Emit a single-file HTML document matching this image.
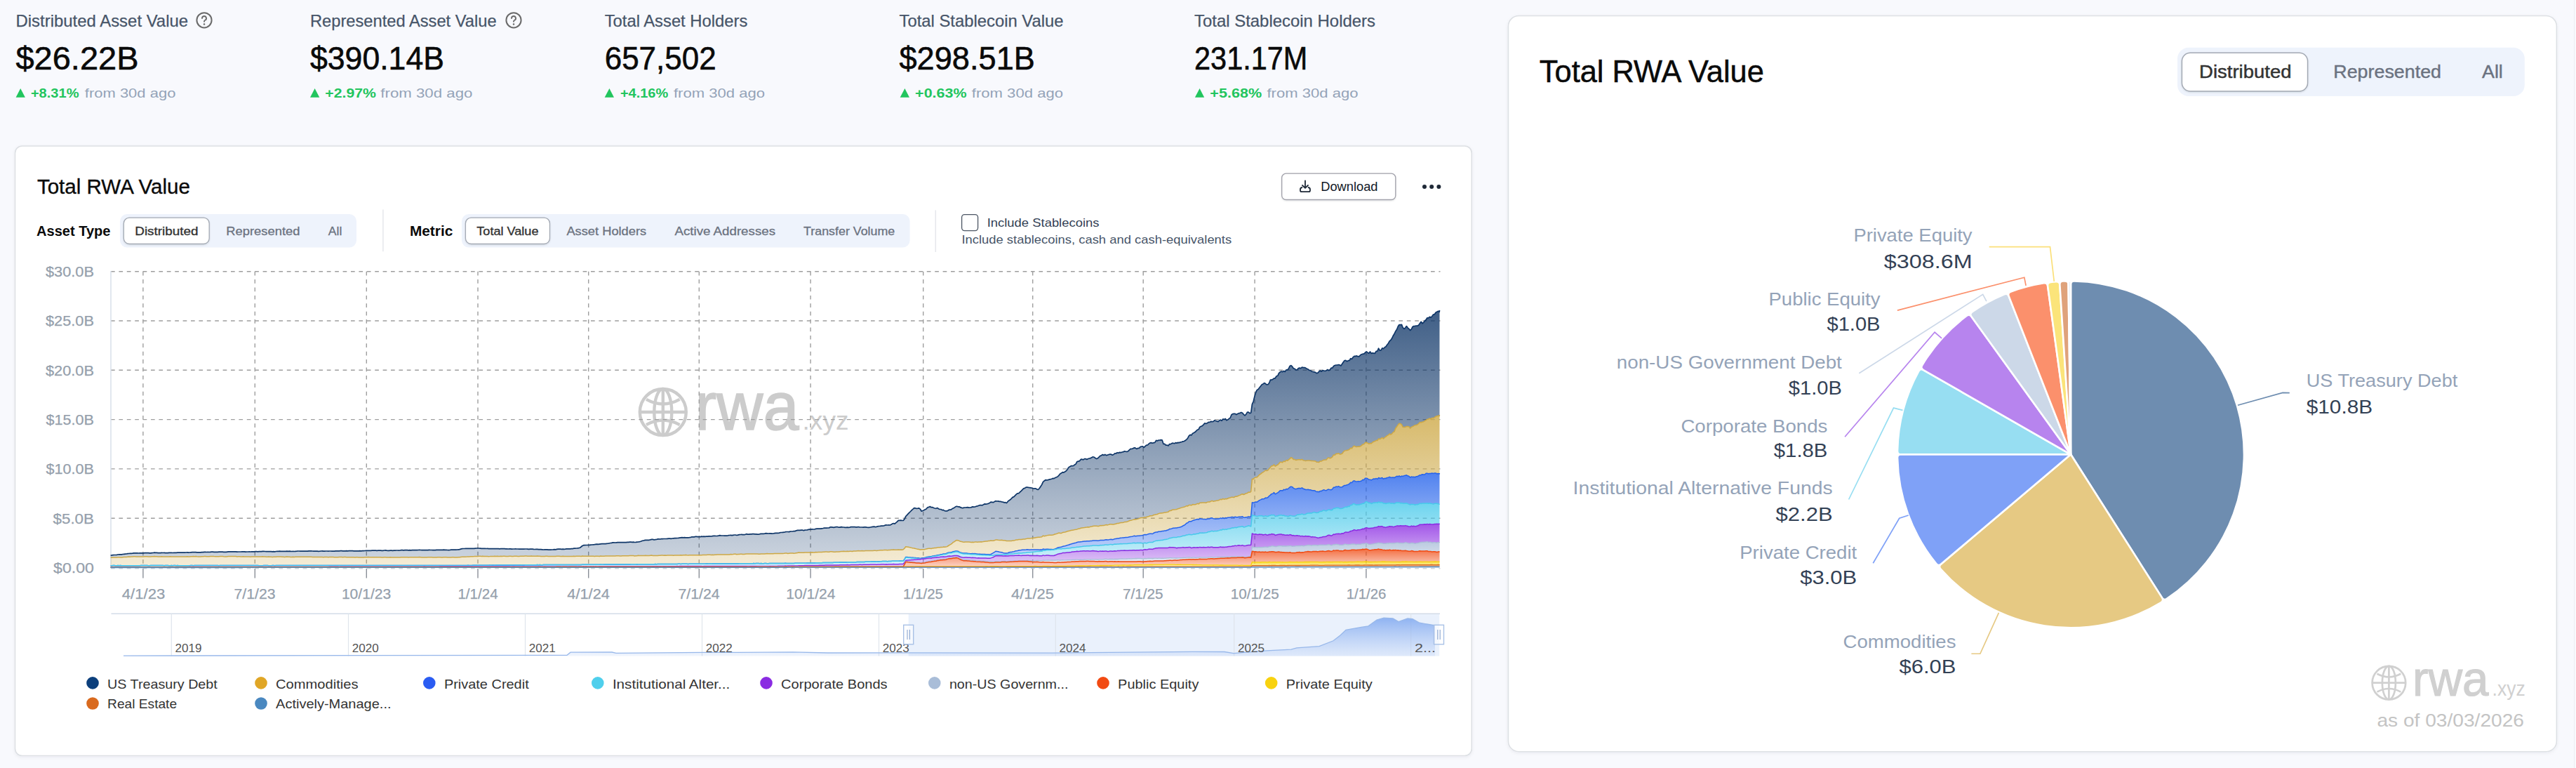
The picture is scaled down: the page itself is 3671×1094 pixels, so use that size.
<!DOCTYPE html>
<html><head><meta charset="utf-8"><title>RWA</title>
<style>html,body{margin:0;padding:0;background:#f8f9fd;overflow:hidden;}
svg{display:block;font-family:"Liberation Sans", sans-serif;}</style></head>
<body><svg width="3671" height="1094" viewBox="0 0 3671 1094">
<rect x="0" y="0" width="3671" height="1094" fill="#f8f9fd"/>
<text x="22.5" y="37.7" font-size="24" fill="#475569" text-anchor="start" font-weight="normal" textLength="245.6" lengthAdjust="spacingAndGlyphs" stroke="#475569" stroke-width="0.25">Distributed Asset Value</text>
<text x="22.5" y="98.6" font-size="46" fill="#0a0a0a" text-anchor="start" font-weight="normal" textLength="175.0" lengthAdjust="spacingAndGlyphs" stroke="#0a0a0a" stroke-width="0.6">$26.22B</text>
<path d="M22.6,138.8 L35.9,138.8 L29.2,125.9 Z" fill="#22c55e"/>
<text x="43.9" y="138.8" font-size="18.5" fill="#22c55e" text-anchor="start" font-weight="bold" textLength="68.6" lengthAdjust="spacingAndGlyphs" >+8.31%</text>
<text x="120.8" y="138.8" font-size="18.5" fill="#94a3b8" text-anchor="start" font-weight="normal" textLength="129.6" lengthAdjust="spacingAndGlyphs" >from 30d ago</text>
<circle cx="291.0" cy="28.8" r="10.6" fill="none" stroke="#6b6b6b" stroke-width="2"/>
<path d="M288.0,26.0 a3.0,3.0 0 1 1 4.2,2.75 c-0.9,0.5 -1.2,1.1 -1.2,2.0" fill="none" stroke="#6b6b6b" stroke-width="1.9" stroke-linecap="round"/>
<circle cx="291.0" cy="34.4" r="1.25" fill="#6b6b6b"/>
<text x="442.0" y="37.7" font-size="24" fill="#475569" text-anchor="start" font-weight="normal" textLength="265.6" lengthAdjust="spacingAndGlyphs" stroke="#475569" stroke-width="0.25">Represented Asset Value</text>
<text x="442.0" y="98.6" font-size="46" fill="#0a0a0a" text-anchor="start" font-weight="normal" textLength="191.0" lengthAdjust="spacingAndGlyphs" stroke="#0a0a0a" stroke-width="0.6">$390.14B</text>
<path d="M442.0,138.8 L455.3,138.8 L448.6,125.9 Z" fill="#22c55e"/>
<text x="463.3" y="138.8" font-size="18.5" fill="#22c55e" text-anchor="start" font-weight="bold" textLength="72.6" lengthAdjust="spacingAndGlyphs" >+2.97%</text>
<text x="542.3" y="138.8" font-size="18.5" fill="#94a3b8" text-anchor="start" font-weight="normal" textLength="131.1" lengthAdjust="spacingAndGlyphs" >from 30d ago</text>
<circle cx="732" cy="28.8" r="10.6" fill="none" stroke="#6b6b6b" stroke-width="2"/>
<path d="M729.0,26.0 a3.0,3.0 0 1 1 4.2,2.75 c-0.9,0.5 -1.2,1.1 -1.2,2.0" fill="none" stroke="#6b6b6b" stroke-width="1.9" stroke-linecap="round"/>
<circle cx="732" cy="34.4" r="1.25" fill="#6b6b6b"/>
<text x="861.7" y="37.7" font-size="24" fill="#475569" text-anchor="start" font-weight="normal" textLength="203.6" lengthAdjust="spacingAndGlyphs" stroke="#475569" stroke-width="0.25">Total Asset Holders</text>
<text x="861.7" y="98.6" font-size="46" fill="#0a0a0a" text-anchor="start" font-weight="normal" textLength="159.0" lengthAdjust="spacingAndGlyphs" stroke="#0a0a0a" stroke-width="0.6">657,502</text>
<path d="M861.7,138.8 L875.0,138.8 L868.4,125.9 Z" fill="#22c55e"/>
<text x="883.9" y="138.8" font-size="18.5" fill="#22c55e" text-anchor="start" font-weight="bold" textLength="68.3" lengthAdjust="spacingAndGlyphs" >+4.16%</text>
<text x="959.9" y="138.8" font-size="18.5" fill="#94a3b8" text-anchor="start" font-weight="normal" textLength="130.2" lengthAdjust="spacingAndGlyphs" >from 30d ago</text>
<text x="1281.5" y="37.7" font-size="24" fill="#475569" text-anchor="start" font-weight="normal" textLength="234.0" lengthAdjust="spacingAndGlyphs" stroke="#475569" stroke-width="0.25">Total Stablecoin Value</text>
<text x="1281.5" y="98.6" font-size="46" fill="#0a0a0a" text-anchor="start" font-weight="normal" textLength="193.4" lengthAdjust="spacingAndGlyphs" stroke="#0a0a0a" stroke-width="0.6">$298.51B</text>
<path d="M1282.7,138.8 L1296.0,138.8 L1289.4,125.9 Z" fill="#22c55e"/>
<text x="1304.1" y="138.8" font-size="18.5" fill="#22c55e" text-anchor="start" font-weight="bold" textLength="73.4" lengthAdjust="spacingAndGlyphs" >+0.63%</text>
<text x="1384.8" y="138.8" font-size="18.5" fill="#94a3b8" text-anchor="start" font-weight="normal" textLength="130.2" lengthAdjust="spacingAndGlyphs" >from 30d ago</text>
<text x="1702.0" y="37.7" font-size="24" fill="#475569" text-anchor="start" font-weight="normal" textLength="258.0" lengthAdjust="spacingAndGlyphs" stroke="#475569" stroke-width="0.25">Total Stablecoin Holders</text>
<text x="1702.0" y="98.6" font-size="46" fill="#0a0a0a" text-anchor="start" font-weight="normal" textLength="161.4" lengthAdjust="spacingAndGlyphs" stroke="#0a0a0a" stroke-width="0.6">231.17M</text>
<path d="M1702.9,138.8 L1716.2,138.8 L1709.6,125.9 Z" fill="#22c55e"/>
<text x="1724.3" y="138.8" font-size="18.5" fill="#22c55e" text-anchor="start" font-weight="bold" textLength="73.8" lengthAdjust="spacingAndGlyphs" >+5.68%</text>
<text x="1805.4" y="138.8" font-size="18.5" fill="#94a3b8" text-anchor="start" font-weight="normal" textLength="130.2" lengthAdjust="spacingAndGlyphs" >from 30d ago</text>
<defs><filter id="csh" x="-5%" y="-5%" width="110%" height="110%"><feDropShadow dx="0" dy="1.5" stdDeviation="2" flood-color="#1e293b" flood-opacity="0.06"/></filter><filter id="bsh" x="-10%" y="-20%" width="120%" height="150%"><feDropShadow dx="0" dy="1" stdDeviation="1.2" flood-color="#1e293b" flood-opacity="0.12"/></filter></defs>
<rect x="21.5" y="208" width="2075.8" height="868.5" rx="10" fill="#ffffff" stroke="#dde0e4" stroke-width="1.6" filter="url(#csh)"/>
<rect x="2149.4" y="22.5" width="1494" height="1048.2" rx="15" fill="#ffffff" stroke="#dde0e4" stroke-width="1.6" filter="url(#csh)"/>
<line x1="3668.5" y1="0" x2="3668.5" y2="1094" stroke="#eceef2" stroke-width="1"/>
<text x="52.9" y="275.8" font-size="29.5" fill="#0a0a0a" text-anchor="start" font-weight="normal" textLength="218.0" lengthAdjust="spacingAndGlyphs" stroke="#0a0a0a" stroke-width="0.35">Total RWA Value</text>
<rect x="1826.7" y="247.2" width="162.1" height="37.3" rx="6" fill="#ffffff" stroke="#a1a1aa" stroke-width="1.3" filter="url(#bsh)"/>
<path d="M1860,257.4 L1860,267.6 M1856,264.0 L1860,267.9 L1864,264.0" fill="none" stroke="#1f2937" stroke-width="1.8" stroke-linecap="round" stroke-linejoin="round"/>
<path d="M1855.4,267.0 Q1853.0,267.5 1853.0,269.9 L1853.0,271.2 Q1853.0,273.2 1855.0,273.2 L1865.0,273.2 Q1867.0,273.2 1867.0,271.2 L1867.0,269.9 Q1867.0,267.5 1864.6,267.0" fill="none" stroke="#1f2937" stroke-width="1.8" stroke-linecap="round" stroke-linejoin="round"/>
<text x="1882.2" y="271.9" font-size="18" fill="#111827" text-anchor="start" font-weight="normal" textLength="81.3" lengthAdjust="spacingAndGlyphs" >Download</text>
<circle cx="2030.0" cy="266.1" r="3" fill="#1f2937"/>
<circle cx="2040.2" cy="266.1" r="3" fill="#1f2937"/>
<circle cx="2050.4" cy="266.1" r="3" fill="#1f2937"/>
<text x="52.0" y="335.7" font-size="20" fill="#0a0a0a" text-anchor="start" font-weight="bold" textLength="105.5" lengthAdjust="spacingAndGlyphs" >Asset Type</text>
<rect x="171" y="305" width="337" height="47.5" rx="10" fill="#eef3fc"/>
<rect x="176.3" y="310.2" width="121.9" height="37.3" rx="8" fill="#ffffff" stroke="#a3a9b3" stroke-width="1.3" filter="url(#bsh)"/>
<text x="192.3" y="334.6" font-size="17.2" fill="#333333" text-anchor="start" font-weight="normal" textLength="90.1" lengthAdjust="spacingAndGlyphs" stroke="#333333" stroke-width="0.35">Distributed</text>
<text x="322.3" y="334.6" font-size="17.2" fill="#6b7280" text-anchor="start" font-weight="normal" textLength="105.1" lengthAdjust="spacingAndGlyphs" stroke="#6b7280" stroke-width="0.3">Represented</text>
<text x="467.8" y="334.6" font-size="17.2" fill="#6b7280" text-anchor="start" font-weight="normal" textLength="19.5" lengthAdjust="spacingAndGlyphs" stroke="#6b7280" stroke-width="0.3">All</text>
<line x1="545.9" y1="298.5" x2="545.9" y2="358.3" stroke="#e5e7eb" stroke-width="1.5"/>
<text x="583.9" y="335.7" font-size="20" fill="#0a0a0a" text-anchor="start" font-weight="bold" textLength="61.4" lengthAdjust="spacingAndGlyphs" >Metric</text>
<rect x="658" y="305" width="638.6" height="47.5" rx="10" fill="#eef3fc"/>
<rect x="663.4" y="310.2" width="120.1" height="37.3" rx="8" fill="#ffffff" stroke="#a3a9b3" stroke-width="1.3" filter="url(#bsh)"/>
<text x="679.3" y="334.6" font-size="17.2" fill="#333333" text-anchor="start" font-weight="normal" textLength="88.2" lengthAdjust="spacingAndGlyphs" stroke="#333333" stroke-width="0.35">Total Value</text>
<text x="807.4" y="334.6" font-size="17.2" fill="#6b7280" text-anchor="start" font-weight="normal" textLength="113.8" lengthAdjust="spacingAndGlyphs" stroke="#6b7280" stroke-width="0.3">Asset Holders</text>
<text x="961.5" y="334.6" font-size="17.2" fill="#6b7280" text-anchor="start" font-weight="normal" textLength="143.5" lengthAdjust="spacingAndGlyphs" stroke="#6b7280" stroke-width="0.3">Active Addresses</text>
<text x="1145.1" y="334.6" font-size="17.2" fill="#6b7280" text-anchor="start" font-weight="normal" textLength="130.2" lengthAdjust="spacingAndGlyphs" stroke="#6b7280" stroke-width="0.3">Transfer Volume</text>
<line x1="1333.3" y1="299.4" x2="1333.3" y2="359" stroke="#e5e7eb" stroke-width="1.5"/>
<rect x="1370.6" y="305.6" width="23" height="23" rx="4" fill="#ffffff" stroke="#4b5563" stroke-width="1.3"/>
<text x="1406.7" y="322.6" font-size="17" fill="#334155" text-anchor="start" font-weight="normal" textLength="159.8" lengthAdjust="spacingAndGlyphs" >Include Stablecoins</text>
<text x="1370.4" y="346.7" font-size="17" fill="#475569" text-anchor="start" font-weight="normal" textLength="384.8" lengthAdjust="spacingAndGlyphs" >Include stablecoins, cash and cash-equivalents</text>
<defs><linearGradient id="g0" x1="0" y1="0" x2="0" y2="1"><stop offset="0" stop-color="#0f3668" stop-opacity="0.8"/><stop offset="1" stop-color="#0f3668" stop-opacity="0.22"/></linearGradient><linearGradient id="g1" x1="0" y1="0" x2="0" y2="1"><stop offset="0" stop-color="#cda845" stop-opacity="0.8"/><stop offset="1" stop-color="#cda845" stop-opacity="0.22"/></linearGradient><linearGradient id="g2" x1="0" y1="0" x2="0" y2="1"><stop offset="0" stop-color="#2563eb" stop-opacity="0.8"/><stop offset="1" stop-color="#2563eb" stop-opacity="0.22"/></linearGradient><linearGradient id="g3" x1="0" y1="0" x2="0" y2="1"><stop offset="0" stop-color="#47c9ea" stop-opacity="0.8"/><stop offset="1" stop-color="#47c9ea" stop-opacity="0.22"/></linearGradient><linearGradient id="g4" x1="0" y1="0" x2="0" y2="1"><stop offset="0" stop-color="#8a2be2" stop-opacity="0.8"/><stop offset="1" stop-color="#8a2be2" stop-opacity="0.22"/></linearGradient><linearGradient id="g5" x1="0" y1="0" x2="0" y2="1"><stop offset="0" stop-color="#a9bdd8" stop-opacity="0.8"/><stop offset="1" stop-color="#a9bdd8" stop-opacity="0.22"/></linearGradient><linearGradient id="g6" x1="0" y1="0" x2="0" y2="1"><stop offset="0" stop-color="#f04a12" stop-opacity="0.8"/><stop offset="1" stop-color="#f04a12" stop-opacity="0.22"/></linearGradient><linearGradient id="g7" x1="0" y1="0" x2="0" y2="1"><stop offset="0" stop-color="#f6d20f" stop-opacity="0.8"/><stop offset="1" stop-color="#f6d20f" stop-opacity="0.22"/></linearGradient><linearGradient id="g8" x1="0" y1="0" x2="0" y2="1"><stop offset="0" stop-color="#d96a1e" stop-opacity="0.8"/><stop offset="1" stop-color="#d96a1e" stop-opacity="0.22"/></linearGradient><linearGradient id="g9" x1="0" y1="0" x2="0" y2="1"><stop offset="0" stop-color="#4a88c0" stop-opacity="0.8"/><stop offset="1" stop-color="#4a88c0" stop-opacity="0.22"/></linearGradient><linearGradient id="navg" x1="0" y1="0" x2="0" y2="1"><stop offset="0" stop-color="#7fa8f0" stop-opacity="0.85"/><stop offset="1" stop-color="#9dbcf2" stop-opacity="0.15"/></linearGradient></defs>
<g fill="none" stroke="#cccccc" stroke-width="4.40"><circle cx="944.8" cy="587.0" r="33.0"/><ellipse cx="944.8" cy="587.0" rx="12.5" ry="33.0"/><line x1="944.8" y1="554.0" x2="944.8" y2="620.0"/><line x1="911.8" y1="587.0" x2="977.8" y2="587.0"/><path d="M921.0,568.9 Q944.8,582.0 968.6,568.9"/><path d="M921.0,605.1 Q944.8,592.0 968.6,605.1"/></g>
<text x="990.5" y="611.7" font-size="96" fill="#cccccc" text-anchor="start" font-weight="normal" textLength="148.0" lengthAdjust="spacingAndGlyphs" stroke="#cccccc" stroke-width="1.6">rwa</text>
<text x="1143.5" y="611.7" font-size="37" fill="#cccccc" text-anchor="start" font-weight="normal" textLength="66.0" lengthAdjust="spacingAndGlyphs" >.xyz</text>
<line x1="158" y1="809.7" x2="2052.5" y2="809.7" stroke="#cfd3d8" stroke-width="1.4" stroke-dasharray="5.7,5.7"/>
<line x1="158" y1="738.2" x2="2052.5" y2="738.2" stroke="#9e9e9e" stroke-width="1.4" stroke-dasharray="5.7,5.7"/>
<line x1="158" y1="667.9" x2="2052.5" y2="667.9" stroke="#9e9e9e" stroke-width="1.4" stroke-dasharray="5.7,5.7"/>
<line x1="158" y1="597.6" x2="2052.5" y2="597.6" stroke="#9e9e9e" stroke-width="1.4" stroke-dasharray="5.7,5.7"/>
<line x1="158" y1="527.3" x2="2052.5" y2="527.3" stroke="#9e9e9e" stroke-width="1.4" stroke-dasharray="5.7,5.7"/>
<line x1="158" y1="457.0" x2="2052.5" y2="457.0" stroke="#9e9e9e" stroke-width="1.4" stroke-dasharray="5.7,5.7"/>
<line x1="158" y1="386.7" x2="2052.5" y2="386.7" stroke="#9e9e9e" stroke-width="1.4" stroke-dasharray="5.7,5.7"/>
<line x1="203.9" y1="386.7" x2="203.9" y2="809" stroke="#9e9e9e" stroke-width="1.4" stroke-dasharray="5.7,5.7"/>
<line x1="203.9" y1="810" x2="203.9" y2="823.5" stroke="#8a8f98" stroke-width="1.4"/>
<line x1="363.3" y1="386.7" x2="363.3" y2="809" stroke="#9e9e9e" stroke-width="1.4" stroke-dasharray="5.7,5.7"/>
<line x1="363.3" y1="810" x2="363.3" y2="823.5" stroke="#8a8f98" stroke-width="1.4"/>
<line x1="522.3" y1="386.7" x2="522.3" y2="809" stroke="#9e9e9e" stroke-width="1.4" stroke-dasharray="5.7,5.7"/>
<line x1="522.3" y1="810" x2="522.3" y2="823.5" stroke="#8a8f98" stroke-width="1.4"/>
<line x1="681.0" y1="386.7" x2="681.0" y2="809" stroke="#9e9e9e" stroke-width="1.4" stroke-dasharray="5.7,5.7"/>
<line x1="681.0" y1="810" x2="681.0" y2="823.5" stroke="#8a8f98" stroke-width="1.4"/>
<line x1="838.7" y1="386.7" x2="838.7" y2="809" stroke="#9e9e9e" stroke-width="1.4" stroke-dasharray="5.7,5.7"/>
<line x1="838.7" y1="810" x2="838.7" y2="823.5" stroke="#8a8f98" stroke-width="1.4"/>
<line x1="996.3" y1="386.7" x2="996.3" y2="809" stroke="#9e9e9e" stroke-width="1.4" stroke-dasharray="5.7,5.7"/>
<line x1="996.3" y1="810" x2="996.3" y2="823.5" stroke="#8a8f98" stroke-width="1.4"/>
<line x1="1155.1" y1="386.7" x2="1155.1" y2="809" stroke="#9e9e9e" stroke-width="1.4" stroke-dasharray="5.7,5.7"/>
<line x1="1155.1" y1="810" x2="1155.1" y2="823.5" stroke="#8a8f98" stroke-width="1.4"/>
<line x1="1315.7" y1="386.7" x2="1315.7" y2="809" stroke="#9e9e9e" stroke-width="1.4" stroke-dasharray="5.7,5.7"/>
<line x1="1315.7" y1="810" x2="1315.7" y2="823.5" stroke="#8a8f98" stroke-width="1.4"/>
<line x1="1471.7" y1="386.7" x2="1471.7" y2="809" stroke="#9e9e9e" stroke-width="1.4" stroke-dasharray="5.7,5.7"/>
<line x1="1471.7" y1="810" x2="1471.7" y2="823.5" stroke="#8a8f98" stroke-width="1.4"/>
<line x1="1629.2" y1="386.7" x2="1629.2" y2="809" stroke="#9e9e9e" stroke-width="1.4" stroke-dasharray="5.7,5.7"/>
<line x1="1629.2" y1="810" x2="1629.2" y2="823.5" stroke="#8a8f98" stroke-width="1.4"/>
<line x1="1788.1" y1="386.7" x2="1788.1" y2="809" stroke="#9e9e9e" stroke-width="1.4" stroke-dasharray="5.7,5.7"/>
<line x1="1788.1" y1="810" x2="1788.1" y2="823.5" stroke="#8a8f98" stroke-width="1.4"/>
<line x1="1946.9" y1="386.7" x2="1946.9" y2="809" stroke="#9e9e9e" stroke-width="1.4" stroke-dasharray="5.7,5.7"/>
<line x1="1946.9" y1="810" x2="1946.9" y2="823.5" stroke="#8a8f98" stroke-width="1.4"/>
<line x1="158" y1="386" x2="158" y2="809" stroke="#d5dde8" stroke-width="1.4"/>
<path d="M157.7,791.1l1.7-.2 1.8-.3 1.7-.1 1.7,0 1.8-.2 1.7-.3 1.7-.1 1.8,0 1.7,0 1.7-.4 1.8-.2 1.7-.2 1.7-.1 1.8-.3 1.7-.2 1.7-.1 1.8-.1 1.7-.2 1.7-.3 1.7,0 1.8,.1 1.7,0 1.7,.1 1.8-.1 1.7,0 1.7,0 1.8-.1 1.7-.1 1.7-.1 1.8,.1 1.7,0 1.7,.1 1.8,0 1.7-.2 1.7-.1 1.8-.3 1.7,.1 1.7,.1 1.8,.2 1.7-.1 1.7,.2 1.8-.3 1.7,.1 1.7-.1 1.8,.2 1.7-.1 1.7,.1 1.8-.3 1.7,0 1.7,0 1.8,.2 1.7-.2 1.7,0 1.7,0 1.8-.1 1.7,0 1.7,0 1.8,0 1.7,0 1.7,0 1.8,0 1.7-.2 1.7-.1 1.8,.2 1.7-.1 1.7-.2 1.8-.1 1.7,0 1.7,0 1.8,0 1.7,.2 1.7,0 1.8,0 1.7,0 1.7-.2 1.8-.1 1.7-.2 1.7,0 1.8,.1 1.7-.1 1.7,.1 1.8-.2 1.7-.2 1.7,0 1.8,.2 1.7,0 1.7,.1 1.8-.1 1.7-.1 1.7-.1 1.7,0 1.8,0 1.7,.2 1.7,.1 1.8-.1 1.7-.2 1.7-.2 1.8,0 1.7,0 1.7,0 1.8,0 1.7-.1 1.7,0 1.8,.3 1.7-.1 1.7,0 1.8,0 1.7-.1 1.7,0 1.8,0 1.7,.2 1.7-.1 1.8,0 1.7-.1 1.7,.1 1.8-.2 1.7,0 1.7,0 1.8-.1 1.7,0 1.7,.1 1.8-.1 1.7,0 1.7,0 1.7-.4 1.8,.1 1.7,.1 1.7,.2 1.8-.1 1.7-.1 1.7,.1 1.8,.1 1.7,.2 1.7-.2 1.8,.1 1.7-.3 1.7-.1 1.8-.1 1.7-.1 1.7,.1 1.8,.1 1.7,0 1.7,0 1.8-.1 1.7-.1 1.7,.2 1.8-.2 1.7,.1 1.7,.2 1.8-.2 1.7,.2 1.7-.2 1.8-.1 1.7-.2 1.7,0 1.8,.1 1.7,.1 1.7-.1 1.8,0 1.7,0 1.7,0 1.7,.1 1.8-.4 1.7,.1 1.7,0 1.8,.1 1.7,.2 1.7-.1 1.8,.1 1.7,0 1.7,.1 1.8-.1 1.7-.2 1.7-.1 1.8,.3 1.7-.1 1.7-.1 1.8,0 1.7,.1 1.7-.1 1.8,0 1.7,.1 1.7-.1 1.8,.1 1.7-.2 1.7-.1 1.8,.1 1.7-.1 1.7-.1 1.8,0 1.7,.2 1.7-.1 1.8,0 1.7-.1 1.7,.1 1.8-.1 1.7-.1 1.7,.1 1.7,0 1.8,.1 1.7,0 1.7,0 1.8,.1 1.7-.1 1.7-.1 1.8,.1 1.7-.2 1.7,.1 1.8-.2 1.7-.2 1.7,.1 1.8,0 1.7-.1 1.7,0 1.8-.1 1.7,0 1.7,0 1.8-.1 1.7,.2 1.7-.1 1.8-.1 1.7,.1 1.7,.1 1.8,0 1.7-.3 1.7-.1 1.8,.3 1.7,.2 1.7-.1 1.8-.2 1.7,0 1.7,.2 1.7-.2 1.8,0 1.7-.1 1.7,0 1.8,.1 1.7-.1 1.7-.3 1.8,0 1.7,.1 1.7-.2 1.8,.1 1.7,0 1.7,.1 1.8-.1 1.7,.1 1.7-.1 1.8-.1 1.7-.1 1.7,.1 1.8,0 1.7-.1 1.7-.1 1.8,.1 1.7,.1 1.7,0 1.8,.1 1.7,0 1.7,0 1.8-.1 1.7-.2 1.7,.1 1.8,0 1.7,.2 1.7,0 1.8-.1 1.7-.2 1.7-.1 1.7,.1 1.8-.1 1.7,.1 1.7-.1 1.8-.1 1.7,.1 1.7,0 1.8,.2 1.7,.2 1.7-.2 1.8-.3 1.7-.1 1.7,0 1.8,.1 1.7,0 1.7-.2 1.8-.2 1.7-.2 1.7-.5 1.8-.4 1.7-.2 1.7,0 1.8-.1 1.7,0 1.7-.1 1.8,.1 1.7-.1 1.7,.1 1.8,0 1.7,0 1.7-.2 1.8-.2 1.7-.1 1.7,.1 1.7,.2 1.8,.2 1.7-.1 1.7,0 1.8,0 1.7,.2 1.7-.1 1.8,.2 1.7,.1 1.7-.1 1.8,0 1.7,.1 1.7-.2 1.8,.1 1.7-.1 1.7,.2 1.8,.2 1.7-.4 1.7,.2 1.8-.1 1.7,.1 1.7,.2 1.8,0 1.7,.1 1.7-.2 1.8,.1 1.7,.2 1.7-.1 1.8,0 1.7-.1 1.7,.1 1.8,0 1.7,.2 1.7,0 1.8-.1 1.7,0 1.7,0 1.7-.1 1.8,0 1.7,.2 1.7,.2 1.8-.2 1.7-.2 1.7,.2 1.8,.2 1.7,.1 1.7-.1 1.8,0 1.7,.2 1.7,0 1.8,.1 1.7,.1 1.7,.2 1.8-.1 1.7,0 1.7,0 1.8,.3 1.7,0 1.7,0 1.8-.2 1.7-.1 1.7-.2 1.8,.1 1.7-.4 1.7-.2 1.8,0 1.7,0 1.7,.1 1.8-.1 1.7,.1 1.7-.1 1.7-.3 1.8-.1 1.7,0 1.7,0 1.8-.1 1.7,0 1.7-.6 1.8,.1 1.7-.2 1.7-.1 1.8-.2 1.7-.5 1.7-1.2 1.8-1.5 1.7-.8 1.7-.1 1.8-.1 1.7,0 1.7-.1 1.8,0 1.7-.3 1.7-.1 1.8-.2 1.7-.1 1.7-.3 1.8-.2 1.7,.2 1.7-.3 1.8-.2 1.7-.2 1.7,0 1.8-.1 1.7,0 1.7-.3 1.8-.1 1.7-.2 1.7-.5 1.7-.1 1.8-.5 1.7,0 1.7,.1 1.8-.2 1.7-.2 1.7,0 1.8,0 1.7,0 1.7,.1 1.8-.2 1.7,.1 1.7,.1 1.8-.3 1.7-.1 1.7-.2 1.8,.1 1.7,.1 1.7-.1 1.8,.3 1.7-.1 1.7-.2 1.8-.2 1.7-.3 1.7-.5 1.8-.7 1.7-.3 1.7-.5 1.8-.3 1.7,0 1.7,0 1.8-.1 1.7-.5 1.7-.4 1.8,0 1.7,.6 1.7-.4 1.7-.1 1.8-.6 1.7-.1 1.7,.2 1.8-.3 1.7,0 1.7-.2 1.8,0 1.7,0 1.7-.2 1.8-.2 1.7,.1 1.7,.1 1.8-.3 1.7-.2 1.7-.1 1.8,0 1.7-.2 1.7-.1 1.8-.3 1.7-.2 1.7-.2 1.8,.1 1.7-.1 1.7,.1 1.8,0 1.7,0 1.7-.1 1.8-.2 1.7-.7 1.7,.1 1.8-.1 1.7-.4 1.7-.1 1.7,.4 1.8-.2 1.7,.2 1.7-.6 1.8,.2 1.7-.1 1.7,.1 1.8-.2 1.7,0 1.7-.2 1.8-.1 1.7,.2 1.7-.4 1.8-.2 1.7,0 1.7,.1 1.8-.1 1.7-.3 1.7-.4 1.8,.2 1.7,.1 1.7,0 1.8,.1 1.7,0 1.7,.1 1.8-.5 1.7-.2 1.7-.2 1.8,.4 1.7-.4 1.7-.3 1.8,0 1.7,.5 1.7-.4 1.8-.4 1.7-.2 1.7-.1 1.7,.3 1.8-.1 1.7-.3 1.7-.6 1.8,.4 1.7,0 1.7-.3 1.8,.1 1.7-.3 1.7,.1 1.8,.1 1.7,0 1.7,.3 1.8,.1 1.7-.5 1.7-.4 1.8,0 1.7,0 1.7-.2 1.8-.4 1.7,.1 1.7,.2 1.8-.2 1.7,.1 1.7,.3 1.8-.2 1.7-.3 1.7-.3 1.8,0 1.7-.1 1.7-.2 1.8-.6 1.7,0 1.7-.2 1.7-.1 1.8-.5 1.7-.2 1.7,0 1.8,.1 1.7-.5 1.7-.1 1.8,0 1.7-.5 1.7,.1 1.8-.8 1.7-.4 1.7,0 1.8,0 1.7-.2 1.7-.2 1.8,.7 1.7-.6 1.7-.1 1.8-.1 1.7-.6 1.7-.2 1.8,0 1.7-.3 1.7,.2 1.8,0 1.7-.7 1.7-.1 1.8,0 1.7-.2 1.7,.1 1.8-.3 1.7-.3 1.7-.4 1.8-.1 1.7,.1 1.7-.1 1.7,0 1.8-1.2 1.7,0 1.7,.3 1.8,.3 1.7-.6 1.7-.3 1.8,.2 1.7,.5 1.7-.1 1.8-.4 1.7,.2 1.7,.1 1.8,.4 1.7,0 1.7-.3 1.8,.2 1.7-.2 1.7-.6 1.8,.1 1.7,.1 1.7,0 1.8,.1 1.7,0 1.7-.3 1.8,.3 1.7,.2 1.7,0 1.8,.2 1.7-.3 1.7-.1 1.8,.4 1.7,.1 1.7,0 1.8-.3 1.7-.3 1.7-.4 1.7-.1 1.8,.4 1.7-.2 1.7-.6 1.8-.3 1.7-.1 1.7-.3 1.8,0 1.7-.1 1.7-.8 1.8-.3 1.7,.1 1.7-.1 1.8,.1 1.7-.8 1.7-1.1 1.8-.6 1.7,.6 1.7-1.4 1.8-1.5 1.7-1.8 1.7-.1 1.8-.1 1.7,.3 1.7,0 1.8-2.1 1.7-3.7 1.7-1.8 1.8-2 1.7-1.8 1.7-1.6 1.8-1.9 1.7-1.4 1.7-1.5 1.7,.1 1.8,.7 1.7-.3 1.7-.4 1.8,1.5 1.7,2.9 1.7-.7 1.8-.8 1.7-1 1.7-.8 1.8-2.1 1.7-.4 1.7-.9 1.8,1.2 1.7-.1 1.7,.9 1.8,.5 1.7,.3 1.7-.8 1.8,1.2 1.7,.8 1.7,0 1.8,1.1 1.7-.2 1.7,1.2 1.8,.2 1.7,.1 1.7-1 1.8-.8 1.7,.1 1.7-1.1 1.8-1 1.7-.9 1.7-1.4 1.8-.6 1.7,.6 1.7,.1 1.7,.7 1.8,.8 1.7,.2 1.7-.4 1.8-.2 1.7-.2 1.7-.1 1.8,.4 1.7-.1 1.7-.4 1.8-.7 1.7,.3 1.7-.2 1.8-.8 1.7-.3 1.7-.7 1.8-.6 1.7-.1 1.7,.3 1.8-1 1.7-1 1.7,.4 1.8-.5 1.7-.4 1.7-.9 1.8-1.2 1.7,.2 1.7,.3 1.8-1.1 1.7-.9 1.7,.3 1.8-.1 1.7,.5 1.7-.1 1.7,.6 1.8,.2 1.7,.8 1.7-.2 1.8,.9 1.7-2.2 1.7-1.5 1.8-1.1 1.7-1.6 1.7-1.8 1.8-.8 1.7-1.7 1.7-1.8 1.8-1.3 1.7-.1 1.7-1.7 1.8-1.6 1.7-1.8 1.7-1.8 1.8-.4 1.7-1.3 1.7-.1 1.8,.4 1.7,.2 1.7,.2 1.8,.5 1.7,.7 1.7-.1 1.8,0 1.7,1.2 1.7,.4 1.8-2 1.7-2.5 1.7-2.6 1.8-4.1 1.7-1.3 1.7-1.3 1.7,.1 1.8-.2 1.7-.5 1.7-.4 1.8-.5 1.7-.8 1.7,.2 1.8-1.1 1.7-.7 1.7-.8 1.8-1.8 1.7-2.2 1.7-.9 1.8-1.4 1.7,.4 1.7-1.2 1.8-1.1 1.7-2.1 1.7-2.8 1.8-1.2 1.7-1 1.7,0 1.8-.2 1.7-1.6 1.7-1 1.8-3.4 1.7-.4 1.7-.4 1.8-2.3 1.7-.2 1.7,.7 1.8-1.3 1.7,0 1.7,.8 1.7-.9 1.8-.5 1.7-.3 1.7-1 1.8-.9 1.7,.5 1.7,1.2 1.8,1.1 1.7-.8 1.7-1.7 1.8-1.7 1.7-.7 1.7-1.2 1.8,.9 1.7-1 1.7,1.2 1.8-.4 1.7-.7 1.7-.4 1.8,.1 1.7,1 1.7-.7 1.8-1.7 1.7,.2 1.7-1.3 1.8,.6 1.7-1 1.7,.4 1.8-.7 1.7-.3 1.7-1 1.8,.5 1.7,.3 1.7-.8 1.8-1.9 1.7-1.5 1.7,.2 1.7-.8 1.8-.8 1.7,.3 1.7,1.2 1.8-1 1.7,.1 1.7-1.9 1.8-.6 1.7-.2 1.7,1.6 1.8-1.7 1.7-1.5 1.7-.2 1.8-1.9 1.7-1.2 1.7-.3 1.8,.6 1.7-.6 1.7-.2 1.8-3 1.7,.5 1.7-.9 1.8-.1 1.7-.2 1.7,.2 1.8,5.6 1.7-.1 1.7,1.7 1.8-.1 1.7,.9 1.7-2.3 1.8,0 1.7-1.3 1.7-.1 1.8,.5 1.7-1 1.7,.4 1.7-.7 1.8,.2 1.7-.8 1.7-.3 1.8-.6 1.7-.4 1.7-1 1.8-1.4 1.7-1.9 1.7-3.4 1.8-1.5 1.7,.7 1.7-2.6 1.8-.9 1.7-.9 1.7-1.8 1.8-1.6 1.7-.7 1.7-3.3 1.8-.9 1.7-.7 1.7-1.7 1.8-2 1.7,.6 1.7-.7 1.8-1.5 1.7,.2 1.7-1.1 1.8,.3 1.7-.2 1.7-1.7 1.8,.7 1.7,.3 1.7,.9 1.7-1.7 1.8-.9 1.7,1.2 1.7-2.4 1.8,.6 1.7-1 1.7,2.3 1.8-1 1.7-1.4 1.7-1.2 1.8-4.4 1.7-1.2 1.7-.2 1.8-.1 1.7,1.3 1.7-1 1.8-.9 1.7-.4 1.7-.9 1.8,.9 1.7,2.1 1.7,1.4 1.8-1.7 1.7-3 1.7,0 1.8,1.6 1.7-.7 1.7-12.1 1.8-4.1 1.7-7.1 1.7-5.7 1.8-3.6 1.7-.8 1.7-2.4 1.8-2.3 1.7-2.1 1.7-.9 1.7-1.3 1.8,1 1.7,1.3 1.7-.2 1.8-2.2 1.7-4.3 1.7,0 1.8-.9 1.7-1.4 1.7-.1 1.8-3 1.7-.5 1.7-3.6 1.8-1.8 1.7-.9 1.7,.7 1.8-1.3 1.7,1.1 1.7-2.6 1.8,0 1.7-1.8 1.7-3.7 1.8-.9 1.7,1.7 1.7,2.5 1.8,.7 1.7,1.5 1.7-.2 1.8-2.1 1.7-.4 1.7,.4 1.8-1.4 1.7,.4 1.7-.1 1.7,.6 1.8,1.1 1.7,.8 1.7,1.3 1.8,.4 1.7,1.4 1.7,.4 1.8,.4 1.7,.4 1.7,1.3 1.8-.5 1.7-1.9 1.7-1.2 1.8,1.2 1.7-1.6 1.7,.4 1.8,.5 1.7-.7 1.7-1.3 1.8,1.2 1.7-1 1.7-2.5 1.8,0 1.7-2.8 1.7-.9 1.8-.5 1.7,0 1.7-.5 1.8,.4 1.7,1.1 1.7-2.5 1.8-2.8 1.7-2.2 1.7-.1 1.8,1.3 1.7-1 1.7-.2 1.7-2.8 1.8,.7 1.7-2.6 1.7-1.4 1.8-.1 1.7-.4 1.7,.8 1.8,.1 1.7-1.9 1.7-1.1 1.8-.6 1.7-.1 1.7-1.9 1.8-1.4 1.7,1.4 1.7,1 1.8-2.3 1.7,2.5 1.7-.6 1.8,.3 1.7,.3 1.7-3 1.8-.3 1.7-3.9 1.7,2.9 1.8-.3 1.7-3 1.7,1 1.8-2 1.7-1.1 1.7-2.5 1.8-2.2 1.7-3.2 1.7-1.3 1.7-2.4 1.8-3.9 1.7-2.7 1.7-3.6 1.8-2.7 1.7-4.2 1.7-2.5 1.8,.1 1.7-.2 1.7,4.3 1.8,1.6 1.7-1.2 1.7-2.5 1.8,2.5 1.7,1.4 1.7,2 1.8-1.6 1.7-3.4 1.7-1 1.8-.1 1.7-.4 1.7,.2 1.8-1.2 1.7-2.4 1.7-2.3 1.8,2.4 1.7-1.3 1.7-2.4 1.8-1.5 1.7-2.7 1.7,0 1.8-1.5 1.7,.9 1.7-1.7 1.8-2.4 1.7-.4 1.7-2.4 1.7-1.1 1.8-.9 1.7,1 .3-2.5 0,149.2 -.3,1.5 -1.7-.2 -1.8,.4 -1.7,.6 -1.7,1.3 -1.7,1.1 -1.8-.4 -1.7,1.8 -1.7-1.2 -1.8,1.1 -1.7,.3 -1.7,1.2 -1.8,1.2 -1.7,1 -1.7,.3 -1.8,.7 -1.7-.3 -1.7,1.8 -1.8,1.6 -1.7,.8 -1.7,.1 -1.8,.9 -1.7,1 -1.7,.7 -1.8,1.9 -1.7-2.5 -1.7-.2 -1.8,0 -1.7,.7 -1.7,.4 -1.8-.3 -1.7-3.4 -1.7-1.3 -1.8-.3 -1.7,1.9 -1.7,2.6 -1.8,2.5 -1.7,4.5 -1.7,.8 -1.8,2.2 -1.7,1.2 -1.7-1 -1.7,1.7 -1.8,.9 -1.7,1.5 -1.7,1.1 -1.8,1.8 -1.7-1.7 -1.7,1.3 -1.8,.9 -1.7-.5 -1.7,2.5 -1.8-.2 -1.7,1.3 -1.7,.4 -1.8,1.1 -1.7,1.7 -1.7-.2 -1.8,.6 -1.7-1.1 -1.7-1 -1.8,.4 -1.7,2.2 -1.7,.2 -1.8,1.7 -1.7,1.2 -1.7,.5 -1.8-.3 -1.7,.4 -1.7-.2 -1.8-1 -1.7,1.2 -1.7,2.3 -1.8-.5 -1.7,2 -1.7,.9 -1.7,.3 -1.8,.4 -1.7,.3 -1.7,1.6 -1.8,2.6 -1.7,.6 -1.7,0 -1.8-1.2 -1.7,.7 -1.7-.1 -1.8,2.1 -1.7-.5 -1.7,3 -1.8,1.3 -1.7,.6 -1.7-1 -1.8,.9 -1.7,2.4 -1.7,0 -1.8,.1 -1.7,.6 -1.7,1.2 -1.8-.2 -1.7,1.8 -1.7-.3 -1.8,0 -1.7-1.6 -1.7,0 -1.8-.2 -1.7,0 -1.7-.3 -1.8-.2 -1.7-.1 -1.7,.2 -1.8,.4 -1.7-.6 -1.7-.2 -1.7-1.4 -1.8,.8 -1.7-.4 -1.7,0 -1.8,.4 -1.7,.3 -1.7-.8 -1.8-.2 -1.7-1.9 -1.7-.9 -1.8,1.8 -1.7,1.4 -1.7,1.4 -1.8-.8 -1.7,2.3 -1.7-.9 -1.8,2 -1.7-.5 -1.7,0 -1.8,2.2 -1.7,1.6 -1.7,.9 -1.8,1.2 -1.7-2.3 -1.7,1.6 -1.8,.3 -1.7,2 -1.7,1.8 -1.8,2.1 -1.7,.8 -1.7-.5 -1.8,1.5 -1.7,1.2 -1.7,1 -1.7,1.4 -1.8,1.1 -1.7,1.8 -1.7,1.8 -1.8,.2 -1.7,.6 -1.7,1.8 -1.8-.1 -1.7,18 -1.7,1 -1.8-.2 -1.7,1.3 -1.7,.3 -1.8,1.1 -1.7,.7 -1.7-.8 -1.8,.6 -1.7,1.1 -1.7,.5 -1.8,.9 -1.7,.5 -1.7,0 -1.8,1.3 -1.7-.3 -1.7,0 -1.8,.6 -1.7,.4 -1.7,.7 -1.8,.8 -1.7-.4 -1.7,.9 -1.8-.9 -1.7,1.3 -1.7-.5 -1.8,1 -1.7,.7 -1.7,0 -1.7,.7 -1.8,.2 -1.7,.4 -1.7-.9 -1.8,.8 -1.7,.9 -1.7-.1 -1.8,.5 -1.7,.8 -1.7-.2 -1.8,0 -1.7-.1 -1.7,.3 -1.8,.1 -1.7,1.6 -1.7-.6 -1.8,.9 -1.7,.6 -1.7,0 -1.8-.2 -1.7,1.2 -1.7-.4 -1.8,.1 -1.7,1.4 -1.7-.3 -1.8,1 -1.7,.7 -1.7,.3 -1.8,.5 -1.7,.5 -1.7,.7 -1.8,.4 -1.7,.9 -1.7,.2 -1.7,.1 -1.8,.2 -1.7,.4 -1.7,1 -1.8,.1 -1.7,1.6 -1.7,.2 -1.8,.7 -1.7-.2 -1.7,.6 -1.8,.2 -1.7,.3 -1.7,.1 -1.8,.5 -1.7,.9 -1.7,.2 -1.8,.5 -1.7,.2 -1.7,1.2 -1.8,.1 -1.7,.1 -1.7,.7 -1.8,.4 -1.7,.7 -1.7,.3 -1.8,.1 -1.7,.5 -1.7,.1 -1.8,.2 -1.7,.8 -1.7,.5 -1.8,.5 -1.7,.3 -1.7-.1 -1.8,.6 -1.7,.5 -1.7,.4 -1.7,.5 -1.8,.8 -1.7,.7 -1.7,.3 -1.8,0 -1.7,.6 -1.7,.4 -1.8,0 -1.7,.3 -1.7,.6 -1.8-.1 -1.7,.9 -1.7,.2 -1.8,.4 -1.7,.2 -1.7-.4 -1.8,.1 -1.7,.6 -1.7,.5 -1.8-.3 -1.7,.3 -1.7,.7 -1.8-.2 -1.7,.4 -1.7-.2 -1.8,.8 -1.7,.2 -1.7-.3 -1.8-.1 -1.7,0 -1.7,.3 -1.8,.5 -1.7,.3 -1.7,.6 -1.8-.1 -1.7,.3 -1.7,.1 -1.7,.3 -1.8,.2 -1.7,.2 -1.7,.4 -1.8,.8 -1.7,.2 -1.7,.6 -1.8,.3 -1.7,.2 -1.7,.7 -1.8,.2 -1.7,.2 -1.7,.5 -1.8,.4 -1.7,.4 -1.7,.8 -1.8,.4 -1.7,.3 -1.7,.3 -1.8,1 -1.7-.2 -1.7-.3 -1.8,.7 -1.7,.6 -1.7,.4 -1.8,.7 -1.7,.5 -1.7,.2 -1.8,.1 -1.7,0 -1.7,.1 -1.8,.5 -1.7,.4 -1.7,.4 -1.7-.6 -1.8,1.6 -1.7,.3 -1.7,.2 -1.8,0 -1.7,.3 -1.7,.3 -1.8,.4 -1.7,0 -1.7,.3 -1.8,.3 -1.7,.1 -1.7,0 -1.8,.2 -1.7,.5 -1.7,.3 -1.8,.2 -1.7,.2 -1.7,.3 -1.8-.1 -1.7,.1 -1.7,.3 -1.8,.2 -1.7,.3 -1.7,.7 -1.8,0 -1.7,.3 -1.7,.1 -1.8,.1 -1.7,0 -1.7-.2 -1.8-.4 -1.7-.2 -1.7,0 -1.8-.5 -1.7,.2 -1.7-.1 -1.7-.1 -1.8-.3 -1.7,.1 -1.7,.6 -1.8,.6 -1.7,0 -1.7-.2 -1.8,.3 -1.7,.2 -1.7,.3 -1.8,.1 -1.7,.2 -1.7,.2 -1.8,.5 -1.7-.2 -1.7,.3 -1.8,.1 -1.7,.2 -1.7-.2 -1.8-.2 -1.7,.7 -1.7-.4 -1.8,.2 -1.7-.2 -1.7-.1 -1.8-.1 -1.7,0 -1.7,0 -1.8,.2 -1.7-.3 -1.7-.4 -1.8-.3 -1.7-.8 -1.7-.6 -1.7-.3 -1.8,.8 -1.7,1.3 -1.7,.9 -1.8,1.8 -1.7,1.1 -1.7,.9 -1.8,1.2 -1.7,1.1 -1.7,.5 -1.8,.1 -1.7-.1 -1.7,.5 -1.8-.1 -1.7,.3 -1.7,0 -1.8,.1 -1.7,.7 -1.7-.1 -1.8,.2 -1.7,.2 -1.7,.6 -1.8-.2 -1.7,0 -1.7,.2 -1.8,.4 -1.7,.5 -1.7,.3 -1.8,0 -1.7,.1 -1.7,.2 -1.8-.4 -1.7-.4 -1.7-.3 -1.8-.5 -1.7-.4 -1.7-.2 -1.7-.4 -1.8-.5 -1.7-.3 -1.7-.4 -1.8-.3 -1.7-.2 -1.7,2.4 -1.8,1.7 -1.7,.5 -1.7-.2 -1.8,.2 -1.7-.2 -1.7,.2 -1.8-.1 -1.7,.1 -1.7-.4 -1.8,.3 -1.7,.1 -1.7,.3 -1.8,0 -1.7,.1 -1.7-.2 -1.8-.1 -1.7,.2 -1.7,.1 -1.8,0 -1.7,.1 -1.7,.3 -1.8,.1 -1.7,.3 -1.7-.2 -1.8,0 -1.7,.1 -1.7,.1 -1.7,.1 -1.8-.1 -1.7,0 -1.7,0 -1.8,.1 -1.7,.1 -1.7,0 -1.8-.1 -1.7,.1 -1.7,0 -1.8-.1 -1.7,.1 -1.7,.2 -1.8,0 -1.7,.1 -1.7,.5 -1.8-.2 -1.7-.1 -1.7,.2 -1.8-.2 -1.7,.2 -1.7,.1 -1.8-.2 -1.7,.1 -1.7,.1 -1.8,.2 -1.7,.2 -1.7,.1 -1.8,0 -1.7,.2 -1.7,0 -1.8-.2 -1.7-.2 -1.7,0 -1.8,.4 -1.7,.1 -1.7-.2 -1.7-.1 -1.8,.2 -1.7,.1 -1.7,.2 -1.8,0 -1.7,.1 -1.7,0 -1.8,.1 -1.7-.2 -1.7,.4 -1.8,0 -1.7-.2 -1.7,.3 -1.8,0 -1.7,.1 -1.7-.1 -1.8,.1 -1.7-.1 -1.7,.3 -1.8-.1 -1.7,.1 -1.7,0 -1.8-.2 -1.7,.3 -1.7,.3 -1.8,.4 -1.7,.1 -1.7-.2 -1.8,0 -1.7,0 -1.7,.2 -1.8,.2 -1.7-.3 -1.7,0 -1.8,.2 -1.7,.1 -1.7,0 -1.7,0 -1.8,0 -1.7,0 -1.7,.2 -1.8,0 -1.7-.1 -1.7,.2 -1.8,.1 -1.7,0 -1.7,0 -1.8-.1 -1.7-.1 -1.7,.1 -1.8,.3 -1.7,.1 -1.7,0 -1.8-.1 -1.7,.3 -1.7-.1 -1.8-.1 -1.7,0 -1.7,0 -1.8,0 -1.7-.1 -1.7,0 -1.8,.1 -1.7,0 -1.7,0 -1.8,0 -1.7,.1 -1.7,.2 -1.8,.1 -1.7-.2 -1.7,0 -1.7,.1 -1.8,.1 -1.7,.2 -1.7-.5 -1.8,.1 -1.7,.3 -1.7,.1 -1.8-.1 -1.7,.3 -1.7,.2 -1.8,0 -1.7-.2 -1.7,.1 -1.8-.1 -1.7,.1 -1.7,0 -1.8,.1 -1.7-.1 -1.7,0 -1.8,.2 -1.7,.1 -1.7,.1 -1.8-.1 -1.7,.1 -1.7-.1 -1.8,0 -1.7,0 -1.7,.1 -1.8,0 -1.7,.1 -1.7,.1 -1.8,.1 -1.7,.1 -1.7,0 -1.8-.1 -1.7,0 -1.7,.1 -1.7,0 -1.8-.1 -1.7,0 -1.7,0 -1.8,.1 -1.7,.1 -1.7-.1 -1.8-.2 -1.7,.2 -1.7,0 -1.8,.2 -1.7-.2 -1.7,.1 -1.8,.2 -1.7,0 -1.7-.1 -1.8,.1 -1.7,.1 -1.7-.1 -1.8,0 -1.7,0 -1.7-.1 -1.8,.1 -1.7,.1 -1.7-.1 -1.8,.1 -1.7-.1 -1.7,0 -1.8,.1 -1.7,.1 -1.7,.1 -1.8,0 -1.7,0 -1.7,.1 -1.7-.1 -1.8-.3 -1.7,.1 -1.7,.4 -1.8-.1 -1.7,0 -1.7-.2 -1.8,.1 -1.7,.1 -1.7-.1 -1.8,.1 -1.7,0 -1.7-.2 -1.8,.4 -1.7,0 -1.7,.2 -1.8-.4 -1.7,0 -1.7,.1 -1.8,0 -1.7,.1 -1.7,0 -1.8,.1 -1.7,0 -1.7-.1 -1.8,.1 -1.7,.1 -1.7,0 -1.8-.1 -1.7,0 -1.7,0 -1.8,.1 -1.7,0 -1.7,.1 -1.8-.1 -1.7,.1 -1.7,0 -1.7,.1 -1.8,0 -1.7,0 -1.7,.1 -1.8,0 -1.7,0 -1.7-.1 -1.8,.3 -1.7-.1 -1.7-.1 -1.8,.1 -1.7,.1 -1.7-.2 -1.8,.1 -1.7,0 -1.7,0 -1.8,0 -1.7,0 -1.7-.1 -1.8,0 -1.7,0 -1.7-.1 -1.8,.3 -1.7-.1 -1.7,0 -1.8,0 -1.7,0 -1.7,.1 -1.8-.2 -1.7,.4 -1.7-.1 -1.8,0 -1.7,0 -1.7,0 -1.8,0 -1.7,.1 -1.7-.1 -1.7-.2 -1.8,.1 -1.7,0 -1.7-.1 -1.8-.1 -1.7,.1 -1.7,.2 -1.8-.1 -1.7,.2 -1.7-.1 -1.8,0 -1.7,0 -1.7-.1 -1.8-.2 -1.7,0 -1.7,.2 -1.8,0 -1.7,0 -1.7,0 -1.8-.1 -1.7,0 -1.7-.2 -1.8,.1 -1.7,.1 -1.7-.1 -1.8,0 -1.7-.1 -1.7,.2 -1.8,0 -1.7-.1 -1.7-.1 -1.8,0 -1.7,.1 -1.7,0 -1.7,.1 -1.8,0 -1.7,.1 -1.7,0 -1.8-.1 -1.7,0 -1.7,0 -1.8,.1 -1.7,.1 -1.7-.2 -1.8,0 -1.7,.2 -1.7-.1 -1.8,0 -1.7-.2 -1.7,.1 -1.8,.1 -1.7-.1 -1.7,.2 -1.8-.1 -1.7-.2 -1.7,.2 -1.8-.1 -1.7,.2 -1.7-.1 -1.8,0 -1.7,.2 -1.7,.1 -1.8-.2 -1.7,0 -1.7-.1 -1.8,.1 -1.7-.2 -1.7,.2 -1.8-.2 -1.7,0 -1.7,.1 -1.7,0 -1.8,0 -1.7,.2 -1.7,.1 -1.8,0 -1.7,.1 -1.7,.1 -1.8,0 -1.7,.2 -1.7,.1 -1.8,0 -1.7,.1 -1.7,0 -1.8,.1 -1.7,.3 -1.7,0 -1.8,.2 -1.7,.1 -1.7-.1 -1.8-.1 -1.7-.1 -1.7,.2 -1.8,.1 -1.7,0 -1.7-.1 -1.8-.2 -1.7,0 -1.7,0 -1.8,.2 -1.7,0 -1.7-.2 -1.8,.1 -1.7,0 -1.7,.1 -1.7,.1 -1.8,0 -1.7-.1 -1.7-.2 -1.8,0 -1.7,0 -1.7,.1 -1.8,.1 -1.7,0 -1.7,0 -1.8,0 -1.7,0 -1.7-.2 -1.8-.1 -1.7,.1 -1.7,0 -1.8,.1 -1.7-.1 -1.7,0 -1.8,0 -1.7,0 -1.7,.1 -1.8,.1 -1.7-.1 -1.7,0 -1.8-.1 -1.7,.1 -1.7,0 -1.8-.1 -1.7,.2 -1.7,0 -1.8,0 -1.7,0 -1.7,.1 -1.8-.1 -1.7,.2 -1.7-.2 -1.7-.2 -1.8,.2 -1.7,.2 -1.7-.2 -1.8-.1 -1.7,0 -1.7,.2 -1.8-.1 -1.7-.2 -1.7,0 -1.8,.1 -1.7,0 -1.7-.1 -1.8,.1 -1.7,0 -1.7-.1 -1.8,0 -1.7,0 -1.7-.1 -1.8,.2 -1.7-.1 -1.7,.1 -1.8,.2 -1.7-.1 -1.7,0 -1.8,0 -1.7,0 -1.7-.1 -1.8,0 -1.7,.1 -1.7-.1 -1.8,0 -1.7-.1 -1.7,0 -1.7,.1 -1.8,0 -1.7-.1 -1.7-.1 -1.8,0 -1.7,.1 -1.7-.2 -1.8,0 -1.7,.1 -1.7,.2 -1.8-.1 -1.7,0 -1.7,.1 -1.8-.2 -1.7,0 -1.7-.1 -1.8,.1 -1.7,.1 -1.7-.1 -1.8,0 -1.7-.1 -1.7,.2 -1.8-.2 -1.7,0 -1.7,.1 -1.8,0 -1.7,0 -1.7-.1 -1.8-.1 -1.7,.1 -1.7-.1 -1.8-.1 -1.7,0 -1.7-.1 -1.8,.1 -1.7,0 -1.7-.1 -1.7,.1 -1.8,0 -1.7-.1 -1.7,0 -1.8,0 -1.7,.1 -1.7,0 -1.8,0 -1.7,.1 -1.7-.1 -1.8,.2 -1.7-.1 -1.7-.2 -1.8,.1 -1.7-.2 -1.7,.1 -1.8,.2 -1.7-.2 -1.7,0 -1.8-.1 -1.7-.1 -1.7,.1 -1.8,0 -1.7,.1 -1.7,.1 -1.8,0 -1.7,.1 -1.7-.1 -1.8-.1 -1.7-.1 -1.7,.1 -1.8,0 -1.7-.2 -1.7-.1 -1.8-.1 -1.7,.3 -1.7,0 -1.7,0 -1.8,0 -1.7-.1 -1.7-.1 -1.8,.1 -1.7,0 -1.7,.1 -1.8,.1 -1.7-.2 -1.7,0 -1.8,.1 -1.7,0 -1.7-.2 -1.8-.1 -1.7,.1 -1.7,0 -1.8-.1 -1.7,0 -1.7,.1 -1.8-.3 -1.7,0 -1.7,0 -1.8,0 -1.7,0 -1.7,0 -1.8,0 -1.7,.1 -1.7,.2 -1.8,0 -1.7-.1 -1.7-.2 -1.8,0 -1.7,0 -1.7,.1 -1.7,.1 -1.8-.1 -1.7,0 -1.7-.1 -1.8-.2 -1.7,0 -1.7,0 -1.8,.3 -1.7,0 -1.7,0 -1.8-.1 -1.7,0 -1.7,.1 -1.8,.1 -1.7,.2 -1.7,0 -1.8-.1 -1.7-.1 -1.7-.2 -1.8,.1 -1.7-.1 -1.7,.1 -1.8,0 -1.7,.2 -1.7,.1 -1.8-.2 -1.7,.1 -1.7,.1 -1.8-.1 -1.7,0 -1.7,.1 -1.8-.1 -1.7,0 -1.7,0 -1.8,.1 -1.7-.1 -1.7,.1 -1.7,.1 -1.8-.2 -1.7-.1 -1.7,.1 -1.8,.1 -1.7,0 -1.7,0 -1.8-.1 -1.7,0 -1.7-.1 -1.8,.3 -1.7-.2 -1.7,0 -1.8-.1 -1.7-.1 -1.7-.1 -1.8,.1 -1.7,.1 -1.7,.1 -1.8,.1 -1.7-.1 -1.7-.1 -1.8,0 -1.7,0 -1.7,.1 -1.8,.1 -1.7,0 -1.7,0 -1.8,0 -1.7-.1 -1.7,0 -1.8-.2 -1.7,0 -1.7,.3 -1.7,.1 -1.8,.1 -1.7-.1 -1.7,.1 -1.8,.2 -1.7,.1 -1.7,0 -1.8,.2 -1.7,.2 -1.7,0 -1.8-.1 -1.7,0 -1.7,.1 -1.8,.1 -1.7,0 -1.7,0 -1.8,.2 -1.7,.1z" fill="url(#g0)"/>
<path d="M157.7,794.3l1.7-.1 1.8-.2 1.7,0 1.7,0 1.8-.1 1.7-.1 1.7,0 1.8,.1 1.7,0 1.7-.2 1.8-.2 1.7,0 1.7-.1 1.8-.2 1.7-.1 1.7,.1 1.8-.1 1.7-.1 1.7-.3 1.7,0 1.8,.2 1.7,0 1.7,.1 1.8,0 1.7,0 1.7,0 1.8-.1 1.7-.1 1.7,0 1.8,0 1.7,.1 1.7,.1 1.8-.1 1.7-.1 1.7-.1 1.8-.1 1.7,.1 1.7,.1 1.8,.1 1.7,0 1.7,.2 1.8-.3 1.7,.1 1.7,0 1.8,.1 1.7,0 1.7,0 1.8-.1 1.7-.1 1.7,.1 1.8,.2 1.7-.1 1.7-.1 1.7,.1 1.8-.1 1.7,0 1.7,0 1.8,.1 1.7-.1 1.7,0 1.8,.1 1.7-.1 1.7-.1 1.8,.2 1.7-.1 1.7-.2 1.8,0 1.7-.1 1.7,.1 1.8-.1 1.7,.2 1.7,.1 1.8,.1 1.7,0 1.7-.2 1.8-.1 1.7-.1 1.7,0 1.8,.1 1.7,0 1.7,0 1.8-.3 1.7,0 1.7,0 1.8,.2 1.7,.1 1.7,0 1.8,.1 1.7-.1 1.7-.1 1.7,0 1.8,0 1.7,.2 1.7,.1 1.8,0 1.7-.2 1.7-.1 1.8,0 1.7,0 1.7,0 1.8,0 1.7,0 1.7,0 1.8,.3 1.7-.1 1.7,0 1.8,.1 1.7,0 1.7-.1 1.8,.1 1.7,.2 1.7,0 1.8-.1 1.7,0 1.7,.2 1.8-.1 1.7-.1 1.7,0 1.8-.1 1.7,.1 1.7,.1 1.8,0 1.7,0 1.7,0 1.7-.3 1.8,.1 1.7,.1 1.7,.2 1.8,0 1.7-.1 1.7,.1 1.8,.1 1.7,.1 1.7-.1 1.8,0 1.7-.1 1.7-.1 1.8,0 1.7-.1 1.7,.1 1.8,.1 1.7,0 1.7,.2 1.8-.2 1.7-.1 1.7,.2 1.8-.1 1.7,.2 1.7,.1 1.8-.2 1.7,.1 1.7-.1 1.8,0 1.7,0 1.7-.1 1.8,0 1.7,0 1.7,.1 1.8,0 1.7-.1 1.7,.1 1.7,0 1.8-.1 1.7,.1 1.7,0 1.8,.1 1.7,.1 1.7-.1 1.8,.1 1.7,.1 1.7,0 1.8,0 1.7-.1 1.7,0 1.8,.2 1.7-.2 1.7,.1 1.8,0 1.7,.1 1.7-.1 1.8-.1 1.7,.1 1.7,0 1.8,.2 1.7-.1 1.7,0 1.8,.1 1.7-.2 1.7-.1 1.8,0 1.7,.2 1.7-.1 1.8,0 1.7,.1 1.7,.1 1.8,0 1.7-.1 1.7,0 1.7,.1 1.8,0 1.7,.1 1.7-.1 1.8,0 1.7,.1 1.7,0 1.8,0 1.7,0 1.7,.1 1.8-.2 1.7-.1 1.7,.1 1.8-.2 1.7,.1 1.7,0 1.8,0 1.7,.1 1.7,0 1.8-.1 1.7,.1 1.7,0 1.8-.1 1.7,0 1.7,.2 1.8,.1 1.7-.2 1.7,0 1.8,.1 1.7,.2 1.7-.2 1.8-.2 1.7,.2 1.7,.2 1.7-.2 1.8,.1 1.7-.1 1.7,0 1.8,0 1.7,0 1.7-.2 1.8,.1 1.7,0 1.7-.1 1.8,.1 1.7,0 1.7,.1 1.8-.1 1.7-.1 1.7,0 1.8,0 1.7,0 1.7,.1 1.8-.1 1.7,0 1.7-.1 1.8,.1 1.7,.2 1.7,0 1.8,0 1.7,0 1.7,0 1.8-.1 1.7-.1 1.7,0 1.8,0 1.7,.2 1.7,.1 1.8,0 1.7-.1 1.7-.1 1.7,0 1.8-.1 1.7,.2 1.7,0 1.8-.2 1.7,0 1.7,0 1.8,.2 1.7,.1 1.7,0 1.8-.1 1.7-.2 1.7,.1 1.8,.1 1.7,.1 1.7-.1 1.8-.2 1.7,0 1.7-.3 1.8-.1 1.7,0 1.7-.1 1.8,0 1.7-.1 1.7-.2 1.8,0 1.7-.1 1.7-.1 1.8,0 1.7-.1 1.7-.2 1.8,0 1.7,0 1.7-.1 1.7,0 1.8,.2 1.7-.2 1.7,.2 1.8-.1 1.7,.1 1.7,0 1.8,.2 1.7-.1 1.7-.2 1.8,0 1.7,.1 1.7-.2 1.8,.1 1.7-.2 1.7,.2 1.8,.1 1.7-.2 1.7,.1 1.8-.1 1.7-.1 1.7,.2 1.8,0 1.7,.1 1.7-.2 1.8,0 1.7,.2 1.7-.1 1.8-.1 1.7,0 1.7,0 1.8,.1 1.7,0 1.7-.1 1.8,0 1.7-.1 1.7,0 1.7-.1 1.8,0 1.7,.1 1.7,.1 1.8,0 1.7-.2 1.7,.1 1.8,0 1.7,.1 1.7-.1 1.8-.1 1.7,.2 1.7,0 1.8,.1 1.7,0 1.7,0 1.8,0 1.7-.2 1.7,0 1.8,.2 1.7,.1 1.7,0 1.8,0 1.7,.1 1.7-.2 1.8,.1 1.7-.2 1.7-.1 1.8,.1 1.7,.1 1.7,0 1.8-.1 1.7,.2 1.7,.1 1.7-.1 1.8,0 1.7,0 1.7,0 1.8,0 1.7,.1 1.7-.4 1.8,.2 1.7-.1 1.7,0 1.8,0 1.7,0 1.7,.1 1.8-.3 1.7,.1 1.7,0 1.8,0 1.7,.1 1.7,0 1.8,0 1.7,0 1.7,0 1.8-.1 1.7,.2 1.7-.1 1.8-.1 1.7,.1 1.7,.1 1.8-.3 1.7,.1 1.7,0 1.8,0 1.7-.1 1.7,0 1.8,0 1.7-.1 1.7,0 1.7-.1 1.8,.1 1.7-.1 1.7,0 1.8-.1 1.7,0 1.7,0 1.8,.1 1.7,0 1.7-.1 1.8-.1 1.7,.1 1.7,0 1.8-.1 1.7,0 1.7-.1 1.8,0 1.7-.1 1.7,0 1.8,.4 1.7-.2 1.7,0 1.8-.4 1.7,.2 1.7,0 1.8-.1 1.7,.1 1.7-.1 1.8-.1 1.7,.2 1.7,0 1.8,.1 1.7-.4 1.7-.1 1.8,.3 1.7,.1 1.7-.1 1.7,0 1.8,0 1.7-.1 1.7-.1 1.8-.1 1.7,0 1.7,.1 1.8-.1 1.7,.1 1.7-.1 1.8-.1 1.7,.1 1.7,0 1.8,0 1.7,.1 1.7-.1 1.8-.1 1.7,.1 1.7,0 1.8-.2 1.7-.1 1.7,.2 1.8-.2 1.7,0 1.7-.2 1.8,.2 1.7,.1 1.7-.1 1.8-.1 1.7,0 1.7,0 1.8,.1 1.7,0 1.7-.1 1.7,0 1.8,.1 1.7,0 1.7-.1 1.8-.1 1.7-.1 1.7-.1 1.8,0 1.7-.1 1.7,0 1.8,0 1.7,.1 1.7-.1 1.8,.1 1.7-.1 1.7-.1 1.8-.2 1.7,0 1.7,.1 1.8-.1 1.7,0 1.7-.1 1.8,.1 1.7-.1 1.7,.2 1.8,0 1.7-.2 1.7-.3 1.8,.1 1.7-.1 1.7-.3 1.8-.1 1.7,.5 1.7-.2 1.8-.1 1.7-.1 1.7,0 1.7,.2 1.8-.1 1.7-.2 1.7-.1 1.8,0 1.7,0 1.7,0 1.8-.1 1.7,0 1.7,.1 1.8,0 1.7,0 1.7,0 1.8,.1 1.7,.1 1.7-.3 1.8,.1 1.7,0 1.7-.1 1.8-.3 1.7-.1 1.7,.1 1.8,.1 1.7,0 1.7,0 1.8-.1 1.7-.2 1.7,.1 1.8,0 1.7-.2 1.7,0 1.8,0 1.7,0 1.7,0 1.7-.1 1.8-.2 1.7,0 1.7,.3 1.8-.2 1.7-.2 1.7,0 1.8,0 1.7,.2 1.7-.1 1.8-.4 1.7-.3 1.7-.3 1.8,.2 1.7,0 1.7-.1 1.8,.1 1.7-.3 1.7,.1 1.8-.1 1.7,.1 1.7-.1 1.8,0 1.7-.3 1.7,.2 1.8,0 1.7-.4 1.7,.2 1.8-.1 1.7,0 1.7-.1 1.8,0 1.7-.2 1.7-.1 1.8-.2 1.7,.1 1.7,.2 1.7-.1 1.8-.4 1.7,0 1.7,.2 1.8,.2 1.7,0 1.7-.2 1.8,0 1.7-.1 1.7-.2 1.8-.2 1.7-.1 1.7-.1 1.8,.2 1.7-.1 1.7-.2 1.8,.2 1.7-.2 1.7,.1 1.8,.2 1.7-.5 1.7-.1 1.8,0 1.7-.2 1.7-.1 1.8,.1 1.7,0 1.7-.1 1.8,.1 1.7,0 1.7-.1 1.8-.1 1.7,0 1.7,0 1.8,.1 1.7-.1 1.7-.1 1.7-.1 1.8,0 1.7,.2 1.7-.3 1.8-.1 1.7-.3 1.7-.1 1.8,0 1.7-.1 1.7-.2 1.8,.1 1.7,.2 1.7-.1 1.8,0 1.7-.3 1.7-.1 1.8-.3 1.7,.4 1.7-.1 1.8,.1 1.7-.2 1.7,.2 1.8-.2 1.7,.2 1.7-.5 1.8-1.7 1.7-2.4 1.7,.2 1.8,.3 1.7,.4 1.7,.3 1.8,.5 1.7,.4 1.7,.2 1.7,.4 1.8,.5 1.7,.3 1.7,.4 1.8,.4 1.7-.2 1.7-.1 1.8,0 1.7-.3 1.7-.5 1.8-.4 1.7-.2 1.7,0 1.8,.2 1.7-.6 1.7-.2 1.8-.2 1.7,.1 1.7-.7 1.8-.1 1.7,0 1.7-.3 1.8,.1 1.7-.5 1.7,.1 1.8-.1 1.7-.5 1.7-1.1 1.8-1.2 1.7-.9 1.7-1.1 1.8-1.8 1.7-.9 1.7-1.3 1.8-.8 1.7,.3 1.7,.6 1.7,.8 1.8,.3 1.7,.4 1.7,.3 1.8-.2 1.7,0 1.7,0 1.8,.1 1.7,.1 1.7,.2 1.8-.2 1.7,.4 1.7-.7 1.8,.2 1.7,.2 1.7-.2 1.8-.1 1.7-.3 1.7,.2 1.8-.5 1.7-.2 1.7-.2 1.8-.1 1.7-.3 1.7-.2 1.8-.3 1.7,.2 1.7,0 1.8-.6 1.7-.6 1.7-.1 1.8,.3 1.7,.1 1.7,.1 1.7-.2 1.8,.5 1.7,0 1.7,.2 1.8,.4 1.7,.2 1.7,0 1.8-.1 1.7-.1 1.7-.3 1.8,0 1.7-.7 1.7-.3 1.8-.2 1.7-.3 1.7-.1 1.8,.1 1.7-.3 1.7-.2 1.8-.2 1.7-.3 1.7-.5 1.8-.2 1.7,0 1.7-.1 1.8-.3 1.7-.3 1.7,0 1.8-.4 1.7-.3 1.7-.3 1.8,0 1.7-.2 1.7-.3 1.8-1.6 1.7,.6 1.7-.4 1.7-.4 1.8-.5 1.7-.1 1.7,0 1.8-.1 1.7-.2 1.7-.5 1.8-.7 1.7-.4 1.7-.6 1.8-.7 1.7,.3 1.7,.2 1.8-1 1.7-.3 1.7-.3 1.8-.4 1.7-.8 1.7-.4 1.8-.4 1.7-.5 1.7-.2 1.8-.2 1.7-.7 1.7-.2 1.8-.3 1.7-.6 1.7-.2 1.8-.8 1.7-.4 1.7-.2 1.8-.2 1.7-.3 1.7-.1 1.7-.3 1.8,.1 1.7-.6 1.7-.3 1.8-.5 1.7-.3 1.7,0 1.8,.1 1.7,.3 1.7-.2 1.8-.8 1.7,.2 1.7-.4 1.8,.2 1.7-.7 1.7-.3 1.8,.3 1.7-.5 1.7-.6 1.8-.1 1.7,.4 1.7-.2 1.8-.4 1.7-.2 1.7-.9 1.8,.1 1.7-.6 1.7-.3 1.8,0 1.7-.4 1.7-.6 1.8,0 1.7-.3 1.7-.7 1.8-.8 1.7-.5 1.7-.4 1.7-.5 1.8-.6 1.7,.1 1.7-.3 1.8-.5 1.7-.5 1.7-.8 1.8-.2 1.7-.1 1.7-.5 1.8-.1 1.7-.3 1.7-.7 1.8-.4 1.7-.7 1.7-.1 1.8-.1 1.7-1.2 1.7-.2 1.8-.5 1.7-.2 1.7-.9 1.8-.5 1.7-.1 1.7-.3 1.8-.2 1.7-.6 1.7,.2 1.8-.7 1.7-.2 1.7-1.6 1.8-.1 1.7-1 1.7-.4 1.8-.2 1.7-.1 1.7-.2 1.7-.9 1.8-.4 1.7-.7 1.7-.5 1.8-.5 1.7-.3 1.7-.7 1.8-1 1.7,.3 1.7-1.4 1.8-.1 1.7,.4 1.7-1.2 1.8,.2 1.7,0 1.7-.6 1.8-.9 1.7,.6 1.7-1.6 1.8-.1 1.7-.3 1.7,.1 1.8,0 1.7,.2 1.7-.8 1.8-.5 1.7,.1 1.7-.9 1.8-.8 1.7,.9 1.7-.4 1.8-.2 1.7-.7 1.7,0 1.7-.7 1.8-1 1.7,.5 1.7-1.3 1.8,.9 1.7-.9 1.7,.4 1.8-.8 1.7-.7 1.7-.4 1.8-.6 1.7,0 1.7,.3 1.8-1.3 1.7,0 1.7-.5 1.8-.9 1.7-.5 1.7-1.1 1.8-.6 1.7,.8 1.7-.7 1.8-1.1 1.7-.3 1.7-1.3 1.8,.2 1.7-1 1.7-18 1.8,.1 1.7-1.8 1.7-.6 1.8-.2 1.7-1.8 1.7-1.8 1.8-1.1 1.7-1.4 1.7-1 1.7-1.2 1.8-1.5 1.7,.5 1.7-.8 1.8-2.1 1.7-1.8 1.7-2 1.8-.3 1.7-1.6 1.7,2.3 1.8-1.2 1.7-.9 1.7-1.6 1.8-2.2 1.7,0 1.7,.5 1.8-2 1.7,.9 1.7-2.3 1.8,.8 1.7-1.4 1.7-1.4 1.8-1.8 1.7,.9 1.7,1.9 1.8,.2 1.7,.8 1.7-.3 1.8-.4 1.7,0 1.7,.4 1.8-.8 1.7,1.4 1.7,.2 1.7,.6 1.8-.4 1.7-.2 1.7,.1 1.8,.2 1.7,.3 1.7,0 1.8,.2 1.7,0 1.7,1.6 1.8,0 1.7,.3 1.7-1.8 1.8,.2 1.7-1.2 1.7-.6 1.8-.1 1.7,0 1.7-2.4 1.8-.9 1.7,1 1.7-.6 1.8-1.3 1.7-3 1.7,.5 1.8-2.1 1.7,.1 1.7-.7 1.8,1.2 1.7,0 1.7-.6 1.8-2.6 1.7-1.6 1.7-.3 1.8-.4 1.7-.3 1.7-.9 1.7-2 1.8,.5 1.7-2.3 1.7-1.2 1.8,1 1.7,.2 1.7-.4 1.8,.3 1.7-.5 1.7-1.2 1.8-1.7 1.7-.2 1.7-2.2 1.8-.4 1.7,1 1.7,1.1 1.8-.6 1.7,.2 1.7-1.7 1.8-1.1 1.7-.4 1.7-1.3 1.8,.2 1.7-2.5 1.7,.5 1.8-.9 1.7-1.3 1.7,1.7 1.8-1.8 1.7-1.1 1.7-1.5 1.8-.9 1.7-1.7 1.7,1 1.7-1.2 1.8-2.2 1.7-.8 1.7-4.5 1.8-2.5 1.7-2.6 1.7-1.9 1.8,.3 1.7,1.3 1.7,3.4 1.8,.3 1.7-.4 1.7-.7 1.8,0 1.7,.2 1.7,2.5 1.8-1.9 1.7-.7 1.7-1 1.8-.9 1.7-.1 1.7-.8 1.8-1.6 1.7-1.8 1.7,.3 1.8-.7 1.7-.3 1.7-1 1.8-1.2 1.7-1.2 1.7-.3 1.8-1.1 1.7,1.2 1.7-1.8 1.8,.4 1.7-1.1 1.7-1.3 1.7-.6 1.8-.4 1.7,.2 .3-1.5 0,83.1 -.3,.8 -1.7-.3 -1.8,.3 -1.7-1 -1.7,0 -1.7,.6 -1.8-.5 -1.7,.5 -1.7,.1 -1.8,.1 -1.7-.5 -1.7,.1 -1.8,1.7 -1.7,.1 -1.7-.4 -1.8,.8 -1.7,.2 -1.7,.9 -1.8,1.1 -1.7,0 -1.7,1.1 -1.8-.6 -1.7,.3 -1.7-.4 -1.8,.9 -1.7-1.6 -1.7-.6 -1.8-1 -1.7,.5 -1.7,.3 -1.8,.8 -1.7-.3 -1.7,1 -1.8-1.3 -1.7,1 -1.7-.5 -1.8,1.1 -1.7,1.1 -1.7-.5 -1.8,.3 -1.7,0 -1.7-1 -1.7,.9 -1.8,.2 -1.7,1.1 -1.7-.2 -1.8,.9 -1.7-1.8 -1.7,.6 -1.8,.2 -1.7-.8 -1.7,2 -1.8-1 -1.7,.9 -1.7-.3 -1.8,.9 -1.7,1 -1.7-.6 -1.8,0 -1.7-1.5 -1.7-.6 -1.8,0 -1.7,2.5 -1.7-.4 -1.8,1.7 -1.7,.4 -1.7,.5 -1.8-.3 -1.7,.5 -1.7-.4 -1.8-.9 -1.7,.6 -1.7,2.2 -1.8-.4 -1.7,2.1 -1.7,.8 -1.7,.6 -1.8,.7 -1.7,0 -1.7,1 -1.8,1.4 -1.7,.1 -1.7-.2 -1.8-1 -1.7,.9 -1.7-.6 -1.8,1.3 -1.7-.1 -1.7,2.4 -1.8,1.2 -1.7-.2 -1.7-.5 -1.8,.4 -1.7,1.2 -1.7-.3 -1.8-.7 -1.7,.7 -1.7,1.1 -1.8-.1 -1.7,1.4 -1.7-.5 -1.8,.2 -1.7-1.2 -1.7-.5 -1.8-.1 -1.7-.1 -1.7-.8 -1.8-.1 -1.7-.4 -1.7,.1 -1.8,.1 -1.7-.8 -1.7-.5 -1.7-1.4 -1.8,.9 -1.7-.1 -1.7,0 -1.8,.4 -1.7,.6 -1.7-.4 -1.8-.9 -1.7-1.7 -1.7-.5 -1.8,.9 -1.7,1.5 -1.7,1.3 -1.8-.3 -1.7,1.4 -1.7-.6 -1.8,1.8 -1.7-.4 -1.7,.1 -1.8,1.8 -1.7,1.2 -1.7,1.1 -1.8,.9 -1.7-2.2 -1.7,1.5 -1.8,.5 -1.7,1.5 -1.7,1.4 -1.8,2 -1.7,.9 -1.7-.3 -1.8,1.3 -1.7,.4 -1.7,0 -1.7,1.1 -1.8,.7 -1.7,1.3 -1.7,1.3 -1.8-.1 -1.7,.3 -1.7,.9 -1.8-.5 -1.7,20.2 -1.7,.3 -1.8-.2 -1.7,.4 -1.7,.3 -1.8,.5 -1.7-.2 -1.7-1.3 -1.8,.4 -1.7,.1 -1.7-.1 -1.8,.5 -1.7,.1 -1.7-.5 -1.8,.7 -1.7-.5 -1.7,0 -1.8,.6 -1.7,.1 -1.7,.1 -1.8,.7 -1.7-.4 -1.7,1.1 -1.8-1.2 -1.7,1.1 -1.7-.7 -1.8,.8 -1.7,.4 -1.7-.2 -1.7,.4 -1.8-.4 -1.7-.2 -1.7-.9 -1.8,.2 -1.7,.9 -1.7,0 -1.8,.4 -1.7,.4 -1.7-.2 -1.8-.1 -1.7-.1 -1.7-.2 -1.8-.4 -1.7,1.3 -1.7-.5 -1.8,.5 -1.7,.6 -1.7,.4 -1.8,.6 -1.7,1.1 -1.7,0 -1.8,.2 -1.7,1.8 -1.7,.6 -1.8,1.9 -1.7,1.1 -1.7,.7 -1.8,1.2 -1.7,.6 -1.7,.5 -1.8,.1 -1.7,.6 -1.7,.1 -1.7,.2 -1.8,0 -1.7,.6 -1.7,.7 -1.8,0 -1.7,1.2 -1.7,.4 -1.8,.8 -1.7-.1 -1.7,.6 -1.8,.1 -1.7,.3 -1.7,.3 -1.8,0 -1.7,.8 -1.7,0 -1.8,.5 -1.7,.8 -1.7,1.2 -1.8-.2 -1.7,0 -1.7,.2 -1.8,.6 -1.7,.6 -1.7-.1 -1.8,.2 -1.7,.8 -1.7,.2 -1.8,.1 -1.7,.3 -1.7,0 -1.8,.3 -1.7,.3 -1.7-.5 -1.8,.6 -1.7,.4 -1.7,.1 -1.7,.3 -1.8,.5 -1.7,.4 -1.7,0 -1.8,.1 -1.7,.2 -1.7,.2 -1.8,.1 -1.7,.4 -1.7,.4 -1.8,0 -1.7,.5 -1.7,.1 -1.8,.6 -1.7,.5 -1.7-.4 -1.8,.1 -1.7,.5 -1.7,.1 -1.8-.2 -1.7,.2 -1.7,.6 -1.8-.2 -1.7,.2 -1.7-.1 -1.8,.6 -1.7,.1 -1.7-.3 -1.8,0 -1.7,0 -1.7,.2 -1.8,.4 -1.7-.1 -1.7,.3 -1.8,0 -1.7,.1 -1.7,.2 -1.7,.1 -1.8,.1 -1.7,.3 -1.7,.2 -1.8,.4 -1.7,0 -1.7,.3 -1.8,.8 -1.7,.3 -1.7,.5 -1.8,.4 -1.7,.6 -1.7,.5 -1.8,.7 -1.7,.4 -1.7,.6 -1.8,.5 -1.7,.3 -1.7,.4 -1.8,.9 -1.7,.1 -1.7,.3 -1.8,.5 -1.7,1 -1.7,.6 -1.8,.8 -1.7,.1 -1.7-.2 -1.8,.1 -1.7-.1 -1.7-.3 -1.8,0 -1.7,.2 -1.7,.1 -1.7-.4 -1.8,1.1 -1.7-.1 -1.7,.2 -1.8-.2 -1.7-.2 -1.7,.2 -1.8,0 -1.7-.1 -1.7,0 -1.8,.1 -1.7,.1 -1.7-.3 -1.8-.1 -1.7,.3 -1.7,.1 -1.8,.1 -1.7-.1 -1.7,.4 -1.8,.2 -1.7,.2 -1.7,.5 -1.8,.3 -1.7,.3 -1.7,.7 -1.8,.3 -1.7,.3 -1.7,.1 -1.8,.5 -1.7,.7 -1.7,.4 -1.8-.2 -1.7-.1 -1.7-.4 -1.8-.6 -1.7-.2 -1.7-.4 -1.7-.5 -1.8-.2 -1.7-.2 -1.7,1.2 -1.8,1.2 -1.7,1 -1.7,.8 -1.8,.5 -1.7-.3 -1.7,.1 -1.8-.1 -1.7-.2 -1.7-.1 -1.8,.1 -1.7-.1 -1.7-.1 -1.8-.1 -1.7-.1 -1.7-.2 -1.8-.4 -1.7,.2 -1.7-.2 -1.8,.2 -1.7,0 -1.7-.3 -1.8-.1 -1.7-.3 -1.7,.1 -1.8,0 -1.7-.2 -1.7-.5 -1.8-.5 -1.7-.8 -1.7-.9 -1.7-.3 -1.8,.2 -1.7,.3 -1.7,.3 -1.8,.8 -1.7,.3 -1.7,.1 -1.8,.4 -1.7,.6 -1.7,.8 -1.8,.3 -1.7,0 -1.7,.5 -1.8,.2 -1.7,.5 -1.7,.3 -1.8,.2 -1.7,.7 -1.7,.1 -1.8,.4 -1.7,.2 -1.7,.6 -1.8,0 -1.7,.2 -1.7,.4 -1.8,.3 -1.7,.7 -1.7,.3 -1.8,.2 -1.7,.2 -1.7,.4 -1.8-.3 -1.7-.3 -1.7,.1 -1.8-.3 -1.7-.2 -1.7-.1 -1.7-.1 -1.8-.1 -1.7-.2 -1.7-.1 -1.8-.4 -1.7,.1 -1.7,3.1 -1.8,2.4 -1.7,.2 -1.7-.2 -1.8,.1 -1.7,.1 -1.7,.1 -1.8,0 -1.7,0 -1.7-.1 -1.8,.1 -1.7,.1 -1.7,0 -1.8,.1 -1.7,.2 -1.7-.1 -1.8-.1 -1.7,.1 -1.7,0 -1.8,.1 -1.7,.1 -1.7,.1 -1.8,0 -1.7,.3 -1.7-.1 -1.8,0 -1.7-.1 -1.7,0 -1.7,.2 -1.8,0 -1.7,0 -1.7,.1 -1.8,0 -1.7,.2 -1.7-.1 -1.8,0 -1.7,0 -1.7,0 -1.8,.2 -1.7,0 -1.7,.1 -1.8,.1 -1.7,0 -1.7,0 -1.8-.1 -1.7,.1 -1.7-.1 -1.8,.1 -1.7,.1 -1.7,0 -1.8,0 -1.7,.1 -1.7,0 -1.8,.1 -1.7,.1 -1.7,0 -1.8,0 -1.7,.1 -1.7,0 -1.8,.1 -1.7,0 -1.7,0 -1.8,.1 -1.7,.1 -1.7-.1 -1.7-.1 -1.8,.2 -1.7,0 -1.7,.1 -1.8,0 -1.7,.1 -1.7,0 -1.8,0 -1.7,0 -1.7,.2 -1.8-.1 -1.7,0 -1.7,.1 -1.8,0 -1.7,.1 -1.7,0 -1.8,.1 -1.7,0 -1.7,0 -1.8,0 -1.7,.1 -1.7,0 -1.8,0 -1.7,0 -1.7,0 -1.8,0 -1.7,.1 -1.7,0 -1.8,0 -1.7,0 -1.7,.1 -1.8,0 -1.7,0 -1.7-.2 -1.8,.1 -1.7,.1 -1.7,0 -1.7,0 -1.8,0 -1.7-.1 -1.7,.1 -1.8,0 -1.7,0 -1.7,.1 -1.8,0 -1.7,0 -1.7,0 -1.8,.1 -1.7,0 -1.7-.1 -1.8,0 -1.7,.1 -1.7,0 -1.8-.1 -1.7,.1 -1.7-.1 -1.8,0 -1.7,0 -1.7,.1 -1.8-.1 -1.7,.1 -1.7,0 -1.8,0 -1.7,0 -1.7,0 -1.8,0 -1.7,.1 -1.7,0 -1.8,0 -1.7-.1 -1.7,.1 -1.7,0 -1.8,.1 -1.7,.1 -1.7-.1 -1.8,0 -1.7,0 -1.7,0 -1.8,0 -1.7,.1 -1.7,0 -1.8,0 -1.7,0 -1.7,0 -1.8,0 -1.7,.1 -1.7,0 -1.8-.1 -1.7-.1 -1.7,0 -1.8,.1 -1.7,.1 -1.7,0 -1.8,0 -1.7,.1 -1.7-.1 -1.8,.1 -1.7-.1 -1.7,0 -1.8,.1 -1.7,0 -1.7,0 -1.8,.1 -1.7-.1 -1.7,0 -1.8,0 -1.7,0 -1.7,0 -1.7,0 -1.8,0 -1.7,0 -1.7,0 -1.8,.1 -1.7,.1 -1.7-.1 -1.8-.1 -1.7,0 -1.7,.1 -1.8,0 -1.7,.1 -1.7-.1 -1.8,0 -1.7,.1 -1.7,.1 -1.8-.1 -1.7,.1 -1.7,.1 -1.8,0 -1.7,0 -1.7,0 -1.8,0 -1.7,0 -1.7-.1 -1.8,0 -1.7,0 -1.7,0 -1.8,0 -1.7,.1 -1.7,0 -1.8,.1 -1.7-.1 -1.7,.1 -1.7,0 -1.8,0 -1.7,0 -1.7,0 -1.8,0 -1.7,0 -1.7,0 -1.8,0 -1.7,0 -1.7,0 -1.8,.1 -1.7,0 -1.7,0 -1.8,.1 -1.7-.1 -1.7,0 -1.8,0 -1.7-.1 -1.7,.1 -1.8,.1 -1.7,.1 -1.7,0 -1.8,0 -1.7-.1 -1.7,.1 -1.8-.1 -1.7,.1 -1.7-.1 -1.8,0 -1.7,0 -1.7,.1 -1.8,0 -1.7,0 -1.7,.1 -1.8-.1 -1.7,.1 -1.7,0 -1.7,0 -1.8,0 -1.7,0 -1.7,0 -1.8,.1 -1.7,0 -1.7-.1 -1.8,.1 -1.7,.1 -1.7-.1 -1.8,0 -1.7,.1 -1.7,0 -1.8,0 -1.7-.1 -1.7,0 -1.8,0 -1.7,.1 -1.7,0 -1.8,0 -1.7,0 -1.7,0 -1.8,.1 -1.7,0 -1.7,0 -1.8,.1 -1.7,0 -1.7-.1 -1.8,.1 -1.7,0 -1.7,0 -1.8,0 -1.7,0 -1.7,0 -1.8,.1 -1.7-.1 -1.7,0 -1.7,0 -1.8,0 -1.7,0 -1.7,0 -1.8,0 -1.7,0 -1.7,.1 -1.8,0 -1.7,0 -1.7,0 -1.8,0 -1.7,0 -1.7,0 -1.8,0 -1.7,0 -1.7,0 -1.8,0 -1.7,.1 -1.7,0 -1.8-.1 -1.7,.1 -1.7-.1 -1.8,.1 -1.7,.1 -1.7-.1 -1.8,.1 -1.7,0 -1.7,0 -1.8,0 -1.7,0 -1.7,0 -1.8,0 -1.7,.1 -1.7,0 -1.7-.1 -1.8,.1 -1.7,0 -1.7,0 -1.8,0 -1.7,0 -1.7,.1 -1.8,0 -1.7,0 -1.7,0 -1.8,0 -1.7,0 -1.7,.1 -1.8-.1 -1.7,.1 -1.7,0 -1.8,0 -1.7,0 -1.7,0 -1.8,0 -1.7,0 -1.7,0 -1.8,.1 -1.7-.1 -1.7,0 -1.8,.1 -1.7-.1 -1.7,.1 -1.8,0 -1.7,0 -1.7,0 -1.8,0 -1.7,0 -1.7,.1 -1.8,0 -1.7,0 -1.7,0 -1.7,0 -1.8,0 -1.7,0 -1.7,0 -1.8,.1 -1.7,0 -1.7,0 -1.8-.1 -1.7,.1 -1.7,0 -1.8,0 -1.7,0 -1.7,0 -1.8,.1 -1.7,0 -1.7,0 -1.8,0 -1.7,0 -1.7,0 -1.8,0 -1.7,0 -1.7,0 -1.8,0 -1.7,0 -1.7,0 -1.8,0 -1.7,0 -1.7,0 -1.8,0 -1.7,.1 -1.7-.1 -1.8,.1 -1.7-.1 -1.7,.1 -1.7,0 -1.8,0 -1.7,0 -1.7,0 -1.8,0 -1.7-.1 -1.7,0 -1.8,.1 -1.7-.1 -1.7,0 -1.8,0 -1.7,0 -1.7,0 -1.8,0 -1.7,0 -1.7,0 -1.8,0 -1.7,0 -1.7,0 -1.8,0 -1.7,.1 -1.7-.1 -1.8,.1 -1.7,0 -1.7-.1 -1.8,0 -1.7,0 -1.7,.1 -1.8-.1 -1.7,0 -1.7,0 -1.8,.1 -1.7,0 -1.7,0 -1.8,0 -1.7,0 -1.7-.1 -1.7,0 -1.8,0 -1.7,.1 -1.7,0 -1.8-.1 -1.7,0 -1.7,.1 -1.8,0 -1.7,0 -1.7,0 -1.8,0 -1.7,0 -1.7-.1 -1.8,0 -1.7,0 -1.7,0 -1.8,0 -1.7,0 -1.7,0 -1.8,0 -1.7,0 -1.7,0 -1.8,.1 -1.7,0 -1.7,0 -1.8,0 -1.7,0 -1.7,0 -1.8,0 -1.7,0 -1.7,0 -1.8-.1 -1.7,0 -1.7,0 -1.7,.1 -1.8,0 -1.7,0 -1.7-.1 -1.8,.1 -1.7-.1 -1.7,.1 -1.8-.1 -1.7,0 -1.7,.1 -1.8-.1 -1.7,0 -1.7,.1 -1.8,0 -1.7,0 -1.7,0 -1.8,0 -1.7,0 -1.7,0 -1.8,0 -1.7,0 -1.7,0 -1.8,0 -1.7-.1 -1.7,.1 -1.8,0 -1.7,0 -1.7,0 -1.8-.1 -1.7,0 -1.7,0 -1.8,.1 -1.7,0 -1.7,0 -1.8,0 -1.7-.1 -1.7,.1 -1.7,0 -1.8,0 -1.7,0 -1.7,0 -1.8,0 -1.7,0 -1.7,0 -1.8,0 -1.7,0 -1.7,0 -1.8,0 -1.7,0 -1.7,0 -1.8,0 -1.7,0 -1.7,0 -1.8,0 -1.7,0 -1.7,0 -1.8-.1 -1.7,.1 -1.7,0 -1.8,0 -1.7,0 -1.7,.1 -1.8-.1 -1.7,0 -1.7,.1 -1.8,0 -1.7,0 -1.7-.1 -1.8,0 -1.7,0 -1.7,0 -1.8,.1 -1.7,0 -1.7,0 -1.7,0 -1.8-.1 -1.7,0 -1.7,0 -1.8,0 -1.7,0 -1.7,0 -1.8,0 -1.7,0 -1.7,0 -1.8,0 -1.7,0 -1.7,0 -1.8,0 -1.7,0 -1.7,0 -1.8,0 -1.7,0 -1.7,0 -1.8,0 -1.7,0 -1.7,0 -1.8,0 -1.7,0 -1.7,0 -1.8,0 -1.7,0 -1.7,0 -1.8,0 -1.7,0 -1.7,0 -1.8,0 -1.7,0 -1.7,.1 -1.7-.1 -1.8,0 -1.7,0 -1.7,0 -1.8,0 -1.7,0 -1.7,0 -1.8,0 -1.7,0 -1.7,0 -1.8,0 -1.7,0 -1.7,0 -1.8,0 -1.7,0 -1.7,0 -1.8,0 -1.7,0 -1.7,0 -1.8,0 -1.7,.1 -1.7-.1 -1.8,0 -1.7,.1 -1.7,0 -1.8,0 -1.7,0 -1.7,0 -1.8,0 -1.7,0 -1.7,.1 -1.8-.1 -1.7,0 -1.7-.1 -1.8,.1 -1.7-.1 -1.7,0 -1.7,.1 -1.8-.1 -1.7,.1 -1.7,0 -1.8-.1 -1.7,0 -1.7,0 -1.8,.1 -1.7-.1 -1.7,0 -1.8,0 -1.7,0 -1.7,0 -1.8,0 -1.7,0 -1.7,0 -1.8,0 -1.7,0 -1.7,0 -1.8,.1 -1.7,0 -1.7-.1 -1.8,0 -1.7,0 -1.7,0 -1.8,0 -1.7,0 -1.7,.1 -1.8,0 -1.7,0 -1.7,0 -1.8,0 -1.7,0 -1.7,0 -1.7,0 -1.8,0 -1.7,0 -1.7,0 -1.8,0 -1.7,0 -1.7,0 -1.8,0 -1.7,0 -1.7-.1 -1.8,.1 -1.7-.1 -1.7,.1 -1.8,0 -1.7-.1 -1.7,0 -1.8,.1 -1.7,0z" fill="url(#g1)"/>
<path d="M157.7,805.7l1.7,0 1.8-.1 1.7,0 1.7,.1 1.8,0 1.7-.1 1.7,.1 1.8-.1 1.7,.1 1.7,0 1.8,0 1.7,0 1.7,0 1.8,0 1.7,0 1.7,0 1.8,0 1.7,0 1.7,0 1.7,0 1.8,0 1.7,0 1.7,0 1.8,0 1.7-.1 1.7,0 1.8,0 1.7,0 1.7,0 1.8,0 1.7,.1 1.7,0 1.8-.1 1.7,0 1.7,0 1.8,0 1.7,0 1.7,0 1.8,0 1.7,0 1.7,0 1.8,0 1.7,0 1.7,.1 1.8-.1 1.7,0 1.7,0 1.8,.1 1.7,0 1.7-.1 1.8,.1 1.7-.1 1.7,0 1.7,.1 1.8-.1 1.7,.1 1.7,0 1.8,.1 1.7-.1 1.7,0 1.8,0 1.7,0 1.7,0 1.8,0 1.7,0 1.7-.1 1.8,0 1.7,.1 1.7-.1 1.8,0 1.7,0 1.7,0 1.8,0 1.7,0 1.7,0 1.8,0 1.7,0 1.7,0 1.8,0 1.7,0 1.7,0 1.8,0 1.7,0 1.7,0 1.8,0 1.7,0 1.7,0 1.8,0 1.7,.1 1.7-.1 1.7,0 1.8,0 1.7,0 1.7,0 1.8,0 1.7,0 1.7,0 1.8,0 1.7,0 1.7,0 1.8,0 1.7,0 1.7,0 1.8,0 1.7,0 1.7,0 1.8,0 1.7,0 1.7,0 1.8,0 1.7,0 1.7,0 1.8,0 1.7,0 1.7,0 1.8,0 1.7,0 1.7,0 1.8,0 1.7,0 1.7,0 1.8,.1 1.7,0 1.7,0 1.7,0 1.8-.1 1.7,0 1.7,0 1.8,0 1.7,.1 1.7,0 1.8,0 1.7-.1 1.7,0 1.8,.1 1.7-.1 1.7,0 1.8,0 1.7,0 1.7-.1 1.8,.1 1.7,0 1.7,0 1.8,0 1.7,0 1.7,0 1.8,0 1.7,0 1.7,0 1.8,0 1.7,0 1.7,0 1.8,0 1.7,0 1.7,0 1.8,0 1.7,0 1.7,0 1.8,0 1.7,0 1.7-.1 1.7,.1 1.8,0 1.7,0 1.7,0 1.8-.1 1.7,0 1.7,0 1.8,.1 1.7,0 1.7,0 1.8,0 1.7-.1 1.7,.1 1.8,0 1.7,0 1.7,0 1.8,0 1.7,0 1.7,0 1.8,0 1.7,0 1.7,0 1.8,0 1.7-.1 1.7,0 1.8,.1 1.7-.1 1.7,0 1.8,.1 1.7-.1 1.7,.1 1.8-.1 1.7,.1 1.7,0 1.8,0 1.7-.1 1.7,0 1.7,0 1.8,.1 1.7,0 1.7,0 1.8,0 1.7,0 1.7,0 1.8,0 1.7,0 1.7,0 1.8-.1 1.7,0 1.7,0 1.8,0 1.7,0 1.7,0 1.8,0 1.7,0 1.7,0 1.8,0 1.7,.1 1.7,0 1.8,0 1.7,0 1.7,0 1.8,0 1.7-.1 1.7,0 1.8,.1 1.7,0 1.7-.1 1.8,0 1.7,0 1.7,.1 1.7,0 1.8,0 1.7,0 1.7,0 1.8-.1 1.7,0 1.7,0 1.8,.1 1.7-.1 1.7,0 1.8,0 1.7,.1 1.7,0 1.8-.1 1.7,.1 1.7-.1 1.8,0 1.7,0 1.7,0 1.8,0 1.7,0 1.7,0 1.8,0 1.7,0 1.7,0 1.8,0 1.7,0 1.7,.1 1.8-.1 1.7,0 1.7,.1 1.8,0 1.7,0 1.7,0 1.8,0 1.7,0 1.7-.1 1.7,.1 1.8-.1 1.7,.1 1.7-.1 1.8,0 1.7,0 1.7,0 1.8,0 1.7,0 1.7,0 1.8,0 1.7,0 1.7,0 1.8,0 1.7,0 1.7,0 1.8,0 1.7,0 1.7,0 1.8-.1 1.7,0 1.7,0 1.8,0 1.7,0 1.7-.1 1.8,.1 1.7,0 1.7,0 1.8-.1 1.7,0 1.7,0 1.8,0 1.7,0 1.7,0 1.7,0 1.8,0 1.7-.1 1.7,0 1.8,0 1.7,0 1.7,0 1.8,0 1.7-.1 1.7,.1 1.8-.1 1.7,0 1.7,.1 1.8-.1 1.7,0 1.7,0 1.8,0 1.7,0 1.7,0 1.8,0 1.7,0 1.7-.1 1.8,.1 1.7-.1 1.7,0 1.8,0 1.7,0 1.7,0 1.8,0 1.7-.1 1.7,0 1.8,0 1.7,0 1.7,0 1.8-.1 1.7,.1 1.7,0 1.7-.1 1.8,0 1.7,0 1.7,0 1.8,0 1.7,0 1.7,0 1.8-.1 1.7,.1 1.7-.1 1.8-.1 1.7,.1 1.7-.1 1.8,.1 1.7,0 1.7-.1 1.8,0 1.7,0 1.7,0 1.8,0 1.7,0 1.7,0 1.8,0 1.7,0 1.7,0 1.8,0 1.7-.1 1.7,0 1.8,0 1.7,0 1.7,0 1.8,0 1.7,0 1.7,0 1.7,.1 1.8-.1 1.7,0 1.7,0 1.8,0 1.7,0 1.7,0 1.8-.1 1.7,.1 1.7,0 1.8-.1 1.7,0 1.7,0 1.8-.1 1.7,0 1.7,0 1.8,0 1.7,0 1.7-.1 1.8,0 1.7,0 1.7,.1 1.8,0 1.7,0 1.7-.1 1.8,0 1.7,.1 1.7-.1 1.8-.1 1.7,.1 1.7,0 1.8-.1 1.7,0 1.7,0 1.8,0 1.7,0 1.7,0 1.7-.1 1.8,.1 1.7-.1 1.7,0 1.8,0 1.7-.1 1.7,0 1.8,0 1.7,.1 1.7-.1 1.8,.1 1.7-.1 1.7,.1 1.8,0 1.7,0 1.7-.1 1.8-.1 1.7-.1 1.7,.1 1.8,0 1.7,0 1.7,.1 1.8-.1 1.7,0 1.7,0 1.8-.1 1.7,0 1.7,0 1.8,0 1.7,0 1.7,0 1.8,0 1.7,0 1.7,0 1.8,0 1.7,0 1.7-.1 1.7,.1 1.8-.1 1.7,0 1.7-.1 1.8,0 1.7,0 1.7,0 1.8,0 1.7,.1 1.7,0 1.8,0 1.7,0 1.7,0 1.8,0 1.7-.1 1.7-.1 1.8,.1 1.7-.1 1.7-.1 1.8,0 1.7,.1 1.7-.1 1.8,0 1.7-.1 1.7,0 1.8,.1 1.7,.1 1.7-.1 1.8-.1 1.7,0 1.7,0 1.8,0 1.7,0 1.7,0 1.7,0 1.8,0 1.7,0 1.7,.1 1.8-.1 1.7,0 1.7,0 1.8-.1 1.7,0 1.7,.1 1.8-.1 1.7,.1 1.7-.1 1.8,0 1.7,0 1.7-.1 1.8-.1 1.7,0 1.7,.1 1.8,.1 1.7,0 1.7-.1 1.8,0 1.7,0 1.7,0 1.8,0 1.7,0 1.7-.1 1.8,0 1.7,0 1.7,0 1.8,0 1.7,.1 1.7-.1 1.8-.1 1.7,0 1.7-.1 1.7,.1 1.8,0 1.7,0 1.7-.1 1.8,0 1.7,0 1.7,0 1.8,0 1.7,0 1.7-.1 1.8,.1 1.7-.1 1.7,0 1.8,0 1.7,.1 1.7-.1 1.8,.1 1.7,0 1.7-.1 1.8,0 1.7,.1 1.7,0 1.8-.1 1.7,0 1.7,0 1.8,0 1.7-.1 1.7,0 1.8,0 1.7-.1 1.7,.1 1.8,0 1.7,0 1.7,0 1.7-.1 1.8-.1 1.7,.2 1.7,0 1.8,0 1.7-.1 1.7,0 1.8,0 1.7,0 1.7-.1 1.8,0 1.7,0 1.7,0 1.8,0 1.7,0 1.7-.1 1.8,0 1.7,0 1.7,0 1.8-.1 1.7,0 1.7-.1 1.8,0 1.7-.1 1.7,0 1.8,.1 1.7-.2 1.7,0 1.8,0 1.7,0 1.7-.1 1.8,0 1.7-.1 1.7,0 1.8-.2 1.7,.1 1.7,.1 1.7-.1 1.8-.1 1.7,0 1.7,0 1.8-.1 1.7,0 1.7-.1 1.8,0 1.7,0 1.7-.1 1.8-.1 1.7,0 1.7-.1 1.8,0 1.7,0 1.7-.1 1.8-.1 1.7,.1 1.7-.1 1.8,.1 1.7,0 1.7,0 1.8-.1 1.7-.1 1.7,0 1.8-.2 1.7,0 1.7,0 1.8,0 1.7,.1 1.7-.2 1.8,0 1.7-.1 1.7,0 1.8,0 1.7-.2 1.7,0 1.7,.1 1.8,0 1.7,.1 1.7-.3 1.8,0 1.7-.1 1.7-.1 1.8-.1 1.7,0 1.7-.1 1.8,.1 1.7,.1 1.7-.2 1.8-.1 1.7,0 1.7-.1 1.8-.1 1.7,.1 1.7,0 1.8,0 1.7-.1 1.7-.1 1.8-.1 1.7,.2 1.7-.2 1.8-2.4 1.7-3.1 1.7-.1 1.8,.4 1.7,.1 1.7,.2 1.8,.1 1.7,.1 1.7,.1 1.7,.2 1.8,.3 1.7-.1 1.7,.3 1.8,.3 1.7-.4 1.7-.2 1.8-.2 1.7-.3 1.7-.7 1.8-.3 1.7-.4 1.7-.2 1.8,0 1.7-.6 1.7-.2 1.8-.4 1.7-.1 1.7-.7 1.8-.2 1.7-.3 1.7-.5 1.8-.2 1.7-.5 1.7,0 1.8-.3 1.7-.8 1.7-.6 1.8-.4 1.7-.1 1.7-.3 1.8-.8 1.7-.3 1.7-.3 1.8-.2 1.7,.3 1.7,.9 1.7,.8 1.8,.5 1.7,.5 1.7,.2 1.8,0 1.7-.1 1.7,.3 1.8,.1 1.7,.3 1.7,0 1.8-.2 1.7,.2 1.7-.2 1.8,.4 1.7,.2 1.7,.1 1.8,.1 1.7,.1 1.7,.1 1.8-.1 1.7,.1 1.7,.2 1.8,.1 1.7-.1 1.7,.3 1.8-.5 1.7-.8 1.7-1 1.8-1.2 1.7-1.2 1.7,.2 1.8,.2 1.7,.5 1.7,.4 1.7,.2 1.8,.6 1.7,.4 1.7,.1 1.8,.2 1.7-.4 1.7-.7 1.8-.5 1.7-.1 1.7-.3 1.8-.3 1.7-.7 1.7-.3 1.8-.3 1.7-.5 1.7-.2 1.8-.2 1.7-.4 1.7,.1 1.8-.1 1.7-.1 1.7-.3 1.8,.1 1.7,.3 1.7-.1 1.8-.1 1.7,0 1.7,.1 1.8,0 1.7-.2 1.7,.2 1.8,.2 1.7-.2 1.7,.1 1.8-1.1 1.7,.4 1.7-.1 1.7-.2 1.8,0 1.7,.3 1.7,.1 1.8-.1 1.7,.2 1.7-.1 1.8-.8 1.7-.6 1.7-1 1.8-.5 1.7-.3 1.7-.1 1.8-.9 1.7-.4 1.7-.3 1.8-.5 1.7-.6 1.7-.4 1.8-.7 1.7-.5 1.7-.6 1.8-.4 1.7-.5 1.7-.3 1.8-.8 1.7-.3 1.7,0 1.8-.4 1.7-.2 1.7-.3 1.8-.1 1.7-.1 1.7-.2 1.7-.1 1.8,0 1.7-.3 1.7,.1 1.8-.4 1.7-.2 1.7,0 1.8,0 1.7,.3 1.7-.1 1.8-.6 1.7,.1 1.7-.2 1.8,.2 1.7-.6 1.7-.2 1.8,.2 1.7-.1 1.7-.5 1.8-.1 1.7,.4 1.7-.5 1.8-.6 1.7-.1 1.7-.5 1.8,0 1.7-.4 1.7-.4 1.8-.1 1.7-.2 1.7-.2 1.8-.1 1.7,0 1.7-.4 1.8-.5 1.7-.3 1.7-.1 1.7-.4 1.8-.6 1.7,.5 1.7-.3 1.8-.3 1.7,0 1.7-.3 1.8-.1 1.7-.2 1.7-.8 1.8-.2 1.7,.1 1.7-.6 1.8-.6 1.7-.2 1.7,0 1.8,.2 1.7-1.2 1.7-.8 1.8-.5 1.7,0 1.7-.8 1.8,0 1.7-.3 1.7-.3 1.8-.1 1.7-.6 1.7,.1 1.8-.8 1.7-.4 1.7-1.2 1.8,0 1.7-.7 1.7-.6 1.8,0 1.7-.2 1.7-.1 1.7-.6 1.8-.1 1.7-.5 1.7-.6 1.8-1.2 1.7-.7 1.7-1.1 1.8-1.9 1.7-.6 1.7-1.8 1.8-.2 1.7,0 1.7-1.1 1.8-.6 1.7-.4 1.7-.6 1.8-.5 1.7,.5 1.7-1.3 1.8,.4 1.7,.2 1.7,.1 1.8,.1 1.7,.2 1.7-.4 1.8-.4 1.7,0 1.7-.9 1.8-.2 1.7,.9 1.7,.2 1.8,.4 1.7-.4 1.7,.2 1.7-.4 1.8-.8 1.7,.7 1.7-1.1 1.8,1.2 1.7-1.1 1.7,.4 1.8-.7 1.7-.1 1.7-.1 1.8-.6 1.7,0 1.7,.5 1.8-.7 1.7,.5 1.7-.1 1.8-.5 1.7,.1 1.7-.1 1.8-.4 1.7,1.3 1.7,.2 1.8-.5 1.7-.3 1.7-.4 1.8,.2 1.7-.3 1.7-20.2 1.8,.5 1.7-.9 1.7-.3 1.8,.1 1.7-1.3 1.7-1.3 1.8-.7 1.7-1.1 1.7,0 1.7-.4 1.8-1.3 1.7,.3 1.7-.9 1.8-2 1.7-1.4 1.7-1.5 1.8-.5 1.7-1.5 1.7,2.2 1.8-.9 1.7-1.1 1.7-1.2 1.8-1.8 1.7-.1 1.7,.4 1.8-1.8 1.7,.6 1.7-1.4 1.8,.3 1.7-1.3 1.7-1.5 1.8-.9 1.7,.5 1.7,1.7 1.8,.9 1.7,.4 1.7-.6 1.8-.4 1.7,0 1.7,.1 1.8-.9 1.7,1.4 1.7,.5 1.7,.8 1.8-.1 1.7-.1 1.7,.4 1.8,.1 1.7,.8 1.7,.1 1.8,.1 1.7,.5 1.7,1.2 1.8-.2 1.7,.5 1.7-1.4 1.8,.1 1.7-1.1 1.7-.7 1.8,.7 1.7,.3 1.7-1.2 1.8-.4 1.7,.5 1.7,.2 1.8-1.2 1.7-2.4 1.7,.1 1.8-1.3 1.7,.6 1.7-.9 1.8,1 1.7,.2 1.7-.1 1.8-1.4 1.7-1 1.7,0 1.8-.7 1.7-.6 1.7-.8 1.7-2.1 1.8,.4 1.7-2.2 1.7-.6 1.8,.9 1.7,.4 1.7-.5 1.8,.3 1.7-.5 1.7-.4 1.8-1.7 1.7,.4 1.7-2.5 1.8,0 1.7,.6 1.7,1.5 1.8,0 1.7,.6 1.7-1 1.8-.9 1.7,.3 1.7-.9 1.8,1 1.7-2 1.7,.8 1.8-.2 1.7-.6 1.7,1.8 1.8-.9 1.7,.2 1.7-1.1 1.8-.2 1.7-.9 1.7,1 1.7,0 1.8-.3 1.7,.5 1.7-1.1 1.8-1.1 1.7,.5 1.7-1 1.8,1.3 1.7-1 1.7,.3 1.8-.8 1.7-.3 1.7-.5 1.8,1 1.7,.6 1.7,1.6 1.8-.9 1.7,.4 1.7-.3 1.8,.6 1.7-1.1 1.7,0 1.8-1.1 1.7-.9 1.7-.2 1.8-.8 1.7,.4 1.7-.1 1.8-1.7 1.7-.1 1.7,.5 1.8-.1 1.7-.1 1.7-.5 1.8,.5 1.7-.6 1.7,0 1.7,1 1.8-.3 1.7,.3 .3-.8 0,43.6 -.3,.4 -1.7-.3 -1.8-.5 -1.7-.1 -1.7,.1 -1.7,.8 -1.8-.5 -1.7-.3 -1.7-.6 -1.8,.6 -1.7-.5 -1.7,.3 -1.8-.1 -1.7-.1 -1.7,.2 -1.8,.3 -1.7-.3 -1.7,.9 -1.8,.8 -1.7-.4 -1.7,1 -1.8-1 -1.7,.2 -1.7-.4 -1.8,.9 -1.7-.9 -1.7-.6 -1.8-.9 -1.7,.4 -1.7,0 -1.8-.2 -1.7-.3 -1.7,.1 -1.8-.8 -1.7,.2 -1.7-.4 -1.8,.8 -1.7,.9 -1.7-.3 -1.8-.3 -1.7,.4 -1.7-.9 -1.7,.5 -1.8,0 -1.7,.7 -1.7-.7 -1.8,.2 -1.7-1.3 -1.7-.2 -1.8,.3 -1.7-.9 -1.7,1.4 -1.8-.7 -1.7,.6 -1.7-.2 -1.8,.7 -1.7,.8 -1.7-1.3 -1.8,.2 -1.7-1 -1.7-.8 -1.8,.9 -1.7,1.7 -1.7-.2 -1.8,1.1 -1.7,.2 -1.7,.7 -1.8-.3 -1.7,.5 -1.7-.4 -1.8-1.2 -1.7,.2 -1.7,1.6 -1.8,.2 -1.7,1.8 -1.7-.2 -1.7,1.2 -1.8-.3 -1.7,.5 -1.7,.9 -1.8,.7 -1.7,.2 -1.7,0 -1.8-1.1 -1.7,.2 -1.7-.2 -1.8,1.1 -1.7-.3 -1.7,2.1 -1.8,.6 -1.7-.5 -1.7-.3 -1.8,.6 -1.7,1.2 -1.7-.3 -1.8-.9 -1.7,.9 -1.7,.9 -1.8-.1 -1.7,1.2 -1.7,.8 -1.8,.2 -1.7-.4 -1.7-.6 -1.8,.6 -1.7,.8 -1.7-.1 -1.8,.2 -1.7-.1 -1.7,.6 -1.8,.9 -1.7,.3 -1.7,.2 -1.7-1 -1.8,.9 -1.7,0 -1.7,.5 -1.8,0 -1.7,1.3 -1.7,.7 -1.8-.1 -1.7-.1 -1.7-.5 -1.8-.1 -1.7,1 -1.7,0 -1.8-.6 -1.7,.2 -1.7-1.1 -1.8,.4 -1.7-.8 -1.7,.3 -1.8,0 -1.7,1.1 -1.7,.1 -1.8,.5 -1.7-2.2 -1.7,.5 -1.8-.5 -1.7,.9 -1.7,.2 -1.8,1 -1.7,.1 -1.7-.9 -1.8,.7 -1.7,.1 -1.7-.9 -1.7,.2 -1.8-.1 -1.7,.4 -1.7,.5 -1.8-.5 -1.7-.3 -1.7-.2 -1.8-1.2 -1.7,16.5 -1.7-.7 -1.8-.4 -1.7,.8 -1.7,.3 -1.8,.8 -1.7,.2 -1.7-1.2 -1.8,.4 -1.7,.3 -1.7,.1 -1.8,.5 -1.7,.7 -1.7-.5 -1.8,.7 -1.7-.1 -1.7,.4 -1.8,.8 -1.7,.3 -1.7,.1 -1.8,.8 -1.7-.3 -1.7,.7 -1.8-.9 -1.7,1.4 -1.7-.4 -1.8,.9 -1.7,.5 -1.7,.4 -1.7,.1 -1.8,0 -1.7,.3 -1.7-.7 -1.8,.5 -1.7,.9 -1.7-.1 -1.8,.9 -1.7,.4 -1.7,.1 -1.8,.3 -1.7-.2 -1.7,.2 -1.8-.3 -1.7,1.1 -1.7,.2 -1.8,.3 -1.7,.5 -1.7-.2 -1.8,.6 -1.7,.4 -1.7-.4 -1.8-.1 -1.7,.6 -1.7,.1 -1.8,.8 -1.7,.5 -1.7,0 -1.8,.7 -1.7,.4 -1.7,.3 -1.8,.1 -1.7,.6 -1.7,0 -1.7,.2 -1.8-.1 -1.7,.4 -1.7,.6 -1.8,.1 -1.7,1 -1.7,.5 -1.8,.4 -1.7,.1 -1.7,.4 -1.8,.4 -1.7,.1 -1.7,.3 -1.8,0 -1.7,.4 -1.7,0 -1.8,.7 -1.7,.6 -1.7,1.1 -1.8-.2 -1.7,.2 -1.7,0 -1.8,.7 -1.7,.6 -1.7-.6 -1.8,.1 -1.7,.6 -1.7-.5 -1.8-.3 -1.7,.2 -1.7-.1 -1.8,.2 -1.7,.3 -1.7-.6 -1.8,.3 -1.7,.3 -1.7,.1 -1.7,0 -1.8,.3 -1.7,.3 -1.7,0 -1.8,0 -1.7,.1 -1.7,.1 -1.8-.1 -1.7,.2 -1.7,.3 -1.8-.2 -1.7,.4 -1.7-.2 -1.8,.4 -1.7,.4 -1.7-.4 -1.8,.1 -1.7,.5 -1.7,.1 -1.8-.3 -1.7,.1 -1.7,.4 -1.8,0 -1.7,.3 -1.7-.1 -1.8,.7 -1.7,0 -1.7-.2 -1.8,0 -1.7,0 -1.7,0 -1.8,.3 -1.7,.1 -1.7,.2 -1.8,.1 -1.7,0 -1.7,.3 -1.7,0 -1.8,.1 -1.7,.3 -1.7,.2 -1.8,.3 -1.7,.3 -1.7-.1 -1.8,.4 -1.7,.1 -1.7,.2 -1.8,.2 -1.7,.3 -1.7,.3 -1.8,.2 -1.7,.1 -1.7,.3 -1.8,.1 -1.7,0 -1.7,0 -1.8,.6 -1.7-.2 -1.7-.1 -1.8,.1 -1.7,.6 -1.7,.2 -1.8,.4 -1.7,.3 -1.7-.1 -1.8,.3 -1.7,0 -1.7-.1 -1.8,.2 -1.7,.3 -1.7,.3 -1.7-.2 -1.8,1.3 -1.7,0 -1.7,.3 -1.8,0 -1.7,0 -1.7,.2 -1.8,.3 -1.7,.1 -1.7,.2 -1.8,.1 -1.7,.3 -1.7-.1 -1.8,.2 -1.7,.4 -1.7,.1 -1.8,.2 -1.7,.2 -1.7,.2 -1.8-.1 -1.7-.1 -1.7,.4 -1.8,.1 -1.7,0 -1.7,.4 -1.8,.2 -1.7,.1 -1.7,0 -1.8,.3 -1.7,.5 -1.7,.1 -1.8-.3 -1.7,.4 -1.7,0 -1.8-.1 -1.7,.2 -1.7,.1 -1.7,0 -1.8,.1 -1.7,.2 -1.7,.3 -1.8,.5 -1.7,0 -1.7-.1 -1.8,0 -1.7-.2 -1.7,0 -1.8-.1 -1.7-.2 -1.7-.2 -1.8,.2 -1.7-.1 -1.7-.2 -1.8-.2 -1.7,0 -1.7-.2 -1.8-.5 -1.7,.2 -1.7-.2 -1.8,.2 -1.7-.1 -1.7-.3 -1.8-.1 -1.7-.3 -1.7,.1 -1.8,0 -1.7-.3 -1.7-.4 -1.8-.5 -1.7-.8 -1.7-.8 -1.7-.3 -1.8,.2 -1.7,.3 -1.7,.3 -1.8,.7 -1.7,.3 -1.7,.1 -1.8,.3 -1.7,.6 -1.7,.8 -1.8,.3 -1.7,0 -1.7,.5 -1.8,.1 -1.7,.5 -1.7,.3 -1.8,.2 -1.7,.7 -1.7,.1 -1.8,.4 -1.7,.2 -1.7,.6 -1.8,0 -1.7,.2 -1.7,.4 -1.8,.3 -1.7,.7 -1.7,.3 -1.8,.2 -1.7,.2 -1.7,.4 -1.8-.3 -1.7-.3 -1.7,.1 -1.8-.3 -1.7-.2 -1.7-.1 -1.7-.1 -1.8-.1 -1.7-.2 -1.7-.1 -1.8-.4 -1.7,.2 -1.7,2.7 -1.8,2.2 -1.7,.1 -1.7-.2 -1.8,0 -1.7,.1 -1.7,.1 -1.8,0 -1.7,0 -1.7-.1 -1.8,.1 -1.7,.1 -1.7,0 -1.8,.1 -1.7,.2 -1.7-.1 -1.8-.1 -1.7,.1 -1.7,0 -1.8,.1 -1.7,.1 -1.7,.1 -1.8,0 -1.7,.3 -1.7-.1 -1.8,0 -1.7-.1 -1.7,0 -1.7,.2 -1.8,0 -1.7,0 -1.7,.1 -1.8,0 -1.7,.2 -1.7-.1 -1.8,0 -1.7,0 -1.7,0 -1.8,.2 -1.7,0 -1.7,.1 -1.8,.1 -1.7,0 -1.7,0 -1.8-.1 -1.7,.1 -1.7-.1 -1.8,.1 -1.7,.1 -1.7,0 -1.8,0 -1.7,.1 -1.7,0 -1.8,.1 -1.7,.1 -1.7,0 -1.8,0 -1.7,.1 -1.7,0 -1.8,.1 -1.7,0 -1.7,0 -1.8,.1 -1.7,.1 -1.7-.1 -1.7-.1 -1.8,.2 -1.7,0 -1.7,.1 -1.8,0 -1.7,.1 -1.7,0 -1.8,0 -1.7,0 -1.7,.2 -1.8-.1 -1.7,0 -1.7,.1 -1.8,0 -1.7,.1 -1.7,0 -1.8,.1 -1.7,0 -1.7,0 -1.8,0 -1.7,.1 -1.7,0 -1.8,0 -1.7,0 -1.7,0 -1.8,0 -1.7,.1 -1.7,0 -1.8,0 -1.7,0 -1.7,.1 -1.8,0 -1.7,0 -1.7-.2 -1.8,.1 -1.7,.1 -1.7,0 -1.7,0 -1.8,0 -1.7-.1 -1.7,.1 -1.8,0 -1.7,0 -1.7,.1 -1.8,0 -1.7,0 -1.7,0 -1.8,.1 -1.7,0 -1.7-.1 -1.8,0 -1.7,.1 -1.7,0 -1.8-.1 -1.7,.1 -1.7-.1 -1.8,0 -1.7,0 -1.7,.1 -1.8-.1 -1.7,.1 -1.7,0 -1.8,0 -1.7,0 -1.7,0 -1.8,0 -1.7,.1 -1.7,0 -1.8,0 -1.7-.1 -1.7,.1 -1.7,0 -1.8,.1 -1.7,.1 -1.7-.1 -1.8,0 -1.7,0 -1.7,0 -1.8,0 -1.7,.1 -1.7,0 -1.8,0 -1.7,0 -1.7,0 -1.8,0 -1.7,.1 -1.7,0 -1.8-.1 -1.7-.1 -1.7,0 -1.8,.1 -1.7,.1 -1.7,0 -1.8,0 -1.7,.1 -1.7-.1 -1.8,.1 -1.7-.1 -1.7,0 -1.8,.1 -1.7,0 -1.7,0 -1.8,.1 -1.7-.1 -1.7,0 -1.8,0 -1.7,0 -1.7,0 -1.7,0 -1.8,0 -1.7,0 -1.7,0 -1.8,.1 -1.7,.1 -1.7-.1 -1.8-.1 -1.7,0 -1.7,.1 -1.8,0 -1.7,.1 -1.7-.1 -1.8,0 -1.7,.1 -1.7,.1 -1.8-.1 -1.7,.1 -1.7,.1 -1.8,0 -1.7,0 -1.7,0 -1.8,0 -1.7,0 -1.7-.1 -1.8,0 -1.7,0 -1.7,0 -1.8,0 -1.7,.1 -1.7,0 -1.8,.1 -1.7-.1 -1.7,.1 -1.7,0 -1.8,0 -1.7,0 -1.7,0 -1.8,0 -1.7,0 -1.7,0 -1.8,0 -1.7,0 -1.7,0 -1.8,.1 -1.7,0 -1.7,0 -1.8,.1 -1.7-.1 -1.7,0 -1.8,0 -1.7-.1 -1.7,.1 -1.8,.1 -1.7,.1 -1.7,0 -1.8,0 -1.7-.1 -1.7,.1 -1.8-.1 -1.7,.1 -1.7-.1 -1.8,0 -1.7,0 -1.7,.1 -1.8,0 -1.7,0 -1.7,.1 -1.8-.1 -1.7,.1 -1.7,0 -1.7,0 -1.8,0 -1.7,0 -1.7,0 -1.8,.1 -1.7,0 -1.7-.1 -1.8,.1 -1.7,.1 -1.7-.1 -1.8,0 -1.7,.1 -1.7,0 -1.8,0 -1.7-.1 -1.7,0 -1.8,0 -1.7,.1 -1.7,0 -1.8,0 -1.7,0 -1.7,0 -1.8,.1 -1.7,0 -1.7,0 -1.8,.1 -1.7,0 -1.7-.1 -1.8,.1 -1.7,0 -1.7,0 -1.8,0 -1.7,0 -1.7,0 -1.8,.1 -1.7-.1 -1.7,0 -1.7,0 -1.8,0 -1.7,0 -1.7,0 -1.8,0 -1.7,0 -1.7,.1 -1.8,0 -1.7,0 -1.7,0 -1.8,0 -1.7,0 -1.7,0 -1.8,0 -1.7,0 -1.7,0 -1.8,0 -1.7,.1 -1.7,0 -1.8-.1 -1.7,.1 -1.7-.1 -1.8,.1 -1.7,.1 -1.7-.1 -1.8,.1 -1.7,0 -1.7,0 -1.8,0 -1.7,0 -1.7,0 -1.8,0 -1.7,.1 -1.7,0 -1.7-.1 -1.8,.1 -1.7,0 -1.7,0 -1.8,0 -1.7,0 -1.7,.1 -1.8,0 -1.7,0 -1.7,0 -1.8,0 -1.7,0 -1.7,.1 -1.8-.1 -1.7,.1 -1.7,0 -1.8,0 -1.7,0 -1.7,0 -1.8,0 -1.7,0 -1.7,0 -1.8,.1 -1.7-.1 -1.7,0 -1.8,.1 -1.7-.1 -1.7,.1 -1.8,0 -1.7,0 -1.7,0 -1.8,0 -1.7,0 -1.7,.1 -1.8,0 -1.7,0 -1.7,0 -1.7,0 -1.8,0 -1.7,0 -1.7,0 -1.8,.1 -1.7,0 -1.7,0 -1.8-.1 -1.7,.1 -1.7,0 -1.8,0 -1.7,0 -1.7,0 -1.8,.1 -1.7,0 -1.7,0 -1.8,0 -1.7,0 -1.7,0 -1.8,0 -1.7,0 -1.7,0 -1.8,0 -1.7,0 -1.7,0 -1.8,0 -1.7,0 -1.7,0 -1.8,0 -1.7,.1 -1.7-.1 -1.8,.1 -1.7-.1 -1.7,.1 -1.7,0 -1.8,0 -1.7,0 -1.7,0 -1.8,0 -1.7-.1 -1.7,0 -1.8,.1 -1.7-.1 -1.7,0 -1.8,0 -1.7,0 -1.7,0 -1.8,0 -1.7,0 -1.7,0 -1.8,0 -1.7,0 -1.7,0 -1.8,0 -1.7,.1 -1.7-.1 -1.8,.1 -1.7,0 -1.7-.1 -1.8,0 -1.7,0 -1.7,.1 -1.8-.1 -1.7,0 -1.7,0 -1.8,.1 -1.7,0 -1.7,0 -1.8,0 -1.7,0 -1.7-.1 -1.7,0 -1.8,0 -1.7,.1 -1.7,0 -1.8-.1 -1.7,0 -1.7,.1 -1.8,0 -1.7,0 -1.7,0 -1.8,0 -1.7,0 -1.7-.1 -1.8,0 -1.7,0 -1.7,0 -1.8,0 -1.7,0 -1.7,0 -1.8,0 -1.7,0 -1.7,0 -1.8,.1 -1.7,0 -1.7,0 -1.8,0 -1.7,0 -1.7,0 -1.8,0 -1.7,0 -1.7,0 -1.8-.1 -1.7,0 -1.7,0 -1.7,.1 -1.8,0 -1.7,0 -1.7-.1 -1.8,.1 -1.7-.1 -1.7,.1 -1.8-.1 -1.7,0 -1.7,.1 -1.8-.1 -1.7,0 -1.7,.1 -1.8,0 -1.7,0 -1.7,0 -1.8,0 -1.7,0 -1.7,0 -1.8,0 -1.7,0 -1.7,0 -1.8,0 -1.7-.1 -1.7,.1 -1.8,0 -1.7,0 -1.7,0 -1.8-.1 -1.7,0 -1.7,0 -1.8,.1 -1.7,0 -1.7,0 -1.8,0 -1.7-.1 -1.7,.1 -1.7,0 -1.8,0 -1.7,0 -1.7,0 -1.8,0 -1.7,0 -1.7,0 -1.8,0 -1.7,0 -1.7,0 -1.8,0 -1.7,0 -1.7,0 -1.8,0 -1.7,0 -1.7,0 -1.8,0 -1.7,0 -1.7,0 -1.8-.1 -1.7,.1 -1.7,0 -1.8,0 -1.7,0 -1.7,.1 -1.8-.1 -1.7,0 -1.7,.1 -1.8,0 -1.7,0 -1.7-.1 -1.8,0 -1.7,0 -1.7,0 -1.8,.1 -1.7,0 -1.7,0 -1.7,0 -1.8-.1 -1.7,0 -1.7,0 -1.8,0 -1.7,0 -1.7,0 -1.8,0 -1.7,0 -1.7,0 -1.8,0 -1.7,0 -1.7,0 -1.8,0 -1.7,0 -1.7,0 -1.8,0 -1.7,0 -1.7,0 -1.8,0 -1.7,0 -1.7,0 -1.8,0 -1.7,0 -1.7,0 -1.8,0 -1.7,0 -1.7,0 -1.8,0 -1.7,0 -1.7,0 -1.8,0 -1.7,0 -1.7,.1 -1.7-.1 -1.8,0 -1.7,0 -1.7,0 -1.8,0 -1.7,0 -1.7,0 -1.8,0 -1.7,0 -1.7,0 -1.8,0 -1.7,0 -1.7,0 -1.8,0 -1.7,0 -1.7,0 -1.8,0 -1.7,0 -1.7,0 -1.8,0 -1.7,.1 -1.7-.1 -1.8,0 -1.7,.1 -1.7,0 -1.8,0 -1.7,0 -1.7,0 -1.8,0 -1.7,0 -1.7,.1 -1.8-.1 -1.7,0 -1.7-.1 -1.8,.1 -1.7-.1 -1.7,0 -1.7,.1 -1.8-.1 -1.7,.1 -1.7,0 -1.8-.1 -1.7,0 -1.7,0 -1.8,.1 -1.7-.1 -1.7,0 -1.8,0 -1.7,0 -1.7,0 -1.8,0 -1.7,0 -1.7,0 -1.8,0 -1.7,0 -1.7,0 -1.8,.1 -1.7,0 -1.7-.1 -1.8,0 -1.7,0 -1.7,0 -1.8,0 -1.7,0 -1.7,.1 -1.8,0 -1.7,0 -1.7,0 -1.8,0 -1.7,0 -1.7,0 -1.7,0 -1.8,0 -1.7,0 -1.7,0 -1.8,0 -1.7,0 -1.7,0 -1.8,0 -1.7,0 -1.7-.1 -1.8,.1 -1.7-.1 -1.7,.1 -1.8,0 -1.7-.1 -1.7,0 -1.8,.1 -1.7,0z" fill="url(#g2)"/>
<path d="M157.7,805.7l1.7,0 1.8-.1 1.7,0 1.7,.1 1.8,0 1.7-.1 1.7,.1 1.8-.1 1.7,.1 1.7,0 1.8,0 1.7,0 1.7,0 1.8,0 1.7,0 1.7,0 1.8,0 1.7,0 1.7,0 1.7,0 1.8,0 1.7,0 1.7,0 1.8,0 1.7-.1 1.7,0 1.8,0 1.7,0 1.7,0 1.8,0 1.7,.1 1.7,0 1.8-.1 1.7,0 1.7,0 1.8,0 1.7,0 1.7,0 1.8,0 1.7,0 1.7,0 1.8,0 1.7,0 1.7,.1 1.8-.1 1.7,0 1.7,0 1.8,.1 1.7,0 1.7-.1 1.8,.1 1.7-.1 1.7,0 1.7,.1 1.8-.1 1.7,.1 1.7,0 1.8,.1 1.7-.1 1.7,0 1.8,0 1.7,0 1.7,0 1.8,0 1.7,0 1.7-.1 1.8,0 1.7,.1 1.7-.1 1.8,0 1.7,0 1.7,0 1.8,0 1.7,0 1.7,0 1.8,0 1.7,0 1.7,0 1.8,0 1.7,0 1.7,0 1.8,0 1.7,0 1.7,0 1.8,0 1.7,0 1.7,0 1.8,0 1.7,.1 1.7-.1 1.7,0 1.8,0 1.7,0 1.7,0 1.8,0 1.7,0 1.7,0 1.8,0 1.7,0 1.7,0 1.8,0 1.7,0 1.7,0 1.8,0 1.7,0 1.7,0 1.8,0 1.7,0 1.7,0 1.8,0 1.7,0 1.7,0 1.8,0 1.7,0 1.7,0 1.8,0 1.7,0 1.7,0 1.8,0 1.7,0 1.7,0 1.8,.1 1.7,0 1.7,0 1.7,0 1.8-.1 1.7,0 1.7,0 1.8,0 1.7,.1 1.7,0 1.8,0 1.7-.1 1.7,0 1.8,.1 1.7-.1 1.7,0 1.8,0 1.7,0 1.7-.1 1.8,.1 1.7,0 1.7,0 1.8,0 1.7,0 1.7,0 1.8,0 1.7,0 1.7,0 1.8,0 1.7,0 1.7,0 1.8,0 1.7,0 1.7,0 1.8,0 1.7,0 1.7,0 1.8,0 1.7,0 1.7-.1 1.7,.1 1.8,0 1.7,0 1.7,0 1.8-.1 1.7,0 1.7,0 1.8,.1 1.7,0 1.7,0 1.8,0 1.7-.1 1.7,.1 1.8,0 1.7,0 1.7,0 1.8,0 1.7,0 1.7,0 1.8,0 1.7,0 1.7,0 1.8,0 1.7-.1 1.7,0 1.8,.1 1.7-.1 1.7,0 1.8,.1 1.7-.1 1.7,.1 1.8-.1 1.7,.1 1.7,0 1.8,0 1.7-.1 1.7,0 1.7,0 1.8,.1 1.7,0 1.7,0 1.8,0 1.7,0 1.7,0 1.8,0 1.7,0 1.7,0 1.8-.1 1.7,0 1.7,0 1.8,0 1.7,0 1.7,0 1.8,0 1.7,0 1.7,0 1.8,0 1.7,.1 1.7,0 1.8,0 1.7,0 1.7,0 1.8,0 1.7-.1 1.7,0 1.8,.1 1.7,0 1.7-.1 1.8,0 1.7,0 1.7,.1 1.7,0 1.8,0 1.7,0 1.7,0 1.8-.1 1.7,0 1.7,0 1.8,.1 1.7-.1 1.7,0 1.8,0 1.7,.1 1.7,0 1.8-.1 1.7,.1 1.7-.1 1.8,0 1.7,0 1.7,0 1.8,0 1.7,0 1.7,0 1.8,0 1.7,0 1.7,0 1.8,0 1.7,0 1.7,.1 1.8-.1 1.7,0 1.7,.1 1.8,0 1.7,0 1.7,0 1.8,0 1.7,0 1.7-.1 1.7,.1 1.8-.1 1.7,.1 1.7-.1 1.8,0 1.7,0 1.7,0 1.8,0 1.7,0 1.7,0 1.8,0 1.7,0 1.7,0 1.8,0 1.7,0 1.7,0 1.8,0 1.7,0 1.7,0 1.8-.1 1.7,0 1.7,0 1.8,0 1.7,0 1.7-.1 1.8,.1 1.7,0 1.7,0 1.8-.1 1.7,0 1.7,0 1.8,0 1.7,0 1.7,0 1.7,0 1.8,0 1.7-.1 1.7,0 1.8,0 1.7,0 1.7,0 1.8,0 1.7-.1 1.7,.1 1.8-.1 1.7,0 1.7,.1 1.8-.1 1.7,0 1.7,0 1.8,0 1.7,0 1.7,0 1.8,0 1.7,0 1.7-.1 1.8,.1 1.7-.1 1.7,0 1.8,0 1.7,0 1.7,0 1.8,0 1.7-.1 1.7,0 1.8,0 1.7,0 1.7,0 1.8-.1 1.7,.1 1.7,0 1.7-.1 1.8,0 1.7,0 1.7,0 1.8,0 1.7,0 1.7,0 1.8-.1 1.7,.1 1.7-.1 1.8-.1 1.7,.1 1.7-.1 1.8,.1 1.7,0 1.7-.1 1.8,0 1.7,0 1.7,0 1.8,0 1.7,0 1.7,0 1.8,0 1.7,0 1.7,0 1.8,0 1.7-.1 1.7,0 1.8,0 1.7,0 1.7,0 1.8,0 1.7,0 1.7,0 1.7,.1 1.8-.1 1.7,0 1.7,0 1.8,0 1.7,0 1.7,0 1.8-.1 1.7,.1 1.7,0 1.8-.1 1.7,0 1.7,0 1.8-.1 1.7,0 1.7,0 1.8,0 1.7,0 1.7-.1 1.8,0 1.7,0 1.7,.1 1.8,0 1.7,0 1.7-.1 1.8,0 1.7,.1 1.7-.1 1.8-.1 1.7,.1 1.7,0 1.8-.1 1.7,0 1.7,0 1.8,0 1.7,0 1.7,0 1.7-.1 1.8,.1 1.7-.1 1.7,0 1.8,0 1.7-.1 1.7,0 1.8,0 1.7,.1 1.7-.1 1.8,.1 1.7-.1 1.7,.1 1.8,0 1.7,0 1.7-.1 1.8-.1 1.7-.1 1.7,.1 1.8,0 1.7,0 1.7,.1 1.8-.1 1.7,0 1.7,0 1.8-.1 1.7,0 1.7,0 1.8,0 1.7,0 1.7,0 1.8,0 1.7,0 1.7,0 1.8,0 1.7,0 1.7-.1 1.7,.1 1.8-.1 1.7,0 1.7-.1 1.8,0 1.7,0 1.7,0 1.8,0 1.7,.1 1.7,0 1.8,0 1.7,0 1.7,0 1.8,0 1.7-.1 1.7-.1 1.8,.1 1.7-.1 1.7-.1 1.8,0 1.7,.1 1.7-.1 1.8,0 1.7-.1 1.7,0 1.8,.1 1.7,.1 1.7-.1 1.8-.1 1.7,0 1.7,0 1.8,0 1.7,0 1.7,0 1.7,0 1.8,0 1.7,0 1.7,.1 1.8-.1 1.7,0 1.7,0 1.8-.1 1.7,0 1.7,.1 1.8-.1 1.7,.1 1.7-.1 1.8,0 1.7,0 1.7-.1 1.8-.1 1.7,0 1.7,.1 1.8,.1 1.7,0 1.7-.1 1.8,0 1.7,0 1.7,0 1.8,0 1.7,0 1.7-.1 1.8,0 1.7,0 1.7,0 1.8,0 1.7,.1 1.7-.1 1.8-.1 1.7,0 1.7-.1 1.7,.1 1.8,0 1.7,0 1.7-.1 1.8,0 1.7,0 1.7,0 1.8,0 1.7,0 1.7-.1 1.8,.1 1.7-.1 1.7,0 1.8,0 1.7,.1 1.7-.1 1.8,.1 1.7,0 1.7-.1 1.8,0 1.7,.1 1.7,0 1.8-.1 1.7,0 1.7,0 1.8,0 1.7-.1 1.7,0 1.8,0 1.7-.1 1.7,.1 1.8,0 1.7,0 1.7,0 1.7-.1 1.8-.1 1.7,.2 1.7,0 1.8,0 1.7-.1 1.7,0 1.8,0 1.7,0 1.7-.1 1.8,0 1.7,0 1.7,0 1.8,0 1.7,0 1.7-.1 1.8,0 1.7,0 1.7,0 1.8-.1 1.7,0 1.7-.1 1.8,0 1.7-.1 1.7,0 1.8,.1 1.7-.2 1.7,0 1.8,0 1.7,0 1.7-.1 1.8,0 1.7-.1 1.7,0 1.8-.2 1.7,.1 1.7,.1 1.7-.1 1.8-.1 1.7,0 1.7,0 1.8-.1 1.7,0 1.7-.1 1.8,0 1.7,0 1.7-.1 1.8-.1 1.7,0 1.7-.1 1.8,0 1.7,0 1.7-.1 1.8-.1 1.7,.1 1.7-.1 1.8,.1 1.7,0 1.7,0 1.8-.1 1.7-.1 1.7,0 1.8-.2 1.7,0 1.7,0 1.8,0 1.7,.1 1.7-.2 1.8,0 1.7-.1 1.7,0 1.8,0 1.7-.2 1.7,0 1.7,.1 1.8,0 1.7,.1 1.7-.3 1.8,0 1.7-.1 1.7-.1 1.8-.1 1.7,0 1.7-.1 1.8,.1 1.7,.1 1.7-.2 1.8-.1 1.7,0 1.7-.1 1.8-.1 1.7,.1 1.7,0 1.8,0 1.7-.1 1.7-.1 1.8,0 1.7,.2 1.7-.1 1.8-2.2 1.7-2.7 1.7-.2 1.8,.4 1.7,.1 1.7,.2 1.8,.1 1.7,.1 1.7,.1 1.7,.2 1.8,.3 1.7-.1 1.7,.3 1.8,.3 1.7-.4 1.7-.2 1.8-.2 1.7-.3 1.7-.7 1.8-.3 1.7-.4 1.7-.2 1.8,0 1.7-.6 1.7-.2 1.8-.4 1.7-.1 1.7-.7 1.8-.2 1.7-.3 1.7-.5 1.8-.1 1.7-.5 1.7,0 1.8-.3 1.7-.8 1.7-.6 1.8-.3 1.7-.1 1.7-.3 1.8-.7 1.7-.3 1.7-.3 1.8-.2 1.7,.3 1.7,.8 1.7,.8 1.8,.5 1.7,.4 1.7,.3 1.8,0 1.7-.1 1.7,.3 1.8,.1 1.7,.3 1.7,.1 1.8-.2 1.7,.2 1.7-.2 1.8,.5 1.7,.2 1.7,0 1.8,.2 1.7,.2 1.7,.1 1.8-.2 1.7,.2 1.7,.2 1.8,.1 1.7,0 1.7,.2 1.8,0 1.7,.1 1.7,0 1.8-.5 1.7-.3 1.7-.2 1.8-.1 1.7,0 1.7-.1 1.7-.2 1.8,.1 1.7,0 1.7-.4 1.8,.3 1.7-.1 1.7-.5 1.8-.3 1.7,0 1.7-.1 1.8-.2 1.7-.4 1.7,0 1.8-.1 1.7-.4 1.7,.1 1.8,.1 1.7-.2 1.7-.2 1.8-.2 1.7-.1 1.7-.4 1.8-.2 1.7,.1 1.7-.3 1.8-.1 1.7-.2 1.7-.1 1.8-.3 1.7-.2 1.7,0 1.8,0 1.7-.3 1.7,0 1.8-1.3 1.7,.2 1.7-.3 1.7-.3 1.8-.2 1.7,.1 1.7,0 1.8-.3 1.7,.1 1.7-.3 1.8-.4 1.7-.2 1.7-.6 1.8-.1 1.7,.1 1.7,.2 1.8-.6 1.7,0 1.7,0 1.8-.1 1.7-.3 1.7-.1 1.8-.2 1.7-.3 1.7-.3 1.8-.2 1.7-.2 1.7-.1 1.8-.4 1.7,.1 1.7-.3 1.8-.3 1.7-.2 1.7-.3 1.8-.1 1.7,0 1.7-.3 1.7,0 1.8-.1 1.7-.2 1.7-.1 1.8-.3 1.7,0 1.7,0 1.8,0 1.7,.2 1.7,0 1.8-.7 1.7,.1 1.7-.3 1.8,0 1.7-.4 1.7-.1 1.8,.3 1.7-.1 1.7-.5 1.8-.1 1.7,.4 1.7-.4 1.8-.4 1.7,.2 1.7-.4 1.8,.2 1.7-.3 1.7-.2 1.8,.1 1.7-.1 1.7-.1 1.8,0 1.7,0 1.7-.3 1.8-.3 1.7,0 1.7-.1 1.7-.3 1.8-.3 1.7,.6 1.7-.3 1.8-.2 1.7,.1 1.7-.2 1.8,.3 1.7,.5 1.7-.6 1.8-.1 1.7,.6 1.7-.6 1.8-.7 1.7,0 1.7-.2 1.8,.2 1.7-1.1 1.7-.6 1.8-.7 1.7,0 1.7-.4 1.8,0 1.7-.3 1.7-.1 1.8-.4 1.7-.4 1.7-.1 1.8-.4 1.7-.5 1.7-1 1.8-.1 1.7-.6 1.7-.4 1.8,.1 1.7-.2 1.7,0 1.7-.6 1.8-.1 1.7-.3 1.7-.4 1.8-.7 1.7,0 1.7-.5 1.8-.8 1.7-.1 1.7-.6 1.8,.1 1.7,.4 1.7-.4 1.8-.6 1.7,.2 1.7-.5 1.8-.3 1.7-.2 1.7-1.1 1.8,.3 1.7-.2 1.7,.2 1.8-.3 1.7-.1 1.7-.4 1.8-.9 1.7,.1 1.7-.9 1.8-.5 1.7,.7 1.7-.3 1.8,0 1.7-.1 1.7-.4 1.7-.5 1.8-.9 1.7,.4 1.7-1.4 1.8,.9 1.7-.7 1.7,.3 1.8-.8 1.7-.1 1.7-.3 1.8-.8 1.7-.4 1.7,.1 1.8-.7 1.7,.5 1.7-.7 1.8-.5 1.7-.1 1.7-.3 1.8-.4 1.7,1.2 1.7-.2 1.8-.8 1.7-.3 1.7-.8 1.8,.4 1.7,.7 1.7-16.5 1.8,1.2 1.7,.2 1.7,.3 1.8,.5 1.7-.5 1.7-.4 1.8,.1 1.7-.2 1.7,.9 1.7-.1 1.8-.7 1.7,.9 1.7-.1 1.8-1 1.7-.2 1.7-.9 1.8,.5 1.7-.5 1.7,2.2 1.8-.5 1.7-.1 1.7-1.1 1.8,0 1.7-.3 1.7,.8 1.8-.4 1.7,1.1 1.7-.2 1.8,.6 1.7,0 1.7-1 1.8,.1 1.7,.5 1.7,.1 1.8,.1 1.7-.7 1.7-1.3 1.8,0 1.7-.5 1.7,0 1.8-.9 1.7,1 1.7-.2 1.7-.3 1.8-.9 1.7-.6 1.7,.1 1.8-.2 1.7,.1 1.7-.8 1.8-.6 1.7,.6 1.7,.4 1.8-.2 1.7-.8 1.7-1.2 1.8,.1 1.7-.9 1.7-.9 1.8,.9 1.7,.3 1.7-1.2 1.8-.6 1.7,.3 1.7,.5 1.8-.6 1.7-2.1 1.7,.3 1.8-1.1 1.7,.2 1.7-.2 1.8,1.1 1.7,0 1.7-.2 1.8-.7 1.7-.9 1.7-.5 1.8,.3 1.7-1.2 1.7,.2 1.7-1.8 1.8-.2 1.7-1.6 1.7-.2 1.8,1.2 1.7,.4 1.7-.5 1.8,.3 1.7-.7 1.7-.2 1.8-1.1 1.7,.2 1.7-1.7 1.8-.9 1.7,.8 1.7,1 1.8-.2 1.7,1.3 1.7-.8 1.8-.7 1.7,.2 1.7-.6 1.8,.7 1.7-1.4 1.7,.9 1.8-.3 1.7,.2 1.7,1.3 1.8-.2 1.7,.7 1.7-.7 1.8,0 1.7-.5 1.7,.9 1.7-.4 1.8,.3 1.7,.3 1.7-.9 1.8-.8 1.7,.4 1.7-.2 1.8,.8 1.7-.1 1.7,.3 1.8,.2 1.7,0 1.7-.4 1.8,.9 1.7,.6 1.7,.9 1.8-.9 1.7,.4 1.7-.2 1.8,1 1.7-1 1.7,.4 1.8-.8 1.7-.9 1.7,.3 1.8-.3 1.7-.2 1.7,.1 1.8,.1 1.7-.3 1.7,.5 1.8-.6 1.7,.6 1.7,.3 1.8,.5 1.7-.8 1.7-.1 1.7,.1 1.8,.5 1.7,.3 .3-.4 0,28.2 -.3,.4 -1.7,.2 -1.8-.3 -1.7,.2 -1.7,0 -1.7,.6 -1.8-.1 -1.7-.1 -1.7-.3 -1.8,.4 -1.7-.5 -1.7,.6 -1.8-.2 -1.7,.1 -1.7,.3 -1.8,.1 -1.7-.1 -1.7,1 -1.8,.8 -1.7,.4 -1.7,.5 -1.8-.6 -1.7,.4 -1.7-.6 -1.8,1.1 -1.7-.1 -1.7-.6 -1.8-.4 -1.7-.5 -1.7,.5 -1.8-.1 -1.7,.1 -1.7-.4 -1.8,.5 -1.7-.1 -1.7,0 -1.8,.5 -1.7,.6 -1.7,.3 -1.8-.5 -1.7,.1 -1.7-.4 -1.7,.8 -1.8,.1 -1.7,.8 -1.7-.4 -1.8-.2 -1.7-1 -1.7,0 -1.8,.5 -1.7-.6 -1.7,1 -1.8,.4 -1.7,.1 -1.7,.6 -1.8,.4 -1.7,.1 -1.7,.2 -1.8-.1 -1.7-.1 -1.7-.7 -1.8,.5 -1.7,1.5 -1.7-.3 -1.8,.7 -1.7,.4 -1.7,.3 -1.8,0 -1.7,.8 -1.7-.3 -1.8-.6 -1.7,.9 -1.7,.7 -1.8,.3 -1.7,1.1 -1.7,.6 -1.7,.1 -1.8-.4 -1.7,.7 -1.7,1.4 -1.8-.2 -1.7,.7 -1.7,0 -1.8-.3 -1.7,.3 -1.7-.1 -1.8,1 -1.7-.4 -1.7,1.4 -1.8,.9 -1.7-.9 -1.7-.1 -1.8,.5 -1.7,1.2 -1.7,.4 -1.8,0 -1.7,.3 -1.7,.7 -1.8,.1 -1.7,.5 -1.7,.2 -1.8-.6 -1.7-.5 -1.7,0 -1.8-.5 -1.7,.4 -1.7-.5 -1.8-.6 -1.7-.2 -1.7,.2 -1.8-.3 -1.7,.4 -1.7,0 -1.7-.6 -1.8,.5 -1.7-.7 -1.7,0 -1.8-.5 -1.7,.3 -1.7,.3 -1.8-.7 -1.7,.3 -1.7-.9 -1.8-.4 -1.7,.8 -1.7-.3 -1.8,.1 -1.7,0 -1.7-.6 -1.8,.1 -1.7-.8 -1.7,.2 -1.8,.2 -1.7,.3 -1.7,.4 -1.8,.4 -1.7-1.4 -1.7-.1 -1.8-.3 -1.7,.8 -1.7-.2 -1.8,1 -1.7-.1 -1.7-1 -1.8,.5 -1.7,.4 -1.7-.7 -1.7-.1 -1.8-.2 -1.7,.4 -1.7,0 -1.8-.7 -1.7,.3 -1.7-.3 -1.8-.8 -1.7,16.3 -1.7,.2 -1.8,.1 -1.7,.3 -1.7,.5 -1.8,.2 -1.7-.1 -1.7-.8 -1.8,.6 -1.7-.2 -1.7-.3 -1.8,.4 -1.7,.5 -1.7-.5 -1.8,.7 -1.7,0 -1.7,.4 -1.8,.3 -1.7,0 -1.7,.2 -1.8,.5 -1.7,.1 -1.7,.3 -1.8-.4 -1.7,.3 -1.7-.4 -1.8,.3 -1.7,.3 -1.7,0 -1.7,.1 -1.8-.1 -1.7,.1 -1.7-.6 -1.8,.1 -1.7,.4 -1.7-.5 -1.8,.4 -1.7,.2 -1.7-.1 -1.8-.1 -1.7,.1 -1.7,.1 -1.8-.4 -1.7,.5 -1.7-.2 -1.8,.2 -1.7,.2 -1.7-.3 -1.8,.4 -1.7,.4 -1.7-1 -1.8-.1 -1.7,.2 -1.7,0 -1.8,.2 -1.7,0 -1.7-.3 -1.8,.5 -1.7,.1 -1.7,.1 -1.8-.1 -1.7,.5 -1.7-.4 -1.7-.3 -1.8-.3 -1.7,0 -1.7,0 -1.8-.1 -1.7,.6 -1.7,.3 -1.8,.1 -1.7-.2 -1.7,.2 -1.8,0 -1.7-.2 -1.7,.1 -1.8,0 -1.7,.2 -1.7,0 -1.8,.6 -1.7,.4 -1.7,.7 -1.8-.2 -1.7,0 -1.7-.1 -1.8,.6 -1.7,.4 -1.7-.4 -1.8,.3 -1.7,.7 -1.7-.3 -1.8,0 -1.7,.4 -1.7-.1 -1.8,.1 -1.7,.2 -1.7-.3 -1.8,0 -1.7,.4 -1.7-.1 -1.7,0 -1.8,.2 -1.7,.1 -1.7,0 -1.8-.2 -1.7,.2 -1.7-.1 -1.8,0 -1.7,.3 -1.7,.1 -1.8,0 -1.7,.5 -1.7-.3 -1.8,.2 -1.7,.3 -1.7-.4 -1.8,.2 -1.7,.3 -1.7,0 -1.8-.4 -1.7-.1 -1.7,.3 -1.8-.1 -1.7,.1 -1.7-.3 -1.8,.5 -1.7,0 -1.7-.3 -1.8-.2 -1.7-.2 -1.7-.2 -1.8,.2 -1.7,.2 -1.7,0 -1.8-.2 -1.7,0 -1.7,.3 -1.7-.2 -1.8-.1 -1.7,.2 -1.7,.1 -1.8,.3 -1.7,.1 -1.7-.1 -1.8,.3 -1.7,.2 -1.7,.2 -1.8,.1 -1.7,.4 -1.7,.2 -1.8,.2 -1.7,.2 -1.7,.2 -1.8,.2 -1.7,0 -1.7,.1 -1.8,.8 -1.7,.1 -1.7,.4 -1.8,.4 -1.7,.9 -1.7,.6 -1.8,.7 -1.7,0 -1.7,0 -1.8,.1 -1.7-.3 -1.7-.2 -1.8,0 -1.7,.2 -1.7,.1 -1.7-.5 -1.8,.9 -1.7-.1 -1.7,0 -1.8-.2 -1.7-.2 -1.7,.1 -1.8,.1 -1.7-.1 -1.7,.1 -1.8-.2 -1.7,.2 -1.7-.4 -1.8,0 -1.7,.1 -1.7,.1 -1.8,0 -1.7,0 -1.7,.2 -1.8-.2 -1.7-.3 -1.7,.3 -1.8,0 -1.7-.1 -1.7,.3 -1.8,.1 -1.7,0 -1.7-.1 -1.8,.2 -1.7,.4 -1.7,0 -1.8-.3 -1.7,.2 -1.7,0 -1.8-.3 -1.7,.1 -1.7,0 -1.7-.1 -1.8,.1 -1.7,0 -1.7,.9 -1.8,1.1 -1.7,.6 -1.7,.5 -1.8,.4 -1.7-.1 -1.7,0 -1.8-.1 -1.7-.1 -1.7-.1 -1.8,.2 -1.7-.1 -1.7-.1 -1.8-.1 -1.7,.1 -1.7-.1 -1.8-.4 -1.7,.2 -1.7-.3 -1.8,.1 -1.7-.1 -1.7-.1 -1.8,0 -1.7-.2 -1.7,.1 -1.8,.1 -1.7-.2 -1.7-.3 -1.8-.5 -1.7-.7 -1.7-.7 -1.7-.3 -1.8,.1 -1.7,0 -1.7,.1 -1.8,.3 -1.7,.2 -1.7-.2 -1.8,.2 -1.7,.4 -1.7,.5 -1.8,.1 -1.7-.2 -1.7,.3 -1.8-.1 -1.7,.4 -1.7,.1 -1.8,0 -1.7,.6 -1.7,0 -1.8,.3 -1.7,0 -1.7,.6 -1.8-.2 -1.7,0 -1.7,.3 -1.8,.1 -1.7,.6 -1.7,.1 -1.8,.1 -1.7,.1 -1.7,.4 -1.8,0 -1.7,0 -1.7,.4 -1.8,.1 -1.7,0 -1.7,.2 -1.7,.2 -1.8,.2 -1.7,0 -1.7,.2 -1.8,0 -1.7,.4 -1.7,2.9 -1.8,2.2 -1.7,.1 -1.7-.1 -1.8,.1 -1.7,.1 -1.7,0 -1.8,.1 -1.7-.1 -1.7-.1 -1.8,.1 -1.7,0 -1.7,0 -1.8,.1 -1.7,.1 -1.7-.1 -1.8,.1 -1.7-.1 -1.7,0 -1.8,0 -1.7,.1 -1.7,.1 -1.8,0 -1.7,.2 -1.7-.1 -1.8,0 -1.7-.1 -1.7,.1 -1.7,0 -1.8,.1 -1.7,0 -1.7,0 -1.8,0 -1.7,.1 -1.7,0 -1.8,.1 -1.7-.1 -1.7,0 -1.8,.1 -1.7,0 -1.7,.1 -1.8,0 -1.7,0 -1.7,.1 -1.8,0 -1.7,.1 -1.7,0 -1.8-.1 -1.7,.1 -1.7,.1 -1.8,0 -1.7,0 -1.7,0 -1.8,0 -1.7,.1 -1.7,0 -1.8,0 -1.7,0 -1.7,0 -1.8,.1 -1.7,0 -1.7,0 -1.8,0 -1.7,.1 -1.7,0 -1.7,0 -1.8,.1 -1.7,.1 -1.7,0 -1.8,0 -1.7,0 -1.7,.1 -1.8,0 -1.7,0 -1.7,.1 -1.8,0 -1.7,0 -1.7,0 -1.8,0 -1.7,.1 -1.7,0 -1.8,0 -1.7,0 -1.7,.1 -1.8,0 -1.7,0 -1.7,.1 -1.8,0 -1.7,.1 -1.7,0 -1.8,0 -1.7,.1 -1.7,0 -1.8,0 -1.7,.1 -1.7,0 -1.8,0 -1.7,.1 -1.7-.1 -1.8,.1 -1.7,0 -1.7,0 -1.7,.1 -1.8,0 -1.7,0 -1.7,.1 -1.8,0 -1.7,0 -1.7,.1 -1.8,0 -1.7,0 -1.7,0 -1.8,0 -1.7,0 -1.7,0 -1.8,0 -1.7,0 -1.7,0 -1.8,0 -1.7,0 -1.7,0 -1.8,0 -1.7,0 -1.7,0 -1.8,0 -1.7,0 -1.7,0 -1.8,0 -1.7,0 -1.7,0 -1.8,0 -1.7,0 -1.7,0 -1.8,0 -1.7,0 -1.7,0 -1.7,0 -1.8,0 -1.7,.1 -1.7,0 -1.8,0 -1.7-.1 -1.7,0 -1.8,0 -1.7,0 -1.7,.1 -1.8,0 -1.7,0 -1.7,0 -1.8-.1 -1.7,0 -1.7,0 -1.8,0 -1.7,0 -1.7,0 -1.8,.1 -1.7,0 -1.7,0 -1.8,0 -1.7,0 -1.7,0 -1.8,0 -1.7-.1 -1.7,.1 -1.8,0 -1.7,0 -1.7,.1 -1.8-.1 -1.7,0 -1.7,0 -1.8,0 -1.7,0 -1.7,0 -1.7,0 -1.8,0 -1.7,0 -1.7,0 -1.8,0 -1.7,0 -1.7,0 -1.8,0 -1.7,0 -1.7,0 -1.8,0 -1.7,0 -1.7,0 -1.8,.1 -1.7-.1 -1.7,.1 -1.8,0 -1.7,0 -1.7,0 -1.8,0 -1.7,0 -1.7,0 -1.8,0 -1.7,0 -1.7,0 -1.8,0 -1.7,0 -1.7,0 -1.8,0 -1.7,0 -1.7,0 -1.8,0 -1.7,0 -1.7,0 -1.7,0 -1.8,0 -1.7,0 -1.7,0 -1.8,0 -1.7,.1 -1.7-.1 -1.8,.1 -1.7-.1 -1.7,0 -1.8,0 -1.7,.1 -1.7-.1 -1.8,0 -1.7,0 -1.7,.1 -1.8,0 -1.7-.1 -1.7,.1 -1.8,0 -1.7,0 -1.7,0 -1.8,0 -1.7-.1 -1.7,.1 -1.8,0 -1.7,0 -1.7,0 -1.8-.1 -1.7,.1 -1.7-.1 -1.8,.1 -1.7,0 -1.7,0 -1.8,0 -1.7,0 -1.7,0 -1.7,0 -1.8,0 -1.7,0 -1.7,0 -1.8,0 -1.7,0 -1.7,0 -1.8,0 -1.7,.1 -1.7,0 -1.8-.1 -1.7,.1 -1.7-.1 -1.8,.1 -1.7-.1 -1.7,.1 -1.8,0 -1.7,0 -1.7-.1 -1.8,.1 -1.7-.1 -1.7,.1 -1.8,0 -1.7,0 -1.7,0 -1.8,0 -1.7,0 -1.7,0 -1.8,0 -1.7,0 -1.7,0 -1.8,0 -1.7,0 -1.7,0 -1.8,0 -1.7,0 -1.7,0 -1.7,0 -1.8,0 -1.7,0 -1.7,0 -1.8,0 -1.7,0 -1.7,0 -1.8,0 -1.7,0 -1.7,0 -1.8,0 -1.7,0 -1.7,0 -1.8,0 -1.7,0 -1.7,0 -1.8,0 -1.7,0 -1.7,0 -1.8,0 -1.7,0 -1.7,0 -1.8,0 -1.7,0 -1.7,0 -1.8,0 -1.7,0 -1.7,.1 -1.8-.1 -1.7,0 -1.7,0 -1.8,.1 -1.7,0 -1.7,0 -1.7,0 -1.8,0 -1.7,0 -1.7,0 -1.8,0 -1.7,0 -1.7,0 -1.8,0 -1.7,0 -1.7,0 -1.8,0 -1.7,0 -1.7,0 -1.8,0 -1.7,0 -1.7,0 -1.8,0 -1.7,0 -1.7,0 -1.8,0 -1.7,0 -1.7,0 -1.8,0 -1.7,0 -1.7,0 -1.8,0 -1.7,0 -1.7,0 -1.8,0 -1.7,0 -1.7,0 -1.8,.1 -1.7,0 -1.7,0 -1.8,0 -1.7,0 -1.7,0 -1.7,0 -1.8,0 -1.7-.1 -1.7,.1 -1.8,0 -1.7,0 -1.7,0 -1.8,0 -1.7,0 -1.7,0 -1.8,0 -1.7,0 -1.7,0 -1.8,0 -1.7,0 -1.7,0 -1.8,0 -1.7,0 -1.7,0 -1.8,0 -1.7,0 -1.7,0 -1.8,0 -1.7,0 -1.7,0 -1.8,0 -1.7,0 -1.7,0 -1.8,0 -1.7,0 -1.7,0 -1.8,.1 -1.7,0 -1.7,0 -1.7,0 -1.8,0 -1.7,0 -1.7,0 -1.8,0 -1.7,0 -1.7,0 -1.8,0 -1.7,0 -1.7-.1 -1.8,.1 -1.7,0 -1.7,0 -1.8,0 -1.7,0 -1.7,0 -1.8,0 -1.7,0 -1.7,0 -1.8,0 -1.7,0 -1.7,0 -1.8,0 -1.7,0 -1.7,0 -1.8,0 -1.7,0 -1.7,0 -1.8,0 -1.7,0 -1.7,0 -1.8,0 -1.7,0 -1.7,0 -1.8,0 -1.7,0 -1.7,0 -1.7,0 -1.8,0 -1.7,0 -1.7,0 -1.8,0 -1.7,0 -1.7,.1 -1.8,0 -1.7,0 -1.7,0 -1.8,0 -1.7,0 -1.7-.1 -1.8,.1 -1.7-.1 -1.7,.1 -1.8,0 -1.7,0 -1.7,0 -1.8,0 -1.7,0 -1.7,0 -1.8,0 -1.7,0 -1.7,0 -1.8,0 -1.7,0 -1.7,0 -1.8,0 -1.7,0 -1.7,0 -1.8,0 -1.7,0 -1.7,0 -1.7,0 -1.8,0 -1.7,0 -1.7,0 -1.8,0 -1.7,0 -1.7,0 -1.8,0 -1.7,.1 -1.7-.1 -1.8,0 -1.7,0 -1.7,0 -1.8,0 -1.7,0 -1.7,0 -1.8,0 -1.7,.1 -1.7,0 -1.8,0 -1.7,0 -1.7,0 -1.8,0 -1.7,0 -1.7,0 -1.8,0 -1.7,0 -1.7,0 -1.8,0 -1.7,0 -1.7,0 -1.8,0 -1.7,0 -1.7,0 -1.8,0 -1.7,0 -1.7,0 -1.7,0 -1.8,0 -1.7,0 -1.7,.1 -1.8-.1 -1.7,0 -1.7,0 -1.8,0 -1.7,0 -1.7,0 -1.8,0 -1.7,0 -1.7,0 -1.8,0 -1.7,0 -1.7,.1 -1.8-.1 -1.7,0 -1.7,.1 -1.8,0 -1.7,0 -1.7,0 -1.8,0 -1.7,0 -1.7,0 -1.8,0 -1.7,0 -1.7,0 -1.8,0 -1.7,0 -1.7,0 -1.8,0 -1.7,0 -1.7,0 -1.8,0 -1.7,0 -1.7,0 -1.7,0 -1.8,0 -1.7,0 -1.7,0 -1.8,0 -1.7,0 -1.7,0 -1.8,0 -1.7,0 -1.7,0 -1.8,0 -1.7,0 -1.7,0 -1.8,0 -1.7,0 -1.7,0 -1.8,0 -1.7,0 -1.7,0 -1.8,0 -1.7,0 -1.7,.1 -1.8-.1 -1.7,.1 -1.7,0 -1.8-.1 -1.7,0 -1.7,0 -1.8,0 -1.7,.1 -1.7,0 -1.8,0 -1.7,0 -1.7,0 -1.7,0 -1.8,0 -1.7,0 -1.7,0 -1.8,0 -1.7,0 -1.7,0 -1.8,0 -1.7,0 -1.7,0 -1.8,0 -1.7,0 -1.7,0 -1.8,0 -1.7,0 -1.7,0 -1.8,0 -1.7,0 -1.7,0 -1.8,0 -1.7,0 -1.7,0 -1.8,0 -1.7,0 -1.7,.1 -1.8,0 -1.7,0 -1.7,0 -1.8,0 -1.7,0 -1.7,0 -1.8,0 -1.7,0 -1.7,0 -1.8,0 -1.7,0 -1.7,0 -1.7,0 -1.8,0 -1.7,0 -1.7,0 -1.8,0 -1.7,0 -1.7,0 -1.8,0 -1.7,0 -1.7,0 -1.8,0 -1.7,0 -1.7,0 -1.8,0 -1.7,0 -1.7,0 -1.8,0 -1.7,0 -1.7,0 -1.8,0 -1.7,0 -1.7,0 -1.8,0 -1.7,0 -1.7,0 -1.8,0 -1.7,0 -1.7,0 -1.8,0 -1.7,0 -1.7,0 -1.8,.1 -1.7,0 -1.7,0 -1.7,0 -1.8,0 -1.7,0 -1.7-.1 -1.8,.1 -1.7,0 -1.7,0 -1.8,0 -1.7,0 -1.7,0 -1.8,0 -1.7,0 -1.7,0 -1.8,0 -1.7,0 -1.7,0 -1.8,0 -1.7,0z" fill="url(#g3)"/>
<path d="M157.7,807.8l1.7,0 1.8,0 1.7,0 1.7,0 1.8,0 1.7,0 1.7,0 1.8,0 1.7,0 1.7,0 1.8,0 1.7,0 1.7,0 1.8-.1 1.7,.1 1.7,0 1.8,0 1.7,0 1.7,0 1.7,0 1.8-.1 1.7,0 1.7,0 1.8,0 1.7,0 1.7,0 1.8,0 1.7,0 1.7,0 1.8,0 1.7,0 1.7,0 1.8,0 1.7,0 1.7,0 1.8,0 1.7,0 1.7,0 1.8,0 1.7,0 1.7,0 1.8,0 1.7,0 1.7,0 1.8,0 1.7,0 1.7,0 1.8,0 1.7,0 1.7,0 1.8,0 1.7,0 1.7,0 1.7,0 1.8,0 1.7,0 1.7,0 1.8,0 1.7,0 1.7,0 1.8,0 1.7,0 1.7,0 1.8,0 1.7-.1 1.7,0 1.8,0 1.7,0 1.7,0 1.8,0 1.7,0 1.7,0 1.8,0 1.7,0 1.7,0 1.8,0 1.7,0 1.7,0 1.8,0 1.7,0 1.7,0 1.8,0 1.7,0 1.7,0 1.8,0 1.7,0 1.7,0 1.8,0 1.7,0 1.7,0 1.7,0 1.8,0 1.7,0 1.7-.1 1.8,0 1.7,0 1.7,0 1.8,.1 1.7,0 1.7-.1 1.8,.1 1.7-.1 1.7,0 1.8,0 1.7,0 1.7,0 1.8,0 1.7,0 1.7,0 1.8,0 1.7,0 1.7,0 1.8,0 1.7,0 1.7,0 1.8,0 1.7,0 1.7,0 1.8,0 1.7,0 1.7,0 1.8,0 1.7,0 1.7,0 1.7,0 1.8,0 1.7,0 1.7,0 1.8,0 1.7,0 1.7,0 1.8,0 1.7,0 1.7,0 1.8,0 1.7,0 1.7,0 1.8,0 1.7,0 1.7,0 1.8,0 1.7-.1 1.7,0 1.8,.1 1.7-.1 1.7,0 1.8,0 1.7,0 1.7,0 1.8,0 1.7,0 1.7,0 1.8,0 1.7,0 1.7,0 1.8,.1 1.7-.1 1.7,0 1.8,0 1.7,0 1.7,0 1.7,0 1.8,0 1.7,0 1.7,0 1.8,0 1.7,0 1.7,0 1.8,0 1.7,0 1.7,0 1.8,0 1.7,0 1.7,0 1.8,0 1.7,0 1.7,0 1.8,0 1.7,0 1.7-.1 1.8,0 1.7,0 1.7,0 1.8,0 1.7,0 1.7,0 1.8,0 1.7,.1 1.7-.1 1.8,0 1.7,0 1.7,0 1.8,0 1.7,0 1.7,0 1.8,0 1.7,0 1.7,0 1.7,0 1.8,0 1.7,0 1.7,0 1.8,0 1.7,0 1.7,0 1.8,0 1.7,0 1.7,0 1.8,0 1.7,0 1.7,0 1.8,0 1.7,0 1.7,0 1.8,0 1.7-.1 1.7,.1 1.8-.1 1.7,.1 1.7,0 1.8,0 1.7,0 1.7,0 1.8,0 1.7-.1 1.7,0 1.8,0 1.7,0 1.7,0 1.8,0 1.7,0 1.7,0 1.7,0 1.8,0 1.7,0 1.7,0 1.8,0 1.7,0 1.7,0 1.8,0 1.7,0 1.7,0 1.8,0 1.7,0 1.7,0 1.8,0 1.7,0 1.7,0 1.8,0 1.7,0 1.7,0 1.8,0 1.7,0 1.7,0 1.8,0 1.7,0 1.7,0 1.8-.1 1.7,.1 1.7,0 1.8,0 1.7,0 1.7,0 1.8,0 1.7,0 1.7,0 1.8,0 1.7,0 1.7,0 1.7,0 1.8-.1 1.7,0 1.7,0 1.8,0 1.7,0 1.7,0 1.8,0 1.7,0 1.7,0 1.8,0 1.7,0 1.7,0 1.8,0 1.7,0 1.7,0 1.8,0 1.7,0 1.7,0 1.8,0 1.7,0 1.7,0 1.8,0 1.7,0 1.7,0 1.8,0 1.7,0 1.7,0 1.8,0 1.7-.1 1.7,.1 1.8,0 1.7,0 1.7,0 1.7,0 1.8,0 1.7,0 1.7,0 1.8-.1 1.7,0 1.7,0 1.8,0 1.7,0 1.7,0 1.8,0 1.7,0 1.7,0 1.8,0 1.7,0 1.7,0 1.8,0 1.7,0 1.7,0 1.8,0 1.7,0 1.7,0 1.8,0 1.7,0 1.7,0 1.8,0 1.7,0 1.7,0 1.8,0 1.7,0 1.7,0 1.8,0 1.7,0 1.7,0 1.8,0 1.7,0 1.7,0 1.7,0 1.8-.1 1.7,0 1.7,0 1.8,.1 1.7-.1 1.7,0 1.8,0 1.7,0 1.7,0 1.8,0 1.7,0 1.7,0 1.8,0 1.7,0 1.7,0 1.8,0 1.7,0 1.7,0 1.8,0 1.7,0 1.7,0 1.8,0 1.7,0 1.7,0 1.8,0 1.7,0 1.7,0 1.8,0 1.7,0 1.7,0 1.8,0 1.7,0 1.7,0 1.7,0 1.8,0 1.7,0 1.7,0 1.8,0 1.7,0 1.7,0 1.8,0 1.7,0 1.7,0 1.8,0 1.7,0 1.7,0 1.8,0 1.7-.1 1.7,.1 1.8-.1 1.7,.1 1.7,0 1.8,0 1.7-.1 1.7,.1 1.8-.1 1.7,.1 1.7-.1 1.8,.1 1.7,0 1.7-.1 1.8,0 1.7,0 1.7,0 1.8,0 1.7,0 1.7,0 1.8,0 1.7,0 1.7,0 1.7,0 1.8,0 1.7,0 1.7,0 1.8-.1 1.7,.1 1.7-.1 1.8,.1 1.7,0 1.7,0 1.8,0 1.7-.1 1.7,.1 1.8,0 1.7,0 1.7,0 1.8,0 1.7-.1 1.7,.1 1.8,0 1.7-.1 1.7,0 1.8,0 1.7,.1 1.7-.1 1.8,0 1.7,0 1.7,.1 1.8-.1 1.7,.1 1.7-.1 1.8,0 1.7,0 1.7,0 1.8,0 1.7,0 1.7,0 1.7,0 1.8,0 1.7,0 1.7,0 1.8,0 1.7,0 1.7,0 1.8,0 1.7,0 1.7,0 1.8,0 1.7,0 1.7,0 1.8,0 1.7,0 1.7,0 1.8,0 1.7-.1 1.7,.1 1.8-.1 1.7,0 1.7,0 1.8,0 1.7,0 1.7,0 1.8,0 1.7,0 1.7,0 1.8,0 1.7,0 1.7,0 1.8,0 1.7,0 1.7,0 1.7,0 1.8,0 1.7,0 1.7,0 1.8,.1 1.7-.1 1.7,0 1.8,0 1.7-.1 1.7,.1 1.8,0 1.7,0 1.7,0 1.8,0 1.7,0 1.7,0 1.8-.1 1.7,0 1.7,0 1.8,0 1.7,0 1.7,0 1.8,.1 1.7,0 1.7,0 1.8,0 1.7-.1 1.7,0 1.8,0 1.7,0 1.7,.1 1.8,0 1.7,0 1.7-.1 1.8,0 1.7,0 1.7,0 1.7,0 1.8,0 1.7,0 1.7,0 1.8,0 1.7,0 1.7,0 1.8,0 1.7,0 1.7,0 1.8,0 1.7,0 1.7,0 1.8,0 1.7,0 1.7,0 1.8,0 1.7,0 1.7,0 1.8,0 1.7,0 1.7,0 1.8,0 1.7,0 1.7,0 1.8,0 1.7-.1 1.7,0 1.8,0 1.7-.1 1.7,0 1.8,0 1.7-.1 1.7,0 1.7,0 1.8-.1 1.7,.1 1.7-.1 1.8,0 1.7,0 1.7-.1 1.8,0 1.7,0 1.7-.1 1.8,0 1.7,0 1.7-.1 1.8,0 1.7-.1 1.7,0 1.8,0 1.7-.1 1.7,0 1.8,0 1.7,0 1.7-.1 1.8,0 1.7,0 1.7,0 1.8,0 1.7-.1 1.7,0 1.8,0 1.7-.1 1.7,0 1.8,0 1.7,0 1.7-.1 1.8-.1 1.7,0 1.7,0 1.7-.1 1.8,0 1.7,0 1.7,0 1.8-.1 1.7,0 1.7,0 1.8,0 1.7,0 1.7-.1 1.8,0 1.7,0 1.7,0 1.8,0 1.7-.1 1.7-.1 1.8,.1 1.7,0 1.7-.1 1.8,0 1.7-.1 1.7,0 1.8,0 1.7-.1 1.7,0 1.8-.1 1.7,0 1.7,.1 1.8-.1 1.7,0 1.7-.1 1.8,0 1.7,0 1.7,0 1.8-.1 1.7,0 1.7-.1 1.7,.1 1.8,0 1.7,.1 1.7-.2 1.8,0 1.7-.1 1.7-.1 1.8,0 1.7,0 1.7,.1 1.8-.1 1.7,.1 1.7-.1 1.8-.1 1.7,0 1.7,0 1.8-.1 1.7,.1 1.7,.1 1.8-.1 1.7,0 1.7-.1 1.8-.1 1.7,.1 1.7-.1 1.8-2.2 1.7-2.9 1.7-.4 1.8,0 1.7-.2 1.7,0 1.8-.2 1.7-.2 1.7-.2 1.7,0 1.8-.1 1.7-.4 1.7,0 1.8,0 1.7-.4 1.7-.1 1.8-.1 1.7-.1 1.7-.6 1.8-.1 1.7-.3 1.7,0 1.8,.2 1.7-.6 1.7,0 1.8-.3 1.7,0 1.7-.6 1.8,0 1.7-.1 1.7-.4 1.8,.1 1.7-.3 1.7,.2 1.8-.1 1.7-.5 1.7-.4 1.8-.2 1.7,.2 1.7-.2 1.8-.3 1.7-.1 1.7,0 1.8-.1 1.7,.3 1.7,.7 1.7,.7 1.8,.5 1.7,.3 1.7,.2 1.8-.1 1.7-.1 1.7,.2 1.8,0 1.7,.1 1.7,.1 1.8-.1 1.7,.3 1.7-.2 1.8,.4 1.7,.1 1.7-.1 1.8,.1 1.7,.1 1.7,.1 1.8-.2 1.7,.1 1.7,.1 1.8,.1 1.7,0 1.7,.1 1.8-.4 1.7-.5 1.7-.6 1.8-1.1 1.7-.9 1.7,0 1.8-.1 1.7,.1 1.7,0 1.7-.1 1.8,.3 1.7,0 1.7-.2 1.8,.3 1.7,0 1.7-.4 1.8-.2 1.7,.1 1.7,0 1.8-.1 1.7-.3 1.7,.1 1.8,0 1.7-.3 1.7,.3 1.8,.2 1.7-.2 1.7,0 1.8,0 1.7-.1 1.7-.1 1.8,0 1.7,.4 1.7-.2 1.8,.2 1.7-.1 1.7,.1 1.8-.1 1.7-.1 1.7,.2 1.8,.2 1.7,0 1.7,.1 1.8-.9 1.7,.5 1.7-.1 1.7-.2 1.8,0 1.7,.2 1.7,.3 1.8-.1 1.7,0 1.7,0 1.8-.7 1.7-.6 1.7-.9 1.8-.4 1.7-.4 1.7-.1 1.8-.8 1.7-.1 1.7,0 1.8-.2 1.7-.2 1.7-.2 1.8-.2 1.7-.2 1.7-.4 1.8-.1 1.7-.2 1.7-.2 1.8-.3 1.7,.1 1.7-.1 1.8-.3 1.7-.1 1.7-.2 1.8,.1 1.7,.2 1.7-.3 1.7,0 1.8,.2 1.7,0 1.7-.2 1.8-.2 1.7,.2 1.7,.2 1.8,.2 1.7,.3 1.7,0 1.8-.5 1.7,.3 1.7-.1 1.8,.1 1.7-.3 1.7,.1 1.8,.4 1.7,0 1.7-.3 1.8-.2 1.7,.4 1.7-.3 1.8-.2 1.7,.3 1.7-.5 1.8,0 1.7-.1 1.7-.3 1.8,0 1.7,.1 1.7-.2 1.8,.2 1.7,0 1.7-.1 1.8-.2 1.7,0 1.7,.1 1.7-.4 1.8,0 1.7,.3 1.7-.2 1.8-.1 1.7,.1 1.7-.4 1.8,0 1.7,.3 1.7-.7 1.8-.3 1.7,.4 1.7-.4 1.8-.6 1.7,.1 1.7,0 1.8,.2 1.7-.7 1.7-.4 1.8-.6 1.7,0 1.7-.2 1.8,0 1.7-.1 1.7,.2 1.8,0 1.7-.2 1.7,.2 1.8-.1 1.7-.3 1.7-.6 1.8,.1 1.7,0 1.7,0 1.8,.3 1.7,.3 1.7,.4 1.7-.5 1.8,.1 1.7-.1 1.7-.1 1.8-.5 1.7,.3 1.7,0 1.8-.2 1.7,0 1.7-.2 1.8,.1 1.7,1 1.7-.4 1.8-.4 1.7,.3 1.7-.2 1.8-.2 1.7,.2 1.7-.5 1.8,.4 1.7-.1 1.7-.1 1.8,.1 1.7,.1 1.7-.2 1.8-.4 1.7,.5 1.7-.4 1.8-.1 1.7,.6 1.7-.1 1.8,.1 1.7-.1 1.7,0 1.7-.3 1.8-.3 1.7,.4 1.7-.3 1.8,.4 1.7-.3 1.7-.1 1.8-.5 1.7-.2 1.7,0 1.8-.3 1.7-.4 1.7,0 1.8-.7 1.7,.5 1.7-.5 1.8-.4 1.7,.3 1.7,.2 1.8-.6 1.7,.8 1.7,.1 1.8-.2 1.7-.5 1.7-.3 1.8-.1 1.7-.2 1.7-16.3 1.8,.8 1.7,.3 1.7-.3 1.8,.7 1.7,0 1.7-.4 1.8,.2 1.7,.1 1.7,.7 1.7-.4 1.8-.5 1.7,1 1.7,.1 1.8-1 1.7,.2 1.7-.8 1.8,.3 1.7,.1 1.7,1.4 1.8-.4 1.7-.4 1.7-.3 1.8-.2 1.7-.2 1.7,.8 1.8-.1 1.7,.6 1.7,0 1.8-.1 1.7,.3 1.7-.8 1.8,.4 1.7,.9 1.7-.3 1.8,.7 1.7-.3 1.7-.3 1.8,.5 1.7,0 1.7,.7 1.8-.5 1.7,.6 1.7,0 1.7-.4 1.8,.3 1.7-.2 1.7,.2 1.8,.6 1.7,.5 1.7-.4 1.8,.5 1.7,0 1.7,.5 1.8,.6 1.7-.2 1.7-.5 1.8-.1 1.7-.7 1.7-.3 1.8,0 1.7-.4 1.7-1.2 1.8-.5 1.7,.1 1.7,.9 1.8-.9 1.7-1.4 1.7,.4 1.8-1 1.7,.1 1.7-.3 1.8,.3 1.7,0 1.7-.7 1.8,.2 1.7-1.4 1.7-.7 1.8,.4 1.7-.1 1.7-.6 1.7-1.1 1.8-.3 1.7-.7 1.7-.9 1.8,.6 1.7,.3 1.7-.8 1.8,0 1.7-.3 1.7-.4 1.8-.7 1.7,.3 1.7-1.5 1.8-.5 1.7,.7 1.7,.1 1.8,.1 1.7-.2 1.7-.1 1.8-.4 1.7-.6 1.7-.1 1.8-.4 1.7-1 1.7,.6 1.8-.5 1.7,0 1.7,1 1.8,.2 1.7,.4 1.7-.8 1.8-.1 1.7-.8 1.7,.4 1.7-.1 1.8,.5 1.7-.3 1.7-.6 1.8-.5 1.7,0 1.7,.1 1.8-.5 1.7,.4 1.7-.1 1.8,.1 1.7-.5 1.7,.5 1.8,.4 1.7,.6 1.7,.1 1.8-1.1 1.7,.6 1.7-.4 1.8,.6 1.7-.5 1.7-.4 1.8-.8 1.7-1 1.7,.1 1.8-.1 1.7-.3 1.7-.1 1.8,.2 1.7-.6 1.7,.5 1.8-.4 1.7,.3 1.7,.1 1.8,.1 1.7-.6 1.7,0 1.7-.2 1.8,.3 1.7-.2 .3-.4 0,26.2 -.3,.5 -1.7,0 -1.8,.6 -1.7-.2 -1.7-.5 -1.7,.3 -1.8,.3 -1.7-.7 -1.7-.3 -1.8,.4 -1.7-.9 -1.7,.4 -1.8,.1 -1.7,.3 -1.7-.2 -1.8,.4 -1.7,0 -1.7,.8 -1.8,.2 -1.7,.3 -1.7,.4 -1.8-.5 -1.7-.3 -1.7-.2 -1.8,.7 -1.7,0 -1.7-.4 -1.8-.6 -1.7-.2 -1.7,.6 -1.8,.3 -1.7,0 -1.7-.2 -1.8,.2 -1.7-.5 -1.7,0 -1.8,.1 -1.7,.5 -1.7-.2 -1.8,.2 -1.7-.1 -1.7-.4 -1.7,.8 -1.8-.5 -1.7,.8 -1.7-.2 -1.8,.2 -1.7-.5 -1.7-.2 -1.8,0 -1.7-.6 -1.7,.6 -1.8,.3 -1.7,.1 -1.7,.6 -1.8,.2 -1.7,.3 -1.7,.2 -1.8-.1 -1.7-.8 -1.7-.6 -1.8,.3 -1.7,.5 -1.7-.4 -1.8,.6 -1.7,.4 -1.7,0 -1.8-.1 -1.7,.5 -1.7-.2 -1.8-.6 -1.7,.1 -1.7,0 -1.8,.4 -1.7,.2 -1.7,.2 -1.7-.2 -1.8-.5 -1.7,0 -1.7,1 -1.8,.2 -1.7,.1 -1.7,0 -1.8-.8 -1.7-.1 -1.7-.4 -1.8,.8 -1.7-.4 -1.7,.8 -1.8,.5 -1.7-.7 -1.7-.4 -1.8,.3 -1.7,.4 -1.7,0 -1.8-.1 -1.7-.1 -1.7,.1 -1.8-.2 -1.7,.3 -1.7,.6 -1.8-.4 -1.7-.1 -1.7,.1 -1.8-.1 -1.7,.6 -1.7-.3 -1.8-.3 -1.7-.1 -1.7,.5 -1.8,.1 -1.7,.6 -1.7,.2 -1.7-.6 -1.8,.4 -1.7-.3 -1.7,.4 -1.8,0 -1.7,0 -1.7,.4 -1.8,0 -1.7,.2 -1.7-.6 -1.8-.3 -1.7,.4 -1.7,0 -1.8,.2 -1.7,0 -1.7-.2 -1.8,.2 -1.7-.3 -1.7,0 -1.8,0 -1.7,.3 -1.7,.5 -1.8,.2 -1.7-.6 -1.7-.2 -1.8-.1 -1.7,.8 -1.7-.1 -1.8,.9 -1.7-.1 -1.7-.4 -1.8,.5 -1.7,0 -1.7,.2 -1.7,.1 -1.8-.3 -1.7,.2 -1.7,.2 -1.8-.4 -1.7,.4 -1.7-.5 -1.8-.2 -1.7,12.6 -1.7,.7 -1.8,.5 -1.7,.2 -1.7,.2 -1.8,.3 -1.7-.4 -1.7-.2 -1.8,.1 -1.7,0 -1.7-.1 -1.8,0 -1.7,.1 -1.7-.1 -1.8,0 -1.7-.1 -1.7,.1 -1.8,.1 -1.7,.2 -1.7-.1 -1.8,.1 -1.7,.1 -1.7,.1 -1.8-.1 -1.7,.1 -1.7-.1 -1.8,.2 -1.7-.1 -1.7,.4 -1.7-.1 -1.8,.1 -1.7,.2 -1.7-.4 -1.8,0 -1.7,.1 -1.7-.1 -1.8,.4 -1.7,0 -1.7,.1 -1.8-.1 -1.7,0 -1.7,0 -1.8-.4 -1.7,.4 -1.7,.1 -1.8,.1 -1.7,.1 -1.7-.2 -1.8,0 -1.7,.3 -1.7-.5 -1.8,0 -1.7,.2 -1.7,0 -1.8,.2 -1.7-.1 -1.7,0 -1.8,.3 -1.7,0 -1.7,.2 -1.8,0 -1.7,.2 -1.7,0 -1.7-.1 -1.8-.1 -1.7,.1 -1.7-.2 -1.8,0 -1.7,.2 -1.7-.1 -1.8,.4 -1.7,0 -1.7,.1 -1.8-.1 -1.7,.2 -1.7-.2 -1.8,0 -1.7,.1 -1.7-.2 -1.8,0 -1.7,.2 -1.7,.2 -1.8-.2 -1.7,0 -1.7-.1 -1.8,.2 -1.7,.2 -1.7-.2 -1.8,.3 -1.7,0 -1.7-.1 -1.8-.2 -1.7,0 -1.7,0 -1.8,.1 -1.7,0 -1.7,.1 -1.8,.1 -1.7,.2 -1.7-.1 -1.7-.2 -1.8,.3 -1.7,.1 -1.7,.1 -1.8,0 -1.7,0 -1.7-.1 -1.8,.2 -1.7,0 -1.7,.1 -1.8,.2 -1.7,0 -1.7-.1 -1.8,.2 -1.7-.1 -1.7,0 -1.8,0 -1.7,.1 -1.7,0 -1.8-.2 -1.7,0 -1.7,.2 -1.8,.2 -1.7,0 -1.7,0 -1.8,0 -1.7,.3 -1.7-.2 -1.8,0 -1.7-.1 -1.7,.1 -1.8,0 -1.7,.1 -1.7-.2 -1.8,0 -1.7,0 -1.7,.3 -1.7-.1 -1.8,.3 -1.7,0 -1.7-.1 -1.8,.1 -1.7,.1 -1.7-.2 -1.8,0 -1.7,.3 -1.7-.1 -1.8,0 -1.7,.2 -1.7,.1 -1.8,0 -1.7,0 -1.7,.2 -1.8-.1 -1.7,.1 -1.7-.2 -1.8,.2 -1.7,.1 -1.7-.2 -1.8-.1 -1.7,.2 -1.7,.1 -1.8,.1 -1.7-.1 -1.7,0 -1.8,.2 -1.7-.1 -1.7-.1 -1.8,.1 -1.7,.1 -1.7,.2 -1.7-.4 -1.8,.6 -1.7,.1 -1.7,0 -1.8-.3 -1.7,0 -1.7,.2 -1.8,.3 -1.7-.1 -1.7,.1 -1.8-.2 -1.7,.1 -1.7-.2 -1.8-.2 -1.7,.4 -1.7,.1 -1.8,0 -1.7,0 -1.7,.2 -1.8-.1 -1.7-.1 -1.7,.1 -1.8,.1 -1.7-.1 -1.7,.1 -1.8,.2 -1.7,.1 -1.7,0 -1.8,.1 -1.7,.1 -1.7,.2 -1.8-.4 -1.7,.1 -1.7,.1 -1.8,0 -1.7,.2 -1.7,0 -1.7-.1 -1.8,0 -1.7,0 -1.7,.3 -1.8,.2 -1.7-.1 -1.7-.1 -1.8-.1 -1.7-.1 -1.7-.2 -1.8-.1 -1.7-.2 -1.7-.1 -1.8,.1 -1.7-.2 -1.7-.2 -1.8,0 -1.7-.1 -1.7-.1 -1.8-.3 -1.7,.1 -1.7-.4 -1.8,0 -1.7-.1 -1.7-.3 -1.8-.1 -1.7-.2 -1.7,.1 -1.8,0 -1.7-.4 -1.7-.6 -1.8-.7 -1.7-.9 -1.7-.9 -1.7-.5 -1.8,.1 -1.7,.2 -1.7,.1 -1.8,.5 -1.7,.3 -1.7-.1 -1.8,.4 -1.7,.5 -1.7,.6 -1.8,.2 -1.7,0 -1.7,.3 -1.8,0 -1.7,.4 -1.7,.3 -1.8,.2 -1.7,.7 -1.7,.1 -1.8,.3 -1.7,.2 -1.7,.5 -1.8,.1 -1.7,.2 -1.7,.3 -1.8,.3 -1.7,.6 -1.7,.1 -1.8,.3 -1.7,.2 -1.7,0 -1.8-.2 -1.7-.2 -1.7,.1 -1.8-.1 -1.7-.3 -1.7-.2 -1.7-.1 -1.8,0 -1.7-.3 -1.7,0 -1.8-.5 -1.7,.2 -1.7,4 -1.8,3.2 -1.7,0 -1.7,0 -1.8,.1 -1.7,0 -1.7,0 -1.8,0 -1.7,0 -1.7,0 -1.8,0 -1.7,0 -1.7,0 -1.8,0 -1.7,0 -1.7,0 -1.8,0 -1.7,0 -1.7,0 -1.8,0 -1.7,0 -1.7,0 -1.8,0 -1.7,0 -1.7,0 -1.8,0 -1.7,0 -1.7,0 -1.7,0 -1.8,0 -1.7,0 -1.7,0 -1.8,0 -1.7,0 -1.7,0 -1.8,0 -1.7,0 -1.7,0 -1.8,0 -1.7,0 -1.7,0 -1.8,0 -1.7,0 -1.7,0 -1.8,0 -1.7,0 -1.7,0 -1.8,0 -1.7,0 -1.7,0 -1.8,0 -1.7,0 -1.7,0 -1.8,0 -1.7,0 -1.7,0 -1.8,0 -1.7,0 -1.7,.1 -1.8-.1 -1.7,0 -1.7,0 -1.8,0 -1.7,0 -1.7,0 -1.7,0 -1.8,.1 -1.7,0 -1.7,0 -1.8,0 -1.7-.1 -1.7,.1 -1.8,0 -1.7,0 -1.7,0 -1.8,0 -1.7,0 -1.7,0 -1.8,0 -1.7,0 -1.7,0 -1.8,0 -1.7,0 -1.7,0 -1.8,0 -1.7,0 -1.7,0 -1.8,0 -1.7,0 -1.7,0 -1.8,0 -1.7,0 -1.7,0 -1.8,0 -1.7,0 -1.7,0 -1.8,0 -1.7,0 -1.7,0 -1.8,0 -1.7,0 -1.7,0 -1.7,0 -1.8,0 -1.7,0 -1.7,0 -1.8,0 -1.7,0 -1.7,.1 -1.8-.1 -1.7,.1 -1.7,0 -1.8-.1 -1.7,0 -1.7,0 -1.8,0 -1.7,0 -1.7,0 -1.8,0 -1.7,0 -1.7,0 -1.8,0 -1.7,.1 -1.7,0 -1.8,0 -1.7,0 -1.7,0 -1.8,0 -1.7-.1 -1.7,0 -1.8,.1 -1.7,0 -1.7,0 -1.8,0 -1.7,0 -1.7,0 -1.7,0 -1.8,0 -1.7,0 -1.7,0 -1.8,0 -1.7,0 -1.7,0 -1.8,0 -1.7,0 -1.7,0 -1.8,0 -1.7,0 -1.7,0 -1.8,0 -1.7,0 -1.7,0 -1.8,0 -1.7,0 -1.7,0 -1.8,0 -1.7,0 -1.7,0 -1.8,0 -1.7,0 -1.7,0 -1.8,0 -1.7,0 -1.7,0 -1.8,0 -1.7,0 -1.7,0 -1.8,0 -1.7,0 -1.7,0 -1.8,0 -1.7,0 -1.7,0 -1.7,0 -1.8,0 -1.7,0 -1.7,0 -1.8,0 -1.7,0 -1.7,0 -1.8,0 -1.7,0 -1.7,0 -1.8,0 -1.7,0 -1.7,0 -1.8,0 -1.7,0 -1.7,.1 -1.8,0 -1.7,0 -1.7,0 -1.8-.1 -1.7,0 -1.7,.1 -1.8,0 -1.7,0 -1.7,0 -1.8,0 -1.7,0 -1.7,0 -1.8,0 -1.7,0 -1.7-.1 -1.8,0 -1.7,.1 -1.7-.1 -1.7,.1 -1.8,0 -1.7,0 -1.7,0 -1.8,0 -1.7,0 -1.7,0 -1.8,0 -1.7,0 -1.7,0 -1.8,0 -1.7,0 -1.7,0 -1.8,0 -1.7,0 -1.7,0 -1.8,0 -1.7,0 -1.7,0 -1.8,0 -1.7,0 -1.7,0 -1.8,0 -1.7,0 -1.7,0 -1.8,0 -1.7,0 -1.7,0 -1.8,0 -1.7,0 -1.7,0 -1.8,0 -1.7,0 -1.7,0 -1.8,0 -1.7,0 -1.7,.1 -1.7,0 -1.8-.1 -1.7,0 -1.7,.1 -1.8,0 -1.7,0 -1.7-.1 -1.8,0 -1.7,.1 -1.7,0 -1.8,0 -1.7,0 -1.7,0 -1.8,0 -1.7,0 -1.7,0 -1.8,0 -1.7,0 -1.7,0 -1.8,0 -1.7,0 -1.7,0 -1.8,0 -1.7,0 -1.7,0 -1.8,0 -1.7,0 -1.7,0 -1.8,0 -1.7,0 -1.7,0 -1.8,0 -1.7,0 -1.7,0 -1.8,0 -1.7,0 -1.7,0 -1.7,0 -1.8,0 -1.7,0 -1.7,0 -1.8,0 -1.7,0 -1.7,0 -1.8,0 -1.7,0 -1.7,0 -1.8,0 -1.7,0 -1.7,0 -1.8,0 -1.7,0 -1.7,0 -1.8,0 -1.7,0 -1.7,0 -1.8,0 -1.7,0 -1.7,0 -1.8,0 -1.7,0 -1.7,0 -1.8,0 -1.7,0 -1.7,0 -1.8,0 -1.7,0 -1.7,0 -1.8,0 -1.7,.1 -1.7,0 -1.7-.1 -1.8,0 -1.7,0 -1.7,0 -1.8,0 -1.7,0 -1.7,.1 -1.8,0 -1.7-.1 -1.7,0 -1.8,.1 -1.7,0 -1.7,0 -1.8,0 -1.7,0 -1.7,0 -1.8,0 -1.7,0 -1.7,0 -1.8,0 -1.7,0 -1.7,0 -1.8,0 -1.7,0 -1.7,0 -1.8,0 -1.7,0 -1.7,0 -1.8,0 -1.7,0 -1.7,0 -1.8,0 -1.7,0 -1.7,0 -1.8,0 -1.7,0 -1.7,0 -1.7,0 -1.8,0 -1.7,0 -1.7,0 -1.8,0 -1.7,0 -1.7,0 -1.8,0 -1.7,0 -1.7,0 -1.8,0 -1.7,0 -1.7,0 -1.8,0 -1.7,0 -1.7,0 -1.8,0 -1.7,0 -1.7,0 -1.8,0 -1.7,0 -1.7,0 -1.8,0 -1.7,0 -1.7,.1 -1.8-.1 -1.7,0 -1.7,0 -1.8,0 -1.7,.1 -1.7,0 -1.8,0 -1.7,0 -1.7,0 -1.7,0 -1.8,0 -1.7,0 -1.7,0 -1.8,0 -1.7,0 -1.7,0 -1.8,0 -1.7,0 -1.7,0 -1.8,0 -1.7,0 -1.7,0 -1.8,0 -1.7,0 -1.7,0 -1.8,0 -1.7,0 -1.7,0 -1.8,0 -1.7,0 -1.7,0 -1.8,0 -1.7,0 -1.7,0 -1.8,0 -1.7,0 -1.7,0 -1.8,0 -1.7,0 -1.7,0 -1.8,0 -1.7,0 -1.7,0 -1.8,0 -1.7,0 -1.7,0 -1.7,0 -1.8,0 -1.7,0 -1.7,0 -1.8,0 -1.7,0 -1.7,0 -1.8,0 -1.7,0 -1.7,0 -1.8,0 -1.7,0 -1.7,0 -1.8,0 -1.7,0 -1.7,0 -1.8,0 -1.7,0 -1.7,.1 -1.8,0 -1.7,0 -1.7,0 -1.8,0 -1.7,0 -1.7,0 -1.8,0 -1.7,0 -1.7,0 -1.8,0 -1.7,0 -1.7,0 -1.8-.1 -1.7,.1 -1.7,0 -1.7,0 -1.8,0 -1.7,0 -1.7,0 -1.8,0 -1.7,0 -1.7,0 -1.8,0 -1.7,0 -1.7,0 -1.8,0 -1.7,0 -1.7,0 -1.8,0 -1.7,0 -1.7,0 -1.8,0 -1.7,0 -1.7,0 -1.8,0 -1.7,0 -1.7,0 -1.8,0 -1.7,0 -1.7,0 -1.8,0 -1.7,0 -1.7,0 -1.8,0 -1.7,0 -1.7,0 -1.8,0 -1.7,0 -1.7,0 -1.8,0 -1.7,0 -1.7,0 -1.7,0 -1.8,0 -1.7,0 -1.7,0 -1.8,0 -1.7,0 -1.7,0 -1.8,.1 -1.7-.1 -1.7,0 -1.8,.1 -1.7-.1 -1.7,.1 -1.8-.1 -1.7,.1 -1.7,0 -1.8,0 -1.7,0 -1.7,0 -1.8,0 -1.7,0 -1.7,0 -1.8,0 -1.7,0 -1.7,0 -1.8,0 -1.7,0 -1.7,0 -1.8,0 -1.7,0 -1.7,0 -1.8,0 -1.7,0 -1.7,0 -1.8,0 -1.7,0 -1.7,0 -1.7,0 -1.8,0 -1.7,0 -1.7,0 -1.8,0 -1.7,0 -1.7,0 -1.8,0 -1.7,0 -1.7,0 -1.8,0 -1.7,0 -1.7,0 -1.8,0 -1.7,0 -1.7,0 -1.8,0 -1.7,0 -1.7,0 -1.8,0 -1.7,0 -1.7,0 -1.8,0 -1.7,0 -1.7,0 -1.8,0 -1.7,0 -1.7,0 -1.8,0 -1.7,0 -1.7,0 -1.8,0 -1.7,0 -1.7,0 -1.7,0 -1.8,0 -1.7,.1 -1.7,0 -1.8,0 -1.7,0 -1.7,0 -1.8,0 -1.7-.1 -1.7,0 -1.8,.1 -1.7,0 -1.7,0 -1.8,0 -1.7,0 -1.7,0 -1.8,0 -1.7,0 -1.7,0 -1.8,0 -1.7,0 -1.7,0 -1.8,0 -1.7,0 -1.7,0 -1.8,0 -1.7,0 -1.7,0 -1.8,0 -1.7,0 -1.7,0 -1.8,0 -1.7,0 -1.7,0 -1.8,0 -1.7,0 -1.7,0 -1.7,0 -1.8,0 -1.7,0 -1.7,0 -1.8,0 -1.7,0 -1.7,0 -1.8,0 -1.7,0 -1.7,0 -1.8,0 -1.7,0 -1.7,0 -1.8,0 -1.7,0 -1.7,0 -1.8,0 -1.7,0 -1.7,0 -1.8,0 -1.7,0 -1.7,0 -1.8,0 -1.7,0 -1.7,0 -1.8,0 -1.7,0 -1.7,0 -1.8,0 -1.7,0 -1.7,0 -1.8,0 -1.7,.1 -1.7,0 -1.7-.1 -1.8,.1 -1.7,0 -1.7,0 -1.8,0 -1.7,0 -1.7,0 -1.8,0 -1.7,0 -1.7,0 -1.8,0 -1.7,0 -1.7,0 -1.8,0 -1.7,0 -1.7,0 -1.8,0 -1.7,0z" fill="url(#g4)"/>
<path d="M157.7,808.1l1.7,0 1.8,0 1.7,0 1.7,0 1.8,0 1.7,0 1.7,0 1.8,0 1.7,0 1.7,0 1.8,0 1.7,0 1.7,0 1.8,0 1.7,0 1.7,0 1.8-.1 1.7,.1 1.7,0 1.7-.1 1.8,0 1.7,0 1.7,0 1.8,0 1.7,0 1.7,0 1.8,0 1.7,0 1.7,0 1.8,0 1.7,0 1.7,0 1.8,0 1.7,0 1.7,0 1.8,0 1.7,0 1.7,0 1.8,0 1.7,0 1.7,0 1.8,0 1.7,0 1.7,0 1.8,0 1.7,0 1.7,0 1.8,0 1.7,0 1.7,0 1.8,0 1.7,0 1.7,0 1.7,0 1.8,0 1.7,0 1.7,0 1.8,0 1.7,0 1.7,0 1.8,0 1.7,0 1.7,0 1.8,0 1.7,0 1.7,0 1.8,0 1.7,0 1.7,0 1.8,0 1.7,0 1.7,0 1.8,0 1.7,0 1.7,0 1.8,0 1.7,0 1.7,0 1.8-.1 1.7,0 1.7,.1 1.8,0 1.7,0 1.7,0 1.8,0 1.7,0 1.7-.1 1.8,0 1.7,0 1.7,0 1.7,0 1.8,0 1.7,0 1.7,0 1.8,0 1.7,0 1.7,0 1.8,0 1.7,0 1.7,0 1.8,0 1.7,0 1.7,0 1.8,0 1.7,0 1.7,0 1.8,0 1.7,0 1.7,0 1.8,0 1.7,0 1.7,0 1.8,0 1.7,0 1.7,0 1.8,0 1.7,0 1.7,0 1.8,0 1.7,0 1.7,0 1.8,0 1.7,0 1.7,0 1.7,0 1.8,0 1.7,0 1.7,0 1.8,0 1.7,0 1.7,0 1.8,0 1.7,0 1.7,0 1.8,0 1.7,0 1.7,0 1.8,0 1.7,0 1.7,0 1.8,0 1.7,0 1.7,0 1.8,0 1.7,0 1.7-.1 1.8,.1 1.7-.1 1.7,.1 1.8-.1 1.7,0 1.7,.1 1.8-.1 1.7,0 1.7,0 1.8,0 1.7,0 1.7,0 1.8,0 1.7,0 1.7,0 1.7,0 1.8,0 1.7,0 1.7,0 1.8,0 1.7,0 1.7,0 1.8,0 1.7,0 1.7,0 1.8,0 1.7,0 1.7,0 1.8,0 1.7,0 1.7,0 1.8,0 1.7,0 1.7,0 1.8,0 1.7,0 1.7,0 1.8,0 1.7,0 1.7,0 1.8,0 1.7,0 1.7,0 1.8,0 1.7,0 1.7,0 1.8,0 1.7,0 1.7,0 1.8,0 1.7,0 1.7,0 1.7-.1 1.8,.1 1.7,0 1.7,0 1.8,0 1.7,0 1.7,0 1.8,0 1.7,0 1.7,0 1.8,0 1.7,0 1.7,0 1.8,0 1.7-.1 1.7,0 1.8,0 1.7,0 1.7,0 1.8,0 1.7,0 1.7,0 1.8,0 1.7,0 1.7,0 1.8,0 1.7,0 1.7,0 1.8,0 1.7,0 1.7,0 1.8,0 1.7,0 1.7,0 1.7,0 1.8,0 1.7,0 1.7,0 1.8,0 1.7,0 1.7,0 1.8,0 1.7,0 1.7,0 1.8,0 1.7,0 1.7,0 1.8,0 1.7,0 1.7,0 1.8,0 1.7,0 1.7,0 1.8,0 1.7,0 1.7,0 1.8,0 1.7,0 1.7,0 1.8,0 1.7,0 1.7,0 1.8,0 1.7,0 1.7,0 1.8,0 1.7,0 1.7,0 1.8,0 1.7,0 1.7,0 1.7,0 1.8,0 1.7,0 1.7-.1 1.8,0 1.7,0 1.7,0 1.8,.1 1.7-.1 1.7,0 1.8,0 1.7,0 1.7,0 1.8,0 1.7,0 1.7,0 1.8,0 1.7,0 1.7,0 1.8,0 1.7,0 1.7,0 1.8,0 1.7,0 1.7,0 1.8,0 1.7,0 1.7,0 1.8,0 1.7,0 1.7,0 1.8,0 1.7,0 1.7,0 1.7,0 1.8,0 1.7,0 1.7,0 1.8,0 1.7,0 1.7,0 1.8,0 1.7,0 1.7,0 1.8,0 1.7,0 1.7,0 1.8,0 1.7,0 1.7,0 1.8,0 1.7,0 1.7,0 1.8,0 1.7,0 1.7,0 1.8,0 1.7,0 1.7,0 1.8-.1 1.7,0 1.7,.1 1.8,0 1.7-.1 1.7,0 1.8,0 1.7,0 1.7,0 1.8,0 1.7,.1 1.7,0 1.7-.1 1.8,0 1.7,0 1.7,0 1.8,0 1.7,0 1.7,0 1.8,0 1.7,0 1.7,0 1.8,0 1.7,0 1.7,0 1.8,0 1.7,0 1.7,0 1.8,0 1.7,0 1.7,0 1.8,0 1.7,0 1.7,0 1.8,0 1.7,0 1.7,0 1.8,0 1.7,0 1.7,0 1.8,0 1.7,0 1.7,0 1.8,0 1.7,0 1.7,0 1.7,0 1.8,0 1.7,0 1.7,0 1.8,0 1.7,0 1.7,0 1.8,0 1.7,0 1.7,0 1.8,0 1.7,0 1.7,0 1.8,0 1.7,0 1.7,0 1.8,0 1.7,0 1.7,0 1.8,0 1.7,0 1.7,0 1.8,0 1.7,0 1.7,0 1.8,0 1.7,0 1.7-.1 1.8,0 1.7,.1 1.7,0 1.8,0 1.7-.1 1.7,0 1.8,.1 1.7,0 1.7-.1 1.7,0 1.8,0 1.7,0 1.7,0 1.8,0 1.7,0 1.7,0 1.8,0 1.7,0 1.7,0 1.8,0 1.7,0 1.7,0 1.8,0 1.7,0 1.7,0 1.8,0 1.7,0 1.7,0 1.8,0 1.7,0 1.7,0 1.8,0 1.7,0 1.7,0 1.8,0 1.7,0 1.7,0 1.8,0 1.7,0 1.7,0 1.8,0 1.7,0 1.7,0 1.8,0 1.7-.1 1.7,.1 1.7-.1 1.8,0 1.7,.1 1.7,0 1.8,0 1.7,0 1.7,0 1.8,0 1.7,0 1.7,0 1.8,0 1.7-.1 1.7,0 1.8,.1 1.7,0 1.7,0 1.8,0 1.7-.1 1.7,0 1.8,0 1.7,0 1.7,0 1.8,0 1.7,0 1.7,0 1.8,0 1.7,0 1.7,0 1.8,0 1.7,0 1.7,0 1.8,0 1.7,0 1.7,0 1.7,0 1.8,0 1.7,0 1.7,0 1.8,0 1.7,0 1.7,0 1.8,0 1.7,0 1.7,0 1.8,0 1.7,0 1.7,0 1.8,0 1.7,0 1.7,0 1.8,0 1.7,0 1.7,0 1.8,0 1.7,0 1.7,0 1.8,0 1.7,0 1.7,0 1.8,0 1.7,0 1.7,0 1.8,0 1.7,0 1.7,0 1.8,0 1.7,0 1.7,0 1.8,0 1.7,0 1.7,0 1.7,0 1.8,0 1.7,0 1.7,0 1.8-.1 1.7,0 1.7,.1 1.8,0 1.7,0 1.7,0 1.8,0 1.7,0 1.7-.1 1.8,0 1.7,0 1.7,0 1.8,0 1.7,0 1.7,0 1.8,0 1.7,0 1.7,0 1.8,.1 1.7,0 1.7-.1 1.8,.1 1.7-.1 1.7,0 1.8,0 1.7,0 1.7,0 1.8,0 1.7,0 1.7,0 1.7,0 1.8,0 1.7,0 1.7,0 1.8,0 1.7,0 1.7,0 1.8,0 1.7,0 1.7,0 1.8,0 1.7,0 1.7,0 1.8,0 1.7,0 1.7,0 1.8,0 1.7,0 1.7,0 1.8,0 1.7,0 1.7,0 1.8,0 1.7,0 1.7,0 1.8,0 1.7,0 1.7,0 1.8,0 1.7-.1 1.7,.1 1.8,0 1.7,0 1.7,0 1.8-.1 1.7,0 1.7,0 1.7,0 1.8,0 1.7,0 1.7,0 1.8,.1 1.7-.1 1.7,0 1.8,0 1.7,0 1.7,0 1.8,0 1.7,0 1.7,0 1.8,0 1.7,0 1.7,0 1.8,0 1.7,0 1.7,0 1.8,0 1.7,0 1.7,0 1.8,0 1.7,0 1.7,0 1.8,0 1.7,0 1.7,0 1.8,0 1.7,0 1.7,0 1.8,0 1.7,0 1.7,0 1.8,0 1.7,0 1.7,0 1.7,0 1.8,0 1.7,0 1.7,0 1.8,0 1.7,0 1.7,0 1.8,0 1.7,0 1.7,0 1.8,0 1.7,0 1.7,0 1.8,0 1.7,0 1.7,0 1.8,0 1.7,0 1.7,0 1.8,0 1.7,0 1.7,0 1.8-.1 1.7,0 1.7,0 1.8-3.2 1.7-4 1.7-.2 1.8,.5 1.7,0 1.7,.3 1.8,0 1.7,.1 1.7,.2 1.7,.3 1.8,.1 1.7-.1 1.7,.2 1.8,.2 1.7,0 1.7-.2 1.8-.3 1.7-.1 1.7-.6 1.8-.3 1.7-.3 1.7-.2 1.8-.1 1.7-.5 1.7-.2 1.8-.3 1.7-.1 1.7-.7 1.8-.2 1.7-.3 1.7-.4 1.8,0 1.7-.3 1.7,0 1.8-.2 1.7-.6 1.7-.5 1.8-.4 1.7,.1 1.7-.3 1.8-.5 1.7-.1 1.7-.2 1.8-.1 1.7,.5 1.7,.9 1.7,.9 1.8,.7 1.7,.6 1.7,.4 1.8,0 1.7-.1 1.7,.2 1.8,.1 1.7,.3 1.7,.1 1.8,0 1.7,.4 1.7-.1 1.8,.3 1.7,.1 1.7,.1 1.8,0 1.7,.2 1.7,.2 1.8-.1 1.7,.1 1.7,.2 1.8,.1 1.7,.2 1.7,.1 1.8,.1 1.7,.1 1.7,.1 1.8-.2 1.7-.3 1.7,0 1.8,0 1.7,.1 1.7,0 1.7-.2 1.8,0 1.7-.1 1.7-.1 1.8,.4 1.7-.2 1.7-.1 1.8-.1 1.7,0 1.7-.1 1.8-.2 1.7-.1 1.7,.1 1.8-.1 1.7-.1 1.7,.1 1.8,.1 1.7-.2 1.7,0 1.8,0 1.7-.1 1.7-.4 1.8,.2 1.7,.2 1.7-.1 1.8,.2 1.7-.1 1.7,.1 1.8-.3 1.7-.2 1.7,0 1.8,.3 1.7,0 1.7-.1 1.8-.6 1.7,.4 1.7-.2 1.7-.1 1.8-.1 1.7,.1 1.7,.1 1.8-.2 1.7,0 1.7,.1 1.8-.1 1.7-.1 1.7-.2 1.8,.1 1.7,.2 1.7-.1 1.8-.2 1.7,.2 1.7-.1 1.8,.1 1.7-.2 1.7,0 1.8,0 1.7-.1 1.7-.2 1.8,0 1.7,.1 1.7-.3 1.8,0 1.7,.2 1.7-.1 1.8-.1 1.7,.1 1.7,0 1.8-.3 1.7,.1 1.7-.3 1.7,0 1.8,0 1.7,.2 1.7-.1 1.8,0 1.7-.1 1.7,.1 1.8,0 1.7,.2 1.7-.3 1.8,0 1.7,0 1.7,0 1.8-.2 1.7-.2 1.7,0 1.8,.2 1.7,0 1.7-.1 1.8,0 1.7,0 1.7,.1 1.8-.2 1.7,.1 1.7,0 1.8-.2 1.7-.1 1.7,0 1.8-.2 1.7,.1 1.7,0 1.8,0 1.7-.1 1.7-.1 1.8-.3 1.7,.2 1.7,.1 1.7-.2 1.8-.1 1.7-.1 1.7,0 1.8-.1 1.7,0 1.7,0 1.8,.2 1.7,.1 1.7,0 1.8-.3 1.7,.2 1.7-.2 1.8-.2 1.7,.1 1.7,0 1.8,.2 1.7-.2 1.7-.2 1.8,0 1.7,.2 1.7-.1 1.8,0 1.7,.2 1.7-.2 1.8,.1 1.7-.1 1.7,0 1.8-.4 1.7,.1 1.7-.2 1.8,0 1.7,.2 1.7-.1 1.8,.1 1.7,.1 1.7,0 1.7-.2 1.8,0 1.7-.2 1.7,0 1.8-.3 1.7,0 1.7,.1 1.8-.2 1.7,0 1.7-.2 1.8,0 1.7,.5 1.7-.3 1.8,0 1.7,.2 1.7-.1 1.8-.1 1.7-.1 1.7-.4 1.8,.4 1.7,0 1.7,0 1.8,.1 1.7-.1 1.7,0 1.8-.4 1.7,.1 1.7-.1 1.8,0 1.7,.4 1.7-.2 1.8-.1 1.7,.1 1.7-.4 1.7,.1 1.8-.2 1.7,.1 1.7-.1 1.8,.1 1.7-.1 1.7-.1 1.8-.1 1.7,.1 1.7-.2 1.8-.1 1.7-.1 1.7,.1 1.8,0 1.7,.1 1.7-.1 1.8,0 1.7,.1 1.7,0 1.8-.1 1.7,.2 1.7,.4 1.8-.3 1.7-.2 1.7-.2 1.8-.5 1.7-.7 1.7-12.6 1.8,.2 1.7,.5 1.7-.4 1.8,.4 1.7-.2 1.7-.2 1.8,.3 1.7-.1 1.7-.2 1.7,0 1.8-.5 1.7,.4 1.7,.1 1.8-.9 1.7,.1 1.7-.8 1.8,.1 1.7,.2 1.7,.6 1.8-.2 1.7-.5 1.7-.3 1.8,0 1.7,0 1.7,.3 1.8-.2 1.7,.2 1.7,0 1.8-.2 1.7,0 1.7-.4 1.8,.3 1.7,.6 1.7-.2 1.8,0 1.7-.4 1.7,0 1.8,0 1.7-.4 1.7,.3 1.8-.4 1.7,.6 1.7-.2 1.7-.6 1.8-.1 1.7-.5 1.7,.1 1.8,.3 1.7,.3 1.7-.6 1.8,.1 1.7-.1 1.7,.1 1.8,.4 1.7-.6 1.7-.3 1.8,.2 1.7-.1 1.7,.1 1.8,.1 1.7,0 1.7-.4 1.8-.3 1.7,.4 1.7,.7 1.8-.5 1.7-.8 1.7,.4 1.8-.8 1.7,.4 1.7,.1 1.8,.8 1.7,0 1.7-.1 1.8-.2 1.7-1 1.7,0 1.8,.5 1.7,.2 1.7-.2 1.7-.2 1.8-.4 1.7,0 1.7-.1 1.8,.6 1.7,.2 1.7-.5 1.8,.1 1.7,0 1.7-.4 1.8-.6 1.7,.4 1.7-.5 1.8-.3 1.7,.6 1.7,.8 1.8,.1 1.7-.2 1.7-.3 1.8-.2 1.7-.6 1.7-.1 1.8-.3 1.7-.6 1.7,.6 1.8,0 1.7,.2 1.7,.5 1.8-.2 1.7,.2 1.7-.8 1.8,.5 1.7-.8 1.7,.4 1.7,.1 1.8-.2 1.7,.2 1.7-.5 1.8-.1 1.7,0 1.7,.5 1.8-.2 1.7,.2 1.7,0 1.8-.3 1.7-.6 1.7,.2 1.8,.6 1.7,.4 1.7,0 1.8-.7 1.7,.2 1.7,.3 1.8,.5 1.7-.4 1.7-.3 1.8-.2 1.7-.8 1.7,0 1.8-.4 1.7,.2 1.7-.3 1.8-.1 1.7-.4 1.7,.9 1.8-.4 1.7,.3 1.7,.7 1.8-.3 1.7-.3 1.7,.5 1.7,.2 1.8-.6 1.7,0 .3-.5 0,13.5 -.3,.2 -1.7,.2 -1.8,.5 -1.7-.5 -1.7-.3 -1.7,0 -1.8,.4 -1.7-.6 -1.7-.1 -1.8,.2 -1.7-.8 -1.7,0 -1.8,.2 -1.7,.1 -1.7-.1 -1.8,.1 -1.7-.3 -1.7,.3 -1.8,.5 -1.7,0 -1.7,0 -1.8-.1 -1.7-.8 -1.7-.1 -1.8,.6 -1.7,.1 -1.7-.4 -1.8-.3 -1.7-.4 -1.7,.3 -1.8,0 -1.7-.1 -1.7-.3 -1.8,.2 -1.7-.5 -1.7,.1 -1.8-.5 -1.7,.3 -1.7-.1 -1.8,.3 -1.7-.1 -1.7-.6 -1.7,.6 -1.8-.4 -1.7,.5 -1.7-.4 -1.8,.1 -1.7-.5 -1.7-.3 -1.8-.2 -1.7-.5 -1.7,.4 -1.8,.2 -1.7,0 -1.7,.3 -1.8,.2 -1.7,.3 -1.7,.2 -1.8-.3 -1.7-.8 -1.7-.6 -1.8,.3 -1.7,.4 -1.7-.4 -1.8,.7 -1.7,.1 -1.7,.2 -1.8-.1 -1.7,.4 -1.7-.1 -1.8-.2 -1.7,0 -1.7,0 -1.8,.5 -1.7,.1 -1.7,.3 -1.7-.1 -1.8-.5 -1.7,0 -1.7,.9 -1.8,.3 -1.7-.2 -1.7,.2 -1.8-.7 -1.7-.2 -1.7,0 -1.8,.5 -1.7-.4 -1.7,.9 -1.8,.6 -1.7-.6 -1.7-.4 -1.8,.3 -1.7,.5 -1.7,.1 -1.8-.1 -1.7-.2 -1.7,.1 -1.8,0 -1.7,.2 -1.7,.5 -1.8-.3 -1.7-.1 -1.7,0 -1.8-.1 -1.7,.7 -1.7-.1 -1.8-.3 -1.7-.3 -1.7,.3 -1.8,.2 -1.7,.5 -1.7,.5 -1.7-.2 -1.8,.5 -1.7-.7 -1.7,.2 -1.8,.1 -1.7,.4 -1.7,.2 -1.8,0 -1.7,.1 -1.7-.3 -1.8-.4 -1.7,.4 -1.7-.3 -1.8,.2 -1.7-.1 -1.7-.2 -1.8-.1 -1.7-.2 -1.7-.1 -1.8-.3 -1.7,.2 -1.7,.2 -1.8,0 -1.7-.6 -1.7-.2 -1.8,0 -1.7,.4 -1.7-.2 -1.8,.7 -1.7,0 -1.7-.5 -1.8,.4 -1.7-.3 -1.7,0 -1.7,.2 -1.8-.3 -1.7,.2 -1.7-.1 -1.8-.4 -1.7,.2 -1.7-.6 -1.8-.2 -1.7,9 -1.7-.4 -1.8,.1 -1.7,.3 -1.7,.2 -1.8,.3 -1.7-.4 -1.7-.2 -1.8,.2 -1.7,0 -1.7,0 -1.8,0 -1.7,.1 -1.7,0 -1.8,.1 -1.7,0 -1.7,.1 -1.8,.1 -1.7,.2 -1.7-.1 -1.8,.2 -1.7,.1 -1.7,.1 -1.8,0 -1.7,.1 -1.7-.1 -1.8,.3 -1.7-.1 -1.7,.4 -1.7,0 -1.8,.1 -1.7,.2 -1.7-.3 -1.8,0 -1.7,.1 -1.7,0 -1.8,.5 -1.7,0 -1.7,.1 -1.8,0 -1.7,0 -1.7,0 -1.8-.3 -1.7,.4 -1.7,.1 -1.8,.1 -1.7,.1 -1.7-.1 -1.8,0 -1.7,.3 -1.7-.3 -1.8,0 -1.7,.3 -1.7-.1 -1.8,.3 -1.7-.1 -1.7,0 -1.8,.4 -1.7,0 -1.7,.2 -1.8,.1 -1.7,.3 -1.7-.1 -1.7,0 -1.8,.1 -1.7,.2 -1.7-.2 -1.8,.1 -1.7,.2 -1.7-.1 -1.8,.3 -1.7,.1 -1.7,.2 -1.8-.1 -1.7,.1 -1.7-.1 -1.8,0 -1.7,.1 -1.7,0 -1.8,0 -1.7,.2 -1.7,.3 -1.8-.1 -1.7-.1 -1.7,.2 -1.8,.1 -1.7,.1 -1.7,0 -1.8,.2 -1.7,0 -1.7,.1 -1.8-.2 -1.7,0 -1.7,0 -1.8,.2 -1.7-.1 -1.7,0 -1.8,0 -1.7,.1 -1.7,0 -1.7-.1 -1.8,.1 -1.7,.1 -1.7,0 -1.8-.1 -1.7-.1 -1.7,0 -1.8,.1 -1.7-.1 -1.7-.1 -1.8,.1 -1.7,.1 -1.7-.2 -1.8,.1 -1.7-.2 -1.7,0 -1.8,.1 -1.7,.1 -1.7,0 -1.8-.4 -1.7,0 -1.7,.2 -1.8,.1 -1.7,0 -1.7-.1 -1.8-.1 -1.7,.3 -1.7-.2 -1.8,.1 -1.7-.2 -1.7,0 -1.8,0 -1.7,0 -1.7-.2 -1.8-.1 -1.7,0 -1.7,.3 -1.7-.2 -1.8,.2 -1.7,0 -1.7,0 -1.8,0 -1.7,.2 -1.7-.1 -1.8,0 -1.7,.3 -1.7,.1 -1.8,0 -1.7,.2 -1.7,.1 -1.8,.1 -1.7,.1 -1.7,.2 -1.8,0 -1.7,.1 -1.7,0 -1.8,.2 -1.7,.1 -1.7-.1 -1.8,0 -1.7,.4 -1.7,0 -1.8,.1 -1.7-.3 -1.7,0 -1.8,0 -1.7-.2 -1.7-.1 -1.8-.1 -1.7,0 -1.7,0 -1.7-.3 -1.8,.4 -1.7-.1 -1.7-.1 -1.8-.3 -1.7-.2 -1.7,.1 -1.8,.2 -1.7-.2 -1.7-.1 -1.8-.3 -1.7,0 -1.7-.3 -1.8-.3 -1.7,.2 -1.7,0 -1.8-.1 -1.7-.1 -1.7,.2 -1.8,0 -1.7-.1 -1.7,.2 -1.8,0 -1.7,0 -1.7,.2 -1.8,.2 -1.7,.1 -1.7,.1 -1.8,.1 -1.7,.1 -1.7,.2 -1.8-.3 -1.7,.1 -1.7,.1 -1.8,0 -1.7,.3 -1.7,0 -1.7,0 -1.8,0 -1.7,.1 -1.7,.3 -1.8,.2 -1.7,0 -1.7,0 -1.8-.1 -1.7-.2 -1.7-.2 -1.8-.1 -1.7-.2 -1.7-.2 -1.8,.1 -1.7-.2 -1.7-.2 -1.8,0 -1.7,0 -1.7-.2 -1.8-.3 -1.7,.1 -1.7-.4 -1.8,0 -1.7-.1 -1.7-.3 -1.8-.1 -1.7-.2 -1.7,.1 -1.8,0 -1.7-.4 -1.7-.6 -1.8-.8 -1.7-.9 -1.7-1 -1.7-.5 -1.8,.1 -1.7,.2 -1.7,.1 -1.8,.6 -1.7,.2 -1.7,0 -1.8,.3 -1.7,.5 -1.7,.6 -1.8,.2 -1.7,0 -1.7,.3 -1.8,0 -1.7,.4 -1.7,.3 -1.8,.1 -1.7,.7 -1.7,.1 -1.8,.3 -1.7,.2 -1.7,.5 -1.8,.1 -1.7,.2 -1.7,.3 -1.8,.3 -1.7,.5 -1.7,.2 -1.8,.2 -1.7,.3 -1.7-.1 -1.8-.2 -1.7-.2 -1.7,.1 -1.8-.2 -1.7-.2 -1.7-.2 -1.7-.2 -1.8,0 -1.7-.3 -1.7-.1 -1.8-.4 -1.7,.1 -1.7,3.7 -1.8,3 -1.7,0 -1.7,0 -1.8,0 -1.7,0 -1.7,0 -1.8,0 -1.7,0 -1.7,0 -1.8,0 -1.7,0 -1.7,0 -1.8,.1 -1.7-.1 -1.7,.1 -1.8,0 -1.7-.1 -1.7,0 -1.8,0 -1.7,0 -1.7,0 -1.8,0 -1.7,0 -1.7,0 -1.8,0 -1.7,0 -1.7,0 -1.7,0 -1.8,0 -1.7,.1 -1.7,0 -1.8,0 -1.7,0 -1.7,0 -1.8,0 -1.7,0 -1.7-.1 -1.8,0 -1.7,0 -1.7,0 -1.8,.1 -1.7,0 -1.7,0 -1.8,0 -1.7,0 -1.7,0 -1.8,0 -1.7-.1 -1.7,0 -1.8,.1 -1.7,0 -1.7,0 -1.8,0 -1.7,0 -1.7,0 -1.8-.1 -1.7,.1 -1.7,0 -1.8,0 -1.7,0 -1.7,0 -1.8,0 -1.7,0 -1.7,0 -1.7,0 -1.8,0 -1.7,0 -1.7,0 -1.8,0 -1.7,0 -1.7,0 -1.8,0 -1.7,0 -1.7,0 -1.8,0 -1.7,0 -1.7,0 -1.8,0 -1.7,0 -1.7,0 -1.8,0 -1.7,0 -1.7,0 -1.8,0 -1.7,0 -1.7,0 -1.8,.1 -1.7,0 -1.7,0 -1.8,0 -1.7-.1 -1.7,0 -1.8,0 -1.7,.1 -1.7-.1 -1.8,.1 -1.7-.1 -1.7,0 -1.8,.1 -1.7,0 -1.7,0 -1.7,0 -1.8,0 -1.7,0 -1.7,0 -1.8,0 -1.7,0 -1.7,0 -1.8,0 -1.7,0 -1.7,0 -1.8,0 -1.7,0 -1.7,0 -1.8,0 -1.7,0 -1.7,0 -1.8,0 -1.7,0 -1.7,0 -1.8,0 -1.7,0 -1.7,0 -1.8,0 -1.7,0 -1.7,0 -1.8,0 -1.7,0 -1.7,0 -1.8,0 -1.7,0 -1.7,0 -1.8,0 -1.7,0 -1.7,0 -1.7,0 -1.8,0 -1.7,0 -1.7,0 -1.8,0 -1.7,0 -1.7,0 -1.8,0 -1.7,0 -1.7,0 -1.8,0 -1.7,0 -1.7,0 -1.8,0 -1.7,0 -1.7,0 -1.8,0 -1.7,0 -1.7,0 -1.8,0 -1.7,0 -1.7,0 -1.8,0 -1.7,0 -1.7,0 -1.8,0 -1.7,0 -1.7,0 -1.8,0 -1.7,.1 -1.7,0 -1.8,0 -1.7,0 -1.7,0 -1.8,0 -1.7,0 -1.7,0 -1.7,0 -1.8-.1 -1.7,0 -1.7,.1 -1.8,0 -1.7,0 -1.7,0 -1.8,0 -1.7,0 -1.7,0 -1.8,0 -1.7,0 -1.7,0 -1.8,0 -1.7,0 -1.7,0 -1.8,0 -1.7,0 -1.7,0 -1.8,0 -1.7,0 -1.7,0 -1.8,0 -1.7,0 -1.7,0 -1.8,0 -1.7,0 -1.7,0 -1.8,0 -1.7,0 -1.7,0 -1.8,0 -1.7,0 -1.7,0 -1.7,0 -1.8,0 -1.7,0 -1.7,0 -1.8,0 -1.7,.1 -1.7,0 -1.8-.1 -1.7,0 -1.7,0 -1.8,0 -1.7,0 -1.7,0 -1.8,0 -1.7,0 -1.7,0 -1.8,0 -1.7,0 -1.7,0 -1.8,.1 -1.7-.1 -1.7,.1 -1.8,0 -1.7-.1 -1.7,.1 -1.8-.1 -1.7,.1 -1.7-.1 -1.8,0 -1.7,0 -1.7,0 -1.8,.1 -1.7,0 -1.7,0 -1.8,0 -1.7,0 -1.7,0 -1.7,0 -1.8,0 -1.7,0 -1.7,0 -1.8,0 -1.7,0 -1.7,0 -1.8,0 -1.7,0 -1.7,0 -1.8,0 -1.7,0 -1.7,0 -1.8,0 -1.7,0 -1.7,0 -1.8,0 -1.7,0 -1.7,0 -1.8,0 -1.7,0 -1.7,0 -1.8,0 -1.7,0 -1.7,0 -1.8,.1 -1.7-.1 -1.7,0 -1.8,0 -1.7,0 -1.7,0 -1.8,0 -1.7,0 -1.7,.1 -1.8-.1 -1.7,0 -1.7,0 -1.7,0 -1.8,.1 -1.7-.1 -1.7,0 -1.8,0 -1.7,0 -1.7,.1 -1.8,0 -1.7,0 -1.7,0 -1.8,0 -1.7,0 -1.7,0 -1.8,0 -1.7,0 -1.7-.1 -1.8,.1 -1.7,0 -1.7,0 -1.8-.1 -1.7,0 -1.7,.1 -1.8,0 -1.7,0 -1.7,0 -1.8,0 -1.7,0 -1.7,0 -1.8,0 -1.7,0 -1.7,0 -1.8,0 -1.7,0 -1.7,0 -1.7,0 -1.8,0 -1.7,0 -1.7,0 -1.8,0 -1.7,0 -1.7,0 -1.8,0 -1.7,0 -1.7,0 -1.8,0 -1.7,0 -1.7,0 -1.8,0 -1.7,0 -1.7,0 -1.8,0 -1.7,0 -1.7,0 -1.8,0 -1.7,0 -1.7,0 -1.8,0 -1.7,0 -1.7,0 -1.8,0 -1.7,0 -1.7,0 -1.8,0 -1.7,0 -1.7,0 -1.8,0 -1.7,0 -1.7,0 -1.8,0 -1.7,0 -1.7,0 -1.7,0 -1.8,0 -1.7,0 -1.7,0 -1.8,0 -1.7,0 -1.7,0 -1.8,0 -1.7,0 -1.7,.1 -1.8-.1 -1.7,0 -1.7,0 -1.8,.1 -1.7,0 -1.7,0 -1.8,0 -1.7,0 -1.7,0 -1.8,0 -1.7,0 -1.7,0 -1.8,0 -1.7,0 -1.7,0 -1.8,0 -1.7,0 -1.7,0 -1.8,0 -1.7,0 -1.7,0 -1.8,0 -1.7,0 -1.7,0 -1.7,0 -1.8,0 -1.7,0 -1.7,0 -1.8,0 -1.7,0 -1.7,0 -1.8,0 -1.7,0 -1.7,0 -1.8,0 -1.7,0 -1.7,0 -1.8,0 -1.7,0 -1.7,0 -1.8,0 -1.7,0 -1.7,0 -1.8,0 -1.7,0 -1.7,0 -1.8,0 -1.7,0 -1.7,0 -1.8,0 -1.7,0 -1.7,0 -1.8,.1 -1.7,0 -1.7,0 -1.8-.1 -1.7,.1 -1.7-.1 -1.8,0 -1.7,0 -1.7,.1 -1.7,0 -1.8,0 -1.7,0 -1.7,0 -1.8,0 -1.7,0 -1.7,0 -1.8,0 -1.7,0 -1.7,0 -1.8,0 -1.7,0 -1.7,0 -1.8,0 -1.7,0 -1.7,0 -1.8,0 -1.7,0 -1.7,0 -1.8,0 -1.7,0 -1.7,0 -1.8,0 -1.7,0 -1.7,0 -1.8,0 -1.7,0 -1.7,0 -1.8,0 -1.7,0 -1.7,0 -1.8,0 -1.7,0 -1.7,0 -1.7,0 -1.8,0 -1.7,0 -1.7,0 -1.8,0 -1.7,0 -1.7,0 -1.8,0 -1.7,0 -1.7,0 -1.8,0 -1.7,0 -1.7,0 -1.8,0 -1.7,0 -1.7,0 -1.8,0 -1.7,0 -1.7,0 -1.8,0 -1.7,0 -1.7,.1 -1.8-.1 -1.7,0 -1.7,0 -1.8,0 -1.7,0 -1.7,0 -1.8,0 -1.7,.1 -1.7,0 -1.8,0 -1.7,0 -1.7,0 -1.8,0 -1.7,0 -1.7,0 -1.7,0 -1.8,0 -1.7,0 -1.7,0 -1.8,0 -1.7,0 -1.7,0 -1.8,0 -1.7,0 -1.7,0 -1.8,0 -1.7,0 -1.7,0 -1.8,0 -1.7,0 -1.7,0 -1.8,0 -1.7,0 -1.7,0 -1.8,0 -1.7,0 -1.7,0 -1.8,0 -1.7,0 -1.7,0 -1.8,0 -1.7,0 -1.7,0 -1.8,0 -1.7,0 -1.7,0 -1.8,0 -1.7,0 -1.7,0 -1.8,0 -1.7,0 -1.7,0 -1.7,0 -1.8,0 -1.7,0 -1.7,0 -1.8,0 -1.7,0 -1.7,0 -1.8,0 -1.7,0 -1.7,0 -1.8,0 -1.7,0 -1.7,0 -1.8,0 -1.7,0 -1.7,0 -1.8,0 -1.7,0 -1.7,.1 -1.8-.1 -1.7,0 -1.7,0 -1.8,0 -1.7,.1 -1.7,0 -1.8,0 -1.7,0 -1.7,0 -1.8,0 -1.7,0 -1.7,0 -1.8,0 -1.7,0 -1.7,0 -1.7,0 -1.8,0 -1.7,0 -1.7,0 -1.8,0 -1.7,0 -1.7,0 -1.8,0 -1.7,0 -1.7,0 -1.8,0 -1.7,0 -1.7,0 -1.8,0 -1.7,0 -1.7,0 -1.8,0 -1.7,0 -1.7,0 -1.8,0 -1.7,0 -1.7,0 -1.8,0 -1.7,0 -1.7,0 -1.8,0 -1.7,0 -1.7,0 -1.8,0 -1.7,0 -1.7,0 -1.8,0 -1.7,0 -1.7,0 -1.8,0 -1.7,0 -1.7,0 -1.7,0 -1.8,0 -1.7,0 -1.7,0 -1.8,.1 -1.7,0 -1.7-.1 -1.8,0 -1.7,0 -1.7,.1 -1.8,0 -1.7,0 -1.7,0 -1.8,0 -1.7,0 -1.7,0 -1.8,0 -1.7,0 -1.7,0 -1.8,0 -1.7,0 -1.7,0 -1.8,0 -1.7,0 -1.7,0 -1.8,0 -1.7,0 -1.7,0 -1.8,0 -1.7,0 -1.7,0 -1.8,0 -1.7,0 -1.7,0 -1.7,0 -1.8,0 -1.7,0 -1.7,0 -1.8,0 -1.7,0 -1.7,0 -1.8,0 -1.7,0 -1.7,0 -1.8,0 -1.7,0 -1.7,0 -1.8,0 -1.7,0 -1.7,0 -1.8,0 -1.7,0z" fill="url(#g5)"/>
<path d="M157.7,808.2l1.7,0 1.8,0 1.7,0 1.7,0 1.8,0 1.7,0 1.7,0 1.8,0 1.7,0 1.7,0 1.8,0 1.7,0 1.7,0 1.8,0 1.7,0 1.7,0 1.8,0 1.7,0 1.7,0 1.7,0 1.8,0 1.7,0 1.7,0 1.8,0 1.7,0 1.7,0 1.8,0 1.7,0 1.7,0 1.8,0 1.7,0 1.7,0 1.8,0 1.7,0 1.7,0 1.8,0 1.7,0 1.7,0 1.8,0 1.7,0 1.7,0 1.8,0 1.7-.1 1.7,0 1.8,0 1.7,.1 1.7,0 1.8-.1 1.7,0 1.7,0 1.8,0 1.7,0 1.7,0 1.7,0 1.8,0 1.7,0 1.7,0 1.8,0 1.7,0 1.7,0 1.8,0 1.7,0 1.7,0 1.8,0 1.7,0 1.7,0 1.8,0 1.7,0 1.7,0 1.8,0 1.7,0 1.7,0 1.8,0 1.7,0 1.7,0 1.8,0 1.7,0 1.7,0 1.8,0 1.7,0 1.7,0 1.8,0 1.7,0 1.7,0 1.8,0 1.7,0 1.7,0 1.8,0 1.7,0 1.7,0 1.7,0 1.8,0 1.7,0 1.7,0 1.8,0 1.7,0 1.7,0 1.8,0 1.7,0 1.7-.1 1.8,0 1.7,0 1.7,0 1.8,.1 1.7-.1 1.7,0 1.8,0 1.7,0 1.7,0 1.8,0 1.7,0 1.7,0 1.8,0 1.7,0 1.7,0 1.8,0 1.7,0 1.7,0 1.8,0 1.7,0 1.7,0 1.8,0 1.7,0 1.7,0 1.7,0 1.8,0 1.7,0 1.7,0 1.8,0 1.7,0 1.7,0 1.8,0 1.7,0 1.7,0 1.8,0 1.7,0 1.7,0 1.8,0 1.7,0 1.7,0 1.8,0 1.7,0 1.7,0 1.8,0 1.7,0 1.7,0 1.8,0 1.7,0 1.7,0 1.8,0 1.7,0 1.7,0 1.8,0 1.7,0 1.7,0 1.8,0 1.7,0 1.7,0 1.8,0 1.7,0 1.7,0 1.7,0 1.8,0 1.7,0 1.7,0 1.8,0 1.7,0 1.7-.1 1.8,0 1.7,0 1.7,0 1.8,0 1.7,0 1.7,0 1.8,.1 1.7-.1 1.7,0 1.8,0 1.7,0 1.7,0 1.8,0 1.7,0 1.7,0 1.8,0 1.7,0 1.7,0 1.8,0 1.7,0 1.7,0 1.8,0 1.7,0 1.7,0 1.8,0 1.7,0 1.7,0 1.8,0 1.7,0 1.7,0 1.7,0 1.8,0 1.7,0 1.7,0 1.8,0 1.7,0 1.7,0 1.8,0 1.7,0 1.7,0 1.8,0 1.7,0 1.7,0 1.8,0 1.7,0 1.7,0 1.8,0 1.7,0 1.7,0 1.8,0 1.7,0 1.7,0 1.8,0 1.7,0 1.7,0 1.8,0 1.7,0 1.7,0 1.8,0 1.7,0 1.7,0 1.8,0 1.7,0 1.7-.1 1.7,0 1.8,0 1.7,.1 1.7-.1 1.8,.1 1.7,0 1.7,0 1.8-.1 1.7,0 1.7,0 1.8,0 1.7,0 1.7,0 1.8,0 1.7,0 1.7,0 1.8,0 1.7,0 1.7,0 1.8,0 1.7,0 1.7,0 1.8,0 1.7,0 1.7,0 1.8,0 1.7,0 1.7,0 1.8,0 1.7,0 1.7,0 1.8,0 1.7,0 1.7,0 1.8,0 1.7,0 1.7,0 1.7,0 1.8,0 1.7,0 1.7,0 1.8,0 1.7,0 1.7,0 1.8,0 1.7,0 1.7,0 1.8,0 1.7,0 1.7,0 1.8,0 1.7,0 1.7,0 1.8,0 1.7,0 1.7,0 1.8-.1 1.7,0 1.7,0 1.8,.1 1.7-.1 1.7,0 1.8,0 1.7,0 1.7,0 1.8,0 1.7,0 1.7,0 1.8,0 1.7,0 1.7,0 1.7,0 1.8,0 1.7,0 1.7,0 1.8,0 1.7,0 1.7,0 1.8,0 1.7,0 1.7,0 1.8,0 1.7,0 1.7,0 1.8,0 1.7,0 1.7,0 1.8,0 1.7,0 1.7,0 1.8,0 1.7,0 1.7,0 1.8,0 1.7,0 1.7,0 1.8,0 1.7,0 1.7,0 1.8,0 1.7,0 1.7,0 1.8,0 1.7,0 1.7,0 1.8,0 1.7,0 1.7,0 1.7,0 1.8,0 1.7,0 1.7,0 1.8,0 1.7,0 1.7,0 1.8,0 1.7,0 1.7,0 1.8,0 1.7-.1 1.7,0 1.8,.1 1.7,0 1.7,0 1.8-.1 1.7,.1 1.7,0 1.8,0 1.7,0 1.7,0 1.8,0 1.7,0 1.7,0 1.8,0 1.7-.1 1.7,0 1.8,0 1.7,0 1.7,.1 1.8-.1 1.7,0 1.7,0 1.7,0 1.8,.1 1.7-.1 1.7,0 1.8,0 1.7,0 1.7,0 1.8,0 1.7,0 1.7,.1 1.8-.1 1.7,0 1.7,0 1.8,0 1.7,0 1.7,0 1.8,0 1.7,0 1.7,0 1.8,0 1.7,0 1.7,0 1.8,0 1.7,0 1.7,0 1.8,0 1.7,0 1.7,0 1.8,0 1.7,0 1.7,0 1.8,0 1.7,0 1.7,0 1.8,0 1.7,0 1.7,0 1.7,0 1.8,0 1.7,0 1.7,0 1.8-.1 1.7,0 1.7,0 1.8,0 1.7,.1 1.7-.1 1.8,.1 1.7-.1 1.7,.1 1.8,0 1.7-.1 1.7,.1 1.8-.1 1.7,0 1.7,0 1.8,0 1.7,0 1.7,0 1.8,0 1.7,0 1.7,0 1.8,0 1.7,0 1.7,0 1.8,.1 1.7,0 1.7-.1 1.8,0 1.7,0 1.7,0 1.8,0 1.7,0 1.7,0 1.7,0 1.8,0 1.7,0 1.7,0 1.8,0 1.7,0 1.7,0 1.8,0 1.7,0 1.7,0 1.8,0 1.7,0 1.7,0 1.8,0 1.7,0 1.7,0 1.8,0 1.7,0 1.7,0 1.8,0 1.7,0 1.7,0 1.8,0 1.7,0 1.7,0 1.8,0 1.7,0 1.7,0 1.8,0 1.7-.1 1.7,0 1.8,.1 1.7,0 1.7,0 1.7,0 1.8,0 1.7,0 1.7,0 1.8,0 1.7,0 1.7-.1 1.8,0 1.7,0 1.7,0 1.8,0 1.7,0 1.7,0 1.8,0 1.7,0 1.7,0 1.8,0 1.7,0 1.7,0 1.8,0 1.7,0 1.7,0 1.8,0 1.7,0 1.7,0 1.8,0 1.7,0 1.7,0 1.8,0 1.7,0 1.7,0 1.8,0 1.7,0 1.7,0 1.8,0 1.7,0 1.7,0 1.7,0 1.8,0 1.7,0 1.7,0 1.8,0 1.7,0 1.7,0 1.8,0 1.7,0 1.7,0 1.8,0 1.7,0 1.7,0 1.8,0 1.7,0 1.7,0 1.8,0 1.7,0 1.7,0 1.8,0 1.7,0 1.7,0 1.8,0 1.7,0 1.7,0 1.8,0 1.7,0 1.7,0 1.8,0 1.7,0 1.7,0 1.8,0 1.7,0 1.7,0 1.7,0 1.8-.1 1.7,0 1.7,.1 1.8-.1 1.7,.1 1.7-.1 1.8,0 1.7,0 1.7,.1 1.8,0 1.7,0 1.7,0 1.8-.1 1.7,0 1.7,0 1.8,0 1.7,0 1.7,0 1.8,0 1.7,0 1.7,0 1.8,0 1.7,0 1.7,0 1.8,0 1.7,0 1.7,0 1.8,0 1.7,0 1.7,0 1.8,0 1.7,0 1.7,0 1.8,0 1.7,0 1.7,0 1.7,0 1.8,0 1.7,0 1.7,0 1.8,0 1.7,0 1.7-.1 1.8,.1 1.7,0 1.7,0 1.8,0 1.7,0 1.7,0 1.8-.1 1.7,0 1.7,.1 1.8,0 1.7,0 1.7,0 1.8,0 1.7,0 1.7,0 1.8-.1 1.7,0 1.7,0 1.8,0 1.7,.1 1.7,0 1.8,0 1.7,0 1.7,0 1.8,0 1.7,0 1.7-.1 1.8,0 1.7,0 1.7,0 1.7,0 1.8,0 1.7,0 1.7,0 1.8,0 1.7,0 1.7,0 1.8,0 1.7,0 1.7,.1 1.8,0 1.7-.1 1.7,.1 1.8-.1 1.7,0 1.7,0 1.8,0 1.7,0 1.7,0 1.8,0 1.7,0 1.7,0 1.8,0 1.7,0 1.7,0 1.8-3 1.7-3.7 1.7-.1 1.8,.4 1.7,.1 1.7,.3 1.8,0 1.7,.2 1.7,.2 1.7,.2 1.8,.2 1.7-.1 1.7,.2 1.8,.2 1.7,.1 1.7-.3 1.8-.2 1.7-.2 1.7-.5 1.8-.3 1.7-.3 1.7-.2 1.8-.1 1.7-.5 1.7-.2 1.8-.3 1.7-.1 1.7-.7 1.8-.1 1.7-.3 1.7-.4 1.8,0 1.7-.3 1.7,0 1.8-.2 1.7-.6 1.7-.5 1.8-.3 1.7,0 1.7-.2 1.8-.6 1.7-.1 1.7-.2 1.8-.1 1.7,.5 1.7,1 1.7,.9 1.8,.8 1.7,.6 1.7,.4 1.8,0 1.7-.1 1.7,.2 1.8,.1 1.7,.3 1.7,.1 1.8,0 1.7,.4 1.7-.1 1.8,.3 1.7,.2 1.7,0 1.8,0 1.7,.2 1.7,.2 1.8-.1 1.7,.2 1.7,.2 1.8,.1 1.7,.2 1.7,.2 1.8,.1 1.7,0 1.7,0 1.8-.2 1.7-.3 1.7-.1 1.8,0 1.7,0 1.7,0 1.7-.3 1.8,0 1.7-.1 1.7-.1 1.8,.3 1.7-.2 1.7-.1 1.8-.1 1.7-.1 1.7-.1 1.8-.2 1.7-.2 1.7,0 1.8,0 1.7-.2 1.7,.1 1.8,0 1.7-.2 1.7,.1 1.8,.1 1.7,0 1.7-.2 1.8,.3 1.7,.3 1.7,0 1.8,.3 1.7,.1 1.7,.2 1.8-.2 1.7-.1 1.7,.2 1.8,.3 1.7,.1 1.7,.1 1.8-.4 1.7,.3 1.7,0 1.7,0 1.8,.1 1.7,.1 1.7,.2 1.8,0 1.7,0 1.7,.3 1.8-.1 1.7,0 1.7-.4 1.8,0 1.7,.1 1.7-.1 1.8-.2 1.7,0 1.7-.1 1.8,0 1.7-.2 1.7-.1 1.8-.1 1.7-.1 1.7-.2 1.8,0 1.7-.1 1.7-.3 1.8,0 1.7,.1 1.7-.2 1.8,0 1.7,0 1.7,0 1.8-.2 1.7,.2 1.7-.3 1.7,0 1.8,.1 1.7,.2 1.7,0 1.8,0 1.7,0 1.7,.2 1.8-.1 1.7,.2 1.7-.3 1.8,.1 1.7,.1 1.7,0 1.8-.1 1.7-.2 1.7,0 1.8,.4 1.7,0 1.7-.1 1.8-.1 1.7,0 1.7,.2 1.8-.1 1.7,.2 1.7-.1 1.8-.1 1.7,.1 1.7,.1 1.8-.1 1.7,0 1.7,.1 1.8,.1 1.7,0 1.7-.1 1.8-.1 1.7,.1 1.7,0 1.7-.1 1.8,0 1.7,0 1.7,.1 1.8-.2 1.7,0 1.7,0 1.8,.2 1.7-.1 1.7,0 1.8-.2 1.7,0 1.7-.1 1.8-.1 1.7-.2 1.7,.1 1.8,.1 1.7-.3 1.7-.2 1.8,0 1.7,0 1.7-.1 1.8,0 1.7,.1 1.7-.1 1.8,.1 1.7-.2 1.7-.1 1.8-.3 1.7,.1 1.7-.2 1.8-.1 1.7,.2 1.7-.2 1.8-.1 1.7,0 1.7,.1 1.7-.3 1.8-.1 1.7-.2 1.7,0 1.8-.4 1.7,0 1.7,.1 1.8-.3 1.7,.1 1.7-.3 1.8,0 1.7,.3 1.7-.3 1.8,0 1.7,.1 1.7-.1 1.8-.1 1.7-.1 1.7-.4 1.8,.3 1.7,0 1.7,0 1.8,0 1.7-.1 1.7,0 1.8-.5 1.7,0 1.7-.1 1.8,0 1.7,.3 1.7-.2 1.8-.1 1.7,0 1.7-.4 1.7,.1 1.8-.3 1.7,.1 1.7-.1 1.8,0 1.7-.1 1.7-.1 1.8-.2 1.7,.1 1.7-.2 1.8-.1 1.7-.1 1.7,0 1.8-.1 1.7,0 1.7-.1 1.8,0 1.7,0 1.7,0 1.8-.2 1.7,.2 1.7,.4 1.8-.3 1.7-.2 1.7-.3 1.8-.1 1.7,.4 1.7-9 1.8,.2 1.7,.6 1.7-.2 1.8,.4 1.7,.1 1.7-.2 1.8,.3 1.7-.2 1.7,0 1.7,.3 1.8-.4 1.7,.5 1.7,0 1.8-.7 1.7,.2 1.7-.4 1.8,0 1.7,.2 1.7,.6 1.8,0 1.7-.2 1.7-.2 1.8,.3 1.7,.1 1.7,.2 1.8,.1 1.7,.2 1.7,.1 1.8-.2 1.7,.3 1.7-.4 1.8,.4 1.7,.3 1.7-.1 1.8,0 1.7-.2 1.7-.4 1.8-.1 1.7-.2 1.7,.7 1.8-.5 1.7,.2 1.7-.5 1.7-.5 1.8-.2 1.7-.3 1.7,.3 1.8,.3 1.7,.1 1.7-.7 1.8,.1 1.7,0 1.7,.1 1.8,.3 1.7-.5 1.7-.2 1.8,0 1.7-.1 1.7,.2 1.8,.1 1.7-.1 1.7-.5 1.8-.3 1.7,.4 1.7,.6 1.8-.6 1.7-.9 1.7,.4 1.8-.5 1.7,0 1.7,.2 1.8,.7 1.7-.2 1.7,.2 1.8-.3 1.7-.9 1.7,0 1.8,.5 1.7,.1 1.7-.3 1.7-.1 1.8-.5 1.7,0 1.7,0 1.8,.2 1.7,.1 1.7-.4 1.8,.1 1.7-.2 1.7-.1 1.8-.7 1.7,.4 1.7-.4 1.8-.3 1.7,.6 1.7,.8 1.8,.3 1.7-.2 1.7-.3 1.8-.2 1.7-.3 1.7,0 1.8-.2 1.7-.4 1.7,.5 1.8,.2 1.7,.3 1.7,.5 1.8-.1 1.7,.4 1.7-.5 1.8,.4 1.7-.6 1.7,.6 1.7,.1 1.8-.3 1.7,.1 1.7-.3 1.8,.5 1.7-.1 1.7,.5 1.8-.2 1.7,.3 1.7,.1 1.8,0 1.7-.3 1.7,.4 1.8,.3 1.7,.4 1.7-.1 1.8-.6 1.7,.1 1.7,.8 1.8,.1 1.7,0 1.7,0 1.8-.5 1.7-.3 1.7,.3 1.8-.1 1.7,.1 1.7-.1 1.8-.2 1.7,0 1.7,.8 1.8-.2 1.7,.1 1.7,.6 1.8-.4 1.7,0 1.7,.3 1.7,.5 1.8-.5 1.7-.2 .3-.2 0,14.5 -.3,0 -1.7,0 -1.8,.1 -1.7-.2 -1.7,0 -1.7,.1 -1.8,0 -1.7,.1 -1.7,.1 -1.8,0 -1.7-.1 -1.7,0 -1.8,0 -1.7,0 -1.7,.1 -1.8-.2 -1.7,0 -1.7,0 -1.8,.2 -1.7-.1 -1.7,.1 -1.8,0 -1.7-.1 -1.7,0 -1.8,0 -1.7,0 -1.7,0 -1.8-.2 -1.7,0 -1.7,.1 -1.8-.1 -1.7,.1 -1.7,.2 -1.8,.2 -1.7-.2 -1.7,0 -1.8,0 -1.7,.1 -1.7-.1 -1.8,0 -1.7,0 -1.7-.1 -1.7,0 -1.8-.1 -1.7,0 -1.7-.1 -1.8,0 -1.7-.1 -1.7,.3 -1.8,0 -1.7,0 -1.7,.1 -1.8,0 -1.7-.2 -1.7,.2 -1.8,0 -1.7,.2 -1.7-.1 -1.8,.1 -1.7-.3 -1.7-.2 -1.8,0 -1.7,.1 -1.7,.1 -1.8,.1 -1.7-.1 -1.7,0 -1.8-.2 -1.7,.2 -1.7,0 -1.8,.2 -1.7,0 -1.7,.1 -1.8-.1 -1.7,0 -1.7,.1 -1.7,.1 -1.8-.2 -1.7,.1 -1.7,.1 -1.8-.2 -1.7,0 -1.7,.1 -1.8-.1 -1.7-.1 -1.7,0 -1.8,0 -1.7,.1 -1.7,.1 -1.8,.1 -1.7-.1 -1.7,0 -1.8-.2 -1.7,.1 -1.7,.2 -1.8-.1 -1.7,.1 -1.7,.1 -1.8,0 -1.7-.1 -1.7-.2 -1.8-.1 -1.7,0 -1.7,0 -1.8,0 -1.7,0 -1.7,.1 -1.8,.1 -1.7,0 -1.7,0 -1.8-.1 -1.7,.1 -1.7,.2 -1.7-.1 -1.8,0 -1.7,.1 -1.7,.1 -1.8-.3 -1.7,.1 -1.7,0 -1.8,0 -1.7,.1 -1.7-.1 -1.8-.1 -1.7,.2 -1.7,.2 -1.8-.1 -1.7,.1 -1.7-.1 -1.8-.1 -1.7,.1 -1.7-.1 -1.8-.1 -1.7,.1 -1.7,.1 -1.8-.2 -1.7,0 -1.7,.1 -1.8,.1 -1.7-.1 -1.7-.2 -1.8,.4 -1.7-.1 -1.7-.1 -1.8,0 -1.7,0 -1.7-.1 -1.7,.4 -1.8-.1 -1.7-.1 -1.7,.1 -1.8-.1 -1.7-.1 -1.7,0 -1.8-.2 -1.7,4.8 -1.7,.1 -1.8-.1 -1.7,0 -1.7,0 -1.8,0 -1.7,0 -1.7-.1 -1.8,0 -1.7,.1 -1.7,0 -1.8-.1 -1.7,0 -1.7-.1 -1.8,0 -1.7,0 -1.7,0 -1.8,0 -1.7,0 -1.7,0 -1.8,0 -1.7,.1 -1.7-.1 -1.8-.1 -1.7,0 -1.7,0 -1.8,.1 -1.7-.2 -1.7,0 -1.7-.1 -1.8,.1 -1.7,.1 -1.7-.1 -1.8-.1 -1.7,.1 -1.7-.1 -1.8,0 -1.7,0 -1.7,.1 -1.8-.1 -1.7,0 -1.7-.1 -1.8,0 -1.7-.1 -1.7,0 -1.8-.1 -1.7,.1 -1.7-.1 -1.8,0 -1.7-.1 -1.7,0 -1.8-.1 -1.7,.1 -1.7,0 -1.8,0 -1.7-.1 -1.7,0 -1.8,0 -1.7-.2 -1.7,.2 -1.8-.1 -1.7,.1 -1.7,0 -1.7-.1 -1.8,0 -1.7,0 -1.7-.1 -1.8,0 -1.7,0 -1.7,0 -1.8,0 -1.7,.1 -1.7,.1 -1.8,0 -1.7,0 -1.7,.1 -1.8,0 -1.7,0 -1.7,0 -1.8,0 -1.7,0 -1.7,.1 -1.8,0 -1.7,0 -1.7,.1 -1.8,0 -1.7,0 -1.7,0 -1.8,.1 -1.7,0 -1.7,0 -1.8-.1 -1.7,.1 -1.7-.1 -1.8,0 -1.7,.1 -1.7,0 -1.8,.1 -1.7,.1 -1.7,.1 -1.7,0 -1.8,.1 -1.7,0 -1.7,0 -1.8-.1 -1.7,0 -1.7,0 -1.8,.1 -1.7,0 -1.7,0 -1.8,0 -1.7,0 -1.7,.1 -1.8,.1 -1.7,0 -1.7,0 -1.8,0 -1.7,.1 -1.7,0 -1.8-.1 -1.7,.1 -1.7,0 -1.8,0 -1.7,.1 -1.7,0 -1.8,.1 -1.7-.1 -1.7,.1 -1.8,0 -1.7,0 -1.7,.1 -1.8,0 -1.7,0 -1.7,.1 -1.8,0 -1.7,0 -1.7,.1 -1.7,.1 -1.8,0 -1.7,0 -1.7,0 -1.8,0 -1.7-.1 -1.7,0 -1.8,.1 -1.7,.1 -1.7,0 -1.8,0 -1.7,.1 -1.7,0 -1.8,0 -1.7,0 -1.7,.1 -1.8,0 -1.7,0 -1.7,.1 -1.8,0 -1.7,0 -1.7,0 -1.8,0 -1.7,.1 -1.7-.1 -1.8,.1 -1.7,0 -1.7,.1 -1.8,0 -1.7-.1 -1.7,0 -1.8,0 -1.7,0 -1.7,0 -1.7,0 -1.8,.1 -1.7,0 -1.7,0 -1.8,0 -1.7,0 -1.7-.1 -1.8,0 -1.7,.1 -1.7,0 -1.8,0 -1.7,0 -1.7,0 -1.8,0 -1.7,0 -1.7,0 -1.8,0 -1.7,0 -1.7,.1 -1.8,0 -1.7,0 -1.7,0 -1.8,0 -1.7,0 -1.7,0 -1.8,0 -1.7,0 -1.7,0 -1.8,0 -1.7,0 -1.7,0 -1.8,.1 -1.7,0 -1.7,0 -1.8,0 -1.7,0 -1.7,0 -1.7-.1 -1.8,0 -1.7,0 -1.7,0 -1.8,0 -1.7,0 -1.7,0 -1.8,.1 -1.7,0 -1.7-.1 -1.8,0 -1.7,.1 -1.7,0 -1.8,0 -1.7,0 -1.7,0 -1.8,0 -1.7,0 -1.7,.1 -1.8-.1 -1.7,0 -1.7,0 -1.8,0 -1.7,.1 -1.7,0 -1.8,0 -1.7,0 -1.7,0 -1.8,0 -1.7,0 -1.7,0 -1.8,0 -1.7,0 -1.7,0 -1.7,0 -1.8,0 -1.7,0 -1.7,0 -1.8,0 -1.7,.1 -1.7-.1 -1.8,0 -1.7,0 -1.7,0 -1.8,0 -1.7,0 -1.7,0 -1.8,0 -1.7,.1 -1.7-.1 -1.8,0 -1.7,.1 -1.7-.1 -1.8,0 -1.7,0 -1.7,.1 -1.8,0 -1.7,0 -1.7,0 -1.8,0 -1.7,0 -1.7,0 -1.8,0 -1.7,0 -1.7,0 -1.8,0 -1.7,0 -1.7,0 -1.8,0 -1.7,.1 -1.7-.1 -1.7,0 -1.8,0 -1.7,.1 -1.7-.1 -1.8,.1 -1.7,0 -1.7,.3 -1.8,.1 -1.7,0 -1.7,0 -1.8,0 -1.7,0 -1.7,0 -1.8,0 -1.7,0 -1.7,0 -1.8,0 -1.7,0 -1.7,0 -1.8,0 -1.7,0 -1.7,0 -1.8,0 -1.7,0 -1.7,0 -1.8,0 -1.7,0 -1.7,0 -1.8,0 -1.7,0 -1.7,0 -1.8,0 -1.7,0 -1.7,0 -1.7,0 -1.8,0 -1.7,0 -1.7,.1 -1.8-.1 -1.7,0 -1.7,0 -1.8,0 -1.7,0 -1.7,0 -1.8,0 -1.7,0 -1.7,0 -1.8,0 -1.7,0 -1.7,0 -1.8,0 -1.7,.1 -1.7-.1 -1.8,0 -1.7,0 -1.7,0 -1.8,0 -1.7,0 -1.7,0 -1.8,0 -1.7,0 -1.7,.1 -1.8-.1 -1.7,0 -1.7,.1 -1.8,0 -1.7,0 -1.7,0 -1.8,0 -1.7,0 -1.7,0 -1.7,0 -1.8,0 -1.7,0 -1.7,0 -1.8,0 -1.7,0 -1.7,0 -1.8,0 -1.7,0 -1.7,0 -1.8,0 -1.7,0 -1.7,0 -1.8,0 -1.7,0 -1.7,0 -1.8,0 -1.7,0 -1.7,0 -1.8,0 -1.7,0 -1.7,0 -1.8,0 -1.7,0 -1.7,0 -1.8,0 -1.7,0 -1.7,0 -1.8,0 -1.7,0 -1.7,0 -1.8,0 -1.7,0 -1.7,0 -1.8,0 -1.7,0 -1.7,0 -1.7,0 -1.8,0 -1.7,0 -1.7,0 -1.8,0 -1.7,0 -1.7,.1 -1.8-.1 -1.7,0 -1.7,.1 -1.8-.1 -1.7,0 -1.7,0 -1.8,0 -1.7,0 -1.7,0 -1.8,0 -1.7,0 -1.7,0 -1.8,0 -1.7,.1 -1.7,0 -1.8,0 -1.7,0 -1.7,0 -1.8,0 -1.7-.1 -1.7,0 -1.8,0 -1.7,0 -1.7,0 -1.8,0 -1.7,.1 -1.7-.1 -1.7,.1 -1.8,0 -1.7,0 -1.7,0 -1.8,0 -1.7,0 -1.7,0 -1.8,0 -1.7,0 -1.7,0 -1.8,0 -1.7,0 -1.7,0 -1.8,0 -1.7,0 -1.7,0 -1.8,0 -1.7,0 -1.7,0 -1.8,0 -1.7,0 -1.7,0 -1.8,0 -1.7,0 -1.7,0 -1.8,0 -1.7,0 -1.7,0 -1.8,0 -1.7,0 -1.7,0 -1.8,0 -1.7,0 -1.7,0 -1.8,0 -1.7,0 -1.7,0 -1.7,0 -1.8,0 -1.7,0 -1.7,0 -1.8,0 -1.7,0 -1.7,0 -1.8,0 -1.7,0 -1.7,0 -1.8,0 -1.7,0 -1.7,0 -1.8,0 -1.7,0 -1.7,0 -1.8,0 -1.7,0 -1.7,0 -1.8,0 -1.7,0 -1.7,0 -1.8,.1 -1.7,0 -1.7-.1 -1.8,0 -1.7,.1 -1.7,0 -1.8-.1 -1.7,.1 -1.7-.1 -1.8,0 -1.7,.1 -1.7-.1 -1.7,0 -1.8,.1 -1.7,0 -1.7,0 -1.8,0 -1.7,0 -1.7,0 -1.8,0 -1.7,0 -1.7,0 -1.8,0 -1.7,0 -1.7,0 -1.8,0 -1.7,0 -1.7,0 -1.8,0 -1.7,0 -1.7,0 -1.8,0 -1.7,0 -1.7,0 -1.8,0 -1.7,0 -1.7,0 -1.8,0 -1.7,0 -1.7,0 -1.8,0 -1.7,0 -1.7,0 -1.8,0 -1.7,0 -1.7,0 -1.8,0 -1.7,0 -1.7,0 -1.7,0 -1.8,0 -1.7,0 -1.7,0 -1.8,0 -1.7,0 -1.7,0 -1.8,0 -1.7,0 -1.7,0 -1.8,0 -1.7,.1 -1.7,0 -1.8-.1 -1.7,0 -1.7,.1 -1.8-.1 -1.7,0 -1.7,0 -1.8,0 -1.7,0 -1.7,0 -1.8,.1 -1.7,0 -1.7,0 -1.8,0 -1.7,0 -1.7-.1 -1.8,0 -1.7,.1 -1.7-.1 -1.8,.1 -1.7,0 -1.7,0 -1.8,0 -1.7-.1 -1.7,.1 -1.7,0 -1.8,0 -1.7,0 -1.7,0 -1.8,0 -1.7,0 -1.7,0 -1.8,0 -1.7,0 -1.7,0 -1.8,0 -1.7,0 -1.7,0 -1.8,0 -1.7,0 -1.7,0 -1.8,0 -1.7,0 -1.7,0 -1.8,0 -1.7,0 -1.7,0 -1.8,0 -1.7,0 -1.7,0 -1.8,0 -1.7,0 -1.7,0 -1.8,0 -1.7,0 -1.7,0 -1.8,0 -1.7,0 -1.7,0 -1.7,0 -1.8,0 -1.7,0 -1.7,0 -1.8,0 -1.7,0 -1.7,0 -1.8,0 -1.7,0 -1.7,0 -1.8,0 -1.7,0 -1.7,0 -1.8,0 -1.7,0 -1.7,0 -1.8,0 -1.7,0 -1.7,0 -1.8,0 -1.7,0 -1.7,0 -1.8,0 -1.7,0 -1.7,0 -1.8,0 -1.7,0 -1.7,0 -1.8,0 -1.7,0 -1.7,0 -1.8,0 -1.7,0 -1.7,0 -1.8,0 -1.7,0 -1.7,0 -1.7,0 -1.8,.1 -1.7-.1 -1.7,0 -1.8,.1 -1.7,0 -1.7-.1 -1.8,0 -1.7,0 -1.7,.1 -1.8,0 -1.7,0 -1.7,0 -1.8,0 -1.7,0 -1.7,0 -1.8,0 -1.7,0 -1.7,0 -1.8,0 -1.7,0 -1.7,0 -1.8,0 -1.7,0 -1.7,0 -1.8,0 -1.7,0 -1.7,0 -1.8,0 -1.7,0 -1.7,0 -1.8,0 -1.7,0 -1.7,0 -1.7,0 -1.8,0 -1.7,0 -1.7,0 -1.8,0 -1.7,0 -1.7,0 -1.8,0 -1.7,0 -1.7,0 -1.8,0 -1.7,0 -1.7,0 -1.8,0 -1.7,0 -1.7,0 -1.8,0 -1.7,0 -1.7,0 -1.8,0 -1.7,0 -1.7,0 -1.8,0 -1.7,0 -1.7,0 -1.8,0 -1.7,0 -1.7,0 -1.8,0 -1.7,0 -1.7,0 -1.8,0 -1.7,0 -1.7,0 -1.8,0 -1.7,0 -1.7,0 -1.7,0 -1.8,0 -1.7,0 -1.7,.1 -1.8,0 -1.7,0 -1.7,0 -1.8,0 -1.7,0 -1.7,0 -1.8,0 -1.7,0 -1.7,0 -1.8,0 -1.7,0 -1.7,0 -1.8,0 -1.7,0 -1.7,0 -1.8,0 -1.7,0 -1.7,0 -1.8,0 -1.7,0 -1.7,0 -1.8,0 -1.7,0 -1.7,0 -1.8,0 -1.7,0 -1.7,0 -1.8,0 -1.7,0 -1.7,0 -1.7,0 -1.8,0 -1.7,0 -1.7,0 -1.8,0 -1.7,0 -1.7,0 -1.8,0 -1.7,0 -1.7,0 -1.8,0 -1.7,0 -1.7,0 -1.8,0 -1.7,0 -1.7,0 -1.8,0 -1.7,0 -1.7,0 -1.8,0 -1.7,0 -1.7,0 -1.8,0 -1.7,0 -1.7,0 -1.8,0 -1.7,0 -1.7,0 -1.8,0 -1.7,0 -1.7,0 -1.8,0 -1.7,0 -1.7,0 -1.8,0 -1.7,0 -1.7,0 -1.7,0 -1.8,0 -1.7,0 -1.7,.1 -1.8,0 -1.7,0 -1.7,0 -1.8,0 -1.7-.1 -1.7,0 -1.8,.1 -1.7,0 -1.7,0 -1.8,0 -1.7,0 -1.7,0 -1.8,0 -1.7,0 -1.7,0 -1.8,0 -1.7,0 -1.7,0 -1.8,0 -1.7,0 -1.7,0 -1.8,0 -1.7,0 -1.7,0 -1.8,0 -1.7,0 -1.7,0 -1.8,0 -1.7,0 -1.7,0 -1.8,0 -1.7,0 -1.7,0 -1.7,0 -1.8,0 -1.7,0 -1.7,0 -1.8,0 -1.7,0 -1.7,0 -1.8,0 -1.7,0 -1.7,0 -1.8,0 -1.7,0 -1.7,0 -1.8,0 -1.7,0 -1.7,0 -1.8,0 -1.7,0 -1.7,0 -1.8,0 -1.7,0 -1.7,0 -1.8,0 -1.7,0 -1.7,0 -1.8,0 -1.7,0 -1.7,0 -1.8,0 -1.7,0 -1.7,0 -1.8,0 -1.7,0 -1.7,0 -1.7,0 -1.8,0 -1.7,0 -1.7,0 -1.8,0 -1.7,0 -1.7,.1 -1.8,0 -1.7-.1 -1.7,0 -1.8,.1 -1.7,0 -1.7,0 -1.8,0 -1.7,0 -1.7,0 -1.8,0 -1.7,0 -1.7,0 -1.8,0 -1.7,0 -1.7,0 -1.8,0 -1.7,0 -1.7,0 -1.8,0 -1.7,0 -1.7,0 -1.8,0 -1.7,0 -1.7,0 -1.8,0 -1.7,0 -1.7,0 -1.8,0 -1.7,0 -1.7,0 -1.7,0 -1.8,0 -1.7,0 -1.7,0 -1.8,0 -1.7,0 -1.7,0 -1.8,0 -1.7,0 -1.7,0 -1.8,0 -1.7,0 -1.7,0 -1.8,0 -1.7,0 -1.7,0 -1.8,0 -1.7,0 -1.7,0 -1.8,0 -1.7,0 -1.7,0 -1.8,0 -1.7,0 -1.7,0 -1.8,0 -1.7,0 -1.7,0 -1.8,0 -1.7,0 -1.7,0 -1.8,0 -1.7,0 -1.7,0 -1.7,0 -1.8,0 -1.7,0 -1.7,0 -1.8,0 -1.7,0 -1.7,0 -1.8,0 -1.7,.1 -1.7,0 -1.8,0 -1.7,0 -1.7,0 -1.8,0 -1.7,0 -1.7,0 -1.8,0 -1.7,0z" fill="url(#g6)"/>
<path d="M157.7,808.4l1.7,0 1.8,0 1.7,0 1.7,0 1.8,0 1.7,0 1.7,0 1.8,0 1.7,0 1.7-.1 1.8,0 1.7,0 1.7,0 1.8,0 1.7,0 1.7,0 1.8,0 1.7,0 1.7,0 1.7,0 1.8,0 1.7,0 1.7,0 1.8,0 1.7,0 1.7,0 1.8,0 1.7,0 1.7,0 1.8,0 1.7,0 1.7,0 1.8,0 1.7,0 1.7,0 1.8,0 1.7,0 1.7,0 1.8,0 1.7,0 1.7,0 1.8,0 1.7,0 1.7,0 1.8,0 1.7,0 1.7,0 1.8,0 1.7,0 1.7,0 1.8,0 1.7,0 1.7,0 1.7,0 1.8,0 1.7,0 1.7,0 1.8,0 1.7,0 1.7,0 1.8,0 1.7,0 1.7,0 1.8,0 1.7,0 1.7,0 1.8,0 1.7,0 1.7,0 1.8,0 1.7,0 1.7,0 1.8,0 1.7,0 1.7,0 1.8,0 1.7,0 1.7,0 1.8-.1 1.7,0 1.7,.1 1.8,0 1.7-.1 1.7,0 1.8,0 1.7,0 1.7,0 1.8,0 1.7,0 1.7,0 1.7,0 1.8,0 1.7,0 1.7,0 1.8,0 1.7,0 1.7,0 1.8,0 1.7,0 1.7,0 1.8,0 1.7,0 1.7,0 1.8,0 1.7,0 1.7,0 1.8,0 1.7,0 1.7,0 1.8,0 1.7,0 1.7,0 1.8,0 1.7,0 1.7,0 1.8,0 1.7,0 1.7,0 1.8,0 1.7,0 1.7,0 1.8,0 1.7,0 1.7,0 1.7,0 1.8,0 1.7,0 1.7,0 1.8,0 1.7,0 1.7,0 1.8,0 1.7,0 1.7,0 1.8,0 1.7,0 1.7,0 1.8,0 1.7,0 1.7,0 1.8,0 1.7,0 1.7,0 1.8,0 1.7,0 1.7,0 1.8,0 1.7,0 1.7,0 1.8-.1 1.7,0 1.7,.1 1.8,0 1.7,0 1.7,0 1.8,0 1.7-.1 1.7,0 1.8,0 1.7,0 1.7,0 1.7,0 1.8,0 1.7,0 1.7,0 1.8,0 1.7,0 1.7,0 1.8,0 1.7,0 1.7,0 1.8,0 1.7,0 1.7,0 1.8,0 1.7,0 1.7,0 1.8,0 1.7,0 1.7,0 1.8,0 1.7,0 1.7,0 1.8,0 1.7,0 1.7,0 1.8,0 1.7,0 1.7,0 1.8,0 1.7,0 1.7,0 1.8,0 1.7,0 1.7,0 1.8,0 1.7,0 1.7,0 1.7,0 1.8,0 1.7,0 1.7,0 1.8,0 1.7,0 1.7,0 1.8,0 1.7,0 1.7,0 1.8,0 1.7,0 1.7,0 1.8,0 1.7,0 1.7,0 1.8,0 1.7,0 1.7,0 1.8,0 1.7,0 1.7,0 1.8,0 1.7,0 1.7,0 1.8,0 1.7,0 1.7,0 1.8,0 1.7-.1 1.7,0 1.8,0 1.7,0 1.7,0 1.7,0 1.8,0 1.7,0 1.7,0 1.8,0 1.7,0 1.7,0 1.8,0 1.7,0 1.7,0 1.8,0 1.7,0 1.7,0 1.8,0 1.7,0 1.7,0 1.8,0 1.7,0 1.7,0 1.8,0 1.7,0 1.7,0 1.8,0 1.7,0 1.7,0 1.8,0 1.7,0 1.7,0 1.8,0 1.7,0 1.7,0 1.8,0 1.7,0 1.7,0 1.8,0 1.7,0 1.7,0 1.7,0 1.8,0 1.7,0 1.7,0 1.8,0 1.7,0 1.7,0 1.8,0 1.7,0 1.7,0 1.8,0 1.7,0 1.7,0 1.8,0 1.7,0 1.7,0 1.8,0 1.7,0 1.7,0 1.8,0 1.7,0 1.7,0 1.8,0 1.7-.1 1.7,0 1.8,0 1.7,.1 1.7,0 1.8-.1 1.7,0 1.7,.1 1.8-.1 1.7,0 1.7,0 1.7,0 1.8,0 1.7,0 1.7,0 1.8,0 1.7,0 1.7,0 1.8,0 1.7,0 1.7,0 1.8,0 1.7,0 1.7,0 1.8,0 1.7,0 1.7,0 1.8,0 1.7,0 1.7,0 1.8,0 1.7,0 1.7,0 1.8,0 1.7,0 1.7,0 1.8,0 1.7,0 1.7,0 1.8,0 1.7,0 1.7,0 1.8,0 1.7,0 1.7,0 1.8,0 1.7,0 1.7,0 1.7,0 1.8,0 1.7,0 1.7,0 1.8,0 1.7,0 1.7,0 1.8,0 1.7,0 1.7,0 1.8,0 1.7,0 1.7,0 1.8,0 1.7,0 1.7,0 1.8,0 1.7,0 1.7,0 1.8,0 1.7,0 1.7,0 1.8,0 1.7,0 1.7,0 1.8,0 1.7,0 1.7,0 1.8,0 1.7,0 1.7,0 1.8,0 1.7,0 1.7-.1 1.7,.1 1.8,0 1.7,0 1.7,0 1.8-.1 1.7,.1 1.7-.1 1.8,0 1.7,.1 1.7,0 1.8,0 1.7,0 1.7,0 1.8-.1 1.7,0 1.7,0 1.8,0 1.7,0 1.7,0 1.8,.1 1.7-.1 1.7,0 1.8,.1 1.7,0 1.7-.1 1.8,0 1.7,0 1.7,0 1.8,0 1.7,0 1.7,0 1.8,0 1.7,0 1.7,0 1.8,0 1.7,0 1.7,0 1.7,0 1.8,0 1.7,0 1.7,0 1.8,0 1.7,0 1.7,0 1.8,0 1.7,0 1.7,0 1.8,0 1.7,0 1.7,0 1.8,0 1.7,0 1.7,0 1.8,0 1.7,0 1.7,0 1.8,0 1.7,0 1.7,0 1.8,0 1.7,0 1.7,0 1.8,0 1.7,0 1.7,0 1.8,0 1.7,0 1.7,0 1.8,0 1.7,0 1.7,0 1.8-.1 1.7,0 1.7,.1 1.7-.1 1.8,0 1.7,.1 1.7-.1 1.8,.1 1.7,0 1.7-.1 1.8,0 1.7,.1 1.7,0 1.8-.1 1.7,0 1.7,0 1.8,0 1.7,0 1.7,0 1.8,0 1.7,0 1.7,0 1.8,0 1.7,0 1.7,0 1.8,0 1.7,0 1.7,0 1.8,0 1.7,0 1.7,0 1.8,0 1.7,0 1.7,0 1.8,0 1.7,0 1.7,0 1.7,0 1.8,0 1.7,0 1.7,0 1.8,0 1.7,0 1.7,0 1.8,0 1.7,0 1.7,0 1.8,0 1.7,0 1.7,0 1.8,0 1.7,0 1.7,0 1.8,0 1.7,0 1.7,0 1.8,0 1.7,0 1.7,0 1.8,0 1.7,0 1.7,0 1.8,0 1.7,0 1.7,0 1.8,0 1.7,0 1.7,0 1.8,0 1.7,0 1.7,0 1.8,0 1.7-.1 1.7,.1 1.7-.1 1.8,0 1.7,0 1.7,0 1.8,0 1.7,0 1.7,.1 1.8,0 1.7,0 1.7,0 1.8,0 1.7,0 1.7-.1 1.8,0 1.7,0 1.7,0 1.8,0 1.7,0 1.7,0 1.8,0 1.7,0 1.7,0 1.8,.1 1.7-.1 1.7,0 1.8,.1 1.7-.1 1.7,0 1.8,0 1.7,0 1.7,0 1.8,0 1.7,0 1.7,0 1.7,0 1.8,0 1.7,0 1.7,0 1.8,0 1.7,0 1.7,0 1.8,0 1.7,0 1.7,0 1.8,0 1.7,0 1.7,0 1.8,0 1.7,0 1.7,0 1.8,0 1.7,0 1.7,0 1.8,0 1.7,0 1.7,0 1.8,0 1.7,0 1.7,0 1.8,0 1.7,0 1.7,0 1.8,0 1.7,0 1.7,0 1.8,0 1.7,0 1.7,0 1.8,0 1.7,0 1.7,0 1.7,0 1.8,0 1.7,0 1.7,0 1.8,0 1.7-.1 1.7,0 1.8,.1 1.7-.1 1.7,0 1.8,0 1.7,0 1.7,0 1.8,0 1.7,0 1.7,0 1.8,0 1.7,.1 1.7-.1 1.8,0 1.7,0 1.7,0 1.8,0 1.7,0 1.7,0 1.8,0 1.7,0 1.7,0 1.8,0 1.7,0 1.7,0 1.8,.1 1.7-.1 1.7,0 1.8,0 1.7,0 1.7,0 1.7,0 1.8,0 1.7,0 1.7,0 1.8,0 1.7,0 1.7,0 1.8,0 1.7,0 1.7,0 1.8,0 1.7,0 1.7,0 1.8,0 1.7,0 1.7,0 1.8,0 1.7,0 1.7,0 1.8,0 1.7,0 1.7,0 1.8,0 1.7,0 1.7,0 1.8-.1 1.7-.3 1.7,0 1.8-.1 1.7,.1 1.7-.1 1.8,0 1.7,0 1.7,.1 1.7-.1 1.8,0 1.7,0 1.7,0 1.8,0 1.7,0 1.7,0 1.8,0 1.7,0 1.7,0 1.8,0 1.7,0 1.7,0 1.8,0 1.7-.1 1.7,0 1.8,0 1.7,.1 1.7-.1 1.8,0 1.7,.1 1.7-.1 1.8,0 1.7,0 1.7,0 1.8,0 1.7,0 1.7,0 1.8,0 1.7,.1 1.7-.1 1.8,0 1.7,0 1.7,0 1.8,0 1.7,0 1.7,0 1.7,0 1.8,0 1.7,0 1.7,0 1.8,0 1.7,0 1.7,0 1.8,0 1.7,0 1.7-.1 1.8,0 1.7,0 1.7,0 1.8,.1 1.7-.1 1.7,0 1.8,0 1.7,0 1.7,0 1.8,0 1.7,0 1.7-.1 1.8,0 1.7,.1 1.7,0 1.8-.1 1.7,0 1.7,0 1.8,0 1.7,0 1.7,0 1.8,0 1.7,.1 1.7,0 1.7,0 1.8,0 1.7,0 1.7,0 1.8-.1 1.7,0 1.7,0 1.8,0 1.7,0 1.7,0 1.8,0 1.7,0 1.7,0 1.8,0 1.7,0 1.7,0 1.8,0 1.7-.1 1.7,0 1.8,0 1.7,0 1.7,0 1.8,0 1.7,0 1.7,0 1.8,0 1.7,0 1.7-.1 1.8,0 1.7,.1 1.7,0 1.8,0 1.7,0 1.7,0 1.8-.1 1.7,0 1.7,0 1.7,0 1.8,0 1.7,0 1.7,.1 1.8,0 1.7-.1 1.7,0 1.8-.1 1.7,.1 1.7-.1 1.8,0 1.7,0 1.7,0 1.8,0 1.7-.1 1.7,0 1.8,0 1.7-.1 1.7,0 1.8,0 1.7,0 1.7-.1 1.8,0 1.7,0 1.7-.1 1.8-.1 1.7,0 1.7,.1 1.8,0 1.7,0 1.7,0 1.8,0 1.7-.1 1.7-.1 1.7,0 1.8,0 1.7-.1 1.7,0 1.8,0 1.7-.1 1.7,0 1.8,0 1.7-.1 1.7,.1 1.8-.1 1.7,0 1.7-.1 1.8,0 1.7,0 1.7-.1 1.8,.1 1.7,0 1.7-.1 1.8,0 1.7,0 1.7,0 1.8-.1 1.7-.1 1.7,0 1.8,0 1.7,0 1.7,0 1.8-.1 1.7,0 1.7,0 1.8,.1 1.7,0 1.7,0 1.8-.1 1.7,0 1.7-.1 1.7-.1 1.8-.1 1.7,0 1.7-.1 1.8,0 1.7,.1 1.7-.1 1.8,.1 1.7,0 1.7,0 1.8-.1 1.7,0 1.7,0 1.8,0 1.7-.1 1.7,0 1.8,0 1.7-.1 1.7,0 1.8,0 1.7,0 1.7,0 1.8,0 1.7-.1 1.7,0 1.8,0 1.7-.1 1.7-.1 1.8,0 1.7,0 1.7,0 1.8,0 1.7,.1 1.7,0 1.8,0 1.7,.1 1.7,0 1.7-.1 1.8,.1 1.7-.2 1.7,.2 1.8,0 1.7,0 1.7,.1 1.8,0 1.7,0 1.7-.1 1.8,.1 1.7,0 1.7,.1 1.8,0 1.7,.1 1.7-.1 1.8,.1 1.7,0 1.7,.1 1.8,0 1.7,.1 1.7,0 1.8,.1 1.7-.1 1.7,0 1.8,0 1.7,.1 1.7-.1 1.8,.1 1.7,.1 1.7-.1 1.8-.1 1.7,.1 1.7,0 1.7,.2 1.8-.1 1.7,0 1.7,0 1.8,.1 1.7,.1 1.7-.1 1.8,0 1.7,0 1.7,0 1.8,0 1.7,0 1.7,0 1.8,0 1.7,.1 1.7,0 1.8,.1 1.7,0 1.7-.1 1.8,0 1.7,.1 1.7,0 1.8,0 1.7,0 1.7,0 1.8,.1 1.7-.1 1.7-4.8 1.8,.2 1.7,0 1.7,.1 1.8,.1 1.7-.1 1.7,.1 1.8,.1 1.7-.4 1.7,.1 1.7,0 1.8,0 1.7,.1 1.7,.1 1.8-.4 1.7,.2 1.7,.1 1.8-.1 1.7-.1 1.7,0 1.8,.2 1.7-.1 1.7-.1 1.8,.1 1.7,.1 1.7-.1 1.8,.1 1.7,.1 1.7-.1 1.8,.1 1.7-.2 1.7-.2 1.8,.1 1.7,.1 1.7-.1 1.8,0 1.7,0 1.7-.1 1.8,.3 1.7-.1 1.7-.1 1.8,0 1.7,.1 1.7-.2 1.7-.1 1.8,.1 1.7,0 1.7,0 1.8-.1 1.7-.1 1.7,0 1.8,0 1.7,0 1.7,0 1.8,.1 1.7,.2 1.7,.1 1.8,0 1.7-.1 1.7-.1 1.8,.1 1.7-.2 1.7-.1 1.8,.2 1.7,0 1.7,.1 1.8-.1 1.7-.1 1.7-.1 1.8,0 1.7,0 1.7,.1 1.8,.1 1.7-.1 1.7,0 1.8,.2 1.7-.1 1.7-.1 1.8,.2 1.7-.1 1.7-.1 1.7,0 1.8,.1 1.7-.1 1.7,0 1.8-.2 1.7,0 1.7-.2 1.8,.2 1.7,0 1.7,.1 1.8-.1 1.7-.1 1.7-.1 1.8,0 1.7,.2 1.7,.3 1.8-.1 1.7,.1 1.7-.2 1.8,0 1.7-.2 1.7,.2 1.8,0 1.7-.1 1.7,0 1.8,0 1.7-.3 1.7,.1 1.8,0 1.7,.1 1.7,0 1.8,.1 1.7,0 1.7,.1 1.7,0 1.8,0 1.7,.1 1.7-.1 1.8,0 1.7,0 1.7,.2 1.8-.2 1.7-.2 1.7-.1 1.8,.1 1.7-.1 1.7,0 1.8,.2 1.7,0 1.7,0 1.8,0 1.7,0 1.7,.1 1.8,0 1.7-.1 1.7,.1 1.8-.2 1.7,0 1.7,0 1.8,.2 1.7-.1 1.7,0 1.8,0 1.7,0 1.7,.1 1.8,0 1.7-.1 1.7-.1 1.8,0 1.7-.1 1.7,0 1.7,.2 1.8-.1 1.7,0 .3,0 0,4.3 -.3,.2 -1.7-.1 -1.8,.1 -1.7,0 -1.7,0 -1.7,0 -1.8-.1 -1.7,0 -1.7,.1 -1.8,.1 -1.7-.1 -1.7,.1 -1.8,0 -1.7-.1 -1.7,.1 -1.8-.1 -1.7,.1 -1.7-.1 -1.8,0 -1.7,.1 -1.7,0 -1.8,0 -1.7,0 -1.7,0 -1.8,0 -1.7,0 -1.7,0 -1.8,0 -1.7,0 -1.7-.1 -1.8,.1 -1.7,0 -1.7,.1 -1.8-.1 -1.7,0 -1.7,0 -1.8,.1 -1.7,.1 -1.7,0 -1.8-.1 -1.7,.1 -1.7,0 -1.7,0 -1.8,0 -1.7,0 -1.7,0 -1.8,0 -1.7,0 -1.7,.1 -1.8-.1 -1.7,0 -1.7,.1 -1.8,0 -1.7,0 -1.7,.1 -1.8-.1 -1.7,0 -1.7,0 -1.8,0 -1.7-.1 -1.7,0 -1.8,0 -1.7,.1 -1.7,.1 -1.8,0 -1.7,0 -1.7-.1 -1.8-.1 -1.7,.1 -1.7,0 -1.8,.1 -1.7,0 -1.7,0 -1.8,0 -1.7-.1 -1.7,0 -1.7,.1 -1.8,.1 -1.7-.1 -1.7,.1 -1.8-.1 -1.7,.1 -1.7,0 -1.8,0 -1.7,0 -1.7,0 -1.8,0 -1.7-.1 -1.7,.1 -1.8,0 -1.7,0 -1.7,0 -1.8,0 -1.7,0 -1.7,0 -1.8,.1 -1.7,0 -1.7,0 -1.8,.1 -1.7-.1 -1.7-.1 -1.8,0 -1.7,0 -1.7-.1 -1.8,0 -1.7,0 -1.7,.1 -1.8,.1 -1.7,0 -1.7,.1 -1.8,0 -1.7-.1 -1.7,0 -1.7,.1 -1.8,0 -1.7,.1 -1.7,0 -1.8-.1 -1.7,.1 -1.7-.1 -1.8,0 -1.7,0 -1.7,0 -1.8,0 -1.7,.1 -1.7,0 -1.8,.1 -1.7-.1 -1.7,0 -1.8,0 -1.7,0 -1.7,0 -1.8,.1 -1.7,.1 -1.7-.1 -1.8-.1 -1.7,0 -1.7,0 -1.8,0 -1.7,.1 -1.7-.1 -1.8,.1 -1.7,0 -1.7,0 -1.8,0 -1.7,0 -1.7,0 -1.7,.1 -1.8,0 -1.7,0 -1.7,0 -1.8,0 -1.7-.1 -1.7,0 -1.8,.1 -1.7,1.4 -1.7,0 -1.8,0 -1.7,0 -1.7,0 -1.8,0 -1.7,0 -1.7,0 -1.8,0 -1.7,0 -1.7,0 -1.8,0 -1.7,0 -1.7,0 -1.8,0 -1.7,0 -1.7,0 -1.8,.1 -1.7,0 -1.7-.1 -1.8,0 -1.7,0 -1.7,0 -1.8,0 -1.7,0 -1.7,0 -1.8,.1 -1.7-.1 -1.7,0 -1.7,0 -1.8,0 -1.7,0 -1.7,0 -1.8,0 -1.7,0 -1.7,0 -1.8,0 -1.7,0 -1.7,0 -1.8,0 -1.7,0 -1.7,.1 -1.8,0 -1.7,0 -1.7,0 -1.8,0 -1.7,0 -1.7,0 -1.8,0 -1.7-.1 -1.7,.1 -1.8,0 -1.7,0 -1.7,0 -1.8,0 -1.7,0 -1.7-.1 -1.8,.1 -1.7-.1 -1.7,.1 -1.8-.1 -1.7,.1 -1.7,0 -1.7,0 -1.8,0 -1.7,0 -1.7,0 -1.8,0 -1.7,0 -1.7,0 -1.8,0 -1.7,0 -1.7,0 -1.8,0 -1.7,0 -1.7,0 -1.8,0 -1.7,0 -1.7,0 -1.8,0 -1.7,0 -1.7,0 -1.8,0 -1.7,0 -1.7,0 -1.8,0 -1.7,0 -1.7,0 -1.8,0 -1.7,0 -1.7,0 -1.8,0 -1.7,0 -1.7,0 -1.8,0 -1.7,0 -1.7,0 -1.8,0 -1.7,0 -1.7,0 -1.7,0 -1.8,0 -1.7,0 -1.7,.1 -1.8,0 -1.7-.1 -1.7,.1 -1.8,0 -1.7,0 -1.7-.1 -1.8,.1 -1.7,0 -1.7,0 -1.8,0 -1.7,0 -1.7-.1 -1.8,0 -1.7,.1 -1.7-.1 -1.8,0 -1.7,0 -1.7,0 -1.8,0 -1.7,0 -1.7,0 -1.8,.1 -1.7,0 -1.7,0 -1.8,0 -1.7,0 -1.7,0 -1.8,0 -1.7-.1 -1.7,0 -1.8,0 -1.7,.1 -1.7,0 -1.7,0 -1.8,0 -1.7,0 -1.7,0 -1.8,0 -1.7-.1 -1.7,.1 -1.8,0 -1.7,0 -1.7,0 -1.8,0 -1.7,0 -1.7,0 -1.8,0 -1.7,0 -1.7,0 -1.8,0 -1.7,0 -1.7,0 -1.8,0 -1.7,0 -1.7,0 -1.8,0 -1.7,0 -1.7,0 -1.8,0 -1.7,0 -1.7,0 -1.8,0 -1.7,0 -1.7,0 -1.8,0 -1.7,0 -1.7,0 -1.7,0 -1.8,0 -1.7,0 -1.7,.1 -1.8-.1 -1.7,0 -1.7,0 -1.8,0 -1.7,0 -1.7,0 -1.8,0 -1.7,.1 -1.7,0 -1.8-.1 -1.7,0 -1.7,0 -1.8,0 -1.7,0 -1.7,0 -1.8,0 -1.7,.1 -1.7,0 -1.8-.1 -1.7,.1 -1.7,0 -1.8,0 -1.7,0 -1.7,0 -1.8,0 -1.7,0 -1.7,0 -1.8,0 -1.7,0 -1.7,0 -1.8,0 -1.7,0 -1.7,0 -1.7,0 -1.8,0 -1.7,0 -1.7,0 -1.8,0 -1.7,0 -1.7-.1 -1.8,0 -1.7,.1 -1.7-.1 -1.8,0 -1.7,0 -1.7,.1 -1.8,0 -1.7,0 -1.7,0 -1.8,0 -1.7,0 -1.7,0 -1.8,0 -1.7,0 -1.7,0 -1.8,0 -1.7,0 -1.7,0 -1.8,0 -1.7,0 -1.7,0 -1.8,0 -1.7,.1 -1.7-.1 -1.8,0 -1.7,0 -1.7,0 -1.7,0 -1.8,0 -1.7,0 -1.7,0 -1.8,0 -1.7,.1 -1.7-.1 -1.8,0 -1.7,0 -1.7,0 -1.8,0 -1.7,0 -1.7,0 -1.8,0 -1.7,0 -1.7,0 -1.8,0 -1.7,0 -1.7,0 -1.8,0 -1.7,0 -1.7,0 -1.8,0 -1.7,0 -1.7,0 -1.8,0 -1.7,0 -1.7,0 -1.8,0 -1.7,.1 -1.7,0 -1.8-.1 -1.7,0 -1.7,0 -1.8,.1 -1.7,0 -1.7-.1 -1.7,0 -1.8,.1 -1.7,0 -1.7-.1 -1.8,.1 -1.7-.1 -1.7,0 -1.8,.1 -1.7,0 -1.7,0 -1.8,0 -1.7,0 -1.7,0 -1.8,0 -1.7,0 -1.7,0 -1.8,0 -1.7,0 -1.7,0 -1.8,0 -1.7,0 -1.7,0 -1.8,0 -1.7,0 -1.7,0 -1.8,0 -1.7,0 -1.7,0 -1.8,0 -1.7,0 -1.7,0 -1.8,0 -1.7,0 -1.7,0 -1.7,0 -1.8,0 -1.7,0 -1.7,.1 -1.8-.1 -1.7,0 -1.7,0 -1.8,0 -1.7,0 -1.7,0 -1.8,0 -1.7,0 -1.7,0 -1.8,0 -1.7,0 -1.7,0 -1.8,0 -1.7,.1 -1.7-.1 -1.8,0 -1.7,0 -1.7,0 -1.8,0 -1.7,0 -1.7,0 -1.8,0 -1.7,0 -1.7,.1 -1.8-.1 -1.7,0 -1.7,.1 -1.8,0 -1.7,0 -1.7,0 -1.8,0 -1.7,0 -1.7,0 -1.7,0 -1.8,0 -1.7,0 -1.7,0 -1.8,0 -1.7,0 -1.7,0 -1.8,0 -1.7,0 -1.7,0 -1.8,0 -1.7,0 -1.7,0 -1.8,0 -1.7,0 -1.7,0 -1.8,0 -1.7,0 -1.7,0 -1.8,0 -1.7,0 -1.7,0 -1.8,0 -1.7,0 -1.7,0 -1.8,0 -1.7,0 -1.7,0 -1.8,0 -1.7,0 -1.7,0 -1.8,0 -1.7,0 -1.7,0 -1.8,0 -1.7,0 -1.7,0 -1.7,0 -1.8,0 -1.7,0 -1.7,0 -1.8,0 -1.7,0 -1.7,.1 -1.8-.1 -1.7,0 -1.7,.1 -1.8-.1 -1.7,0 -1.7,0 -1.8,0 -1.7,0 -1.7,0 -1.8,0 -1.7,0 -1.7,0 -1.8,0 -1.7,.1 -1.7,0 -1.8,0 -1.7,0 -1.7,0 -1.8,0 -1.7-.1 -1.7,0 -1.8,0 -1.7,0 -1.7,0 -1.8,0 -1.7,.1 -1.7-.1 -1.7,.1 -1.8,0 -1.7,0 -1.7,0 -1.8,0 -1.7,0 -1.7,0 -1.8,0 -1.7,0 -1.7,0 -1.8,0 -1.7,0 -1.7,0 -1.8,0 -1.7,0 -1.7,0 -1.8,0 -1.7,0 -1.7,0 -1.8,0 -1.7,0 -1.7,0 -1.8,0 -1.7,0 -1.7,0 -1.8,0 -1.7,0 -1.7,0 -1.8,0 -1.7,0 -1.7,0 -1.8,0 -1.7,0 -1.7,0 -1.8,0 -1.7,0 -1.7,0 -1.7,0 -1.8,0 -1.7,0 -1.7,0 -1.8,0 -1.7,0 -1.7,0 -1.8,0 -1.7,0 -1.7,0 -1.8,0 -1.7,0 -1.7,0 -1.8,0 -1.7,0 -1.7,0 -1.8,0 -1.7,0 -1.7,0 -1.8,0 -1.7,0 -1.7,0 -1.8,.1 -1.7,0 -1.7-.1 -1.8,0 -1.7,.1 -1.7,0 -1.8-.1 -1.7,.1 -1.7-.1 -1.8,0 -1.7,.1 -1.7-.1 -1.7,0 -1.8,.1 -1.7,0 -1.7,0 -1.8,0 -1.7,0 -1.7,0 -1.8,0 -1.7,0 -1.7,0 -1.8,0 -1.7,0 -1.7,0 -1.8,0 -1.7,0 -1.7,0 -1.8,0 -1.7,0 -1.7,0 -1.8,0 -1.7,0 -1.7,0 -1.8,0 -1.7,0 -1.7,0 -1.8,0 -1.7,0 -1.7,0 -1.8,0 -1.7,0 -1.7,0 -1.8,0 -1.7,0 -1.7,0 -1.8,0 -1.7,0 -1.7,0 -1.7,0 -1.8,0 -1.7,0 -1.7,0 -1.8,0 -1.7,0 -1.7,0 -1.8,0 -1.7,0 -1.7,0 -1.8,0 -1.7,.1 -1.7,0 -1.8-.1 -1.7,0 -1.7,.1 -1.8-.1 -1.7,0 -1.7,0 -1.8,0 -1.7,0 -1.7,0 -1.8,.1 -1.7,0 -1.7,0 -1.8,0 -1.7,0 -1.7-.1 -1.8,0 -1.7,.1 -1.7-.1 -1.8,.1 -1.7,0 -1.7,0 -1.8,0 -1.7-.1 -1.7,.1 -1.7,0 -1.8,0 -1.7,0 -1.7,0 -1.8,0 -1.7,0 -1.7,0 -1.8,0 -1.7,0 -1.7,0 -1.8,0 -1.7,0 -1.7,0 -1.8,0 -1.7,0 -1.7,0 -1.8,0 -1.7,0 -1.7,0 -1.8,0 -1.7,0 -1.7,0 -1.8,0 -1.7,0 -1.7,0 -1.8,0 -1.7,0 -1.7,0 -1.8,0 -1.7,0 -1.7,0 -1.8,0 -1.7,0 -1.7,0 -1.7,0 -1.8,0 -1.7,0 -1.7,0 -1.8,0 -1.7,0 -1.7,0 -1.8,0 -1.7,0 -1.7,0 -1.8,0 -1.7,0 -1.7,0 -1.8,0 -1.7,0 -1.7,0 -1.8,0 -1.7,0 -1.7,0 -1.8,0 -1.7,0 -1.7,0 -1.8,0 -1.7,0 -1.7,0 -1.8,0 -1.7,0 -1.7,0 -1.8,0 -1.7,0 -1.7,0 -1.8,0 -1.7,0 -1.7,0 -1.8,0 -1.7,0 -1.7,0 -1.7,0 -1.8,.1 -1.7-.1 -1.7,0 -1.8,.1 -1.7,0 -1.7-.1 -1.8,0 -1.7,0 -1.7,.1 -1.8,0 -1.7,0 -1.7,0 -1.8,0 -1.7,0 -1.7,0 -1.8,0 -1.7,0 -1.7,0 -1.8,0 -1.7,0 -1.7,0 -1.8,0 -1.7,0 -1.7,0 -1.8,0 -1.7,0 -1.7,0 -1.8,0 -1.7,0 -1.7,0 -1.8,0 -1.7,0 -1.7,0 -1.7,0 -1.8,0 -1.7,0 -1.7,0 -1.8,0 -1.7,0 -1.7,0 -1.8,0 -1.7,0 -1.7,0 -1.8,0 -1.7,0 -1.7,0 -1.8,0 -1.7,0 -1.7,0 -1.8,0 -1.7,0 -1.7,0 -1.8,0 -1.7,0 -1.7,0 -1.8,0 -1.7,0 -1.7,0 -1.8,0 -1.7,0 -1.7,0 -1.8,0 -1.7,0 -1.7,0 -1.8,0 -1.7,0 -1.7,0 -1.8,0 -1.7,0 -1.7,0 -1.7,0 -1.8,0 -1.7,0 -1.7,.1 -1.8,0 -1.7,0 -1.7,0 -1.8,0 -1.7,0 -1.7,0 -1.8,0 -1.7,0 -1.7,0 -1.8,0 -1.7,0 -1.7,0 -1.8,0 -1.7,0 -1.7,0 -1.8,0 -1.7,0 -1.7,0 -1.8,0 -1.7,0 -1.7,0 -1.8,0 -1.7,0 -1.7,0 -1.8,0 -1.7,0 -1.7,0 -1.8,0 -1.7,0 -1.7,0 -1.7,0 -1.8,0 -1.7,0 -1.7,0 -1.8,0 -1.7,0 -1.7,0 -1.8,0 -1.7,0 -1.7,0 -1.8,0 -1.7,0 -1.7,0 -1.8,0 -1.7,0 -1.7,0 -1.8,0 -1.7,0 -1.7,0 -1.8,0 -1.7,0 -1.7,0 -1.8,0 -1.7,0 -1.7,0 -1.8,0 -1.7,0 -1.7,0 -1.8,0 -1.7,0 -1.7,0 -1.8,0 -1.7,0 -1.7,0 -1.8,0 -1.7,0 -1.7,0 -1.7,0 -1.8,0 -1.7,0 -1.7,.1 -1.8,0 -1.7,0 -1.7,0 -1.8,0 -1.7-.1 -1.7,0 -1.8,.1 -1.7,0 -1.7,0 -1.8,0 -1.7,0 -1.7,0 -1.8,0 -1.7,0 -1.7,0 -1.8,0 -1.7,0 -1.7,0 -1.8,0 -1.7,0 -1.7,0 -1.8,0 -1.7,0 -1.7,0 -1.8,0 -1.7,0 -1.7,0 -1.8,0 -1.7,0 -1.7,0 -1.8,0 -1.7,0 -1.7,0 -1.7,0 -1.8,0 -1.7,0 -1.7,0 -1.8,0 -1.7,0 -1.7,0 -1.8,0 -1.7,0 -1.7,0 -1.8,0 -1.7,0 -1.7,0 -1.8,0 -1.7,0 -1.7,0 -1.8,0 -1.7,0 -1.7,0 -1.8,0 -1.7,0 -1.7,0 -1.8,0 -1.7,0 -1.7,0 -1.8,0 -1.7,0 -1.7,0 -1.8,0 -1.7,0 -1.7,0 -1.8,0 -1.7,0 -1.7,0 -1.7,0 -1.8,0 -1.7,0 -1.7,0 -1.8,0 -1.7,0 -1.7,.1 -1.8,0 -1.7-.1 -1.7,0 -1.8,.1 -1.7,0 -1.7,0 -1.8,0 -1.7,0 -1.7,0 -1.8,0 -1.7,0 -1.7,0 -1.8,0 -1.7,0 -1.7,0 -1.8,0 -1.7,0 -1.7,0 -1.8,0 -1.7,0 -1.7,0 -1.8,0 -1.7,0 -1.7,0 -1.8,0 -1.7,0 -1.7,0 -1.8,0 -1.7,0 -1.7,0 -1.7,0 -1.8,0 -1.7,0 -1.7,0 -1.8,0 -1.7,0 -1.7,0 -1.8,0 -1.7,0 -1.7,0 -1.8,0 -1.7,0 -1.7,0 -1.8,0 -1.7,0 -1.7,0 -1.8,0 -1.7,0 -1.7,0 -1.8,0 -1.7,0 -1.7,0 -1.8,0 -1.7,0 -1.7,0 -1.8,0 -1.7,0 -1.7,0 -1.8,0 -1.7,0 -1.7,0 -1.8,0 -1.7,0 -1.7,0 -1.7,0 -1.8,0 -1.7,0 -1.7,0 -1.8,0 -1.7,0 -1.7,0 -1.8,0 -1.7,.1 -1.7,0 -1.8,0 -1.7,0 -1.7,0 -1.8,0 -1.7,0 -1.7,0 -1.8,0 -1.7,0z" fill="url(#g7)"/>
<path d="M157.7,808.4l1.7,0 1.8,0 1.7,0 1.7,0 1.8,0 1.7,0 1.7,0 1.8,0 1.7,0 1.7-.1 1.8,0 1.7,0 1.7,0 1.8,0 1.7,0 1.7,0 1.8,0 1.7,0 1.7,0 1.7,0 1.8,0 1.7,0 1.7,0 1.8,0 1.7,0 1.7,0 1.8,0 1.7,0 1.7,0 1.8,0 1.7,0 1.7,0 1.8,0 1.7,0 1.7,0 1.8,0 1.7,0 1.7,0 1.8,0 1.7,0 1.7,0 1.8,0 1.7,0 1.7,0 1.8,0 1.7,0 1.7,0 1.8,0 1.7,0 1.7,0 1.8,0 1.7,0 1.7,0 1.7,0 1.8,0 1.7,0 1.7,0 1.8,0 1.7,0 1.7,0 1.8,0 1.7,0 1.7,0 1.8,0 1.7,0 1.7,0 1.8,0 1.7,0 1.7,0 1.8,0 1.7,0 1.7,0 1.8,0 1.7,0 1.7,0 1.8,0 1.7,0 1.7,0 1.8-.1 1.7,0 1.7,.1 1.8,0 1.7-.1 1.7,0 1.8,0 1.7,0 1.7,0 1.8,0 1.7,0 1.7,0 1.7,0 1.8,0 1.7,0 1.7,0 1.8,0 1.7,0 1.7,0 1.8,0 1.7,0 1.7,0 1.8,0 1.7,0 1.7,0 1.8,0 1.7,0 1.7,0 1.8,0 1.7,0 1.7,0 1.8,0 1.7,0 1.7,0 1.8,0 1.7,0 1.7,0 1.8,0 1.7,0 1.7,0 1.8,0 1.7,0 1.7,0 1.8,0 1.7,0 1.7,0 1.7,0 1.8,0 1.7,0 1.7,0 1.8,0 1.7,0 1.7,0 1.8,0 1.7,0 1.7,0 1.8,0 1.7,0 1.7,0 1.8,0 1.7,0 1.7,0 1.8,0 1.7,0 1.7,0 1.8,0 1.7,0 1.7,0 1.8,0 1.7,0 1.7,0 1.8-.1 1.7,0 1.7,.1 1.8,0 1.7,0 1.7,0 1.8,0 1.7-.1 1.7,0 1.8,0 1.7,0 1.7,0 1.7,0 1.8,0 1.7,0 1.7,0 1.8,0 1.7,0 1.7,0 1.8,0 1.7,0 1.7,0 1.8,0 1.7,0 1.7,0 1.8,0 1.7,0 1.7,0 1.8,0 1.7,0 1.7,0 1.8,0 1.7,0 1.7,0 1.8,0 1.7,0 1.7,0 1.8,0 1.7,0 1.7,0 1.8,0 1.7,0 1.7,0 1.8,0 1.7,0 1.7,0 1.8,0 1.7,0 1.7,0 1.7,0 1.8,0 1.7,0 1.7,0 1.8,0 1.7,0 1.7,0 1.8,0 1.7,0 1.7,0 1.8,0 1.7,0 1.7,0 1.8,0 1.7,0 1.7,0 1.8,0 1.7,0 1.7,0 1.8,0 1.7,0 1.7,0 1.8,0 1.7,0 1.7,0 1.8,0 1.7,0 1.7,0 1.8,0 1.7-.1 1.7,0 1.8,0 1.7,0 1.7,0 1.7,0 1.8,0 1.7,0 1.7,0 1.8,0 1.7,0 1.7,0 1.8,0 1.7,0 1.7,0 1.8,0 1.7,0 1.7,0 1.8,0 1.7,0 1.7,0 1.8,0 1.7,0 1.7,0 1.8,0 1.7,0 1.7,0 1.8,0 1.7,0 1.7,0 1.8,0 1.7,0 1.7,0 1.8,0 1.7,0 1.7,0 1.8,0 1.7,0 1.7,0 1.8,0 1.7,0 1.7,0 1.7,0 1.8,0 1.7,0 1.7,0 1.8,0 1.7,0 1.7,0 1.8,0 1.7,0 1.7,0 1.8,0 1.7,0 1.7,0 1.8,0 1.7,0 1.7,0 1.8,0 1.7,0 1.7,0 1.8,0 1.7,0 1.7,0 1.8,0 1.7-.1 1.7,0 1.8,0 1.7,.1 1.7,0 1.8-.1 1.7,0 1.7,.1 1.8-.1 1.7,0 1.7,0 1.7,0 1.8,0 1.7,0 1.7,0 1.8,0 1.7,0 1.7,0 1.8,0 1.7,0 1.7,0 1.8,0 1.7,0 1.7,0 1.8,0 1.7,0 1.7,0 1.8,0 1.7,0 1.7,0 1.8,0 1.7,0 1.7,0 1.8,0 1.7,0 1.7,0 1.8,0 1.7,0 1.7,0 1.8,0 1.7,0 1.7,0 1.8,0 1.7,0 1.7,0 1.8,0 1.7,0 1.7,0 1.7,0 1.8,0 1.7,0 1.7,0 1.8,0 1.7,0 1.7,0 1.8,0 1.7,0 1.7,0 1.8,0 1.7,0 1.7,0 1.8,0 1.7,0 1.7,0 1.8,0 1.7,0 1.7,0 1.8,0 1.7,0 1.7,0 1.8,0 1.7,0 1.7,0 1.8,0 1.7,0 1.7,0 1.8,0 1.7,0 1.7,0 1.8,0 1.7,0 1.7-.1 1.7,.1 1.8,0 1.7,0 1.7,0 1.8-.1 1.7,.1 1.7-.1 1.8,0 1.7,.1 1.7,0 1.8,0 1.7,0 1.7,0 1.8-.1 1.7,0 1.7,0 1.8,0 1.7,0 1.7,0 1.8,.1 1.7-.1 1.7,0 1.8,.1 1.7,0 1.7-.1 1.8,0 1.7,0 1.7,0 1.8,0 1.7,0 1.7,0 1.8,0 1.7,0 1.7,0 1.8,0 1.7,0 1.7,0 1.7,0 1.8,0 1.7,0 1.7,0 1.8,0 1.7,0 1.7,0 1.8,0 1.7,0 1.7,0 1.8,0 1.7,0 1.7,0 1.8,0 1.7,0 1.7,0 1.8,0 1.7,0 1.7,0 1.8,0 1.7,0 1.7,0 1.8,0 1.7,0 1.7,0 1.8,0 1.7,0 1.7,0 1.8,0 1.7,0 1.7,0 1.8,0 1.7,0 1.7,0 1.8-.1 1.7,0 1.7,.1 1.7-.1 1.8,0 1.7,.1 1.7-.1 1.8,.1 1.7,0 1.7-.1 1.8,0 1.7,.1 1.7,0 1.8-.1 1.7,0 1.7,0 1.8,0 1.7,0 1.7,0 1.8,0 1.7,0 1.7,0 1.8,0 1.7,0 1.7,0 1.8,0 1.7,0 1.7,0 1.8,0 1.7,0 1.7,0 1.8,0 1.7,0 1.7,0 1.8,0 1.7,0 1.7,0 1.7,0 1.8,0 1.7,0 1.7,0 1.8,0 1.7,0 1.7,0 1.8,0 1.7,0 1.7,0 1.8,0 1.7,0 1.7,0 1.8,0 1.7,0 1.7,0 1.8,0 1.7,0 1.7,0 1.8,0 1.7,0 1.7,0 1.8,0 1.7,0 1.7,0 1.8,0 1.7,0 1.7,0 1.8,0 1.7,0 1.7,0 1.8,0 1.7,0 1.7,0 1.8,0 1.7-.1 1.7,.1 1.7-.1 1.8,0 1.7,0 1.7,0 1.8,0 1.7,0 1.7,.1 1.8,0 1.7,0 1.7,0 1.8,0 1.7,0 1.7-.1 1.8,0 1.7,0 1.7,0 1.8,0 1.7,0 1.7,0 1.8,0 1.7,0 1.7,0 1.8,.1 1.7-.1 1.7,0 1.8,.1 1.7-.1 1.7,0 1.8,0 1.7,0 1.7,0 1.8,0 1.7,0 1.7,0 1.7,0 1.8,0 1.7,0 1.7,0 1.8,0 1.7,0 1.7,0 1.8,0 1.7,0 1.7,0 1.8,0 1.7,0 1.7,0 1.8,0 1.7,0 1.7,0 1.8,0 1.7,0 1.7,0 1.8,0 1.7,0 1.7,0 1.8,0 1.7,0 1.7,0 1.8,0 1.7,0 1.7,0 1.8,0 1.7,0 1.7,0 1.8,0 1.7,0 1.7,0 1.8,0 1.7,0 1.7,0 1.7,0 1.8,0 1.7,0 1.7,0 1.8,0 1.7-.1 1.7,0 1.8,.1 1.7-.1 1.7,0 1.8,0 1.7,0 1.7,0 1.8,0 1.7,0 1.7,0 1.8,0 1.7,.1 1.7-.1 1.8,0 1.7,0 1.7,0 1.8,0 1.7,0 1.7,0 1.8,0 1.7,0 1.7,0 1.8,0 1.7,0 1.7,0 1.8,.1 1.7-.1 1.7,0 1.8,0 1.7,0 1.7,0 1.7,0 1.8,0 1.7,0 1.7,0 1.8,0 1.7,0 1.7,0 1.8,0 1.7,0 1.7,0 1.8,0 1.7,0 1.7,0 1.8,0 1.7,0 1.7,0 1.8,0 1.7,0 1.7,0 1.8,0 1.7,0 1.7,0 1.8,0 1.7,0 1.7,0 1.8-.1 1.7,0 1.7,.1 1.8-.1 1.7,.1 1.7,0 1.8-.1 1.7,0 1.7,.1 1.7,0 1.8-.1 1.7,0 1.7,0 1.8,.1 1.7,0 1.7-.1 1.8,0 1.7,0 1.7,0 1.8,0 1.7,0 1.7,0 1.8,0 1.7,0 1.7,0 1.8,0 1.7,0 1.7,0 1.8,0 1.7,0 1.7,0 1.8,0 1.7,0 1.7,0 1.8,0 1.7,0 1.7,0 1.8,0 1.7,.1 1.7-.1 1.8,0 1.7,0 1.7,0 1.8,0 1.7,0 1.7,0 1.7,0 1.8,0 1.7,.1 1.7-.1 1.8,0 1.7,0 1.7,0 1.8,0 1.7,0 1.7,0 1.8,0 1.7,0 1.7,0 1.8,0 1.7,0 1.7,0 1.8,0 1.7,0 1.7,0 1.8,0 1.7-.1 1.7,0 1.8,0 1.7,.1 1.7-.1 1.8,0 1.7,.1 1.7,0 1.8,0 1.7,0 1.7,0 1.8,0 1.7,0 1.7,0 1.7,0 1.8,0 1.7,0 1.7,0 1.8,0 1.7,0 1.7,0 1.8,0 1.7,0 1.7,0 1.8,0 1.7,0 1.7-.1 1.8,.1 1.7,0 1.7-.1 1.8,0 1.7,0 1.7,0 1.8,0 1.7,0 1.7,0 1.8,.1 1.7,0 1.7-.1 1.8,0 1.7,0 1.7,0 1.8,0 1.7,0 1.7,0 1.8,.1 1.7-.1 1.7,0 1.8,0 1.7,0 1.7,0 1.7,0 1.8,0 1.7,0 1.7,0 1.8,0 1.7,0 1.7,0 1.8,0 1.7,0 1.7,0 1.8,0 1.7,0 1.7,0 1.8,0 1.7,0 1.7,0 1.8,0 1.7,0 1.7,0 1.8,0 1.7,0 1.7,0 1.8,0 1.7,0 1.7,0 1.8,0 1.7-.1 1.7,.1 1.8,0 1.7,0 1.7,0 1.8,0 1.7,0 1.7,0 1.7-.1 1.8,0 1.7,0 1.7,.1 1.8,0 1.7,0 1.7,0 1.8,0 1.7,0 1.7,0 1.8-.1 1.7,0 1.7,0 1.8,0 1.7,0 1.7,0 1.8,0 1.7,.1 1.7-.1 1.8,0 1.7,.1 1.7,0 1.8,0 1.7,0 1.7,0 1.8-.1 1.7,.1 1.7,0 1.8,0 1.7-.1 1.7,.1 1.8,0 1.7-.1 1.7,0 1.8,0 1.7,0 1.7,0 1.7,0 1.8,0 1.7,0 1.7,0 1.8,0 1.7,0 1.7,0 1.8,0 1.7,0 1.7,0 1.8,0 1.7,0 1.7,0 1.8,0 1.7,0 1.7,0 1.8,0 1.7,0 1.7,0 1.8,0 1.7,0 1.7,0 1.8,0 1.7,0 1.7,0 1.8,0 1.7,0 1.7,0 1.8,0 1.7,0 1.7,0 1.8,0 1.7,0 1.7,0 1.8,0 1.7,0 1.7,0 1.7-.1 1.8,.1 1.7-.1 1.7,.1 1.8-.1 1.7,.1 1.7,0 1.8,0 1.7,0 1.7,0 1.8,0 1.7-.1 1.7,.1 1.8,0 1.7,0 1.7,0 1.8,0 1.7,0 1.7,0 1.8,0 1.7-.1 1.7,0 1.8,0 1.7,0 1.7,0 1.8,0 1.7,0 1.7,0 1.8,0 1.7,0 1.7,0 1.8,0 1.7,0 1.7,0 1.7,.1 1.8-.1 1.7,0 1.7,0 1.8,0 1.7,0 1.7,0 1.8,0 1.7,.1 1.7,0 1.8-.1 1.7,0 1.7,0 1.8,0 1.7,0 1.7,0 1.8,0 1.7,0 1.7,0 1.8,0 1.7,0 1.7,0 1.8,0 1.7,0 1.7,0 1.8,0 1.7,0 1.7-1.4 1.8-.1 1.7,0 1.7,.1 1.8,0 1.7,0 1.7,0 1.8,0 1.7-.1 1.7,0 1.7,0 1.8,0 1.7,0 1.7,0 1.8-.1 1.7,.1 1.7-.1 1.8,0 1.7,0 1.7,0 1.8,.1 1.7,.1 1.7-.1 1.8-.1 1.7,0 1.7,0 1.8,0 1.7,0 1.7,.1 1.8-.1 1.7,0 1.7-.1 1.8,0 1.7,0 1.7,0 1.8,0 1.7,.1 1.7-.1 1.8,.1 1.7,0 1.7-.1 1.8,0 1.7-.1 1.7,0 1.7,.1 1.8,0 1.7-.1 1.7,0 1.8-.1 1.7-.1 1.7,0 1.8,0 1.7,.1 1.7,0 1.8,0 1.7,.1 1.7,.1 1.8-.1 1.7,0 1.7,0 1.8-.1 1.7,0 1.7,0 1.8,0 1.7,0 1.7,0 1.8,0 1.7-.1 1.7,.1 1.8,0 1.7,0 1.7,0 1.8,0 1.7,0 1.7-.1 1.8,.1 1.7-.1 1.7,.1 1.8-.1 1.7-.1 1.7,0 1.7,.1 1.8,0 1.7,0 1.7,0 1.8-.1 1.7,0 1.7-.1 1.8,.1 1.7,.1 1.7,0 1.8,0 1.7-.1 1.7-.1 1.8,0 1.7,0 1.7,.1 1.8,0 1.7,0 1.7,0 1.8,.1 1.7-.1 1.7,0 1.8,0 1.7-.1 1.7,0 1.8,.1 1.7-.1 1.7,0 1.8,0 1.7,0 1.7,0 1.8,0 1.7,0 1.7,0 1.7-.1 1.8,.1 1.7,0 1.7-.1 1.8-.1 1.7,0 1.7,0 1.8,.1 1.7-.1 1.7,0 1.8-.1 1.7,.1 1.7,0 1.8,0 1.7,0 1.7,0 1.8,0 1.7,0 1.7,0 1.8,0 1.7,0 1.7-.1 1.8,0 1.7,.1 1.7-.1 1.8,.1 1.7-.1 1.7,.1 1.8,0 1.7-.1 1.7,.1 1.8-.1 1.7-.1 1.7,0 1.8,.1 1.7,0 1.7,0 1.7,0 1.8-.1 1.7,.1 .3-.2 0,3.1 -.3,0 -1.7,0 -1.8,0 -1.7,0 -1.7,0 -1.7,0 -1.8,0 -1.7,0 -1.7,0 -1.8,0 -1.7,0 -1.7,0 -1.8,0 -1.7,0 -1.7,0 -1.8,0 -1.7,0 -1.7,.1 -1.8,0 -1.7,0 -1.7,0 -1.8,0 -1.7,0 -1.7,0 -1.8,0 -1.7,0 -1.7,0 -1.8,0 -1.7,0 -1.7,0 -1.8,0 -1.7,0 -1.7,0 -1.8-.1 -1.7,.1 -1.7,0 -1.8-.1 -1.7,0 -1.7,.1 -1.8,0 -1.7,0 -1.7,0 -1.7,0 -1.8,0 -1.7,0 -1.7,0 -1.8,0 -1.7,0 -1.7,0 -1.8,0 -1.7,0 -1.7,0 -1.8,0 -1.7,0 -1.7,0 -1.8,0 -1.7,0 -1.7,0 -1.8,0 -1.7,0 -1.7,0 -1.8,0 -1.7,0 -1.7,0 -1.8,0 -1.7,0 -1.7,0 -1.8,0 -1.7,.1 -1.7-.1 -1.8,0 -1.7,.1 -1.7,0 -1.8-.1 -1.7,.1 -1.7,0 -1.7,0 -1.8,0 -1.7,0 -1.7,0 -1.8,0 -1.7,0 -1.7,0 -1.8,0 -1.7,0 -1.7,0 -1.8,0 -1.7,0 -1.7,0 -1.8,0 -1.7,0 -1.7,0 -1.8,0 -1.7,0 -1.7,0 -1.8,0 -1.7,0 -1.7,0 -1.8,0 -1.7,0 -1.7,0 -1.8,0 -1.7,0 -1.7,0 -1.8,0 -1.7,0 -1.7,0 -1.8,0 -1.7,0 -1.7,0 -1.8,0 -1.7,0 -1.7,0 -1.7,0 -1.8,0 -1.7,0 -1.7,0 -1.8,0 -1.7,0 -1.7,0 -1.8,0 -1.7,0 -1.7,0 -1.8,.1 -1.7,0 -1.7,0 -1.8-.1 -1.7,0 -1.7,.1 -1.8,0 -1.7,0 -1.7,0 -1.8,0 -1.7,0 -1.7,0 -1.8,0 -1.7,0 -1.7,0 -1.8-.1 -1.7,.1 -1.7-.1 -1.8,.1 -1.7,0 -1.7,0 -1.8,0 -1.7,0 -1.7,0 -1.7,0 -1.8,0 -1.7,0 -1.7,0 -1.8,0 -1.7,0 -1.7,0 -1.8,0 -1.7,.3 -1.7,0 -1.8,0 -1.7,0 -1.7,0 -1.8,0 -1.7,0 -1.7,0 -1.8,0 -1.7,0 -1.7,0 -1.8,0 -1.7,0 -1.7,0 -1.8,0 -1.7,0 -1.7,0 -1.8,0 -1.7,0 -1.7,0 -1.8,0 -1.7,0 -1.7,0 -1.8,0 -1.7,0 -1.7,0 -1.8,0 -1.7,0 -1.7,0 -1.7,0 -1.8,0 -1.7,0 -1.7,0 -1.8,0 -1.7,0 -1.7,0 -1.8,0 -1.7,0 -1.7,0 -1.8,0 -1.7,0 -1.7,0 -1.8,0 -1.7,0 -1.7,0 -1.8,0 -1.7,0 -1.7,0 -1.8,0 -1.7,0 -1.7,0 -1.8,0 -1.7,0 -1.7,0 -1.8,0 -1.7,0 -1.7,0 -1.8,0 -1.7,0 -1.7,0 -1.8,0 -1.7,0 -1.7,0 -1.7,0 -1.8,0 -1.7,0 -1.7,0 -1.8,0 -1.7,0 -1.7,0 -1.8,0 -1.7,0 -1.7,0 -1.8,0 -1.7,0 -1.7,0 -1.8,0 -1.7,0 -1.7,0 -1.8,0 -1.7,0 -1.7,0 -1.8,0 -1.7,0 -1.7,0 -1.8,0 -1.7,0 -1.7,0 -1.8,0 -1.7,0 -1.7,0 -1.8,0 -1.7,0 -1.7,0 -1.8,0 -1.7,0 -1.7,0 -1.8,0 -1.7,0 -1.7,0 -1.7,0 -1.8,0 -1.7,0 -1.7,0 -1.8,0 -1.7,0 -1.7,0 -1.8,0 -1.7,0 -1.7,0 -1.8,0 -1.7,0 -1.7,0 -1.8,0 -1.7,0 -1.7,0 -1.8,0 -1.7,0 -1.7,0 -1.8,0 -1.7,0 -1.7,0 -1.8,0 -1.7,0 -1.7,0 -1.8,0 -1.7,0 -1.7,0 -1.8,0 -1.7,0 -1.7,0 -1.8,0 -1.7,0 -1.7,0 -1.8,0 -1.7,0 -1.7,0 -1.7,0 -1.8,0 -1.7,0 -1.7,0 -1.8,.1 -1.7-.1 -1.7,0 -1.8,0 -1.7,0 -1.7,0 -1.8,0 -1.7,.1 -1.7-.1 -1.8,.1 -1.7,0 -1.7,0 -1.8,0 -1.7-.1 -1.7,0 -1.8,0 -1.7,.1 -1.7,0 -1.8-.1 -1.7,0 -1.7,.1 -1.8,0 -1.7-.1 -1.7,0 -1.8,0 -1.7,.1 -1.7,0 -1.8-.1 -1.7,0 -1.7,0 -1.7,0 -1.8,0 -1.7,.1 -1.7,0 -1.8,0 -1.7,0 -1.7-.1 -1.8,0 -1.7,0 -1.7,.1 -1.8,0 -1.7,0 -1.7,0 -1.8,0 -1.7,0 -1.7,0 -1.8,0 -1.7-.1 -1.7,0 -1.8,0 -1.7,.1 -1.7,0 -1.8,0 -1.7,0 -1.7,0 -1.8,0 -1.7,0 -1.7,0 -1.8,0 -1.7,0 -1.7,0 -1.8,0 -1.7,0 -1.7,0 -1.8,0 -1.7,0 -1.7,0 -1.7,0 -1.8,0 -1.7,0 -1.7,0 -1.8,0 -1.7,0 -1.7,0 -1.8,0 -1.7,0 -1.7,0 -1.8,0 -1.7,0 -1.7,0 -1.8,0 -1.7,0 -1.7,0 -1.8,0 -1.7,0 -1.7,0 -1.8,0 -1.7,0 -1.7,0 -1.8,0 -1.7,0 -1.7,0 -1.8,0 -1.7,0 -1.7,0 -1.8,0 -1.7,0 -1.7,0 -1.8,0 -1.7,0 -1.7,0 -1.7,0 -1.8,0 -1.7,0 -1.7,0 -1.8,0 -1.7,0 -1.7,0 -1.8,0 -1.7,0 -1.7,0 -1.8,0 -1.7,0 -1.7,0 -1.8,0 -1.7,0 -1.7,0 -1.8,0 -1.7,0 -1.7,0 -1.8,0 -1.7,0 -1.7,0 -1.8,0 -1.7,0 -1.7,0 -1.8,0 -1.7,0 -1.7,0 -1.8,0 -1.7,0 -1.7,0 -1.8,0 -1.7,0 -1.7,0 -1.8,0 -1.7,0 -1.7,0 -1.7,0 -1.8,0 -1.7,0 -1.7,0 -1.8,0 -1.7,0 -1.7,0 -1.8,0 -1.7,0 -1.7,0 -1.8,0 -1.7,0 -1.7,0 -1.8,0 -1.7,0 -1.7,0 -1.8,0 -1.7,0 -1.7,0 -1.8,0 -1.7,0 -1.7,0 -1.8,0 -1.7,0 -1.7,0 -1.8,0 -1.7,0 -1.7,0 -1.8,0 -1.7,0 -1.7,0 -1.8,0 -1.7,0 -1.7,0 -1.7,0 -1.8,0 -1.7,0 -1.7,0 -1.8,0 -1.7,0 -1.7,0 -1.8,0 -1.7,0 -1.7,0 -1.8,0 -1.7,0 -1.7,0 -1.8,0 -1.7,0 -1.7,0 -1.8,0 -1.7,0 -1.7,0 -1.8,0 -1.7,0 -1.7,0 -1.8,0 -1.7,0 -1.7,0 -1.8,0 -1.7,0 -1.7,0 -1.8,0 -1.7,0 -1.7,0 -1.8,0 -1.7,0 -1.7,0 -1.8,0 -1.7,0 -1.7,0 -1.7,0 -1.8,0 -1.7,0 -1.7,0 -1.8,0 -1.7,0 -1.7,0 -1.8,0 -1.7,0 -1.7,0 -1.8,0 -1.7,0 -1.7,0 -1.8,0 -1.7,0 -1.7,0 -1.8,0 -1.7,0 -1.7,0 -1.8,0 -1.7,0 -1.7,0 -1.8,0 -1.7,0 -1.7,0 -1.8,0 -1.7,0 -1.7,.1 -1.8-.1 -1.7,0 -1.7,0 -1.8,.1 -1.7-.1 -1.7,.1 -1.8,0 -1.7-.1 -1.7,0 -1.7,0 -1.8,.1 -1.7-.1 -1.7,.1 -1.8,0 -1.7,0 -1.7,0 -1.8,0 -1.7,0 -1.7,0 -1.8,0 -1.7,0 -1.7,0 -1.8,0 -1.7,0 -1.7,0 -1.8,0 -1.7,0 -1.7,0 -1.8,0 -1.7,0 -1.7,0 -1.8,0 -1.7,0 -1.7,0 -1.8,0 -1.7,0 -1.7,0 -1.8,0 -1.7,0 -1.7,0 -1.8,0 -1.7,0 -1.7,0 -1.7,0 -1.8,0 -1.7,0 -1.7,0 -1.8,0 -1.7,0 -1.7,0 -1.8,0 -1.7,0 -1.7,0 -1.8,0 -1.7,0 -1.7,0 -1.8,0 -1.7,0 -1.7,0 -1.8,0 -1.7,0 -1.7,0 -1.8,0 -1.7,0 -1.7,0 -1.8,0 -1.7,0 -1.7,0 -1.8,0 -1.7,0 -1.7,0 -1.8,0 -1.7,0 -1.7,0 -1.8,0 -1.7,0 -1.7,0 -1.8,0 -1.7,0 -1.7,0 -1.7,0 -1.8,0 -1.7,0 -1.7,0 -1.8,0 -1.7,0 -1.7,0 -1.8,0 -1.7,0 -1.7,0 -1.8,0 -1.7,0 -1.7,0 -1.8,0 -1.7,0 -1.7,0 -1.8,0 -1.7,0 -1.7,0 -1.8,0 -1.7,0 -1.7,0 -1.8,0 -1.7,0 -1.7,0 -1.8,0 -1.7,0 -1.7,0 -1.8,0 -1.7,0 -1.7,0 -1.8,0 -1.7,0 -1.7,0 -1.7,0 -1.8,0 -1.7,0 -1.7,0 -1.8,0 -1.7,0 -1.7,0 -1.8,0 -1.7,0 -1.7,0 -1.8,0 -1.7,0 -1.7,0 -1.8,0 -1.7,0 -1.7,0 -1.8,0 -1.7,0 -1.7,0 -1.8,0 -1.7,0 -1.7,0 -1.8,0 -1.7,0 -1.7,0 -1.8,0 -1.7,0 -1.7,0 -1.8,0 -1.7,0 -1.7,0 -1.8,0 -1.7,0 -1.7,0 -1.8,0 -1.7,0 -1.7,0 -1.7,0 -1.8,0 -1.7,0 -1.7,0 -1.8,0 -1.7,0 -1.7,0 -1.8,0 -1.7,0 -1.7,0 -1.8,0 -1.7,0 -1.7,0 -1.8,0 -1.7,0 -1.7,0 -1.8,0 -1.7,0 -1.7,0 -1.8,0 -1.7,0 -1.7,0 -1.8,0 -1.7,0 -1.7,0 -1.8,0 -1.7,0 -1.7,0 -1.8,0 -1.7,0 -1.7,0 -1.8,0 -1.7,0 -1.7,0 -1.8,0 -1.7,0 -1.7,0 -1.7,0 -1.8,0 -1.7,0 -1.7,0 -1.8,0 -1.7,0 -1.7,0 -1.8,0 -1.7,0 -1.7,0 -1.8,0 -1.7,0 -1.7,0 -1.8,0 -1.7,0 -1.7,0 -1.8,0 -1.7,0 -1.7,0 -1.8,0 -1.7,0 -1.7,0 -1.8,0 -1.7,0 -1.7,0 -1.8,0 -1.7,0 -1.7,0 -1.8,0 -1.7,0 -1.7,0 -1.8,0 -1.7,0 -1.7,0 -1.7,0 -1.8,0 -1.7,0 -1.7,0 -1.8,.1 -1.7,0 -1.7,0 -1.8,0 -1.7,0 -1.7,0 -1.8,0 -1.7,0 -1.7,0 -1.8,0 -1.7,0 -1.7,0 -1.8,0 -1.7,0 -1.7,0 -1.8,0 -1.7,0 -1.7,0 -1.8,0 -1.7,0 -1.7,0 -1.8,0 -1.7,0 -1.7,0 -1.8,0 -1.7,0 -1.7,0 -1.8,0 -1.7,0 -1.7,0 -1.8,0 -1.7,0 -1.7,0 -1.7,0 -1.8,0 -1.7,0 -1.7,0 -1.8,0 -1.7,0 -1.7,0 -1.8,0 -1.7,0 -1.7,0 -1.8,0 -1.7,0 -1.7,0 -1.8,0 -1.7,0 -1.7,0 -1.8,0 -1.7,0 -1.7,0 -1.8,0 -1.7,0 -1.7,0 -1.8,0 -1.7,0 -1.7,0 -1.8,0 -1.7,0 -1.7,0 -1.8,0 -1.7,0 -1.7,0 -1.8,0 -1.7,0 -1.7,0 -1.7,0 -1.8,0 -1.7,0 -1.7,0 -1.8,0 -1.7,0 -1.7,0 -1.8,0 -1.7,0 -1.7,0 -1.8,0 -1.7,0 -1.7,0 -1.8,0 -1.7,0 -1.7,0 -1.8,0 -1.7,0 -1.7,0 -1.8,0 -1.7,0 -1.7,0 -1.8,0 -1.7,0 -1.7,0 -1.8,0 -1.7,0 -1.7,0 -1.8,0 -1.7,0 -1.7,0 -1.8,0 -1.7,0 -1.7,0 -1.8,0 -1.7,0 -1.7,0 -1.7,0 -1.8,0 -1.7,0 -1.7,0 -1.8,0 -1.7,0 -1.7,0 -1.8,0 -1.7,0 -1.7,0 -1.8,0 -1.7,0 -1.7,0 -1.8,0 -1.7,0 -1.7,0 -1.8,0 -1.7,0 -1.7,0 -1.8,0 -1.7,0 -1.7,0 -1.8,0 -1.7,0 -1.7,0 -1.8,0 -1.7,0 -1.7,0 -1.8,0 -1.7,0 -1.7,0 -1.8,0 -1.7,0 -1.7,0 -1.7,0 -1.8,0 -1.7,0 -1.7,0 -1.8,0 -1.7,0 -1.7,0 -1.8,0 -1.7,0 -1.7,0 -1.8,0 -1.7,0 -1.7,0 -1.8,0 -1.7,0 -1.7,0 -1.8,0 -1.7,0 -1.7,0 -1.8,0 -1.7,0 -1.7,0 -1.8,0 -1.7,0 -1.7,0 -1.8,0 -1.7,0 -1.7,0 -1.8,0 -1.7,0 -1.7,0 -1.8,0 -1.7,0 -1.7,0 -1.8,0 -1.7,0 -1.7,0 -1.7,0 -1.8,0 -1.7,0 -1.7,0 -1.8,0 -1.7,0 -1.7,0 -1.8,0 -1.7,0 -1.7,0 -1.8,0 -1.7,0 -1.7,0 -1.8,0 -1.7,0 -1.7,0 -1.8,0 -1.7,0 -1.7,0 -1.8,0 -1.7,0 -1.7,0 -1.8,0 -1.7,0 -1.7,0 -1.8,0 -1.7,0 -1.7,0 -1.8,0 -1.7,0 -1.7,0 -1.8,0 -1.7,0 -1.7,0 -1.8,0 -1.7,0 -1.7,0 -1.7,0 -1.8,0 -1.7,0 -1.7,0 -1.8,0 -1.7,.1 -1.7-.1 -1.8,0 -1.7,0 -1.7,0 -1.8,0 -1.7,0 -1.7,0 -1.8,0 -1.7,.1 -1.7,0 -1.8,0 -1.7,0 -1.7,0 -1.8,0 -1.7,0 -1.7,0 -1.8,0 -1.7,0 -1.7,0 -1.8,0 -1.7,0 -1.7,0 -1.8,0 -1.7,0 -1.7,0 -1.8,0 -1.7,0 -1.7,0 -1.7,0 -1.8,0 -1.7,0 -1.7,0 -1.8,0 -1.7,0 -1.7,0 -1.8,0 -1.7,0 -1.7,0 -1.8,0 -1.7,0 -1.7,0 -1.8,0 -1.7,0 -1.7,0 -1.8,0 -1.7,0 -1.7,0 -1.8,0 -1.7,0 -1.7,0 -1.8,0 -1.7,0 -1.7,0 -1.8,0 -1.7,0 -1.7,0 -1.8,0 -1.7,0 -1.7,0 -1.8,0 -1.7,0 -1.7,0 -1.8,0 -1.7,0 -1.7,0 -1.7,0 -1.8,0 -1.7,0 -1.7,0 -1.8,0 -1.7,0 -1.7,0 -1.8,0 -1.7,0 -1.7,0 -1.8,0 -1.7,0 -1.7,0 -1.8,0 -1.7,0 -1.7,0 -1.8,0 -1.7,0 -1.7,0 -1.8,0 -1.7,0 -1.7,0 -1.8,0 -1.7,0 -1.7,0 -1.8,0 -1.7,0 -1.7,0 -1.8,0 -1.7,0 -1.7,0 -1.8,0 -1.7,0 -1.7,0 -1.7,0 -1.8,0 -1.7,0 -1.7,0 -1.8,0 -1.7,0 -1.7,0 -1.8,0 -1.7,0 -1.7,0 -1.8,0 -1.7,0 -1.7,0 -1.8,0 -1.7,0 -1.7,0 -1.8,0 -1.7,0z" fill="url(#g8)"/>
<path d="M157.7,808.5l1.7,0 1.8,0 1.7,0 1.7,0 1.8,0 1.7,0 1.7,0 1.8,0 1.7,0 1.7,0 1.8,0 1.7,0 1.7,0 1.8,0 1.7,0 1.7,0 1.8,0 1.7,0 1.7,0 1.7,0 1.8,0 1.7,0 1.7,0 1.8,0 1.7,0 1.7,0 1.8,0 1.7,0 1.7,0 1.8,0 1.7,0 1.7,0 1.8,0 1.7,0 1.7,0 1.8,0 1.7,0 1.7,0 1.8,0 1.7,0 1.7,0 1.8,0 1.7,0 1.7,0 1.8,0 1.7,0 1.7,0 1.8,0 1.7,0 1.7,0 1.8,0 1.7,0 1.7,0 1.7,0 1.8,0 1.7,0 1.7,0 1.8,0 1.7,0 1.7,0 1.8,0 1.7,0 1.7,0 1.8,0 1.7,0 1.7,0 1.8,0 1.7,0 1.7,0 1.8,0 1.7,0 1.7,0 1.8,0 1.7,0 1.7,0 1.8,0 1.7,0 1.7,0 1.8,0 1.7,0 1.7,0 1.8,0 1.7,0 1.7,0 1.8,0 1.7,0 1.7,0 1.8,0 1.7,0 1.7,0 1.7,0 1.8,0 1.7,0 1.7,0 1.8,0 1.7,0 1.7,0 1.8,0 1.7,0 1.7,0 1.8,0 1.7,0 1.7,0 1.8,0 1.7,0 1.7,0 1.8,0 1.7,0 1.7-.1 1.8,0 1.7,0 1.7,0 1.8,0 1.7,0 1.7,0 1.8,0 1.7,.1 1.7-.1 1.8,0 1.7,0 1.7,0 1.8,0 1.7,0 1.7,0 1.7,0 1.8,0 1.7,0 1.7,0 1.8,0 1.7,0 1.7,0 1.8,0 1.7,0 1.7,0 1.8,0 1.7,0 1.7,0 1.8,0 1.7,0 1.7,0 1.8,0 1.7,0 1.7,0 1.8,0 1.7,0 1.7,0 1.8,0 1.7,0 1.7,0 1.8,0 1.7,0 1.7,0 1.8,0 1.7,0 1.7,0 1.8,0 1.7,0 1.7,0 1.8,0 1.7,0 1.7,0 1.7,0 1.8,0 1.7,0 1.7,0 1.8,0 1.7,0 1.7,0 1.8,0 1.7,0 1.7,0 1.8,0 1.7,0 1.7,0 1.8,0 1.7,0 1.7,0 1.8,0 1.7,0 1.7,0 1.8,0 1.7,0 1.7,0 1.8,0 1.7,0 1.7,0 1.8,0 1.7,0 1.7,0 1.8,0 1.7,0 1.7,0 1.8,0 1.7,0 1.7,0 1.8,0 1.7,0 1.7,0 1.7,0 1.8,0 1.7,0 1.7,0 1.8,0 1.7,0 1.7,0 1.8,0 1.7,0 1.7,0 1.8,0 1.7,0 1.7,0 1.8,0 1.7,0 1.7,0 1.8,0 1.7,0 1.7,0 1.8,0 1.7,0 1.7,0 1.8,0 1.7,0 1.7,0 1.8,0 1.7,0 1.7,0 1.8,0 1.7,0 1.7,0 1.8,0 1.7,0 1.7,0 1.7,0 1.8,0 1.7,0 1.7,0 1.8,0 1.7,0 1.7,0 1.8,0 1.7,0 1.7,0 1.8,0 1.7,0 1.7,0 1.8,0 1.7,0 1.7,0 1.8,0 1.7,0 1.7,0 1.8,0 1.7,0 1.7,0 1.8,0 1.7,0 1.7,0 1.8,0 1.7,0 1.7,0 1.8,0 1.7,0 1.7,0 1.8,0 1.7,0 1.7,0 1.8,0 1.7,0 1.7,0 1.7,0 1.8,0 1.7,0 1.7,0 1.8,0 1.7,0 1.7,0 1.8,0 1.7,0 1.7,0 1.8,0 1.7,0 1.7,0 1.8,0 1.7,0 1.7,0 1.8,0 1.7,0 1.7,0 1.8,0 1.7,0 1.7,0 1.8,0 1.7,0 1.7,0 1.8,0 1.7,0 1.7,0 1.8,0 1.7,0 1.7,0 1.8,0 1.7,0 1.7,0 1.7,0 1.8,0 1.7,0 1.7,0 1.8,0 1.7,0 1.7,0 1.8,0 1.7,0 1.7,0 1.8,0 1.7,0 1.7,0 1.8,0 1.7,0 1.7,0 1.8,0 1.7,0 1.7,0 1.8,0 1.7,0 1.7,0 1.8,0 1.7,0 1.7,0 1.8,0 1.7,0 1.7,0 1.8,0 1.7,0 1.7,0 1.8-.1 1.7,0 1.7,0 1.8,0 1.7,0 1.7,0 1.7,0 1.8,0 1.7,0 1.7,0 1.8,0 1.7,0 1.7,0 1.8,0 1.7,0 1.7,0 1.8,0 1.7,0 1.7,0 1.8,0 1.7,0 1.7,0 1.8,0 1.7,0 1.7,0 1.8,0 1.7,0 1.7,0 1.8,0 1.7,0 1.7,0 1.8,0 1.7,0 1.7,0 1.8,0 1.7,0 1.7,0 1.8,0 1.7,0 1.7,0 1.7,0 1.8,0 1.7,0 1.7,0 1.8,0 1.7,0 1.7,0 1.8,0 1.7,0 1.7,0 1.8,0 1.7,0 1.7,0 1.8,0 1.7,0 1.7,0 1.8,0 1.7,0 1.7,0 1.8,0 1.7,0 1.7,0 1.8,0 1.7,0 1.7,0 1.8,0 1.7,0 1.7,0 1.8,0 1.7,0 1.7,0 1.8,0 1.7,0 1.7,0 1.8,0 1.7,0 1.7,0 1.7,0 1.8,0 1.7,0 1.7,0 1.8,0 1.7,0 1.7,0 1.8,0 1.7,0 1.7,0 1.8,0 1.7,0 1.7,0 1.8,0 1.7,0 1.7,0 1.8,0 1.7,0 1.7,0 1.8,0 1.7,0 1.7,0 1.8,0 1.7,0 1.7,0 1.8,0 1.7,0 1.7,0 1.8,0 1.7,0 1.7,0 1.8,0 1.7,0 1.7,0 1.8,0 1.7,0 1.7,0 1.7,0 1.8,0 1.7,0 1.7,0 1.8,0 1.7,0 1.7,0 1.8,0 1.7,0 1.7,0 1.8,0 1.7,0 1.7,0 1.8,0 1.7,0 1.7,0 1.8,0 1.7,0 1.7,0 1.8,0 1.7,0 1.7,0 1.8,0 1.7,0 1.7,0 1.8,0 1.7,0 1.7,0 1.8,0 1.7,0 1.7,0 1.8,0 1.7,0 1.7,0 1.7,0 1.8,0 1.7,0 1.7,0 1.8,0 1.7,0 1.7,0 1.8,0 1.7,0 1.7,0 1.8,0 1.7,0 1.7,0 1.8,0 1.7,0 1.7,0 1.8,0 1.7,0 1.7,0 1.8,0 1.7,0 1.7,0 1.8,0 1.7,0 1.7,0 1.8,0 1.7,0 1.7,0 1.8,0 1.7,0 1.7,0 1.8,0 1.7,0 1.7,0 1.8,0 1.7,0 1.7,0 1.7,0 1.8,0 1.7,0 1.7,0 1.8,0 1.7,0 1.7,0 1.8,0 1.7,0 1.7,0 1.8,0 1.7,0 1.7,0 1.8,0 1.7,0 1.7,0 1.8,0 1.7,0 1.7,0 1.8,0 1.7,0 1.7,0 1.8,0 1.7,0 1.7,0 1.8,0 1.7,0 1.7,0 1.8,0 1.7-.1 1.7,.1 1.8-.1 1.7,0 1.7,0 1.7,.1 1.8,0 1.7-.1 1.7,.1 1.8-.1 1.7,0 1.7,0 1.8,.1 1.7-.1 1.7,0 1.8,0 1.7,0 1.7,0 1.8,0 1.7,0 1.7,0 1.8,0 1.7,0 1.7,0 1.8,0 1.7,0 1.7,0 1.8,0 1.7,0 1.7,0 1.8,0 1.7,0 1.7,0 1.8,0 1.7,0 1.7,0 1.8,0 1.7,0 1.7,0 1.8,0 1.7,0 1.7,0 1.7,0 1.8,0 1.7,0 1.7,0 1.8,0 1.7,0 1.7,0 1.8,0 1.7,0 1.7,0 1.8,0 1.7,0 1.7,0 1.8,0 1.7,0 1.7,0 1.8,0 1.7,0 1.7,0 1.8,0 1.7,0 1.7,0 1.8,0 1.7,0 1.7,0 1.8,0 1.7,0 1.7,0 1.8,0 1.7,0 1.7,0 1.8,0 1.7,0 1.7,0 1.8,0 1.7,0 1.7,0 1.7,0 1.8,0 1.7,0 1.7,0 1.8,0 1.7,0 1.7,0 1.8,0 1.7,0 1.7,0 1.8,0 1.7,0 1.7,0 1.8,0 1.7,0 1.7,0 1.8,0 1.7,0 1.7,0 1.8,0 1.7,0 1.7,0 1.8,0 1.7,0 1.7,0 1.8,0 1.7,0 1.7,0 1.8,0 1.7,0 1.7,0 1.8,0 1.7,0 1.7,0 1.7,0 1.8,0 1.7,0 1.7,0 1.8,0 1.7,0 1.7,0 1.8,0 1.7,0 1.7,0 1.8,0 1.7,0 1.7,0 1.8,0 1.7,0 1.7,0 1.8,0 1.7,0 1.7,0 1.8,0 1.7,0 1.7,0 1.8,0 1.7,0 1.7,0 1.8,0 1.7,0 1.7,0 1.8,0 1.7,0 1.7,0 1.8,0 1.7,0 1.7,0 1.8,0 1.7,0 1.7,0 1.7,0 1.8,0 1.7,0 1.7,0 1.8,0 1.7,0 1.7,0 1.8,0 1.7,0 1.7,0 1.8,0 1.7,0 1.7,0 1.8,0 1.7,0 1.7,0 1.8,0 1.7,0 1.7,0 1.8,0 1.7,0 1.7,0 1.8,0 1.7,0 1.7,0 1.8,0 1.7,0 1.7,0 1.8,0 1.7,0 1.7,0 1.8,0 1.7,0 1.7,0 1.7,0 1.8,0 1.7,0 1.7,0 1.8,0 1.7,0 1.7,0 1.8,0 1.7,0 1.7,0 1.8,0 1.7,0 1.7,0 1.8,0 1.7,0 1.7-.1 1.8,0 1.7,0 1.7,.1 1.8,0 1.7,0 1.7,0 1.8,0 1.7,0 1.7,0 1.8,0 1.7-.1 1.7,0 1.8,0 1.7,.1 1.7,0 1.8,0 1.7,0 1.7-.1 1.8,0 1.7,0 1.7,0 1.7,0 1.8,.1 1.7,0 1.7-.1 1.8,0 1.7,0 1.7,.1 1.8,0 1.7-.1 1.7,0 1.8,.1 1.7,0 1.7-.1 1.8,0 1.7,0 1.7,.1 1.8,0 1.7,0 1.7,0 1.8-.1 1.7,.1 1.7-.1 1.8,0 1.7,0 1.7,0 1.8,0 1.7,0 1.7,.1 1.8-.1 1.7,0 1.7,0 1.8,0 1.7,0 1.7,0 1.7,0 1.8,0 1.7,0 1.7,0 1.8,0 1.7,0 1.7,0 1.8,0 1.7,0 1.7,0 1.8,0 1.7,0 1.7,0 1.8,0 1.7,0 1.7,0 1.8,0 1.7,0 1.7,0 1.8,0 1.7,0 1.7,0 1.8,0 1.7,0 1.7,0 1.8,0 1.7,0 1.7,0 1.8,0 1.7,0 1.7,0 1.8,0 1.7,0 1.7,0 1.8,0 1.7,0 1.7,0 1.7,0 1.8,0 1.7,0 1.7,0 1.8,0 1.7,0 1.7,0 1.8,0 1.7,0 1.7,0 1.8,0 1.7,0 1.7,0 1.8,0 1.7,0 1.7,0 1.8,0 1.7,0 1.7,0 1.8,0 1.7,0 1.7,0 1.8,0 1.7,0 1.7,0 1.8,0 1.7,0 1.7,0 1.8,0 1.7,0 1.7,0 1.8,0 1.7,0 1.7,0 1.8,0 1.7,0 1.7,0 1.7,0 1.8,0 1.7,0 1.7,0 1.8,0 1.7,0 1.7,0 1.8,0 1.7,0 1.7,0 1.8,0 1.7,0 1.7,0 1.8,0 1.7,0 1.7,0 1.8,0 1.7,0 1.7,0 1.8,0 1.7,0 1.7,0 1.8,0 1.7,0 1.7,0 1.8,0 1.7,0 1.7,0 1.8,0 1.7,0 1.7,0 1.8,0 1.7,0 1.7,0 1.7,0 1.8,0 1.7,0 1.7,0 1.8,0 1.7,0 1.7,0 1.8,0 1.7,0 1.7,0 1.8,0 1.7,0 1.7,0 1.8,0 1.7,0 1.7,0 1.8,0 1.7,0 1.7,0 1.8,0 1.7,0 1.7,0 1.8,0 1.7,0 1.7,0 1.8,0 1.7,0 1.7-.3 1.8,0 1.7,0 1.7,0 1.8,0 1.7,0 1.7,0 1.8,0 1.7,0 1.7,0 1.7,0 1.8,0 1.7,0 1.7,0 1.8-.1 1.7,.1 1.7-.1 1.8,.1 1.7,0 1.7,0 1.8,0 1.7,0 1.7,0 1.8,0 1.7,0 1.7,0 1.8,0 1.7-.1 1.7,0 1.8,.1 1.7,0 1.7,0 1.8-.1 1.7,0 1.7,0 1.8,0 1.7,0 1.7,0 1.8,0 1.7,0 1.7,0 1.8,0 1.7,0 1.7,0 1.7,0 1.8,0 1.7,0 1.7,0 1.8,0 1.7,0 1.7,0 1.8,0 1.7,0 1.7,0 1.8,0 1.7,0 1.7,0 1.8,0 1.7,0 1.7,0 1.8,0 1.7,0 1.7,0 1.8,0 1.7,0 1.7,0 1.8,0 1.7,0 1.7,0 1.8,0 1.7,0 1.7,0 1.8,0 1.7,0 1.7,0 1.8,0 1.7,0 1.7,0 1.8,0 1.7,0 1.7,0 1.7-.1 1.8,.1 1.7,0 1.7-.1 1.8,0 1.7,.1 1.7-.1 1.8,0 1.7,0 1.7,0 1.8,0 1.7,0 1.7,0 1.8,0 1.7,0 1.7,0 1.8,0 1.7,0 1.7,0 1.8,0 1.7,0 1.7,0 1.8,0 1.7,0 1.7,0 1.8,0 1.7,0 1.7,0 1.8,0 1.7,0 1.7,0 1.8,0 1.7,0 1.7,0 1.7,0 1.8,0 1.7-.1 1.7,0 1.8,.1 1.7,0 1.7-.1 1.8,.1 1.7,0 1.7,0 1.8,0 1.7,0 1.7,0 1.8,0 1.7,0 1.7,0 1.8,0 1.7,0 1.7,0 1.8,0 1.7,0 1.7,0 1.8,0 1.7-.1 1.7,0 1.8,0 1.7,0 1.7,0 1.8,0 1.7,0 1.7,0 1.8,0 1.7,0 1.7,0 1.8,0 1.7,0 1.7,0 1.7,0 1.8,0 1.7,0 .3,0 0,1 -.3,0 -1.7,0 -1.8,0 -1.7,0 -1.7,0 -1.7,0 -1.8,0 -1.7,0 -1.7,0 -1.8,0 -1.7,0 -1.7,0 -1.8,0 -1.7,0 -1.7,0 -1.8,0 -1.7,0 -1.7,0 -1.8,0 -1.7,0 -1.7,0 -1.8,0 -1.7,0 -1.7,0 -1.8,0 -1.7,0 -1.7,0 -1.8,0 -1.7,0 -1.7,0 -1.8,0 -1.7,0 -1.7,0 -1.8,0 -1.7,0 -1.7,0 -1.8,0 -1.7,0 -1.7,0 -1.8,0 -1.7,0 -1.7,0 -1.7,0 -1.8,0 -1.7,0 -1.7,0 -1.8,0 -1.7,0 -1.7,0 -1.8,0 -1.7,0 -1.7,0 -1.8,0 -1.7,0 -1.7,0 -1.8,0 -1.7,0 -1.7,0 -1.8,0 -1.7,0 -1.7,0 -1.8,0 -1.7,0 -1.7,0 -1.8,0 -1.7,0 -1.7,0 -1.8,0 -1.7,0 -1.7,0 -1.8,0 -1.7,0 -1.7,0 -1.8,0 -1.7,0 -1.7,0 -1.7,0 -1.8,0 -1.7,0 -1.7,0 -1.8,0 -1.7,0 -1.7,0 -1.8,0 -1.7,0 -1.7,0 -1.8,0 -1.7,0 -1.7,0 -1.8,0 -1.7,0 -1.7,0 -1.8,0 -1.7,0 -1.7,0 -1.8,0 -1.7,0 -1.7,0 -1.8,0 -1.7,0 -1.7,0 -1.8,0 -1.7,0 -1.7,0 -1.8,0 -1.7,0 -1.7,0 -1.8,0 -1.7,0 -1.7,0 -1.8,0 -1.7,0 -1.7,0 -1.7,0 -1.8,0 -1.7,0 -1.7,0 -1.8,0 -1.7,0 -1.7,0 -1.8,0 -1.7,0 -1.7,0 -1.8,0 -1.7,0 -1.7,0 -1.8,0 -1.7,0 -1.7,0 -1.8,0 -1.7,0 -1.7,0 -1.8,0 -1.7,0 -1.7,0 -1.8,0 -1.7,0 -1.7,0 -1.8,0 -1.7,0 -1.7,0 -1.8,0 -1.7,0 -1.7,0 -1.8,0 -1.7,0 -1.7,0 -1.7,0 -1.8,0 -1.7,0 -1.7,0 -1.8,0 -1.7,0 -1.7,0 -1.8,0 -1.7,0 -1.7,0 -1.8,0 -1.7,0 -1.7,0 -1.8,0 -1.7,0 -1.7,0 -1.8,0 -1.7,0 -1.7,0 -1.8,0 -1.7,0 -1.7,0 -1.8,0 -1.7,0 -1.7,0 -1.8,0 -1.7,0 -1.7,0 -1.8,0 -1.7,0 -1.7,0 -1.8,0 -1.7,0 -1.7,0 -1.8,0 -1.7,0 -1.7,0 -1.7,0 -1.8,0 -1.7,0 -1.7,0 -1.8,0 -1.7,0 -1.7,0 -1.8,0 -1.7,0 -1.7,0 -1.8,0 -1.7,0 -1.7,0 -1.8,0 -1.7,0 -1.7,0 -1.8,0 -1.7,0 -1.7,0 -1.8,0 -1.7,0 -1.7,0 -1.8,0 -1.7,0 -1.7,0 -1.8,0 -1.7,0 -1.7,0 -1.8,0 -1.7,0 -1.7,0 -1.8,0 -1.7,0 -1.7,0 -1.7,0 -1.8,0 -1.7,0 -1.7,0 -1.8,0 -1.7,0 -1.7,0 -1.8,0 -1.7,0 -1.7,0 -1.8,0 -1.7,0 -1.7,0 -1.8,0 -1.7,0 -1.7,0 -1.8,0 -1.7,0 -1.7,0 -1.8,0 -1.7,0 -1.7,0 -1.8,0 -1.7,0 -1.7,0 -1.8,0 -1.7,0 -1.7,0 -1.8,0 -1.7,0 -1.7,0 -1.8,0 -1.7,0 -1.7,0 -1.8,0 -1.7,0 -1.7,0 -1.7,0 -1.8,0 -1.7,0 -1.7,0 -1.8,0 -1.7,0 -1.7,0 -1.8,0 -1.7,0 -1.7,0 -1.8,0 -1.7,0 -1.7,0 -1.8,0 -1.7,0 -1.7,0 -1.8,0 -1.7,0 -1.7,0 -1.8,0 -1.7,0 -1.7,0 -1.8,0 -1.7,0 -1.7,0 -1.8,0 -1.7,0 -1.7,0 -1.8,0 -1.7,0 -1.7,0 -1.8,0 -1.7,0 -1.7,0 -1.8,0 -1.7,0 -1.7,0 -1.7,0 -1.8,0 -1.7,0 -1.7,0 -1.8,0 -1.7,0 -1.7,0 -1.8,0 -1.7,0 -1.7,0 -1.8,0 -1.7,0 -1.7,0 -1.8,0 -1.7,0 -1.7,0 -1.8,0 -1.7,0 -1.7,0 -1.8,0 -1.7,0 -1.7,0 -1.8,0 -1.7,0 -1.7,0 -1.8,0 -1.7,0 -1.7,0 -1.8,0 -1.7,0 -1.7,0 -1.8,0 -1.7,0 -1.7,0 -1.7,0 -1.8,0 -1.7,0 -1.7,0 -1.8,0 -1.7,0 -1.7,0 -1.8,0 -1.7,0 -1.7,0 -1.8,0 -1.7,0 -1.7,0 -1.8,0 -1.7,0 -1.7,0 -1.8,0 -1.7,0 -1.7,0 -1.8,0 -1.7,0 -1.7,0 -1.8,0 -1.7,0 -1.7,0 -1.8,0 -1.7,0 -1.7,0 -1.8,0 -1.7,0 -1.7,0 -1.8,0 -1.7,0 -1.7,0 -1.8,0 -1.7,0 -1.7,0 -1.7,0 -1.8,0 -1.7,0 -1.7,0 -1.8,0 -1.7,0 -1.7,0 -1.8,0 -1.7,0 -1.7,0 -1.8,0 -1.7,0 -1.7,0 -1.8,0 -1.7,0 -1.7,0 -1.8,0 -1.7,0 -1.7,0 -1.8,0 -1.7,0 -1.7,0 -1.8,0 -1.7,0 -1.7,0 -1.8,0 -1.7,0 -1.7,0 -1.8,0 -1.7,0 -1.7,0 -1.8,0 -1.7,0 -1.7,0 -1.7,0 -1.8,0 -1.7,0 -1.7,0 -1.8,0 -1.7,0 -1.7,0 -1.8,0 -1.7,0 -1.7,0 -1.8,0 -1.7,0 -1.7,0 -1.8,0 -1.7,0 -1.7,0 -1.8,0 -1.7,0 -1.7,0 -1.8,0 -1.7,0 -1.7,0 -1.8,0 -1.7,0 -1.7,0 -1.8,0 -1.7,0 -1.7,0 -1.8,0 -1.7,0 -1.7,0 -1.8,0 -1.7,0 -1.7,0 -1.8,0 -1.7,0 -1.7,0 -1.7,0 -1.8,0 -1.7,0 -1.7,0 -1.8,0 -1.7,0 -1.7,0 -1.8,0 -1.7,0 -1.7,0 -1.8,0 -1.7,0 -1.7,0 -1.8,0 -1.7,0 -1.7,0 -1.8,0 -1.7,0 -1.7,0 -1.8,0 -1.7,0 -1.7,0 -1.8,0 -1.7,0 -1.7,0 -1.8,0 -1.7,0 -1.7,0 -1.8,0 -1.7,0 -1.7,0 -1.8,0 -1.7,0 -1.7,0 -1.7,0 -1.8,0 -1.7,0 -1.7,0 -1.8,0 -1.7,0 -1.7,0 -1.8,0 -1.7,0 -1.7,0 -1.8,0 -1.7,0 -1.7,0 -1.8,0 -1.7,0 -1.7,0 -1.8,0 -1.7,0 -1.7,0 -1.8,0 -1.7,0 -1.7,0 -1.8,0 -1.7,0 -1.7,0 -1.8,0 -1.7,0 -1.7,0 -1.8,0 -1.7,0 -1.7,0 -1.8,0 -1.7,0 -1.7,0 -1.8,0 -1.7,0 -1.7,0 -1.7,0 -1.8,0 -1.7,0 -1.7,0 -1.8,0 -1.7,0 -1.7,0 -1.8,0 -1.7,0 -1.7,0 -1.8,0 -1.7,0 -1.7,0 -1.8,0 -1.7,0 -1.7,0 -1.8,0 -1.7,0 -1.7,0 -1.8,0 -1.7,0 -1.7,0 -1.8,0 -1.7,0 -1.7,0 -1.8,0 -1.7,0 -1.7,0 -1.8,0 -1.7,0 -1.7,0 -1.8,0 -1.7,0 -1.7,0 -1.8,0 -1.7,0 -1.7,0 -1.7,0 -1.8,0 -1.7,0 -1.7,0 -1.8,0 -1.7,0 -1.7,0 -1.8,0 -1.7,0 -1.7,0 -1.8,0 -1.7,0 -1.7,0 -1.8,0 -1.7,0 -1.7,0 -1.8,0 -1.7,0 -1.7,0 -1.8,0 -1.7,0 -1.7,0 -1.8,0 -1.7,0 -1.7,0 -1.8,0 -1.7,0 -1.7,0 -1.8,0 -1.7,0 -1.7,0 -1.8,0 -1.7,0 -1.7,0 -1.7,0 -1.8,0 -1.7,0 -1.7,0 -1.8,0 -1.7,0 -1.7,0 -1.8,0 -1.7,0 -1.7,0 -1.8,0 -1.7,0 -1.7,0 -1.8,0 -1.7,0 -1.7,0 -1.8,0 -1.7,0 -1.7,0 -1.8,0 -1.7,0 -1.7,0 -1.8,0 -1.7,0 -1.7,0 -1.8,0 -1.7,0 -1.7,0 -1.8,0 -1.7,0 -1.7,0 -1.8,0 -1.7,0 -1.7,0 -1.8,0 -1.7,0 -1.7,0 -1.7,0 -1.8,0 -1.7,0 -1.7,0 -1.8,0 -1.7,0 -1.7,0 -1.8,0 -1.7,0 -1.7,0 -1.8,0 -1.7,0 -1.7,0 -1.8,0 -1.7,0 -1.7,0 -1.8,0 -1.7,0 -1.7,0 -1.8,0 -1.7,0 -1.7,0 -1.8,0 -1.7,0 -1.7,0 -1.8,0 -1.7,0 -1.7,0 -1.8,0 -1.7,0 -1.7,0 -1.8,0 -1.7,0 -1.7,0 -1.7,0 -1.8,0 -1.7,0 -1.7,0 -1.8,0 -1.7,0 -1.7,0 -1.8,0 -1.7,0 -1.7,0 -1.8,0 -1.7,0 -1.7,0 -1.8,0 -1.7,0 -1.7,0 -1.8,0 -1.7,0 -1.7,0 -1.8,0 -1.7,0 -1.7,0 -1.8,0 -1.7,0 -1.7,0 -1.8,0 -1.7,0 -1.7,0 -1.8,0 -1.7,0 -1.7,0 -1.8,0 -1.7,0 -1.7,0 -1.8,0 -1.7,0 -1.7,0 -1.7,0 -1.8,0 -1.7,0 -1.7,0 -1.8,0 -1.7,0 -1.7,0 -1.8,0 -1.7,0 -1.7,0 -1.8,0 -1.7,0 -1.7,0 -1.8,0 -1.7,0 -1.7,0 -1.8,0 -1.7,0 -1.7,0 -1.8,0 -1.7,0 -1.7,0 -1.8,0 -1.7,0 -1.7,0 -1.8,0 -1.7,0 -1.7,0 -1.8,0 -1.7,0 -1.7,0 -1.8,0 -1.7,0 -1.7,0 -1.8,0 -1.7,0 -1.7,0 -1.7,0 -1.8,0 -1.7,0 -1.7,0 -1.8,0 -1.7,0 -1.7,0 -1.8,0 -1.7,0 -1.7,0 -1.8,0 -1.7,0 -1.7,0 -1.8,0 -1.7,0 -1.7,0 -1.8,0 -1.7,0 -1.7,0 -1.8,0 -1.7,0 -1.7,0 -1.8,0 -1.7,0 -1.7,0 -1.8,0 -1.7,0 -1.7,0 -1.8,0 -1.7,0 -1.7,0 -1.8,0 -1.7,0 -1.7,0 -1.7,0 -1.8,0 -1.7,0 -1.7,0 -1.8,0 -1.7,0 -1.7,0 -1.8,0 -1.7,0 -1.7,0 -1.8,0 -1.7,0 -1.7,0 -1.8,0 -1.7,0 -1.7,0 -1.8,0 -1.7,0 -1.7,0 -1.8,0 -1.7,0 -1.7,0 -1.8,0 -1.7,0 -1.7,0 -1.8,0 -1.7,0 -1.7,0 -1.8,0 -1.7,0 -1.7,0 -1.8,0 -1.7,0 -1.7,0 -1.8,0 -1.7,0 -1.7,0 -1.7,0 -1.8,0 -1.7,0 -1.7,0 -1.8,0 -1.7,0 -1.7,0 -1.8,0 -1.7,0 -1.7,0 -1.8,0 -1.7,0 -1.7,0 -1.8,0 -1.7,0 -1.7,0 -1.8,0 -1.7,0 -1.7,0 -1.8,0 -1.7,0 -1.7,0 -1.8,0 -1.7,0 -1.7,0 -1.8,0 -1.7,0 -1.7,0 -1.8,0 -1.7,0 -1.7,0 -1.8,0 -1.7,0 -1.7,0 -1.7,0 -1.8,0 -1.7,0 -1.7,0 -1.8,0 -1.7,0 -1.7,0 -1.8,0 -1.7,0 -1.7,0 -1.8,0 -1.7,0 -1.7,0 -1.8,0 -1.7,0 -1.7,0 -1.8,0 -1.7,0 -1.7,0 -1.8,0 -1.7,0 -1.7,0 -1.8,0 -1.7,0 -1.7,0 -1.8,0 -1.7,0 -1.7,0 -1.8,0 -1.7,0 -1.7,0 -1.8,0 -1.7,0 -1.7,0 -1.8,0 -1.7,0 -1.7,0 -1.7,0 -1.8,0 -1.7,0 -1.7,0 -1.8,0 -1.7,0 -1.7,0 -1.8,0 -1.7,0 -1.7,0 -1.8,0 -1.7,0 -1.7,0 -1.8,0 -1.7,0 -1.7,0 -1.8,0 -1.7,0 -1.7,0 -1.8,0 -1.7,0 -1.7,0 -1.8,0 -1.7,0 -1.7,0 -1.8,0 -1.7,0 -1.7,0 -1.8,0 -1.7,0 -1.7,0 -1.8,0 -1.7,0 -1.7,0 -1.7,0 -1.8,0 -1.7,0 -1.7,0 -1.8,0 -1.7,0 -1.7,0 -1.8,0 -1.7,0 -1.7,0 -1.8,0 -1.7,0 -1.7,0 -1.8,0 -1.7,0 -1.7,0 -1.8,0 -1.7,0 -1.7,0 -1.8,0 -1.7,0 -1.7,0 -1.8,0 -1.7,0 -1.7,0 -1.8,0 -1.7,0 -1.7,0 -1.8,0 -1.7,0 -1.7,0 -1.8,0 -1.7,0 -1.7,0 -1.8,0 -1.7,0 -1.7,0 -1.7,0 -1.8,0 -1.7,0 -1.7,0 -1.8,0 -1.7,0 -1.7,0 -1.8,0 -1.7,0 -1.7,0 -1.8,0 -1.7,0 -1.7,0 -1.8,0 -1.7,0 -1.7,0 -1.8,0 -1.7,0 -1.7,0 -1.8,0 -1.7,0 -1.7,0 -1.8,0 -1.7,0 -1.7,0 -1.8,0 -1.7,0 -1.7,0 -1.8,0 -1.7,0 -1.7,0 -1.8,0 -1.7,0 -1.7,0 -1.8,0 -1.7,0 -1.7,0 -1.7,0 -1.8,0 -1.7,0 -1.7,0 -1.8,0 -1.7,0 -1.7,0 -1.8,0 -1.7,0 -1.7,0 -1.8,0 -1.7,0 -1.7,0 -1.8,0 -1.7,0 -1.7,0 -1.8,0 -1.7,0 -1.7,0 -1.8,0 -1.7,0 -1.7,0 -1.8,0 -1.7,0 -1.7,0 -1.8,0 -1.7,0 -1.7,0 -1.8,0 -1.7,0 -1.7,0 -1.8,0 -1.7,0 -1.7,0 -1.7,0 -1.8,0 -1.7,0 -1.7,0 -1.8,0 -1.7,0 -1.7,0 -1.8,0 -1.7,0 -1.7,0 -1.8,0 -1.7,0 -1.7,0 -1.8,0 -1.7,0 -1.7,0 -1.8,0 -1.7,0 -1.7,0 -1.8,0 -1.7,0 -1.7,0 -1.8,0 -1.7,0 -1.7,0 -1.8,0 -1.7,0 -1.7,0 -1.8,0 -1.7,0 -1.7,0 -1.8,0 -1.7,0 -1.7,0 -1.8,0 -1.7,0 -1.7,0 -1.7,0 -1.8,0 -1.7,0 -1.7,0 -1.8,0 -1.7,0 -1.7,0 -1.8,0 -1.7,0 -1.7,0 -1.8,0 -1.7,0 -1.7,0 -1.8,0 -1.7,0 -1.7,0 -1.8,0 -1.7,0 -1.7,0 -1.8,0 -1.7,0 -1.7,0 -1.8,0 -1.7,0 -1.7,0 -1.8,0 -1.7,0 -1.7,0 -1.8,0 -1.7,0 -1.7,0 -1.8,0 -1.7,0 -1.7,0 -1.7,0 -1.8,0 -1.7,0 -1.7,0 -1.8,0 -1.7,0 -1.7,0 -1.8,0 -1.7,0 -1.7,0 -1.8,0 -1.7,0 -1.7,0 -1.8,0 -1.7,0 -1.7,0 -1.8,0 -1.7,0z" fill="url(#g9)"/>
<path d="M157.7,791.1l1.7-.2 1.8-.3 1.7-.1 1.7,0 1.8-.2 1.7-.3 1.7-.1 1.8,0 1.7,0 1.7-.4 1.8-.2 1.7-.2 1.7-.1 1.8-.3 1.7-.2 1.7-.1 1.8-.1 1.7-.2 1.7-.3 1.7,0 1.8,.1 1.7,0 1.7,.1 1.8-.1 1.7,0 1.7,0 1.8-.1 1.7-.1 1.7-.1 1.8,.1 1.7,0 1.7,.1 1.8,0 1.7-.2 1.7-.1 1.8-.3 1.7,.1 1.7,.1 1.8,.2 1.7-.1 1.7,.2 1.8-.3 1.7,.1 1.7-.1 1.8,.2 1.7-.1 1.7,.1 1.8-.3 1.7,0 1.7,0 1.8,.2 1.7-.2 1.7,0 1.7,0 1.8-.1 1.7,0 1.7,0 1.8,0 1.7,0 1.7,0 1.8,0 1.7-.2 1.7-.1 1.8,.2 1.7-.1 1.7-.2 1.8-.1 1.7,0 1.7,0 1.8,0 1.7,.2 1.7,0 1.8,0 1.7,0 1.7-.2 1.8-.1 1.7-.2 1.7,0 1.8,.1 1.7-.1 1.7,.1 1.8-.2 1.7-.2 1.7,0 1.8,.2 1.7,0 1.7,.1 1.8-.1 1.7-.1 1.7-.1 1.7,0 1.8,0 1.7,.2 1.7,.1 1.8-.1 1.7-.2 1.7-.2 1.8,0 1.7,0 1.7,0 1.8,0 1.7-.1 1.7,0 1.8,.3 1.7-.1 1.7,0 1.8,0 1.7-.1 1.7,0 1.8,0 1.7,.2 1.7-.1 1.8,0 1.7-.1 1.7,.1 1.8-.2 1.7,0 1.7,0 1.8-.1 1.7,0 1.7,.1 1.8-.1 1.7,0 1.7,0 1.7-.4 1.8,.1 1.7,.1 1.7,.2 1.8-.1 1.7-.1 1.7,.1 1.8,.1 1.7,.2 1.7-.2 1.8,.1 1.7-.3 1.7-.1 1.8-.1 1.7-.1 1.7,.1 1.8,.1 1.7,0 1.7,0 1.8-.1 1.7-.1 1.7,.2 1.8-.2 1.7,.1 1.7,.2 1.8-.2 1.7,.2 1.7-.2 1.8-.1 1.7-.2 1.7,0 1.8,.1 1.7,.1 1.7-.1 1.8,0 1.7,0 1.7,0 1.7,.1 1.8-.4 1.7,.1 1.7,0 1.8,.1 1.7,.2 1.7-.1 1.8,.1 1.7,0 1.7,.1 1.8-.1 1.7-.2 1.7-.1 1.8,.3 1.7-.1 1.7-.1 1.8,0 1.7,.1 1.7-.1 1.8,0 1.7,.1 1.7-.1 1.8,.1 1.7-.2 1.7-.1 1.8,.1 1.7-.1 1.7-.1 1.8,0 1.7,.2 1.7-.1 1.8,0 1.7-.1 1.7,.1 1.8-.1 1.7-.1 1.7,.1 1.7,0 1.8,.1 1.7,0 1.7,0 1.8,.1 1.7-.1 1.7-.1 1.8,.1 1.7-.2 1.7,.1 1.8-.2 1.7-.2 1.7,.1 1.8,0 1.7-.1 1.7,0 1.8-.1 1.7,0 1.7,0 1.8-.1 1.7,.2 1.7-.1 1.8-.1 1.7,.1 1.7,.1 1.8,0 1.7-.3 1.7-.1 1.8,.3 1.7,.2 1.7-.1 1.8-.2 1.7,0 1.7,.2 1.7-.2 1.8,0 1.7-.1 1.7,0 1.8,.1 1.7-.1 1.7-.3 1.8,0 1.7,.1 1.7-.2 1.8,.1 1.7,0 1.7,.1 1.8-.1 1.7,.1 1.7-.1 1.8-.1 1.7-.1 1.7,.1 1.8,0 1.7-.1 1.7-.1 1.8,.1 1.7,.1 1.7,0 1.8,.1 1.7,0 1.7,0 1.8-.1 1.7-.2 1.7,.1 1.8,0 1.7,.2 1.7,0 1.8-.1 1.7-.2 1.7-.1 1.7,.1 1.8-.1 1.7,.1 1.7-.1 1.8-.1 1.7,.1 1.7,0 1.8,.2 1.7,.2 1.7-.2 1.8-.3 1.7-.1 1.7,0 1.8,.1 1.7,0 1.7-.2 1.8-.2 1.7-.2 1.7-.5 1.8-.4 1.7-.2 1.7,0 1.8-.1 1.7,0 1.7-.1 1.8,.1 1.7-.1 1.7,.1 1.8,0 1.7,0 1.7-.2 1.8-.2 1.7-.1 1.7,.1 1.7,.2 1.8,.2 1.7-.1 1.7,0 1.8,0 1.7,.2 1.7-.1 1.8,.2 1.7,.1 1.7-.1 1.8,0 1.7,.1 1.7-.2 1.8,.1 1.7-.1 1.7,.2 1.8,.2 1.7-.4 1.7,.2 1.8-.1 1.7,.1 1.7,.2 1.8,0 1.7,.1 1.7-.2 1.8,.1 1.7,.2 1.7-.1 1.8,0 1.7-.1 1.7,.1 1.8,0 1.7,.2 1.7,0 1.8-.1 1.7,0 1.7,0 1.7-.1 1.8,0 1.7,.2 1.7,.2 1.8-.2 1.7-.2 1.7,.2 1.8,.2 1.7,.1 1.7-.1 1.8,0 1.7,.2 1.7,0 1.8,.1 1.7,.1 1.7,.2 1.8-.1 1.7,0 1.7,0 1.8,.3 1.7,0 1.7,0 1.8-.2 1.7-.1 1.7-.2 1.8,.1 1.7-.4 1.7-.2 1.8,0 1.7,0 1.7,.1 1.8-.1 1.7,.1 1.7-.1 1.7-.3 1.8-.1 1.7,0 1.7,0 1.8-.1 1.7,0 1.7-.6 1.8,.1 1.7-.2 1.7-.1 1.8-.2 1.7-.5 1.7-1.2 1.8-1.5 1.7-.8 1.7-.1 1.8-.1 1.7,0 1.7-.1 1.8,0 1.7-.3 1.7-.1 1.8-.2 1.7-.1 1.7-.3 1.8-.2 1.7,.2 1.7-.3 1.8-.2 1.7-.2 1.7,0 1.8-.1 1.7,0 1.7-.3 1.8-.1 1.7-.2 1.7-.5 1.7-.1 1.8-.5 1.7,0 1.7,.1 1.8-.2 1.7-.2 1.7,0 1.8,0 1.7,0 1.7,.1 1.8-.2 1.7,.1 1.7,.1 1.8-.3 1.7-.1 1.7-.2 1.8,.1 1.7,.1 1.7-.1 1.8,.3 1.7-.1 1.7-.2 1.8-.2 1.7-.3 1.7-.5 1.8-.7 1.7-.3 1.7-.5 1.8-.3 1.7,0 1.7,0 1.8-.1 1.7-.5 1.7-.4 1.8,0 1.7,.6 1.7-.4 1.7-.1 1.8-.6 1.7-.1 1.7,.2 1.8-.3 1.7,0 1.7-.2 1.8,0 1.7,0 1.7-.2 1.8-.2 1.7,.1 1.7,.1 1.8-.3 1.7-.2 1.7-.1 1.8,0 1.7-.2 1.7-.1 1.8-.3 1.7-.2 1.7-.2 1.8,.1 1.7-.1 1.7,.1 1.8,0 1.7,0 1.7-.1 1.8-.2 1.7-.7 1.7,.1 1.8-.1 1.7-.4 1.7-.1 1.7,.4 1.8-.2 1.7,.2 1.7-.6 1.8,.2 1.7-.1 1.7,.1 1.8-.2 1.7,0 1.7-.2 1.8-.1 1.7,.2 1.7-.4 1.8-.2 1.7,0 1.7,.1 1.8-.1 1.7-.3 1.7-.4 1.8,.2 1.7,.1 1.7,0 1.8,.1 1.7,0 1.7,.1 1.8-.5 1.7-.2 1.7-.2 1.8,.4 1.7-.4 1.7-.3 1.8,0 1.7,.5 1.7-.4 1.8-.4 1.7-.2 1.7-.1 1.7,.3 1.8-.1 1.7-.3 1.7-.6 1.8,.4 1.7,0 1.7-.3 1.8,.1 1.7-.3 1.7,.1 1.8,.1 1.7,0 1.7,.3 1.8,.1 1.7-.5 1.7-.4 1.8,0 1.7,0 1.7-.2 1.8-.4 1.7,.1 1.7,.2 1.8-.2 1.7,.1 1.7,.3 1.8-.2 1.7-.3 1.7-.3 1.8,0 1.7-.1 1.7-.2 1.8-.6 1.7,0 1.7-.2 1.7-.1 1.8-.5 1.7-.2 1.7,0 1.8,.1 1.7-.5 1.7-.1 1.8,0 1.7-.5 1.7,.1 1.8-.8 1.7-.4 1.7,0 1.8,0 1.7-.2 1.7-.2 1.8,.7 1.7-.6 1.7-.1 1.8-.1 1.7-.6 1.7-.2 1.8,0 1.7-.3 1.7,.2 1.8,0 1.7-.7 1.7-.1 1.8,0 1.7-.2 1.7,.1 1.8-.3 1.7-.3 1.7-.4 1.8-.1 1.7,.1 1.7-.1 1.7,0 1.8-1.2 1.7,0 1.7,.3 1.8,.3 1.7-.6 1.7-.3 1.8,.2 1.7,.5 1.7-.1 1.8-.4 1.7,.2 1.7,.1 1.8,.4 1.7,0 1.7-.3 1.8,.2 1.7-.2 1.7-.6 1.8,.1 1.7,.1 1.7,0 1.8,.1 1.7,0 1.7-.3 1.8,.3 1.7,.2 1.7,0 1.8,.2 1.7-.3 1.7-.1 1.8,.4 1.7,.1 1.7,0 1.8-.3 1.7-.3 1.7-.4 1.7-.1 1.8,.4 1.7-.2 1.7-.6 1.8-.3 1.7-.1 1.7-.3 1.8,0 1.7-.1 1.7-.8 1.8-.3 1.7,.1 1.7-.1 1.8,.1 1.7-.8 1.7-1.1 1.8-.6 1.7,.6 1.7-1.4 1.8-1.5 1.7-1.8 1.7-.1 1.8-.1 1.7,.3 1.7,0 1.8-2.1 1.7-3.7 1.7-1.8 1.8-2 1.7-1.8 1.7-1.6 1.8-1.9 1.7-1.4 1.7-1.5 1.7,.1 1.8,.7 1.7-.3 1.7-.4 1.8,1.5 1.7,2.9 1.7-.7 1.8-.8 1.7-1 1.7-.8 1.8-2.1 1.7-.4 1.7-.9 1.8,1.2 1.7-.1 1.7,.9 1.8,.5 1.7,.3 1.7-.8 1.8,1.2 1.7,.8 1.7,0 1.8,1.1 1.7-.2 1.7,1.2 1.8,.2 1.7,.1 1.7-1 1.8-.8 1.7,.1 1.7-1.1 1.8-1 1.7-.9 1.7-1.4 1.8-.6 1.7,.6 1.7,.1 1.7,.7 1.8,.8 1.7,.2 1.7-.4 1.8-.2 1.7-.2 1.7-.1 1.8,.4 1.7-.1 1.7-.4 1.8-.7 1.7,.3 1.7-.2 1.8-.8 1.7-.3 1.7-.7 1.8-.6 1.7-.1 1.7,.3 1.8-1 1.7-1 1.7,.4 1.8-.5 1.7-.4 1.7-.9 1.8-1.2 1.7,.2 1.7,.3 1.8-1.1 1.7-.9 1.7,.3 1.8-.1 1.7,.5 1.7-.1 1.7,.6 1.8,.2 1.7,.8 1.7-.2 1.8,.9 1.7-2.2 1.7-1.5 1.8-1.1 1.7-1.6 1.7-1.8 1.8-.8 1.7-1.7 1.7-1.8 1.8-1.3 1.7-.1 1.7-1.7 1.8-1.6 1.7-1.8 1.7-1.8 1.8-.4 1.7-1.3 1.7-.1 1.8,.4 1.7,.2 1.7,.2 1.8,.5 1.7,.7 1.7-.1 1.8,0 1.7,1.2 1.7,.4 1.8-2 1.7-2.5 1.7-2.6 1.8-4.1 1.7-1.3 1.7-1.3 1.7,.1 1.8-.2 1.7-.5 1.7-.4 1.8-.5 1.7-.8 1.7,.2 1.8-1.1 1.7-.7 1.7-.8 1.8-1.8 1.7-2.2 1.7-.9 1.8-1.4 1.7,.4 1.7-1.2 1.8-1.1 1.7-2.1 1.7-2.8 1.8-1.2 1.7-1 1.7,0 1.8-.2 1.7-1.6 1.7-1 1.8-3.4 1.7-.4 1.7-.4 1.8-2.3 1.7-.2 1.7,.7 1.8-1.3 1.7,0 1.7,.8 1.7-.9 1.8-.5 1.7-.3 1.7-1 1.8-.9 1.7,.5 1.7,1.2 1.8,1.1 1.7-.8 1.7-1.7 1.8-1.7 1.7-.7 1.7-1.2 1.8,.9 1.7-1 1.7,1.2 1.8-.4 1.7-.7 1.7-.4 1.8,.1 1.7,1 1.7-.7 1.8-1.7 1.7,.2 1.7-1.3 1.8,.6 1.7-1 1.7,.4 1.8-.7 1.7-.3 1.7-1 1.8,.5 1.7,.3 1.7-.8 1.8-1.9 1.7-1.5 1.7,.2 1.7-.8 1.8-.8 1.7,.3 1.7,1.2 1.8-1 1.7,.1 1.7-1.9 1.8-.6 1.7-.2 1.7,1.6 1.8-1.7 1.7-1.5 1.7-.2 1.8-1.9 1.7-1.2 1.7-.3 1.8,.6 1.7-.6 1.7-.2 1.8-3 1.7,.5 1.7-.9 1.8-.1 1.7-.2 1.7,.2 1.8,5.6 1.7-.1 1.7,1.7 1.8-.1 1.7,.9 1.7-2.3 1.8,0 1.7-1.3 1.7-.1 1.8,.5 1.7-1 1.7,.4 1.7-.7 1.8,.2 1.7-.8 1.7-.3 1.8-.6 1.7-.4 1.7-1 1.8-1.4 1.7-1.9 1.7-3.4 1.8-1.5 1.7,.7 1.7-2.6 1.8-.9 1.7-.9 1.7-1.8 1.8-1.6 1.7-.7 1.7-3.3 1.8-.9 1.7-.7 1.7-1.7 1.8-2 1.7,.6 1.7-.7 1.8-1.5 1.7,.2 1.7-1.1 1.8,.3 1.7-.2 1.7-1.7 1.8,.7 1.7,.3 1.7,.9 1.7-1.7 1.8-.9 1.7,1.2 1.7-2.4 1.8,.6 1.7-1 1.7,2.3 1.8-1 1.7-1.4 1.7-1.2 1.8-4.4 1.7-1.2 1.7-.2 1.8-.1 1.7,1.3 1.7-1 1.8-.9 1.7-.4 1.7-.9 1.8,.9 1.7,2.1 1.7,1.4 1.8-1.7 1.7-3 1.7,0 1.8,1.6 1.7-.7 1.7-12.1 1.8-4.1 1.7-7.1 1.7-5.7 1.8-3.6 1.7-.8 1.7-2.4 1.8-2.3 1.7-2.1 1.7-.9 1.7-1.3 1.8,1 1.7,1.3 1.7-.2 1.8-2.2 1.7-4.3 1.7,0 1.8-.9 1.7-1.4 1.7-.1 1.8-3 1.7-.5 1.7-3.6 1.8-1.8 1.7-.9 1.7,.7 1.8-1.3 1.7,1.1 1.7-2.6 1.8,0 1.7-1.8 1.7-3.7 1.8-.9 1.7,1.7 1.7,2.5 1.8,.7 1.7,1.5 1.7-.2 1.8-2.1 1.7-.4 1.7,.4 1.8-1.4 1.7,.4 1.7-.1 1.7,.6 1.8,1.1 1.7,.8 1.7,1.3 1.8,.4 1.7,1.4 1.7,.4 1.8,.4 1.7,.4 1.7,1.3 1.8-.5 1.7-1.9 1.7-1.2 1.8,1.2 1.7-1.6 1.7,.4 1.8,.5 1.7-.7 1.7-1.3 1.8,1.2 1.7-1 1.7-2.5 1.8,0 1.7-2.8 1.7-.9 1.8-.5 1.7,0 1.7-.5 1.8,.4 1.7,1.1 1.7-2.5 1.8-2.8 1.7-2.2 1.7-.1 1.8,1.3 1.7-1 1.7-.2 1.7-2.8 1.8,.7 1.7-2.6 1.7-1.4 1.8-.1 1.7-.4 1.7,.8 1.8,.1 1.7-1.9 1.7-1.1 1.8-.6 1.7-.1 1.7-1.9 1.8-1.4 1.7,1.4 1.7,1 1.8-2.3 1.7,2.5 1.7-.6 1.8,.3 1.7,.3 1.7-3 1.8-.3 1.7-3.9 1.7,2.9 1.8-.3 1.7-3 1.7,1 1.8-2 1.7-1.1 1.7-2.5 1.8-2.2 1.7-3.2 1.7-1.3 1.7-2.4 1.8-3.9 1.7-2.7 1.7-3.6 1.8-2.7 1.7-4.2 1.7-2.5 1.8,.1 1.7-.2 1.7,4.3 1.8,1.6 1.7-1.2 1.7-2.5 1.8,2.5 1.7,1.4 1.7,2 1.8-1.6 1.7-3.4 1.7-1 1.8-.1 1.7-.4 1.7,.2 1.8-1.2 1.7-2.4 1.7-2.3 1.8,2.4 1.7-1.3 1.7-2.4 1.8-1.5 1.7-2.7 1.7,0 1.8-1.5 1.7,.9 1.7-1.7 1.8-2.4 1.7-.4 1.7-2.4 1.7-1.1 1.8-.9 1.7,1 .3-2.5" fill="none" stroke="#0f3668" stroke-width="1.7" stroke-linejoin="round"/>
<path d="M157.7,794.3l1.7-.1 1.8-.2 1.7,0 1.7,0 1.8-.1 1.7-.1 1.7,0 1.8,.1 1.7,0 1.7-.2 1.8-.2 1.7,0 1.7-.1 1.8-.2 1.7-.1 1.7,.1 1.8-.1 1.7-.1 1.7-.3 1.7,0 1.8,.2 1.7,0 1.7,.1 1.8,0 1.7,0 1.7,0 1.8-.1 1.7-.1 1.7,0 1.8,0 1.7,.1 1.7,.1 1.8-.1 1.7-.1 1.7-.1 1.8-.1 1.7,.1 1.7,.1 1.8,.1 1.7,0 1.7,.2 1.8-.3 1.7,.1 1.7,0 1.8,.1 1.7,0 1.7,0 1.8-.1 1.7-.1 1.7,.1 1.8,.2 1.7-.1 1.7-.1 1.7,.1 1.8-.1 1.7,0 1.7,0 1.8,.1 1.7-.1 1.7,0 1.8,.1 1.7-.1 1.7-.1 1.8,.2 1.7-.1 1.7-.2 1.8,0 1.7-.1 1.7,.1 1.8-.1 1.7,.2 1.7,.1 1.8,.1 1.7,0 1.7-.2 1.8-.1 1.7-.1 1.7,0 1.8,.1 1.7,0 1.7,0 1.8-.3 1.7,0 1.7,0 1.8,.2 1.7,.1 1.7,0 1.8,.1 1.7-.1 1.7-.1 1.7,0 1.8,0 1.7,.2 1.7,.1 1.8,0 1.7-.2 1.7-.1 1.8,0 1.7,0 1.7,0 1.8,0 1.7,0 1.7,0 1.8,.3 1.7-.1 1.7,0 1.8,.1 1.7,0 1.7-.1 1.8,.1 1.7,.2 1.7,0 1.8-.1 1.7,0 1.7,.2 1.8-.1 1.7-.1 1.7,0 1.8-.1 1.7,.1 1.7,.1 1.8,0 1.7,0 1.7,0 1.7-.3 1.8,.1 1.7,.1 1.7,.2 1.8,0 1.7-.1 1.7,.1 1.8,.1 1.7,.1 1.7-.1 1.8,0 1.7-.1 1.7-.1 1.8,0 1.7-.1 1.7,.1 1.8,.1 1.7,0 1.7,.2 1.8-.2 1.7-.1 1.7,.2 1.8-.1 1.7,.2 1.7,.1 1.8-.2 1.7,.1 1.7-.1 1.8,0 1.7,0 1.7-.1 1.8,0 1.7,0 1.7,.1 1.8,0 1.7-.1 1.7,.1 1.7,0 1.8-.1 1.7,.1 1.7,0 1.8,.1 1.7,.1 1.7-.1 1.8,.1 1.7,.1 1.7,0 1.8,0 1.7-.1 1.7,0 1.8,.2 1.7-.2 1.7,.1 1.8,0 1.7,.1 1.7-.1 1.8-.1 1.7,.1 1.7,0 1.8,.2 1.7-.1 1.7,0 1.8,.1 1.7-.2 1.7-.1 1.8,0 1.7,.2 1.7-.1 1.8,0 1.7,.1 1.7,.1 1.8,0 1.7-.1 1.7,0 1.7,.1 1.8,0 1.7,.1 1.7-.1 1.8,0 1.7,.1 1.7,0 1.8,0 1.7,0 1.7,.1 1.8-.2 1.7-.1 1.7,.1 1.8-.2 1.7,.1 1.7,0 1.8,0 1.7,.1 1.7,0 1.8-.1 1.7,.1 1.7,0 1.8-.1 1.7,0 1.7,.2 1.8,.1 1.7-.2 1.7,0 1.8,.1 1.7,.2 1.7-.2 1.8-.2 1.7,.2 1.7,.2 1.7-.2 1.8,.1 1.7-.1 1.7,0 1.8,0 1.7,0 1.7-.2 1.8,.1 1.7,0 1.7-.1 1.8,.1 1.7,0 1.7,.1 1.8-.1 1.7-.1 1.7,0 1.8,0 1.7,0 1.7,.1 1.8-.1 1.7,0 1.7-.1 1.8,.1 1.7,.2 1.7,0 1.8,0 1.7,0 1.7,0 1.8-.1 1.7-.1 1.7,0 1.8,0 1.7,.2 1.7,.1 1.8,0 1.7-.1 1.7-.1 1.7,0 1.8-.1 1.7,.2 1.7,0 1.8-.2 1.7,0 1.7,0 1.8,.2 1.7,.1 1.7,0 1.8-.1 1.7-.2 1.7,.1 1.8,.1 1.7,.1 1.7-.1 1.8-.2 1.7,0 1.7-.3 1.8-.1 1.7,0 1.7-.1 1.8,0 1.7-.1 1.7-.2 1.8,0 1.7-.1 1.7-.1 1.8,0 1.7-.1 1.7-.2 1.8,0 1.7,0 1.7-.1 1.7,0 1.8,.2 1.7-.2 1.7,.2 1.8-.1 1.7,.1 1.7,0 1.8,.2 1.7-.1 1.7-.2 1.8,0 1.7,.1 1.7-.2 1.8,.1 1.7-.2 1.7,.2 1.8,.1 1.7-.2 1.7,.1 1.8-.1 1.7-.1 1.7,.2 1.8,0 1.7,.1 1.7-.2 1.8,0 1.7,.2 1.7-.1 1.8-.1 1.7,0 1.7,0 1.8,.1 1.7,0 1.7-.1 1.8,0 1.7-.1 1.7,0 1.7-.1 1.8,0 1.7,.1 1.7,.1 1.8,0 1.7-.2 1.7,.1 1.8,0 1.7,.1 1.7-.1 1.8-.1 1.7,.2 1.7,0 1.8,.1 1.7,0 1.7,0 1.8,0 1.7-.2 1.7,0 1.8,.2 1.7,.1 1.7,0 1.8,0 1.7,.1 1.7-.2 1.8,.1 1.7-.2 1.7-.1 1.8,.1 1.7,.1 1.7,0 1.8-.1 1.7,.2 1.7,.1 1.7-.1 1.8,0 1.7,0 1.7,0 1.8,0 1.7,.1 1.7-.4 1.8,.2 1.7-.1 1.7,0 1.8,0 1.7,0 1.7,.1 1.8-.3 1.7,.1 1.7,0 1.8,0 1.7,.1 1.7,0 1.8,0 1.7,0 1.7,0 1.8-.1 1.7,.2 1.7-.1 1.8-.1 1.7,.1 1.7,.1 1.8-.3 1.7,.1 1.7,0 1.8,0 1.7-.1 1.7,0 1.8,0 1.7-.1 1.7,0 1.7-.1 1.8,.1 1.7-.1 1.7,0 1.8-.1 1.7,0 1.7,0 1.8,.1 1.7,0 1.7-.1 1.8-.1 1.7,.1 1.7,0 1.8-.1 1.7,0 1.7-.1 1.8,0 1.7-.1 1.7,0 1.8,.4 1.7-.2 1.7,0 1.8-.4 1.7,.2 1.7,0 1.8-.1 1.7,.1 1.7-.1 1.8-.1 1.7,.2 1.7,0 1.8,.1 1.7-.4 1.7-.1 1.8,.3 1.7,.1 1.7-.1 1.7,0 1.8,0 1.7-.1 1.7-.1 1.8-.1 1.7,0 1.7,.1 1.8-.1 1.7,.1 1.7-.1 1.8-.1 1.7,.1 1.7,0 1.8,0 1.7,.1 1.7-.1 1.8-.1 1.7,.1 1.7,0 1.8-.2 1.7-.1 1.7,.2 1.8-.2 1.7,0 1.7-.2 1.8,.2 1.7,.1 1.7-.1 1.8-.1 1.7,0 1.7,0 1.8,.1 1.7,0 1.7-.1 1.7,0 1.8,.1 1.7,0 1.7-.1 1.8-.1 1.7-.1 1.7-.1 1.8,0 1.7-.1 1.7,0 1.8,0 1.7,.1 1.7-.1 1.8,.1 1.7-.1 1.7-.1 1.8-.2 1.7,0 1.7,.1 1.8-.1 1.7,0 1.7-.1 1.8,.1 1.7-.1 1.7,.2 1.8,0 1.7-.2 1.7-.3 1.8,.1 1.7-.1 1.7-.3 1.8-.1 1.7,.5 1.7-.2 1.8-.1 1.7-.1 1.7,0 1.7,.2 1.8-.1 1.7-.2 1.7-.1 1.8,0 1.7,0 1.7,0 1.8-.1 1.7,0 1.7,.1 1.8,0 1.7,0 1.7,0 1.8,.1 1.7,.1 1.7-.3 1.8,.1 1.7,0 1.7-.1 1.8-.3 1.7-.1 1.7,.1 1.8,.1 1.7,0 1.7,0 1.8-.1 1.7-.2 1.7,.1 1.8,0 1.7-.2 1.7,0 1.8,0 1.7,0 1.7,0 1.7-.1 1.8-.2 1.7,0 1.7,.3 1.8-.2 1.7-.2 1.7,0 1.8,0 1.7,.2 1.7-.1 1.8-.4 1.7-.3 1.7-.3 1.8,.2 1.7,0 1.7-.1 1.8,.1 1.7-.3 1.7,.1 1.8-.1 1.7,.1 1.7-.1 1.8,0 1.7-.3 1.7,.2 1.8,0 1.7-.4 1.7,.2 1.8-.1 1.7,0 1.7-.1 1.8,0 1.7-.2 1.7-.1 1.8-.2 1.7,.1 1.7,.2 1.7-.1 1.8-.4 1.7,0 1.7,.2 1.8,.2 1.7,0 1.7-.2 1.8,0 1.7-.1 1.7-.2 1.8-.2 1.7-.1 1.7-.1 1.8,.2 1.7-.1 1.7-.2 1.8,.2 1.7-.2 1.7,.1 1.8,.2 1.7-.5 1.7-.1 1.8,0 1.7-.2 1.7-.1 1.8,.1 1.7,0 1.7-.1 1.8,.1 1.7,0 1.7-.1 1.8-.1 1.7,0 1.7,0 1.8,.1 1.7-.1 1.7-.1 1.7-.1 1.8,0 1.7,.2 1.7-.3 1.8-.1 1.7-.3 1.7-.1 1.8,0 1.7-.1 1.7-.2 1.8,.1 1.7,.2 1.7-.1 1.8,0 1.7-.3 1.7-.1 1.8-.3 1.7,.4 1.7-.1 1.8,.1 1.7-.2 1.7,.2 1.8-.2 1.7,.2 1.7-.5 1.8-1.7 1.7-2.4 1.7,.2 1.8,.3 1.7,.4 1.7,.3 1.8,.5 1.7,.4 1.7,.2 1.7,.4 1.8,.5 1.7,.3 1.7,.4 1.8,.4 1.7-.2 1.7-.1 1.8,0 1.7-.3 1.7-.5 1.8-.4 1.7-.2 1.7,0 1.8,.2 1.7-.6 1.7-.2 1.8-.2 1.7,.1 1.7-.7 1.8-.1 1.7,0 1.7-.3 1.8,.1 1.7-.5 1.7,.1 1.8-.1 1.7-.5 1.7-1.1 1.8-1.2 1.7-.9 1.7-1.1 1.8-1.8 1.7-.9 1.7-1.3 1.8-.8 1.7,.3 1.7,.6 1.7,.8 1.8,.3 1.7,.4 1.7,.3 1.8-.2 1.7,0 1.7,0 1.8,.1 1.7,.1 1.7,.2 1.8-.2 1.7,.4 1.7-.7 1.8,.2 1.7,.2 1.7-.2 1.8-.1 1.7-.3 1.7,.2 1.8-.5 1.7-.2 1.7-.2 1.8-.1 1.7-.3 1.7-.2 1.8-.3 1.7,.2 1.7,0 1.8-.6 1.7-.6 1.7-.1 1.8,.3 1.7,.1 1.7,.1 1.7-.2 1.8,.5 1.7,0 1.7,.2 1.8,.4 1.7,.2 1.7,0 1.8-.1 1.7-.1 1.7-.3 1.8,0 1.7-.7 1.7-.3 1.8-.2 1.7-.3 1.7-.1 1.8,.1 1.7-.3 1.7-.2 1.8-.2 1.7-.3 1.7-.5 1.8-.2 1.7,0 1.7-.1 1.8-.3 1.7-.3 1.7,0 1.8-.4 1.7-.3 1.7-.3 1.8,0 1.7-.2 1.7-.3 1.8-1.6 1.7,.6 1.7-.4 1.7-.4 1.8-.5 1.7-.1 1.7,0 1.8-.1 1.7-.2 1.7-.5 1.8-.7 1.7-.4 1.7-.6 1.8-.7 1.7,.3 1.7,.2 1.8-1 1.7-.3 1.7-.3 1.8-.4 1.7-.8 1.7-.4 1.8-.4 1.7-.5 1.7-.2 1.8-.2 1.7-.7 1.7-.2 1.8-.3 1.7-.6 1.7-.2 1.8-.8 1.7-.4 1.7-.2 1.8-.2 1.7-.3 1.7-.1 1.7-.3 1.8,.1 1.7-.6 1.7-.3 1.8-.5 1.7-.3 1.7,0 1.8,.1 1.7,.3 1.7-.2 1.8-.8 1.7,.2 1.7-.4 1.8,.2 1.7-.7 1.7-.3 1.8,.3 1.7-.5 1.7-.6 1.8-.1 1.7,.4 1.7-.2 1.8-.4 1.7-.2 1.7-.9 1.8,.1 1.7-.6 1.7-.3 1.8,0 1.7-.4 1.7-.6 1.8,0 1.7-.3 1.7-.7 1.8-.8 1.7-.5 1.7-.4 1.7-.5 1.8-.6 1.7,.1 1.7-.3 1.8-.5 1.7-.5 1.7-.8 1.8-.2 1.7-.1 1.7-.5 1.8-.1 1.7-.3 1.7-.7 1.8-.4 1.7-.7 1.7-.1 1.8-.1 1.7-1.2 1.7-.2 1.8-.5 1.7-.2 1.7-.9 1.8-.5 1.7-.1 1.7-.3 1.8-.2 1.7-.6 1.7,.2 1.8-.7 1.7-.2 1.7-1.6 1.8-.1 1.7-1 1.7-.4 1.8-.2 1.7-.1 1.7-.2 1.7-.9 1.8-.4 1.7-.7 1.7-.5 1.8-.5 1.7-.3 1.7-.7 1.8-1 1.7,.3 1.7-1.4 1.8-.1 1.7,.4 1.7-1.2 1.8,.2 1.7,0 1.7-.6 1.8-.9 1.7,.6 1.7-1.6 1.8-.1 1.7-.3 1.7,.1 1.8,0 1.7,.2 1.7-.8 1.8-.5 1.7,.1 1.7-.9 1.8-.8 1.7,.9 1.7-.4 1.8-.2 1.7-.7 1.7,0 1.7-.7 1.8-1 1.7,.5 1.7-1.3 1.8,.9 1.7-.9 1.7,.4 1.8-.8 1.7-.7 1.7-.4 1.8-.6 1.7,0 1.7,.3 1.8-1.3 1.7,0 1.7-.5 1.8-.9 1.7-.5 1.7-1.1 1.8-.6 1.7,.8 1.7-.7 1.8-1.1 1.7-.3 1.7-1.3 1.8,.2 1.7-1 1.7-18 1.8,.1 1.7-1.8 1.7-.6 1.8-.2 1.7-1.8 1.7-1.8 1.8-1.1 1.7-1.4 1.7-1 1.7-1.2 1.8-1.5 1.7,.5 1.7-.8 1.8-2.1 1.7-1.8 1.7-2 1.8-.3 1.7-1.6 1.7,2.3 1.8-1.2 1.7-.9 1.7-1.6 1.8-2.2 1.7,0 1.7,.5 1.8-2 1.7,.9 1.7-2.3 1.8,.8 1.7-1.4 1.7-1.4 1.8-1.8 1.7,.9 1.7,1.9 1.8,.2 1.7,.8 1.7-.3 1.8-.4 1.7,0 1.7,.4 1.8-.8 1.7,1.4 1.7,.2 1.7,.6 1.8-.4 1.7-.2 1.7,.1 1.8,.2 1.7,.3 1.7,0 1.8,.2 1.7,0 1.7,1.6 1.8,0 1.7,.3 1.7-1.8 1.8,.2 1.7-1.2 1.7-.6 1.8-.1 1.7,0 1.7-2.4 1.8-.9 1.7,1 1.7-.6 1.8-1.3 1.7-3 1.7,.5 1.8-2.1 1.7,.1 1.7-.7 1.8,1.2 1.7,0 1.7-.6 1.8-2.6 1.7-1.6 1.7-.3 1.8-.4 1.7-.3 1.7-.9 1.7-2 1.8,.5 1.7-2.3 1.7-1.2 1.8,1 1.7,.2 1.7-.4 1.8,.3 1.7-.5 1.7-1.2 1.8-1.7 1.7-.2 1.7-2.2 1.8-.4 1.7,1 1.7,1.1 1.8-.6 1.7,.2 1.7-1.7 1.8-1.1 1.7-.4 1.7-1.3 1.8,.2 1.7-2.5 1.7,.5 1.8-.9 1.7-1.3 1.7,1.7 1.8-1.8 1.7-1.1 1.7-1.5 1.8-.9 1.7-1.7 1.7,1 1.7-1.2 1.8-2.2 1.7-.8 1.7-4.5 1.8-2.5 1.7-2.6 1.7-1.9 1.8,.3 1.7,1.3 1.7,3.4 1.8,.3 1.7-.4 1.7-.7 1.8,0 1.7,.2 1.7,2.5 1.8-1.9 1.7-.7 1.7-1 1.8-.9 1.7-.1 1.7-.8 1.8-1.6 1.7-1.8 1.7,.3 1.8-.7 1.7-.3 1.7-1 1.8-1.2 1.7-1.2 1.7-.3 1.8-1.1 1.7,1.2 1.7-1.8 1.8,.4 1.7-1.1 1.7-1.3 1.7-.6 1.8-.4 1.7,.2 .3-1.5" fill="none" stroke="#cda845" stroke-width="1.5" stroke-linejoin="round"/>
<path d="M157.7,805.7l1.7,0 1.8-.1 1.7,0 1.7,.1 1.8,0 1.7-.1 1.7,.1 1.8-.1 1.7,.1 1.7,0 1.8,0 1.7,0 1.7,0 1.8,0 1.7,0 1.7,0 1.8,0 1.7,0 1.7,0 1.7,0 1.8,0 1.7,0 1.7,0 1.8,0 1.7-.1 1.7,0 1.8,0 1.7,0 1.7,0 1.8,0 1.7,.1 1.7,0 1.8-.1 1.7,0 1.7,0 1.8,0 1.7,0 1.7,0 1.8,0 1.7,0 1.7,0 1.8,0 1.7,0 1.7,.1 1.8-.1 1.7,0 1.7,0 1.8,.1 1.7,0 1.7-.1 1.8,.1 1.7-.1 1.7,0 1.7,.1 1.8-.1 1.7,.1 1.7,0 1.8,.1 1.7-.1 1.7,0 1.8,0 1.7,0 1.7,0 1.8,0 1.7,0 1.7-.1 1.8,0 1.7,.1 1.7-.1 1.8,0 1.7,0 1.7,0 1.8,0 1.7,0 1.7,0 1.8,0 1.7,0 1.7,0 1.8,0 1.7,0 1.7,0 1.8,0 1.7,0 1.7,0 1.8,0 1.7,0 1.7,0 1.8,0 1.7,.1 1.7-.1 1.7,0 1.8,0 1.7,0 1.7,0 1.8,0 1.7,0 1.7,0 1.8,0 1.7,0 1.7,0 1.8,0 1.7,0 1.7,0 1.8,0 1.7,0 1.7,0 1.8,0 1.7,0 1.7,0 1.8,0 1.7,0 1.7,0 1.8,0 1.7,0 1.7,0 1.8,0 1.7,0 1.7,0 1.8,0 1.7,0 1.7,0 1.8,.1 1.7,0 1.7,0 1.7,0 1.8-.1 1.7,0 1.7,0 1.8,0 1.7,.1 1.7,0 1.8,0 1.7-.1 1.7,0 1.8,.1 1.7-.1 1.7,0 1.8,0 1.7,0 1.7-.1 1.8,.1 1.7,0 1.7,0 1.8,0 1.7,0 1.7,0 1.8,0 1.7,0 1.7,0 1.8,0 1.7,0 1.7,0 1.8,0 1.7,0 1.7,0 1.8,0 1.7,0 1.7,0 1.8,0 1.7,0 1.7-.1 1.7,.1 1.8,0 1.7,0 1.7,0 1.8-.1 1.7,0 1.7,0 1.8,.1 1.7,0 1.7,0 1.8,0 1.7-.1 1.7,.1 1.8,0 1.7,0 1.7,0 1.8,0 1.7,0 1.7,0 1.8,0 1.7,0 1.7,0 1.8,0 1.7-.1 1.7,0 1.8,.1 1.7-.1 1.7,0 1.8,.1 1.7-.1 1.7,.1 1.8-.1 1.7,.1 1.7,0 1.8,0 1.7-.1 1.7,0 1.7,0 1.8,.1 1.7,0 1.7,0 1.8,0 1.7,0 1.7,0 1.8,0 1.7,0 1.7,0 1.8-.1 1.7,0 1.7,0 1.8,0 1.7,0 1.7,0 1.8,0 1.7,0 1.7,0 1.8,0 1.7,.1 1.7,0 1.8,0 1.7,0 1.7,0 1.8,0 1.7-.1 1.7,0 1.8,.1 1.7,0 1.7-.1 1.8,0 1.7,0 1.7,.1 1.7,0 1.8,0 1.7,0 1.7,0 1.8-.1 1.7,0 1.7,0 1.8,.1 1.7-.1 1.7,0 1.8,0 1.7,.1 1.7,0 1.8-.1 1.7,.1 1.7-.1 1.8,0 1.7,0 1.7,0 1.8,0 1.7,0 1.7,0 1.8,0 1.7,0 1.7,0 1.8,0 1.7,0 1.7,.1 1.8-.1 1.7,0 1.7,.1 1.8,0 1.7,0 1.7,0 1.8,0 1.7,0 1.7-.1 1.7,.1 1.8-.1 1.7,.1 1.7-.1 1.8,0 1.7,0 1.7,0 1.8,0 1.7,0 1.7,0 1.8,0 1.7,0 1.7,0 1.8,0 1.7,0 1.7,0 1.8,0 1.7,0 1.7,0 1.8-.1 1.7,0 1.7,0 1.8,0 1.7,0 1.7-.1 1.8,.1 1.7,0 1.7,0 1.8-.1 1.7,0 1.7,0 1.8,0 1.7,0 1.7,0 1.7,0 1.8,0 1.7-.1 1.7,0 1.8,0 1.7,0 1.7,0 1.8,0 1.7-.1 1.7,.1 1.8-.1 1.7,0 1.7,.1 1.8-.1 1.7,0 1.7,0 1.8,0 1.7,0 1.7,0 1.8,0 1.7,0 1.7-.1 1.8,.1 1.7-.1 1.7,0 1.8,0 1.7,0 1.7,0 1.8,0 1.7-.1 1.7,0 1.8,0 1.7,0 1.7,0 1.8-.1 1.7,.1 1.7,0 1.7-.1 1.8,0 1.7,0 1.7,0 1.8,0 1.7,0 1.7,0 1.8-.1 1.7,.1 1.7-.1 1.8-.1 1.7,.1 1.7-.1 1.8,.1 1.7,0 1.7-.1 1.8,0 1.7,0 1.7,0 1.8,0 1.7,0 1.7,0 1.8,0 1.7,0 1.7,0 1.8,0 1.7-.1 1.7,0 1.8,0 1.7,0 1.7,0 1.8,0 1.7,0 1.7,0 1.7,.1 1.8-.1 1.7,0 1.7,0 1.8,0 1.7,0 1.7,0 1.8-.1 1.7,.1 1.7,0 1.8-.1 1.7,0 1.7,0 1.8-.1 1.7,0 1.7,0 1.8,0 1.7,0 1.7-.1 1.8,0 1.7,0 1.7,.1 1.8,0 1.7,0 1.7-.1 1.8,0 1.7,.1 1.7-.1 1.8-.1 1.7,.1 1.7,0 1.8-.1 1.7,0 1.7,0 1.8,0 1.7,0 1.7,0 1.7-.1 1.8,.1 1.7-.1 1.7,0 1.8,0 1.7-.1 1.7,0 1.8,0 1.7,.1 1.7-.1 1.8,.1 1.7-.1 1.7,.1 1.8,0 1.7,0 1.7-.1 1.8-.1 1.7-.1 1.7,.1 1.8,0 1.7,0 1.7,.1 1.8-.1 1.7,0 1.7,0 1.8-.1 1.7,0 1.7,0 1.8,0 1.7,0 1.7,0 1.8,0 1.7,0 1.7,0 1.8,0 1.7,0 1.7-.1 1.7,.1 1.8-.1 1.7,0 1.7-.1 1.8,0 1.7,0 1.7,0 1.8,0 1.7,.1 1.7,0 1.8,0 1.7,0 1.7,0 1.8,0 1.7-.1 1.7-.1 1.8,.1 1.7-.1 1.7-.1 1.8,0 1.7,.1 1.7-.1 1.8,0 1.7-.1 1.7,0 1.8,.1 1.7,.1 1.7-.1 1.8-.1 1.7,0 1.7,0 1.8,0 1.7,0 1.7,0 1.7,0 1.8,0 1.7,0 1.7,.1 1.8-.1 1.7,0 1.7,0 1.8-.1 1.7,0 1.7,.1 1.8-.1 1.7,.1 1.7-.1 1.8,0 1.7,0 1.7-.1 1.8-.1 1.7,0 1.7,.1 1.8,.1 1.7,0 1.7-.1 1.8,0 1.7,0 1.7,0 1.8,0 1.7,0 1.7-.1 1.8,0 1.7,0 1.7,0 1.8,0 1.7,.1 1.7-.1 1.8-.1 1.7,0 1.7-.1 1.7,.1 1.8,0 1.7,0 1.7-.1 1.8,0 1.7,0 1.7,0 1.8,0 1.7,0 1.7-.1 1.8,.1 1.7-.1 1.7,0 1.8,0 1.7,.1 1.7-.1 1.8,.1 1.7,0 1.7-.1 1.8,0 1.7,.1 1.7,0 1.8-.1 1.7,0 1.7,0 1.8,0 1.7-.1 1.7,0 1.8,0 1.7-.1 1.7,.1 1.8,0 1.7,0 1.7,0 1.7-.1 1.8-.1 1.7,.2 1.7,0 1.8,0 1.7-.1 1.7,0 1.8,0 1.7,0 1.7-.1 1.8,0 1.7,0 1.7,0 1.8,0 1.7,0 1.7-.1 1.8,0 1.7,0 1.7,0 1.8-.1 1.7,0 1.7-.1 1.8,0 1.7-.1 1.7,0 1.8,.1 1.7-.2 1.7,0 1.8,0 1.7,0 1.7-.1 1.8,0 1.7-.1 1.7,0 1.8-.2 1.7,.1 1.7,.1 1.7-.1 1.8-.1 1.7,0 1.7,0 1.8-.1 1.7,0 1.7-.1 1.8,0 1.7,0 1.7-.1 1.8-.1 1.7,0 1.7-.1 1.8,0 1.7,0 1.7-.1 1.8-.1 1.7,.1 1.7-.1 1.8,.1 1.7,0 1.7,0 1.8-.1 1.7-.1 1.7,0 1.8-.2 1.7,0 1.7,0 1.8,0 1.7,.1 1.7-.2 1.8,0 1.7-.1 1.7,0 1.8,0 1.7-.2 1.7,0 1.7,.1 1.8,0 1.7,.1 1.7-.3 1.8,0 1.7-.1 1.7-.1 1.8-.1 1.7,0 1.7-.1 1.8,.1 1.7,.1 1.7-.2 1.8-.1 1.7,0 1.7-.1 1.8-.1 1.7,.1 1.7,0 1.8,0 1.7-.1 1.7-.1 1.8-.1 1.7,.2 1.7-.2 1.8-2.4 1.7-3.1 1.7-.1 1.8,.4 1.7,.1 1.7,.2 1.8,.1 1.7,.1 1.7,.1 1.7,.2 1.8,.3 1.7-.1 1.7,.3 1.8,.3 1.7-.4 1.7-.2 1.8-.2 1.7-.3 1.7-.7 1.8-.3 1.7-.4 1.7-.2 1.8,0 1.7-.6 1.7-.2 1.8-.4 1.7-.1 1.7-.7 1.8-.2 1.7-.3 1.7-.5 1.8-.2 1.7-.5 1.7,0 1.8-.3 1.7-.8 1.7-.6 1.8-.4 1.7-.1 1.7-.3 1.8-.8 1.7-.3 1.7-.3 1.8-.2 1.7,.3 1.7,.9 1.7,.8 1.8,.5 1.7,.5 1.7,.2 1.8,0 1.7-.1 1.7,.3 1.8,.1 1.7,.3 1.7,0 1.8-.2 1.7,.2 1.7-.2 1.8,.4 1.7,.2 1.7,.1 1.8,.1 1.7,.1 1.7,.1 1.8-.1 1.7,.1 1.7,.2 1.8,.1 1.7-.1 1.7,.3 1.8-.5 1.7-.8 1.7-1 1.8-1.2 1.7-1.2 1.7,.2 1.8,.2 1.7,.5 1.7,.4 1.7,.2 1.8,.6 1.7,.4 1.7,.1 1.8,.2 1.7-.4 1.7-.7 1.8-.5 1.7-.1 1.7-.3 1.8-.3 1.7-.7 1.7-.3 1.8-.3 1.7-.5 1.7-.2 1.8-.2 1.7-.4 1.7,.1 1.8-.1 1.7-.1 1.7-.3 1.8,.1 1.7,.3 1.7-.1 1.8-.1 1.7,0 1.7,.1 1.8,0 1.7-.2 1.7,.2 1.8,.2 1.7-.2 1.7,.1 1.8-1.1 1.7,.4 1.7-.1 1.7-.2 1.8,0 1.7,.3 1.7,.1 1.8-.1 1.7,.2 1.7-.1 1.8-.8 1.7-.6 1.7-1 1.8-.5 1.7-.3 1.7-.1 1.8-.9 1.7-.4 1.7-.3 1.8-.5 1.7-.6 1.7-.4 1.8-.7 1.7-.5 1.7-.6 1.8-.4 1.7-.5 1.7-.3 1.8-.8 1.7-.3 1.7,0 1.8-.4 1.7-.2 1.7-.3 1.8-.1 1.7-.1 1.7-.2 1.7-.1 1.8,0 1.7-.3 1.7,.1 1.8-.4 1.7-.2 1.7,0 1.8,0 1.7,.3 1.7-.1 1.8-.6 1.7,.1 1.7-.2 1.8,.2 1.7-.6 1.7-.2 1.8,.2 1.7-.1 1.7-.5 1.8-.1 1.7,.4 1.7-.5 1.8-.6 1.7-.1 1.7-.5 1.8,0 1.7-.4 1.7-.4 1.8-.1 1.7-.2 1.7-.2 1.8-.1 1.7,0 1.7-.4 1.8-.5 1.7-.3 1.7-.1 1.7-.4 1.8-.6 1.7,.5 1.7-.3 1.8-.3 1.7,0 1.7-.3 1.8-.1 1.7-.2 1.7-.8 1.8-.2 1.7,.1 1.7-.6 1.8-.6 1.7-.2 1.7,0 1.8,.2 1.7-1.2 1.7-.8 1.8-.5 1.7,0 1.7-.8 1.8,0 1.7-.3 1.7-.3 1.8-.1 1.7-.6 1.7,.1 1.8-.8 1.7-.4 1.7-1.2 1.8,0 1.7-.7 1.7-.6 1.8,0 1.7-.2 1.7-.1 1.7-.6 1.8-.1 1.7-.5 1.7-.6 1.8-1.2 1.7-.7 1.7-1.1 1.8-1.9 1.7-.6 1.7-1.8 1.8-.2 1.7,0 1.7-1.1 1.8-.6 1.7-.4 1.7-.6 1.8-.5 1.7,.5 1.7-1.3 1.8,.4 1.7,.2 1.7,.1 1.8,.1 1.7,.2 1.7-.4 1.8-.4 1.7,0 1.7-.9 1.8-.2 1.7,.9 1.7,.2 1.8,.4 1.7-.4 1.7,.2 1.7-.4 1.8-.8 1.7,.7 1.7-1.1 1.8,1.2 1.7-1.1 1.7,.4 1.8-.7 1.7-.1 1.7-.1 1.8-.6 1.7,0 1.7,.5 1.8-.7 1.7,.5 1.7-.1 1.8-.5 1.7,.1 1.7-.1 1.8-.4 1.7,1.3 1.7,.2 1.8-.5 1.7-.3 1.7-.4 1.8,.2 1.7-.3 1.7-20.2 1.8,.5 1.7-.9 1.7-.3 1.8,.1 1.7-1.3 1.7-1.3 1.8-.7 1.7-1.1 1.7,0 1.7-.4 1.8-1.3 1.7,.3 1.7-.9 1.8-2 1.7-1.4 1.7-1.5 1.8-.5 1.7-1.5 1.7,2.2 1.8-.9 1.7-1.1 1.7-1.2 1.8-1.8 1.7-.1 1.7,.4 1.8-1.8 1.7,.6 1.7-1.4 1.8,.3 1.7-1.3 1.7-1.5 1.8-.9 1.7,.5 1.7,1.7 1.8,.9 1.7,.4 1.7-.6 1.8-.4 1.7,0 1.7,.1 1.8-.9 1.7,1.4 1.7,.5 1.7,.8 1.8-.1 1.7-.1 1.7,.4 1.8,.1 1.7,.8 1.7,.1 1.8,.1 1.7,.5 1.7,1.2 1.8-.2 1.7,.5 1.7-1.4 1.8,.1 1.7-1.1 1.7-.7 1.8,.7 1.7,.3 1.7-1.2 1.8-.4 1.7,.5 1.7,.2 1.8-1.2 1.7-2.4 1.7,.1 1.8-1.3 1.7,.6 1.7-.9 1.8,1 1.7,.2 1.7-.1 1.8-1.4 1.7-1 1.7,0 1.8-.7 1.7-.6 1.7-.8 1.7-2.1 1.8,.4 1.7-2.2 1.7-.6 1.8,.9 1.7,.4 1.7-.5 1.8,.3 1.7-.5 1.7-.4 1.8-1.7 1.7,.4 1.7-2.5 1.8,0 1.7,.6 1.7,1.5 1.8,0 1.7,.6 1.7-1 1.8-.9 1.7,.3 1.7-.9 1.8,1 1.7-2 1.7,.8 1.8-.2 1.7-.6 1.7,1.8 1.8-.9 1.7,.2 1.7-1.1 1.8-.2 1.7-.9 1.7,1 1.7,0 1.8-.3 1.7,.5 1.7-1.1 1.8-1.1 1.7,.5 1.7-1 1.8,1.3 1.7-1 1.7,.3 1.8-.8 1.7-.3 1.7-.5 1.8,1 1.7,.6 1.7,1.6 1.8-.9 1.7,.4 1.7-.3 1.8,.6 1.7-1.1 1.7,0 1.8-1.1 1.7-.9 1.7-.2 1.8-.8 1.7,.4 1.7-.1 1.8-1.7 1.7-.1 1.7,.5 1.8-.1 1.7-.1 1.7-.5 1.8,.5 1.7-.6 1.7,0 1.7,1 1.8-.3 1.7,.3 .3-.8" fill="none" stroke="#2563eb" stroke-width="1.5" stroke-linejoin="round"/>
<path d="M157.7,805.7l1.7,0 1.8-.1 1.7,0 1.7,.1 1.8,0 1.7-.1 1.7,.1 1.8-.1 1.7,.1 1.7,0 1.8,0 1.7,0 1.7,0 1.8,0 1.7,0 1.7,0 1.8,0 1.7,0 1.7,0 1.7,0 1.8,0 1.7,0 1.7,0 1.8,0 1.7-.1 1.7,0 1.8,0 1.7,0 1.7,0 1.8,0 1.7,.1 1.7,0 1.8-.1 1.7,0 1.7,0 1.8,0 1.7,0 1.7,0 1.8,0 1.7,0 1.7,0 1.8,0 1.7,0 1.7,.1 1.8-.1 1.7,0 1.7,0 1.8,.1 1.7,0 1.7-.1 1.8,.1 1.7-.1 1.7,0 1.7,.1 1.8-.1 1.7,.1 1.7,0 1.8,.1 1.7-.1 1.7,0 1.8,0 1.7,0 1.7,0 1.8,0 1.7,0 1.7-.1 1.8,0 1.7,.1 1.7-.1 1.8,0 1.7,0 1.7,0 1.8,0 1.7,0 1.7,0 1.8,0 1.7,0 1.7,0 1.8,0 1.7,0 1.7,0 1.8,0 1.7,0 1.7,0 1.8,0 1.7,0 1.7,0 1.8,0 1.7,.1 1.7-.1 1.7,0 1.8,0 1.7,0 1.7,0 1.8,0 1.7,0 1.7,0 1.8,0 1.7,0 1.7,0 1.8,0 1.7,0 1.7,0 1.8,0 1.7,0 1.7,0 1.8,0 1.7,0 1.7,0 1.8,0 1.7,0 1.7,0 1.8,0 1.7,0 1.7,0 1.8,0 1.7,0 1.7,0 1.8,0 1.7,0 1.7,0 1.8,.1 1.7,0 1.7,0 1.7,0 1.8-.1 1.7,0 1.7,0 1.8,0 1.7,.1 1.7,0 1.8,0 1.7-.1 1.7,0 1.8,.1 1.7-.1 1.7,0 1.8,0 1.7,0 1.7-.1 1.8,.1 1.7,0 1.7,0 1.8,0 1.7,0 1.7,0 1.8,0 1.7,0 1.7,0 1.8,0 1.7,0 1.7,0 1.8,0 1.7,0 1.7,0 1.8,0 1.7,0 1.7,0 1.8,0 1.7,0 1.7-.1 1.7,.1 1.8,0 1.7,0 1.7,0 1.8-.1 1.7,0 1.7,0 1.8,.1 1.7,0 1.7,0 1.8,0 1.7-.1 1.7,.1 1.8,0 1.7,0 1.7,0 1.8,0 1.7,0 1.7,0 1.8,0 1.7,0 1.7,0 1.8,0 1.7-.1 1.7,0 1.8,.1 1.7-.1 1.7,0 1.8,.1 1.7-.1 1.7,.1 1.8-.1 1.7,.1 1.7,0 1.8,0 1.7-.1 1.7,0 1.7,0 1.8,.1 1.7,0 1.7,0 1.8,0 1.7,0 1.7,0 1.8,0 1.7,0 1.7,0 1.8-.1 1.7,0 1.7,0 1.8,0 1.7,0 1.7,0 1.8,0 1.7,0 1.7,0 1.8,0 1.7,.1 1.7,0 1.8,0 1.7,0 1.7,0 1.8,0 1.7-.1 1.7,0 1.8,.1 1.7,0 1.7-.1 1.8,0 1.7,0 1.7,.1 1.7,0 1.8,0 1.7,0 1.7,0 1.8-.1 1.7,0 1.7,0 1.8,.1 1.7-.1 1.7,0 1.8,0 1.7,.1 1.7,0 1.8-.1 1.7,.1 1.7-.1 1.8,0 1.7,0 1.7,0 1.8,0 1.7,0 1.7,0 1.8,0 1.7,0 1.7,0 1.8,0 1.7,0 1.7,.1 1.8-.1 1.7,0 1.7,.1 1.8,0 1.7,0 1.7,0 1.8,0 1.7,0 1.7-.1 1.7,.1 1.8-.1 1.7,.1 1.7-.1 1.8,0 1.7,0 1.7,0 1.8,0 1.7,0 1.7,0 1.8,0 1.7,0 1.7,0 1.8,0 1.7,0 1.7,0 1.8,0 1.7,0 1.7,0 1.8-.1 1.7,0 1.7,0 1.8,0 1.7,0 1.7-.1 1.8,.1 1.7,0 1.7,0 1.8-.1 1.7,0 1.7,0 1.8,0 1.7,0 1.7,0 1.7,0 1.8,0 1.7-.1 1.7,0 1.8,0 1.7,0 1.7,0 1.8,0 1.7-.1 1.7,.1 1.8-.1 1.7,0 1.7,.1 1.8-.1 1.7,0 1.7,0 1.8,0 1.7,0 1.7,0 1.8,0 1.7,0 1.7-.1 1.8,.1 1.7-.1 1.7,0 1.8,0 1.7,0 1.7,0 1.8,0 1.7-.1 1.7,0 1.8,0 1.7,0 1.7,0 1.8-.1 1.7,.1 1.7,0 1.7-.1 1.8,0 1.7,0 1.7,0 1.8,0 1.7,0 1.7,0 1.8-.1 1.7,.1 1.7-.1 1.8-.1 1.7,.1 1.7-.1 1.8,.1 1.7,0 1.7-.1 1.8,0 1.7,0 1.7,0 1.8,0 1.7,0 1.7,0 1.8,0 1.7,0 1.7,0 1.8,0 1.7-.1 1.7,0 1.8,0 1.7,0 1.7,0 1.8,0 1.7,0 1.7,0 1.7,.1 1.8-.1 1.7,0 1.7,0 1.8,0 1.7,0 1.7,0 1.8-.1 1.7,.1 1.7,0 1.8-.1 1.7,0 1.7,0 1.8-.1 1.7,0 1.7,0 1.8,0 1.7,0 1.7-.1 1.8,0 1.7,0 1.7,.1 1.8,0 1.7,0 1.7-.1 1.8,0 1.7,.1 1.7-.1 1.8-.1 1.7,.1 1.7,0 1.8-.1 1.7,0 1.7,0 1.8,0 1.7,0 1.7,0 1.7-.1 1.8,.1 1.7-.1 1.7,0 1.8,0 1.7-.1 1.7,0 1.8,0 1.7,.1 1.7-.1 1.8,.1 1.7-.1 1.7,.1 1.8,0 1.7,0 1.7-.1 1.8-.1 1.7-.1 1.7,.1 1.8,0 1.7,0 1.7,.1 1.8-.1 1.7,0 1.7,0 1.8-.1 1.7,0 1.7,0 1.8,0 1.7,0 1.7,0 1.8,0 1.7,0 1.7,0 1.8,0 1.7,0 1.7-.1 1.7,.1 1.8-.1 1.7,0 1.7-.1 1.8,0 1.7,0 1.7,0 1.8,0 1.7,.1 1.7,0 1.8,0 1.7,0 1.7,0 1.8,0 1.7-.1 1.7-.1 1.8,.1 1.7-.1 1.7-.1 1.8,0 1.7,.1 1.7-.1 1.8,0 1.7-.1 1.7,0 1.8,.1 1.7,.1 1.7-.1 1.8-.1 1.7,0 1.7,0 1.8,0 1.7,0 1.7,0 1.7,0 1.8,0 1.7,0 1.7,.1 1.8-.1 1.7,0 1.7,0 1.8-.1 1.7,0 1.7,.1 1.8-.1 1.7,.1 1.7-.1 1.8,0 1.7,0 1.7-.1 1.8-.1 1.7,0 1.7,.1 1.8,.1 1.7,0 1.7-.1 1.8,0 1.7,0 1.7,0 1.8,0 1.7,0 1.7-.1 1.8,0 1.7,0 1.7,0 1.8,0 1.7,.1 1.7-.1 1.8-.1 1.7,0 1.7-.1 1.7,.1 1.8,0 1.7,0 1.7-.1 1.8,0 1.7,0 1.7,0 1.8,0 1.7,0 1.7-.1 1.8,.1 1.7-.1 1.7,0 1.8,0 1.7,.1 1.7-.1 1.8,.1 1.7,0 1.7-.1 1.8,0 1.7,.1 1.7,0 1.8-.1 1.7,0 1.7,0 1.8,0 1.7-.1 1.7,0 1.8,0 1.7-.1 1.7,.1 1.8,0 1.7,0 1.7,0 1.7-.1 1.8-.1 1.7,.2 1.7,0 1.8,0 1.7-.1 1.7,0 1.8,0 1.7,0 1.7-.1 1.8,0 1.7,0 1.7,0 1.8,0 1.7,0 1.7-.1 1.8,0 1.7,0 1.7,0 1.8-.1 1.7,0 1.7-.1 1.8,0 1.7-.1 1.7,0 1.8,.1 1.7-.2 1.7,0 1.8,0 1.7,0 1.7-.1 1.8,0 1.7-.1 1.7,0 1.8-.2 1.7,.1 1.7,.1 1.7-.1 1.8-.1 1.7,0 1.7,0 1.8-.1 1.7,0 1.7-.1 1.8,0 1.7,0 1.7-.1 1.8-.1 1.7,0 1.7-.1 1.8,0 1.7,0 1.7-.1 1.8-.1 1.7,.1 1.7-.1 1.8,.1 1.7,0 1.7,0 1.8-.1 1.7-.1 1.7,0 1.8-.2 1.7,0 1.7,0 1.8,0 1.7,.1 1.7-.2 1.8,0 1.7-.1 1.7,0 1.8,0 1.7-.2 1.7,0 1.7,.1 1.8,0 1.7,.1 1.7-.3 1.8,0 1.7-.1 1.7-.1 1.8-.1 1.7,0 1.7-.1 1.8,.1 1.7,.1 1.7-.2 1.8-.1 1.7,0 1.7-.1 1.8-.1 1.7,.1 1.7,0 1.8,0 1.7-.1 1.7-.1 1.8,0 1.7,.2 1.7-.1 1.8-2.2 1.7-2.7 1.7-.2 1.8,.4 1.7,.1 1.7,.2 1.8,.1 1.7,.1 1.7,.1 1.7,.2 1.8,.3 1.7-.1 1.7,.3 1.8,.3 1.7-.4 1.7-.2 1.8-.2 1.7-.3 1.7-.7 1.8-.3 1.7-.4 1.7-.2 1.8,0 1.7-.6 1.7-.2 1.8-.4 1.7-.1 1.7-.7 1.8-.2 1.7-.3 1.7-.5 1.8-.1 1.7-.5 1.7,0 1.8-.3 1.7-.8 1.7-.6 1.8-.3 1.7-.1 1.7-.3 1.8-.7 1.7-.3 1.7-.3 1.8-.2 1.7,.3 1.7,.8 1.7,.8 1.8,.5 1.7,.4 1.7,.3 1.8,0 1.7-.1 1.7,.3 1.8,.1 1.7,.3 1.7,.1 1.8-.2 1.7,.2 1.7-.2 1.8,.5 1.7,.2 1.7,0 1.8,.2 1.7,.2 1.7,.1 1.8-.2 1.7,.2 1.7,.2 1.8,.1 1.7,0 1.7,.2 1.8,0 1.7,.1 1.7,0 1.8-.5 1.7-.3 1.7-.2 1.8-.1 1.7,0 1.7-.1 1.7-.2 1.8,.1 1.7,0 1.7-.4 1.8,.3 1.7-.1 1.7-.5 1.8-.3 1.7,0 1.7-.1 1.8-.2 1.7-.4 1.7,0 1.8-.1 1.7-.4 1.7,.1 1.8,.1 1.7-.2 1.7-.2 1.8-.2 1.7-.1 1.7-.4 1.8-.2 1.7,.1 1.7-.3 1.8-.1 1.7-.2 1.7-.1 1.8-.3 1.7-.2 1.7,0 1.8,0 1.7-.3 1.7,0 1.8-1.3 1.7,.2 1.7-.3 1.7-.3 1.8-.2 1.7,.1 1.7,0 1.8-.3 1.7,.1 1.7-.3 1.8-.4 1.7-.2 1.7-.6 1.8-.1 1.7,.1 1.7,.2 1.8-.6 1.7,0 1.7,0 1.8-.1 1.7-.3 1.7-.1 1.8-.2 1.7-.3 1.7-.3 1.8-.2 1.7-.2 1.7-.1 1.8-.4 1.7,.1 1.7-.3 1.8-.3 1.7-.2 1.7-.3 1.8-.1 1.7,0 1.7-.3 1.7,0 1.8-.1 1.7-.2 1.7-.1 1.8-.3 1.7,0 1.7,0 1.8,0 1.7,.2 1.7,0 1.8-.7 1.7,.1 1.7-.3 1.8,0 1.7-.4 1.7-.1 1.8,.3 1.7-.1 1.7-.5 1.8-.1 1.7,.4 1.7-.4 1.8-.4 1.7,.2 1.7-.4 1.8,.2 1.7-.3 1.7-.2 1.8,.1 1.7-.1 1.7-.1 1.8,0 1.7,0 1.7-.3 1.8-.3 1.7,0 1.7-.1 1.7-.3 1.8-.3 1.7,.6 1.7-.3 1.8-.2 1.7,.1 1.7-.2 1.8,.3 1.7,.5 1.7-.6 1.8-.1 1.7,.6 1.7-.6 1.8-.7 1.7,0 1.7-.2 1.8,.2 1.7-1.1 1.7-.6 1.8-.7 1.7,0 1.7-.4 1.8,0 1.7-.3 1.7-.1 1.8-.4 1.7-.4 1.7-.1 1.8-.4 1.7-.5 1.7-1 1.8-.1 1.7-.6 1.7-.4 1.8,.1 1.7-.2 1.7,0 1.7-.6 1.8-.1 1.7-.3 1.7-.4 1.8-.7 1.7,0 1.7-.5 1.8-.8 1.7-.1 1.7-.6 1.8,.1 1.7,.4 1.7-.4 1.8-.6 1.7,.2 1.7-.5 1.8-.3 1.7-.2 1.7-1.1 1.8,.3 1.7-.2 1.7,.2 1.8-.3 1.7-.1 1.7-.4 1.8-.9 1.7,.1 1.7-.9 1.8-.5 1.7,.7 1.7-.3 1.8,0 1.7-.1 1.7-.4 1.7-.5 1.8-.9 1.7,.4 1.7-1.4 1.8,.9 1.7-.7 1.7,.3 1.8-.8 1.7-.1 1.7-.3 1.8-.8 1.7-.4 1.7,.1 1.8-.7 1.7,.5 1.7-.7 1.8-.5 1.7-.1 1.7-.3 1.8-.4 1.7,1.2 1.7-.2 1.8-.8 1.7-.3 1.7-.8 1.8,.4 1.7,.7 1.7-16.5 1.8,1.2 1.7,.2 1.7,.3 1.8,.5 1.7-.5 1.7-.4 1.8,.1 1.7-.2 1.7,.9 1.7-.1 1.8-.7 1.7,.9 1.7-.1 1.8-1 1.7-.2 1.7-.9 1.8,.5 1.7-.5 1.7,2.2 1.8-.5 1.7-.1 1.7-1.1 1.8,0 1.7-.3 1.7,.8 1.8-.4 1.7,1.1 1.7-.2 1.8,.6 1.7,0 1.7-1 1.8,.1 1.7,.5 1.7,.1 1.8,.1 1.7-.7 1.7-1.3 1.8,0 1.7-.5 1.7,0 1.8-.9 1.7,1 1.7-.2 1.7-.3 1.8-.9 1.7-.6 1.7,.1 1.8-.2 1.7,.1 1.7-.8 1.8-.6 1.7,.6 1.7,.4 1.8-.2 1.7-.8 1.7-1.2 1.8,.1 1.7-.9 1.7-.9 1.8,.9 1.7,.3 1.7-1.2 1.8-.6 1.7,.3 1.7,.5 1.8-.6 1.7-2.1 1.7,.3 1.8-1.1 1.7,.2 1.7-.2 1.8,1.1 1.7,0 1.7-.2 1.8-.7 1.7-.9 1.7-.5 1.8,.3 1.7-1.2 1.7,.2 1.7-1.8 1.8-.2 1.7-1.6 1.7-.2 1.8,1.2 1.7,.4 1.7-.5 1.8,.3 1.7-.7 1.7-.2 1.8-1.1 1.7,.2 1.7-1.7 1.8-.9 1.7,.8 1.7,1 1.8-.2 1.7,1.3 1.7-.8 1.8-.7 1.7,.2 1.7-.6 1.8,.7 1.7-1.4 1.7,.9 1.8-.3 1.7,.2 1.7,1.3 1.8-.2 1.7,.7 1.7-.7 1.8,0 1.7-.5 1.7,.9 1.7-.4 1.8,.3 1.7,.3 1.7-.9 1.8-.8 1.7,.4 1.7-.2 1.8,.8 1.7-.1 1.7,.3 1.8,.2 1.7,0 1.7-.4 1.8,.9 1.7,.6 1.7,.9 1.8-.9 1.7,.4 1.7-.2 1.8,1 1.7-1 1.7,.4 1.8-.8 1.7-.9 1.7,.3 1.8-.3 1.7-.2 1.7,.1 1.8,.1 1.7-.3 1.7,.5 1.8-.6 1.7,.6 1.7,.3 1.8,.5 1.7-.8 1.7-.1 1.7,.1 1.8,.5 1.7,.3 .3-.4" fill="none" stroke="#47c9ea" stroke-width="1.5" stroke-linejoin="round"/>
<path d="M157.7,807.8l1.7,0 1.8,0 1.7,0 1.7,0 1.8,0 1.7,0 1.7,0 1.8,0 1.7,0 1.7,0 1.8,0 1.7,0 1.7,0 1.8-.1 1.7,.1 1.7,0 1.8,0 1.7,0 1.7,0 1.7,0 1.8-.1 1.7,0 1.7,0 1.8,0 1.7,0 1.7,0 1.8,0 1.7,0 1.7,0 1.8,0 1.7,0 1.7,0 1.8,0 1.7,0 1.7,0 1.8,0 1.7,0 1.7,0 1.8,0 1.7,0 1.7,0 1.8,0 1.7,0 1.7,0 1.8,0 1.7,0 1.7,0 1.8,0 1.7,0 1.7,0 1.8,0 1.7,0 1.7,0 1.7,0 1.8,0 1.7,0 1.7,0 1.8,0 1.7,0 1.7,0 1.8,0 1.7,0 1.7,0 1.8,0 1.7-.1 1.7,0 1.8,0 1.7,0 1.7,0 1.8,0 1.7,0 1.7,0 1.8,0 1.7,0 1.7,0 1.8,0 1.7,0 1.7,0 1.8,0 1.7,0 1.7,0 1.8,0 1.7,0 1.7,0 1.8,0 1.7,0 1.7,0 1.8,0 1.7,0 1.7,0 1.7,0 1.8,0 1.7,0 1.7-.1 1.8,0 1.7,0 1.7,0 1.8,.1 1.7,0 1.7-.1 1.8,.1 1.7-.1 1.7,0 1.8,0 1.7,0 1.7,0 1.8,0 1.7,0 1.7,0 1.8,0 1.7,0 1.7,0 1.8,0 1.7,0 1.7,0 1.8,0 1.7,0 1.7,0 1.8,0 1.7,0 1.7,0 1.8,0 1.7,0 1.7,0 1.7,0 1.8,0 1.7,0 1.7,0 1.8,0 1.7,0 1.7,0 1.8,0 1.7,0 1.7,0 1.8,0 1.7,0 1.7,0 1.8,0 1.7,0 1.7,0 1.8,0 1.7-.1 1.7,0 1.8,.1 1.7-.1 1.7,0 1.8,0 1.7,0 1.7,0 1.8,0 1.7,0 1.7,0 1.8,0 1.7,0 1.7,0 1.8,.1 1.7-.1 1.7,0 1.8,0 1.7,0 1.7,0 1.7,0 1.8,0 1.7,0 1.7,0 1.8,0 1.7,0 1.7,0 1.8,0 1.7,0 1.7,0 1.8,0 1.7,0 1.7,0 1.8,0 1.7,0 1.7,0 1.8,0 1.7,0 1.7-.1 1.8,0 1.7,0 1.7,0 1.8,0 1.7,0 1.7,0 1.8,0 1.7,.1 1.7-.1 1.8,0 1.7,0 1.7,0 1.8,0 1.7,0 1.7,0 1.8,0 1.7,0 1.7,0 1.7,0 1.8,0 1.7,0 1.7,0 1.8,0 1.7,0 1.7,0 1.8,0 1.7,0 1.7,0 1.8,0 1.7,0 1.7,0 1.8,0 1.7,0 1.7,0 1.8,0 1.7-.1 1.7,.1 1.8-.1 1.7,.1 1.7,0 1.8,0 1.7,0 1.7,0 1.8,0 1.7-.1 1.7,0 1.8,0 1.7,0 1.7,0 1.8,0 1.7,0 1.7,0 1.7,0 1.8,0 1.7,0 1.7,0 1.8,0 1.7,0 1.7,0 1.8,0 1.7,0 1.7,0 1.8,0 1.7,0 1.7,0 1.8,0 1.7,0 1.7,0 1.8,0 1.7,0 1.7,0 1.8,0 1.7,0 1.7,0 1.8,0 1.7,0 1.7,0 1.8-.1 1.7,.1 1.7,0 1.8,0 1.7,0 1.7,0 1.8,0 1.7,0 1.7,0 1.8,0 1.7,0 1.7,0 1.7,0 1.8-.1 1.7,0 1.7,0 1.8,0 1.7,0 1.7,0 1.8,0 1.7,0 1.7,0 1.8,0 1.7,0 1.7,0 1.8,0 1.7,0 1.7,0 1.8,0 1.7,0 1.7,0 1.8,0 1.7,0 1.7,0 1.8,0 1.7,0 1.7,0 1.8,0 1.7,0 1.7,0 1.8,0 1.7-.1 1.7,.1 1.8,0 1.7,0 1.7,0 1.7,0 1.8,0 1.7,0 1.7,0 1.8-.1 1.7,0 1.7,0 1.8,0 1.7,0 1.7,0 1.8,0 1.7,0 1.7,0 1.8,0 1.7,0 1.7,0 1.8,0 1.7,0 1.7,0 1.8,0 1.7,0 1.7,0 1.8,0 1.7,0 1.7,0 1.8,0 1.7,0 1.7,0 1.8,0 1.7,0 1.7,0 1.8,0 1.7,0 1.7,0 1.8,0 1.7,0 1.7,0 1.7,0 1.8-.1 1.7,0 1.7,0 1.8,.1 1.7-.1 1.7,0 1.8,0 1.7,0 1.7,0 1.8,0 1.7,0 1.7,0 1.8,0 1.7,0 1.7,0 1.8,0 1.7,0 1.7,0 1.8,0 1.7,0 1.7,0 1.8,0 1.7,0 1.7,0 1.8,0 1.7,0 1.7,0 1.8,0 1.7,0 1.7,0 1.8,0 1.7,0 1.7,0 1.7,0 1.8,0 1.7,0 1.7,0 1.8,0 1.7,0 1.7,0 1.8,0 1.7,0 1.7,0 1.8,0 1.7,0 1.7,0 1.8,0 1.7-.1 1.7,.1 1.8-.1 1.7,.1 1.7,0 1.8,0 1.7-.1 1.7,.1 1.8-.1 1.7,.1 1.7-.1 1.8,.1 1.7,0 1.7-.1 1.8,0 1.7,0 1.7,0 1.8,0 1.7,0 1.7,0 1.8,0 1.7,0 1.7,0 1.7,0 1.8,0 1.7,0 1.7,0 1.8-.1 1.7,.1 1.7-.1 1.8,.1 1.7,0 1.7,0 1.8,0 1.7-.1 1.7,.1 1.8,0 1.7,0 1.7,0 1.8,0 1.7-.1 1.7,.1 1.8,0 1.7-.1 1.7,0 1.8,0 1.7,.1 1.7-.1 1.8,0 1.7,0 1.7,.1 1.8-.1 1.7,.1 1.7-.1 1.8,0 1.7,0 1.7,0 1.8,0 1.7,0 1.7,0 1.7,0 1.8,0 1.7,0 1.7,0 1.8,0 1.7,0 1.7,0 1.8,0 1.7,0 1.7,0 1.8,0 1.7,0 1.7,0 1.8,0 1.7,0 1.7,0 1.8,0 1.7-.1 1.7,.1 1.8-.1 1.7,0 1.7,0 1.8,0 1.7,0 1.7,0 1.8,0 1.7,0 1.7,0 1.8,0 1.7,0 1.7,0 1.8,0 1.7,0 1.7,0 1.7,0 1.8,0 1.7,0 1.7,0 1.8,.1 1.7-.1 1.7,0 1.8,0 1.7-.1 1.7,.1 1.8,0 1.7,0 1.7,0 1.8,0 1.7,0 1.7,0 1.8-.1 1.7,0 1.7,0 1.8,0 1.7,0 1.7,0 1.8,.1 1.7,0 1.7,0 1.8,0 1.7-.1 1.7,0 1.8,0 1.7,0 1.7,.1 1.8,0 1.7,0 1.7-.1 1.8,0 1.7,0 1.7,0 1.7,0 1.8,0 1.7,0 1.7,0 1.8,0 1.7,0 1.7,0 1.8,0 1.7,0 1.7,0 1.8,0 1.7,0 1.7,0 1.8,0 1.7,0 1.7,0 1.8,0 1.7,0 1.7,0 1.8,0 1.7,0 1.7,0 1.8,0 1.7,0 1.7,0 1.8,0 1.7-.1 1.7,0 1.8,0 1.7-.1 1.7,0 1.8,0 1.7-.1 1.7,0 1.7,0 1.8-.1 1.7,.1 1.7-.1 1.8,0 1.7,0 1.7-.1 1.8,0 1.7,0 1.7-.1 1.8,0 1.7,0 1.7-.1 1.8,0 1.7-.1 1.7,0 1.8,0 1.7-.1 1.7,0 1.8,0 1.7,0 1.7-.1 1.8,0 1.7,0 1.7,0 1.8,0 1.7-.1 1.7,0 1.8,0 1.7-.1 1.7,0 1.8,0 1.7,0 1.7-.1 1.8-.1 1.7,0 1.7,0 1.7-.1 1.8,0 1.7,0 1.7,0 1.8-.1 1.7,0 1.7,0 1.8,0 1.7,0 1.7-.1 1.8,0 1.7,0 1.7,0 1.8,0 1.7-.1 1.7-.1 1.8,.1 1.7,0 1.7-.1 1.8,0 1.7-.1 1.7,0 1.8,0 1.7-.1 1.7,0 1.8-.1 1.7,0 1.7,.1 1.8-.1 1.7,0 1.7-.1 1.8,0 1.7,0 1.7,0 1.8-.1 1.7,0 1.7-.1 1.7,.1 1.8,0 1.7,.1 1.7-.2 1.8,0 1.7-.1 1.7-.1 1.8,0 1.7,0 1.7,.1 1.8-.1 1.7,.1 1.7-.1 1.8-.1 1.7,0 1.7,0 1.8-.1 1.7,.1 1.7,.1 1.8-.1 1.7,0 1.7-.1 1.8-.1 1.7,.1 1.7-.1 1.8-2.2 1.7-2.9 1.7-.4 1.8,0 1.7-.2 1.7,0 1.8-.2 1.7-.2 1.7-.2 1.7,0 1.8-.1 1.7-.4 1.7,0 1.8,0 1.7-.4 1.7-.1 1.8-.1 1.7-.1 1.7-.6 1.8-.1 1.7-.3 1.7,0 1.8,.2 1.7-.6 1.7,0 1.8-.3 1.7,0 1.7-.6 1.8,0 1.7-.1 1.7-.4 1.8,.1 1.7-.3 1.7,.2 1.8-.1 1.7-.5 1.7-.4 1.8-.2 1.7,.2 1.7-.2 1.8-.3 1.7-.1 1.7,0 1.8-.1 1.7,.3 1.7,.7 1.7,.7 1.8,.5 1.7,.3 1.7,.2 1.8-.1 1.7-.1 1.7,.2 1.8,0 1.7,.1 1.7,.1 1.8-.1 1.7,.3 1.7-.2 1.8,.4 1.7,.1 1.7-.1 1.8,.1 1.7,.1 1.7,.1 1.8-.2 1.7,.1 1.7,.1 1.8,.1 1.7,0 1.7,.1 1.8-.4 1.7-.5 1.7-.6 1.8-1.1 1.7-.9 1.7,0 1.8-.1 1.7,.1 1.7,0 1.7-.1 1.8,.3 1.7,0 1.7-.2 1.8,.3 1.7,0 1.7-.4 1.8-.2 1.7,.1 1.7,0 1.8-.1 1.7-.3 1.7,.1 1.8,0 1.7-.3 1.7,.3 1.8,.2 1.7-.2 1.7,0 1.8,0 1.7-.1 1.7-.1 1.8,0 1.7,.4 1.7-.2 1.8,.2 1.7-.1 1.7,.1 1.8-.1 1.7-.1 1.7,.2 1.8,.2 1.7,0 1.7,.1 1.8-.9 1.7,.5 1.7-.1 1.7-.2 1.8,0 1.7,.2 1.7,.3 1.8-.1 1.7,0 1.7,0 1.8-.7 1.7-.6 1.7-.9 1.8-.4 1.7-.4 1.7-.1 1.8-.8 1.7-.1 1.7,0 1.8-.2 1.7-.2 1.7-.2 1.8-.2 1.7-.2 1.7-.4 1.8-.1 1.7-.2 1.7-.2 1.8-.3 1.7,.1 1.7-.1 1.8-.3 1.7-.1 1.7-.2 1.8,.1 1.7,.2 1.7-.3 1.7,0 1.8,.2 1.7,0 1.7-.2 1.8-.2 1.7,.2 1.7,.2 1.8,.2 1.7,.3 1.7,0 1.8-.5 1.7,.3 1.7-.1 1.8,.1 1.7-.3 1.7,.1 1.8,.4 1.7,0 1.7-.3 1.8-.2 1.7,.4 1.7-.3 1.8-.2 1.7,.3 1.7-.5 1.8,0 1.7-.1 1.7-.3 1.8,0 1.7,.1 1.7-.2 1.8,.2 1.7,0 1.7-.1 1.8-.2 1.7,0 1.7,.1 1.7-.4 1.8,0 1.7,.3 1.7-.2 1.8-.1 1.7,.1 1.7-.4 1.8,0 1.7,.3 1.7-.7 1.8-.3 1.7,.4 1.7-.4 1.8-.6 1.7,.1 1.7,0 1.8,.2 1.7-.7 1.7-.4 1.8-.6 1.7,0 1.7-.2 1.8,0 1.7-.1 1.7,.2 1.8,0 1.7-.2 1.7,.2 1.8-.1 1.7-.3 1.7-.6 1.8,.1 1.7,0 1.7,0 1.8,.3 1.7,.3 1.7,.4 1.7-.5 1.8,.1 1.7-.1 1.7-.1 1.8-.5 1.7,.3 1.7,0 1.8-.2 1.7,0 1.7-.2 1.8,.1 1.7,1 1.7-.4 1.8-.4 1.7,.3 1.7-.2 1.8-.2 1.7,.2 1.7-.5 1.8,.4 1.7-.1 1.7-.1 1.8,.1 1.7,.1 1.7-.2 1.8-.4 1.7,.5 1.7-.4 1.8-.1 1.7,.6 1.7-.1 1.8,.1 1.7-.1 1.7,0 1.7-.3 1.8-.3 1.7,.4 1.7-.3 1.8,.4 1.7-.3 1.7-.1 1.8-.5 1.7-.2 1.7,0 1.8-.3 1.7-.4 1.7,0 1.8-.7 1.7,.5 1.7-.5 1.8-.4 1.7,.3 1.7,.2 1.8-.6 1.7,.8 1.7,.1 1.8-.2 1.7-.5 1.7-.3 1.8-.1 1.7-.2 1.7-16.3 1.8,.8 1.7,.3 1.7-.3 1.8,.7 1.7,0 1.7-.4 1.8,.2 1.7,.1 1.7,.7 1.7-.4 1.8-.5 1.7,1 1.7,.1 1.8-1 1.7,.2 1.7-.8 1.8,.3 1.7,.1 1.7,1.4 1.8-.4 1.7-.4 1.7-.3 1.8-.2 1.7-.2 1.7,.8 1.8-.1 1.7,.6 1.7,0 1.8-.1 1.7,.3 1.7-.8 1.8,.4 1.7,.9 1.7-.3 1.8,.7 1.7-.3 1.7-.3 1.8,.5 1.7,0 1.7,.7 1.8-.5 1.7,.6 1.7,0 1.7-.4 1.8,.3 1.7-.2 1.7,.2 1.8,.6 1.7,.5 1.7-.4 1.8,.5 1.7,0 1.7,.5 1.8,.6 1.7-.2 1.7-.5 1.8-.1 1.7-.7 1.7-.3 1.8,0 1.7-.4 1.7-1.2 1.8-.5 1.7,.1 1.7,.9 1.8-.9 1.7-1.4 1.7,.4 1.8-1 1.7,.1 1.7-.3 1.8,.3 1.7,0 1.7-.7 1.8,.2 1.7-1.4 1.7-.7 1.8,.4 1.7-.1 1.7-.6 1.7-1.1 1.8-.3 1.7-.7 1.7-.9 1.8,.6 1.7,.3 1.7-.8 1.8,0 1.7-.3 1.7-.4 1.8-.7 1.7,.3 1.7-1.5 1.8-.5 1.7,.7 1.7,.1 1.8,.1 1.7-.2 1.7-.1 1.8-.4 1.7-.6 1.7-.1 1.8-.4 1.7-1 1.7,.6 1.8-.5 1.7,0 1.7,1 1.8,.2 1.7,.4 1.7-.8 1.8-.1 1.7-.8 1.7,.4 1.7-.1 1.8,.5 1.7-.3 1.7-.6 1.8-.5 1.7,0 1.7,.1 1.8-.5 1.7,.4 1.7-.1 1.8,.1 1.7-.5 1.7,.5 1.8,.4 1.7,.6 1.7,.1 1.8-1.1 1.7,.6 1.7-.4 1.8,.6 1.7-.5 1.7-.4 1.8-.8 1.7-1 1.7,.1 1.8-.1 1.7-.3 1.7-.1 1.8,.2 1.7-.6 1.7,.5 1.8-.4 1.7,.3 1.7,.1 1.8,.1 1.7-.6 1.7,0 1.7-.2 1.8,.3 1.7-.2 .3-.4" fill="none" stroke="#8a2be2" stroke-width="1.5" stroke-linejoin="round"/>
<path d="M157.7,808.1l1.7,0 1.8,0 1.7,0 1.7,0 1.8,0 1.7,0 1.7,0 1.8,0 1.7,0 1.7,0 1.8,0 1.7,0 1.7,0 1.8,0 1.7,0 1.7,0 1.8-.1 1.7,.1 1.7,0 1.7-.1 1.8,0 1.7,0 1.7,0 1.8,0 1.7,0 1.7,0 1.8,0 1.7,0 1.7,0 1.8,0 1.7,0 1.7,0 1.8,0 1.7,0 1.7,0 1.8,0 1.7,0 1.7,0 1.8,0 1.7,0 1.7,0 1.8,0 1.7,0 1.7,0 1.8,0 1.7,0 1.7,0 1.8,0 1.7,0 1.7,0 1.8,0 1.7,0 1.7,0 1.7,0 1.8,0 1.7,0 1.7,0 1.8,0 1.7,0 1.7,0 1.8,0 1.7,0 1.7,0 1.8,0 1.7,0 1.7,0 1.8,0 1.7,0 1.7,0 1.8,0 1.7,0 1.7,0 1.8,0 1.7,0 1.7,0 1.8,0 1.7,0 1.7,0 1.8-.1 1.7,0 1.7,.1 1.8,0 1.7,0 1.7,0 1.8,0 1.7,0 1.7-.1 1.8,0 1.7,0 1.7,0 1.7,0 1.8,0 1.7,0 1.7,0 1.8,0 1.7,0 1.7,0 1.8,0 1.7,0 1.7,0 1.8,0 1.7,0 1.7,0 1.8,0 1.7,0 1.7,0 1.8,0 1.7,0 1.7,0 1.8,0 1.7,0 1.7,0 1.8,0 1.7,0 1.7,0 1.8,0 1.7,0 1.7,0 1.8,0 1.7,0 1.7,0 1.8,0 1.7,0 1.7,0 1.7,0 1.8,0 1.7,0 1.7,0 1.8,0 1.7,0 1.7,0 1.8,0 1.7,0 1.7,0 1.8,0 1.7,0 1.7,0 1.8,0 1.7,0 1.7,0 1.8,0 1.7,0 1.7,0 1.8,0 1.7,0 1.7-.1 1.8,.1 1.7-.1 1.7,.1 1.8-.1 1.7,0 1.7,.1 1.8-.1 1.7,0 1.7,0 1.8,0 1.7,0 1.7,0 1.8,0 1.7,0 1.7,0 1.7,0 1.8,0 1.7,0 1.7,0 1.8,0 1.7,0 1.7,0 1.8,0 1.7,0 1.7,0 1.8,0 1.7,0 1.7,0 1.8,0 1.7,0 1.7,0 1.8,0 1.7,0 1.7,0 1.8,0 1.7,0 1.7,0 1.8,0 1.7,0 1.7,0 1.8,0 1.7,0 1.7,0 1.8,0 1.7,0 1.7,0 1.8,0 1.7,0 1.7,0 1.8,0 1.7,0 1.7,0 1.7-.1 1.8,.1 1.7,0 1.7,0 1.8,0 1.7,0 1.7,0 1.8,0 1.7,0 1.7,0 1.8,0 1.7,0 1.7,0 1.8,0 1.7-.1 1.7,0 1.8,0 1.7,0 1.7,0 1.8,0 1.7,0 1.7,0 1.8,0 1.7,0 1.7,0 1.8,0 1.7,0 1.7,0 1.8,0 1.7,0 1.7,0 1.8,0 1.7,0 1.7,0 1.7,0 1.8,0 1.7,0 1.7,0 1.8,0 1.7,0 1.7,0 1.8,0 1.7,0 1.7,0 1.8,0 1.7,0 1.7,0 1.8,0 1.7,0 1.7,0 1.8,0 1.7,0 1.7,0 1.8,0 1.7,0 1.7,0 1.8,0 1.7,0 1.7,0 1.8,0 1.7,0 1.7,0 1.8,0 1.7,0 1.7,0 1.8,0 1.7,0 1.7,0 1.8,0 1.7,0 1.7,0 1.7,0 1.8,0 1.7,0 1.7-.1 1.8,0 1.7,0 1.7,0 1.8,.1 1.7-.1 1.7,0 1.8,0 1.7,0 1.7,0 1.8,0 1.7,0 1.7,0 1.8,0 1.7,0 1.7,0 1.8,0 1.7,0 1.7,0 1.8,0 1.7,0 1.7,0 1.8,0 1.7,0 1.7,0 1.8,0 1.7,0 1.7,0 1.8,0 1.7,0 1.7,0 1.7,0 1.8,0 1.7,0 1.7,0 1.8,0 1.7,0 1.7,0 1.8,0 1.7,0 1.7,0 1.8,0 1.7,0 1.7,0 1.8,0 1.7,0 1.7,0 1.8,0 1.7,0 1.7,0 1.8,0 1.7,0 1.7,0 1.8,0 1.7,0 1.7,0 1.8-.1 1.7,0 1.7,.1 1.8,0 1.7-.1 1.7,0 1.8,0 1.7,0 1.7,0 1.8,0 1.7,.1 1.7,0 1.7-.1 1.8,0 1.7,0 1.7,0 1.8,0 1.7,0 1.7,0 1.8,0 1.7,0 1.7,0 1.8,0 1.7,0 1.7,0 1.8,0 1.7,0 1.7,0 1.8,0 1.7,0 1.7,0 1.8,0 1.7,0 1.7,0 1.8,0 1.7,0 1.7,0 1.8,0 1.7,0 1.7,0 1.8,0 1.7,0 1.7,0 1.8,0 1.7,0 1.7,0 1.7,0 1.8,0 1.7,0 1.7,0 1.8,0 1.7,0 1.7,0 1.8,0 1.7,0 1.7,0 1.8,0 1.7,0 1.7,0 1.8,0 1.7,0 1.7,0 1.8,0 1.7,0 1.7,0 1.8,0 1.7,0 1.7,0 1.8,0 1.7,0 1.7,0 1.8,0 1.7,0 1.7-.1 1.8,0 1.7,.1 1.7,0 1.8,0 1.7-.1 1.7,0 1.8,.1 1.7,0 1.7-.1 1.7,0 1.8,0 1.7,0 1.7,0 1.8,0 1.7,0 1.7,0 1.8,0 1.7,0 1.7,0 1.8,0 1.7,0 1.7,0 1.8,0 1.7,0 1.7,0 1.8,0 1.7,0 1.7,0 1.8,0 1.7,0 1.7,0 1.8,0 1.7,0 1.7,0 1.8,0 1.7,0 1.7,0 1.8,0 1.7,0 1.7,0 1.8,0 1.7,0 1.7,0 1.8,0 1.7-.1 1.7,.1 1.7-.1 1.8,0 1.7,.1 1.7,0 1.8,0 1.7,0 1.7,0 1.8,0 1.7,0 1.7,0 1.8,0 1.7-.1 1.7,0 1.8,.1 1.7,0 1.7,0 1.8,0 1.7-.1 1.7,0 1.8,0 1.7,0 1.7,0 1.8,0 1.7,0 1.7,0 1.8,0 1.7,0 1.7,0 1.8,0 1.7,0 1.7,0 1.8,0 1.7,0 1.7,0 1.7,0 1.8,0 1.7,0 1.7,0 1.8,0 1.7,0 1.7,0 1.8,0 1.7,0 1.7,0 1.8,0 1.7,0 1.7,0 1.8,0 1.7,0 1.7,0 1.8,0 1.7,0 1.7,0 1.8,0 1.7,0 1.7,0 1.8,0 1.7,0 1.7,0 1.8,0 1.7,0 1.7,0 1.8,0 1.7,0 1.7,0 1.8,0 1.7,0 1.7,0 1.8,0 1.7,0 1.7,0 1.7,0 1.8,0 1.7,0 1.7,0 1.8-.1 1.7,0 1.7,.1 1.8,0 1.7,0 1.7,0 1.8,0 1.7,0 1.7-.1 1.8,0 1.7,0 1.7,0 1.8,0 1.7,0 1.7,0 1.8,0 1.7,0 1.7,0 1.8,.1 1.7,0 1.7-.1 1.8,.1 1.7-.1 1.7,0 1.8,0 1.7,0 1.7,0 1.8,0 1.7,0 1.7,0 1.7,0 1.8,0 1.7,0 1.7,0 1.8,0 1.7,0 1.7,0 1.8,0 1.7,0 1.7,0 1.8,0 1.7,0 1.7,0 1.8,0 1.7,0 1.7,0 1.8,0 1.7,0 1.7,0 1.8,0 1.7,0 1.7,0 1.8,0 1.7,0 1.7,0 1.8,0 1.7,0 1.7,0 1.8,0 1.7-.1 1.7,.1 1.8,0 1.7,0 1.7,0 1.8-.1 1.7,0 1.7,0 1.7,0 1.8,0 1.7,0 1.7,0 1.8,.1 1.7-.1 1.7,0 1.8,0 1.7,0 1.7,0 1.8,0 1.7,0 1.7,0 1.8,0 1.7,0 1.7,0 1.8,0 1.7,0 1.7,0 1.8,0 1.7,0 1.7,0 1.8,0 1.7,0 1.7,0 1.8,0 1.7,0 1.7,0 1.8,0 1.7,0 1.7,0 1.8,0 1.7,0 1.7,0 1.8,0 1.7,0 1.7,0 1.7,0 1.8,0 1.7,0 1.7,0 1.8,0 1.7,0 1.7,0 1.8,0 1.7,0 1.7,0 1.8,0 1.7,0 1.7,0 1.8,0 1.7,0 1.7,0 1.8,0 1.7,0 1.7,0 1.8,0 1.7,0 1.7,0 1.8-.1 1.7,0 1.7,0 1.8-3.2 1.7-4 1.7-.2 1.8,.5 1.7,0 1.7,.3 1.8,0 1.7,.1 1.7,.2 1.7,.3 1.8,.1 1.7-.1 1.7,.2 1.8,.2 1.7,0 1.7-.2 1.8-.3 1.7-.1 1.7-.6 1.8-.3 1.7-.3 1.7-.2 1.8-.1 1.7-.5 1.7-.2 1.8-.3 1.7-.1 1.7-.7 1.8-.2 1.7-.3 1.7-.4 1.8,0 1.7-.3 1.7,0 1.8-.2 1.7-.6 1.7-.5 1.8-.4 1.7,.1 1.7-.3 1.8-.5 1.7-.1 1.7-.2 1.8-.1 1.7,.5 1.7,.9 1.7,.9 1.8,.7 1.7,.6 1.7,.4 1.8,0 1.7-.1 1.7,.2 1.8,.1 1.7,.3 1.7,.1 1.8,0 1.7,.4 1.7-.1 1.8,.3 1.7,.1 1.7,.1 1.8,0 1.7,.2 1.7,.2 1.8-.1 1.7,.1 1.7,.2 1.8,.1 1.7,.2 1.7,.1 1.8,.1 1.7,.1 1.7,.1 1.8-.2 1.7-.3 1.7,0 1.8,0 1.7,.1 1.7,0 1.7-.2 1.8,0 1.7-.1 1.7-.1 1.8,.4 1.7-.2 1.7-.1 1.8-.1 1.7,0 1.7-.1 1.8-.2 1.7-.1 1.7,.1 1.8-.1 1.7-.1 1.7,.1 1.8,.1 1.7-.2 1.7,0 1.8,0 1.7-.1 1.7-.4 1.8,.2 1.7,.2 1.7-.1 1.8,.2 1.7-.1 1.7,.1 1.8-.3 1.7-.2 1.7,0 1.8,.3 1.7,0 1.7-.1 1.8-.6 1.7,.4 1.7-.2 1.7-.1 1.8-.1 1.7,.1 1.7,.1 1.8-.2 1.7,0 1.7,.1 1.8-.1 1.7-.1 1.7-.2 1.8,.1 1.7,.2 1.7-.1 1.8-.2 1.7,.2 1.7-.1 1.8,.1 1.7-.2 1.7,0 1.8,0 1.7-.1 1.7-.2 1.8,0 1.7,.1 1.7-.3 1.8,0 1.7,.2 1.7-.1 1.8-.1 1.7,.1 1.7,0 1.8-.3 1.7,.1 1.7-.3 1.7,0 1.8,0 1.7,.2 1.7-.1 1.8,0 1.7-.1 1.7,.1 1.8,0 1.7,.2 1.7-.3 1.8,0 1.7,0 1.7,0 1.8-.2 1.7-.2 1.7,0 1.8,.2 1.7,0 1.7-.1 1.8,0 1.7,0 1.7,.1 1.8-.2 1.7,.1 1.7,0 1.8-.2 1.7-.1 1.7,0 1.8-.2 1.7,.1 1.7,0 1.8,0 1.7-.1 1.7-.1 1.8-.3 1.7,.2 1.7,.1 1.7-.2 1.8-.1 1.7-.1 1.7,0 1.8-.1 1.7,0 1.7,0 1.8,.2 1.7,.1 1.7,0 1.8-.3 1.7,.2 1.7-.2 1.8-.2 1.7,.1 1.7,0 1.8,.2 1.7-.2 1.7-.2 1.8,0 1.7,.2 1.7-.1 1.8,0 1.7,.2 1.7-.2 1.8,.1 1.7-.1 1.7,0 1.8-.4 1.7,.1 1.7-.2 1.8,0 1.7,.2 1.7-.1 1.8,.1 1.7,.1 1.7,0 1.7-.2 1.8,0 1.7-.2 1.7,0 1.8-.3 1.7,0 1.7,.1 1.8-.2 1.7,0 1.7-.2 1.8,0 1.7,.5 1.7-.3 1.8,0 1.7,.2 1.7-.1 1.8-.1 1.7-.1 1.7-.4 1.8,.4 1.7,0 1.7,0 1.8,.1 1.7-.1 1.7,0 1.8-.4 1.7,.1 1.7-.1 1.8,0 1.7,.4 1.7-.2 1.8-.1 1.7,.1 1.7-.4 1.7,.1 1.8-.2 1.7,.1 1.7-.1 1.8,.1 1.7-.1 1.7-.1 1.8-.1 1.7,.1 1.7-.2 1.8-.1 1.7-.1 1.7,.1 1.8,0 1.7,.1 1.7-.1 1.8,0 1.7,.1 1.7,0 1.8-.1 1.7,.2 1.7,.4 1.8-.3 1.7-.2 1.7-.2 1.8-.5 1.7-.7 1.7-12.6 1.8,.2 1.7,.5 1.7-.4 1.8,.4 1.7-.2 1.7-.2 1.8,.3 1.7-.1 1.7-.2 1.7,0 1.8-.5 1.7,.4 1.7,.1 1.8-.9 1.7,.1 1.7-.8 1.8,.1 1.7,.2 1.7,.6 1.8-.2 1.7-.5 1.7-.3 1.8,0 1.7,0 1.7,.3 1.8-.2 1.7,.2 1.7,0 1.8-.2 1.7,0 1.7-.4 1.8,.3 1.7,.6 1.7-.2 1.8,0 1.7-.4 1.7,0 1.8,0 1.7-.4 1.7,.3 1.8-.4 1.7,.6 1.7-.2 1.7-.6 1.8-.1 1.7-.5 1.7,.1 1.8,.3 1.7,.3 1.7-.6 1.8,.1 1.7-.1 1.7,.1 1.8,.4 1.7-.6 1.7-.3 1.8,.2 1.7-.1 1.7,.1 1.8,.1 1.7,0 1.7-.4 1.8-.3 1.7,.4 1.7,.7 1.8-.5 1.7-.8 1.7,.4 1.8-.8 1.7,.4 1.7,.1 1.8,.8 1.7,0 1.7-.1 1.8-.2 1.7-1 1.7,0 1.8,.5 1.7,.2 1.7-.2 1.7-.2 1.8-.4 1.7,0 1.7-.1 1.8,.6 1.7,.2 1.7-.5 1.8,.1 1.7,0 1.7-.4 1.8-.6 1.7,.4 1.7-.5 1.8-.3 1.7,.6 1.7,.8 1.8,.1 1.7-.2 1.7-.3 1.8-.2 1.7-.6 1.7-.1 1.8-.3 1.7-.6 1.7,.6 1.8,0 1.7,.2 1.7,.5 1.8-.2 1.7,.2 1.7-.8 1.8,.5 1.7-.8 1.7,.4 1.7,.1 1.8-.2 1.7,.2 1.7-.5 1.8-.1 1.7,0 1.7,.5 1.8-.2 1.7,.2 1.7,0 1.8-.3 1.7-.6 1.7,.2 1.8,.6 1.7,.4 1.7,0 1.8-.7 1.7,.2 1.7,.3 1.8,.5 1.7-.4 1.7-.3 1.8-.2 1.7-.8 1.7,0 1.8-.4 1.7,.2 1.7-.3 1.8-.1 1.7-.4 1.7,.9 1.8-.4 1.7,.3 1.7,.7 1.8-.3 1.7-.3 1.7,.5 1.7,.2 1.8-.6 1.7,0 .3-.5" fill="none" stroke="#a9bdd8" stroke-width="1.3" stroke-linejoin="round"/>
<path d="M157.7,808.2l1.7,0 1.8,0 1.7,0 1.7,0 1.8,0 1.7,0 1.7,0 1.8,0 1.7,0 1.7,0 1.8,0 1.7,0 1.7,0 1.8,0 1.7,0 1.7,0 1.8,0 1.7,0 1.7,0 1.7,0 1.8,0 1.7,0 1.7,0 1.8,0 1.7,0 1.7,0 1.8,0 1.7,0 1.7,0 1.8,0 1.7,0 1.7,0 1.8,0 1.7,0 1.7,0 1.8,0 1.7,0 1.7,0 1.8,0 1.7,0 1.7,0 1.8,0 1.7-.1 1.7,0 1.8,0 1.7,.1 1.7,0 1.8-.1 1.7,0 1.7,0 1.8,0 1.7,0 1.7,0 1.7,0 1.8,0 1.7,0 1.7,0 1.8,0 1.7,0 1.7,0 1.8,0 1.7,0 1.7,0 1.8,0 1.7,0 1.7,0 1.8,0 1.7,0 1.7,0 1.8,0 1.7,0 1.7,0 1.8,0 1.7,0 1.7,0 1.8,0 1.7,0 1.7,0 1.8,0 1.7,0 1.7,0 1.8,0 1.7,0 1.7,0 1.8,0 1.7,0 1.7,0 1.8,0 1.7,0 1.7,0 1.7,0 1.8,0 1.7,0 1.7,0 1.8,0 1.7,0 1.7,0 1.8,0 1.7,0 1.7-.1 1.8,0 1.7,0 1.7,0 1.8,.1 1.7-.1 1.7,0 1.8,0 1.7,0 1.7,0 1.8,0 1.7,0 1.7,0 1.8,0 1.7,0 1.7,0 1.8,0 1.7,0 1.7,0 1.8,0 1.7,0 1.7,0 1.8,0 1.7,0 1.7,0 1.7,0 1.8,0 1.7,0 1.7,0 1.8,0 1.7,0 1.7,0 1.8,0 1.7,0 1.7,0 1.8,0 1.7,0 1.7,0 1.8,0 1.7,0 1.7,0 1.8,0 1.7,0 1.7,0 1.8,0 1.7,0 1.7,0 1.8,0 1.7,0 1.7,0 1.8,0 1.7,0 1.7,0 1.8,0 1.7,0 1.7,0 1.8,0 1.7,0 1.7,0 1.8,0 1.7,0 1.7,0 1.7,0 1.8,0 1.7,0 1.7,0 1.8,0 1.7,0 1.7-.1 1.8,0 1.7,0 1.7,0 1.8,0 1.7,0 1.7,0 1.8,.1 1.7-.1 1.7,0 1.8,0 1.7,0 1.7,0 1.8,0 1.7,0 1.7,0 1.8,0 1.7,0 1.7,0 1.8,0 1.7,0 1.7,0 1.8,0 1.7,0 1.7,0 1.8,0 1.7,0 1.7,0 1.8,0 1.7,0 1.7,0 1.7,0 1.8,0 1.7,0 1.7,0 1.8,0 1.7,0 1.7,0 1.8,0 1.7,0 1.7,0 1.8,0 1.7,0 1.7,0 1.8,0 1.7,0 1.7,0 1.8,0 1.7,0 1.7,0 1.8,0 1.7,0 1.7,0 1.8,0 1.7,0 1.7,0 1.8,0 1.7,0 1.7,0 1.8,0 1.7,0 1.7,0 1.8,0 1.7,0 1.7-.1 1.7,0 1.8,0 1.7,.1 1.7-.1 1.8,.1 1.7,0 1.7,0 1.8-.1 1.7,0 1.7,0 1.8,0 1.7,0 1.7,0 1.8,0 1.7,0 1.7,0 1.8,0 1.7,0 1.7,0 1.8,0 1.7,0 1.7,0 1.8,0 1.7,0 1.7,0 1.8,0 1.7,0 1.7,0 1.8,0 1.7,0 1.7,0 1.8,0 1.7,0 1.7,0 1.8,0 1.7,0 1.7,0 1.7,0 1.8,0 1.7,0 1.7,0 1.8,0 1.7,0 1.7,0 1.8,0 1.7,0 1.7,0 1.8,0 1.7,0 1.7,0 1.8,0 1.7,0 1.7,0 1.8,0 1.7,0 1.7,0 1.8-.1 1.7,0 1.7,0 1.8,.1 1.7-.1 1.7,0 1.8,0 1.7,0 1.7,0 1.8,0 1.7,0 1.7,0 1.8,0 1.7,0 1.7,0 1.7,0 1.8,0 1.7,0 1.7,0 1.8,0 1.7,0 1.7,0 1.8,0 1.7,0 1.7,0 1.8,0 1.7,0 1.7,0 1.8,0 1.7,0 1.7,0 1.8,0 1.7,0 1.7,0 1.8,0 1.7,0 1.7,0 1.8,0 1.7,0 1.7,0 1.8,0 1.7,0 1.7,0 1.8,0 1.7,0 1.7,0 1.8,0 1.7,0 1.7,0 1.8,0 1.7,0 1.7,0 1.7,0 1.8,0 1.7,0 1.7,0 1.8,0 1.7,0 1.7,0 1.8,0 1.7,0 1.7,0 1.8,0 1.7-.1 1.7,0 1.8,.1 1.7,0 1.7,0 1.8-.1 1.7,.1 1.7,0 1.8,0 1.7,0 1.7,0 1.8,0 1.7,0 1.7,0 1.8,0 1.7-.1 1.7,0 1.8,0 1.7,0 1.7,.1 1.8-.1 1.7,0 1.7,0 1.7,0 1.8,.1 1.7-.1 1.7,0 1.8,0 1.7,0 1.7,0 1.8,0 1.7,0 1.7,.1 1.8-.1 1.7,0 1.7,0 1.8,0 1.7,0 1.7,0 1.8,0 1.7,0 1.7,0 1.8,0 1.7,0 1.7,0 1.8,0 1.7,0 1.7,0 1.8,0 1.7,0 1.7,0 1.8,0 1.7,0 1.7,0 1.8,0 1.7,0 1.7,0 1.8,0 1.7,0 1.7,0 1.7,0 1.8,0 1.7,0 1.7,0 1.8-.1 1.7,0 1.7,0 1.8,0 1.7,.1 1.7-.1 1.8,.1 1.7-.1 1.7,.1 1.8,0 1.7-.1 1.7,.1 1.8-.1 1.7,0 1.7,0 1.8,0 1.7,0 1.7,0 1.8,0 1.7,0 1.7,0 1.8,0 1.7,0 1.7,0 1.8,.1 1.7,0 1.7-.1 1.8,0 1.7,0 1.7,0 1.8,0 1.7,0 1.7,0 1.7,0 1.8,0 1.7,0 1.7,0 1.8,0 1.7,0 1.7,0 1.8,0 1.7,0 1.7,0 1.8,0 1.7,0 1.7,0 1.8,0 1.7,0 1.7,0 1.8,0 1.7,0 1.7,0 1.8,0 1.7,0 1.7,0 1.8,0 1.7,0 1.7,0 1.8,0 1.7,0 1.7,0 1.8,0 1.7-.1 1.7,0 1.8,.1 1.7,0 1.7,0 1.7,0 1.8,0 1.7,0 1.7,0 1.8,0 1.7,0 1.7-.1 1.8,0 1.7,0 1.7,0 1.8,0 1.7,0 1.7,0 1.8,0 1.7,0 1.7,0 1.8,0 1.7,0 1.7,0 1.8,0 1.7,0 1.7,0 1.8,0 1.7,0 1.7,0 1.8,0 1.7,0 1.7,0 1.8,0 1.7,0 1.7,0 1.8,0 1.7,0 1.7,0 1.8,0 1.7,0 1.7,0 1.7,0 1.8,0 1.7,0 1.7,0 1.8,0 1.7,0 1.7,0 1.8,0 1.7,0 1.7,0 1.8,0 1.7,0 1.7,0 1.8,0 1.7,0 1.7,0 1.8,0 1.7,0 1.7,0 1.8,0 1.7,0 1.7,0 1.8,0 1.7,0 1.7,0 1.8,0 1.7,0 1.7,0 1.8,0 1.7,0 1.7,0 1.8,0 1.7,0 1.7,0 1.7,0 1.8-.1 1.7,0 1.7,.1 1.8-.1 1.7,.1 1.7-.1 1.8,0 1.7,0 1.7,.1 1.8,0 1.7,0 1.7,0 1.8-.1 1.7,0 1.7,0 1.8,0 1.7,0 1.7,0 1.8,0 1.7,0 1.7,0 1.8,0 1.7,0 1.7,0 1.8,0 1.7,0 1.7,0 1.8,0 1.7,0 1.7,0 1.8,0 1.7,0 1.7,0 1.8,0 1.7,0 1.7,0 1.7,0 1.8,0 1.7,0 1.7,0 1.8,0 1.7,0 1.7-.1 1.8,.1 1.7,0 1.7,0 1.8,0 1.7,0 1.7,0 1.8-.1 1.7,0 1.7,.1 1.8,0 1.7,0 1.7,0 1.8,0 1.7,0 1.7,0 1.8-.1 1.7,0 1.7,0 1.8,0 1.7,.1 1.7,0 1.8,0 1.7,0 1.7,0 1.8,0 1.7,0 1.7-.1 1.8,0 1.7,0 1.7,0 1.7,0 1.8,0 1.7,0 1.7,0 1.8,0 1.7,0 1.7,0 1.8,0 1.7,0 1.7,.1 1.8,0 1.7-.1 1.7,.1 1.8-.1 1.7,0 1.7,0 1.8,0 1.7,0 1.7,0 1.8,0 1.7,0 1.7,0 1.8,0 1.7,0 1.7,0 1.8-3 1.7-3.7 1.7-.1 1.8,.4 1.7,.1 1.7,.3 1.8,0 1.7,.2 1.7,.2 1.7,.2 1.8,.2 1.7-.1 1.7,.2 1.8,.2 1.7,.1 1.7-.3 1.8-.2 1.7-.2 1.7-.5 1.8-.3 1.7-.3 1.7-.2 1.8-.1 1.7-.5 1.7-.2 1.8-.3 1.7-.1 1.7-.7 1.8-.1 1.7-.3 1.7-.4 1.8,0 1.7-.3 1.7,0 1.8-.2 1.7-.6 1.7-.5 1.8-.3 1.7,0 1.7-.2 1.8-.6 1.7-.1 1.7-.2 1.8-.1 1.7,.5 1.7,1 1.7,.9 1.8,.8 1.7,.6 1.7,.4 1.8,0 1.7-.1 1.7,.2 1.8,.1 1.7,.3 1.7,.1 1.8,0 1.7,.4 1.7-.1 1.8,.3 1.7,.2 1.7,0 1.8,0 1.7,.2 1.7,.2 1.8-.1 1.7,.2 1.7,.2 1.8,.1 1.7,.2 1.7,.2 1.8,.1 1.7,0 1.7,0 1.8-.2 1.7-.3 1.7-.1 1.8,0 1.7,0 1.7,0 1.7-.3 1.8,0 1.7-.1 1.7-.1 1.8,.3 1.7-.2 1.7-.1 1.8-.1 1.7-.1 1.7-.1 1.8-.2 1.7-.2 1.7,0 1.8,0 1.7-.2 1.7,.1 1.8,0 1.7-.2 1.7,.1 1.8,.1 1.7,0 1.7-.2 1.8,.3 1.7,.3 1.7,0 1.8,.3 1.7,.1 1.7,.2 1.8-.2 1.7-.1 1.7,.2 1.8,.3 1.7,.1 1.7,.1 1.8-.4 1.7,.3 1.7,0 1.7,0 1.8,.1 1.7,.1 1.7,.2 1.8,0 1.7,0 1.7,.3 1.8-.1 1.7,0 1.7-.4 1.8,0 1.7,.1 1.7-.1 1.8-.2 1.7,0 1.7-.1 1.8,0 1.7-.2 1.7-.1 1.8-.1 1.7-.1 1.7-.2 1.8,0 1.7-.1 1.7-.3 1.8,0 1.7,.1 1.7-.2 1.8,0 1.7,0 1.7,0 1.8-.2 1.7,.2 1.7-.3 1.7,0 1.8,.1 1.7,.2 1.7,0 1.8,0 1.7,0 1.7,.2 1.8-.1 1.7,.2 1.7-.3 1.8,.1 1.7,.1 1.7,0 1.8-.1 1.7-.2 1.7,0 1.8,.4 1.7,0 1.7-.1 1.8-.1 1.7,0 1.7,.2 1.8-.1 1.7,.2 1.7-.1 1.8-.1 1.7,.1 1.7,.1 1.8-.1 1.7,0 1.7,.1 1.8,.1 1.7,0 1.7-.1 1.8-.1 1.7,.1 1.7,0 1.7-.1 1.8,0 1.7,0 1.7,.1 1.8-.2 1.7,0 1.7,0 1.8,.2 1.7-.1 1.7,0 1.8-.2 1.7,0 1.7-.1 1.8-.1 1.7-.2 1.7,.1 1.8,.1 1.7-.3 1.7-.2 1.8,0 1.7,0 1.7-.1 1.8,0 1.7,.1 1.7-.1 1.8,.1 1.7-.2 1.7-.1 1.8-.3 1.7,.1 1.7-.2 1.8-.1 1.7,.2 1.7-.2 1.8-.1 1.7,0 1.7,.1 1.7-.3 1.8-.1 1.7-.2 1.7,0 1.8-.4 1.7,0 1.7,.1 1.8-.3 1.7,.1 1.7-.3 1.8,0 1.7,.3 1.7-.3 1.8,0 1.7,.1 1.7-.1 1.8-.1 1.7-.1 1.7-.4 1.8,.3 1.7,0 1.7,0 1.8,0 1.7-.1 1.7,0 1.8-.5 1.7,0 1.7-.1 1.8,0 1.7,.3 1.7-.2 1.8-.1 1.7,0 1.7-.4 1.7,.1 1.8-.3 1.7,.1 1.7-.1 1.8,0 1.7-.1 1.7-.1 1.8-.2 1.7,.1 1.7-.2 1.8-.1 1.7-.1 1.7,0 1.8-.1 1.7,0 1.7-.1 1.8,0 1.7,0 1.7,0 1.8-.2 1.7,.2 1.7,.4 1.8-.3 1.7-.2 1.7-.3 1.8-.1 1.7,.4 1.7-9 1.8,.2 1.7,.6 1.7-.2 1.8,.4 1.7,.1 1.7-.2 1.8,.3 1.7-.2 1.7,0 1.7,.3 1.8-.4 1.7,.5 1.7,0 1.8-.7 1.7,.2 1.7-.4 1.8,0 1.7,.2 1.7,.6 1.8,0 1.7-.2 1.7-.2 1.8,.3 1.7,.1 1.7,.2 1.8,.1 1.7,.2 1.7,.1 1.8-.2 1.7,.3 1.7-.4 1.8,.4 1.7,.3 1.7-.1 1.8,0 1.7-.2 1.7-.4 1.8-.1 1.7-.2 1.7,.7 1.8-.5 1.7,.2 1.7-.5 1.7-.5 1.8-.2 1.7-.3 1.7,.3 1.8,.3 1.7,.1 1.7-.7 1.8,.1 1.7,0 1.7,.1 1.8,.3 1.7-.5 1.7-.2 1.8,0 1.7-.1 1.7,.2 1.8,.1 1.7-.1 1.7-.5 1.8-.3 1.7,.4 1.7,.6 1.8-.6 1.7-.9 1.7,.4 1.8-.5 1.7,0 1.7,.2 1.8,.7 1.7-.2 1.7,.2 1.8-.3 1.7-.9 1.7,0 1.8,.5 1.7,.1 1.7-.3 1.7-.1 1.8-.5 1.7,0 1.7,0 1.8,.2 1.7,.1 1.7-.4 1.8,.1 1.7-.2 1.7-.1 1.8-.7 1.7,.4 1.7-.4 1.8-.3 1.7,.6 1.7,.8 1.8,.3 1.7-.2 1.7-.3 1.8-.2 1.7-.3 1.7,0 1.8-.2 1.7-.4 1.7,.5 1.8,.2 1.7,.3 1.7,.5 1.8-.1 1.7,.4 1.7-.5 1.8,.4 1.7-.6 1.7,.6 1.7,.1 1.8-.3 1.7,.1 1.7-.3 1.8,.5 1.7-.1 1.7,.5 1.8-.2 1.7,.3 1.7,.1 1.8,0 1.7-.3 1.7,.4 1.8,.3 1.7,.4 1.7-.1 1.8-.6 1.7,.1 1.7,.8 1.8,.1 1.7,0 1.7,0 1.8-.5 1.7-.3 1.7,.3 1.8-.1 1.7,.1 1.7-.1 1.8-.2 1.7,0 1.7,.8 1.8-.2 1.7,.1 1.7,.6 1.8-.4 1.7,0 1.7,.3 1.7,.5 1.8-.5 1.7-.2 .3-.2" fill="none" stroke="#f04a12" stroke-width="1.5" stroke-linejoin="round"/>
<path d="M157.7,808.4l1.7,0 1.8,0 1.7,0 1.7,0 1.8,0 1.7,0 1.7,0 1.8,0 1.7,0 1.7-.1 1.8,0 1.7,0 1.7,0 1.8,0 1.7,0 1.7,0 1.8,0 1.7,0 1.7,0 1.7,0 1.8,0 1.7,0 1.7,0 1.8,0 1.7,0 1.7,0 1.8,0 1.7,0 1.7,0 1.8,0 1.7,0 1.7,0 1.8,0 1.7,0 1.7,0 1.8,0 1.7,0 1.7,0 1.8,0 1.7,0 1.7,0 1.8,0 1.7,0 1.7,0 1.8,0 1.7,0 1.7,0 1.8,0 1.7,0 1.7,0 1.8,0 1.7,0 1.7,0 1.7,0 1.8,0 1.7,0 1.7,0 1.8,0 1.7,0 1.7,0 1.8,0 1.7,0 1.7,0 1.8,0 1.7,0 1.7,0 1.8,0 1.7,0 1.7,0 1.8,0 1.7,0 1.7,0 1.8,0 1.7,0 1.7,0 1.8,0 1.7,0 1.7,0 1.8-.1 1.7,0 1.7,.1 1.8,0 1.7-.1 1.7,0 1.8,0 1.7,0 1.7,0 1.8,0 1.7,0 1.7,0 1.7,0 1.8,0 1.7,0 1.7,0 1.8,0 1.7,0 1.7,0 1.8,0 1.7,0 1.7,0 1.8,0 1.7,0 1.7,0 1.8,0 1.7,0 1.7,0 1.8,0 1.7,0 1.7,0 1.8,0 1.7,0 1.7,0 1.8,0 1.7,0 1.7,0 1.8,0 1.7,0 1.7,0 1.8,0 1.7,0 1.7,0 1.8,0 1.7,0 1.7,0 1.7,0 1.8,0 1.7,0 1.7,0 1.8,0 1.7,0 1.7,0 1.8,0 1.7,0 1.7,0 1.8,0 1.7,0 1.7,0 1.8,0 1.7,0 1.7,0 1.8,0 1.7,0 1.7,0 1.8,0 1.7,0 1.7,0 1.8,0 1.7,0 1.7,0 1.8-.1 1.7,0 1.7,.1 1.8,0 1.7,0 1.7,0 1.8,0 1.7-.1 1.7,0 1.8,0 1.7,0 1.7,0 1.7,0 1.8,0 1.7,0 1.7,0 1.8,0 1.7,0 1.7,0 1.8,0 1.7,0 1.7,0 1.8,0 1.7,0 1.7,0 1.8,0 1.7,0 1.7,0 1.8,0 1.7,0 1.7,0 1.8,0 1.7,0 1.7,0 1.8,0 1.7,0 1.7,0 1.8,0 1.7,0 1.7,0 1.8,0 1.7,0 1.7,0 1.8,0 1.7,0 1.7,0 1.8,0 1.7,0 1.7,0 1.7,0 1.8,0 1.7,0 1.7,0 1.8,0 1.7,0 1.7,0 1.8,0 1.7,0 1.7,0 1.8,0 1.7,0 1.7,0 1.8,0 1.7,0 1.7,0 1.8,0 1.7,0 1.7,0 1.8,0 1.7,0 1.7,0 1.8,0 1.7,0 1.7,0 1.8,0 1.7,0 1.7,0 1.8,0 1.7-.1 1.7,0 1.8,0 1.7,0 1.7,0 1.7,0 1.8,0 1.7,0 1.7,0 1.8,0 1.7,0 1.7,0 1.8,0 1.7,0 1.7,0 1.8,0 1.7,0 1.7,0 1.8,0 1.7,0 1.7,0 1.8,0 1.7,0 1.7,0 1.8,0 1.7,0 1.7,0 1.8,0 1.7,0 1.7,0 1.8,0 1.7,0 1.7,0 1.8,0 1.7,0 1.7,0 1.8,0 1.7,0 1.7,0 1.8,0 1.7,0 1.7,0 1.7,0 1.8,0 1.7,0 1.7,0 1.8,0 1.7,0 1.7,0 1.8,0 1.7,0 1.7,0 1.8,0 1.7,0 1.7,0 1.8,0 1.7,0 1.7,0 1.8,0 1.7,0 1.7,0 1.8,0 1.7,0 1.7,0 1.8,0 1.7-.1 1.7,0 1.8,0 1.7,.1 1.7,0 1.8-.1 1.7,0 1.7,.1 1.8-.1 1.7,0 1.7,0 1.7,0 1.8,0 1.7,0 1.7,0 1.8,0 1.7,0 1.7,0 1.8,0 1.7,0 1.7,0 1.8,0 1.7,0 1.7,0 1.8,0 1.7,0 1.7,0 1.8,0 1.7,0 1.7,0 1.8,0 1.7,0 1.7,0 1.8,0 1.7,0 1.7,0 1.8,0 1.7,0 1.7,0 1.8,0 1.7,0 1.7,0 1.8,0 1.7,0 1.7,0 1.8,0 1.7,0 1.7,0 1.7,0 1.8,0 1.7,0 1.7,0 1.8,0 1.7,0 1.7,0 1.8,0 1.7,0 1.7,0 1.8,0 1.7,0 1.7,0 1.8,0 1.7,0 1.7,0 1.8,0 1.7,0 1.7,0 1.8,0 1.7,0 1.7,0 1.8,0 1.7,0 1.7,0 1.8,0 1.7,0 1.7,0 1.8,0 1.7,0 1.7,0 1.8,0 1.7,0 1.7-.1 1.7,.1 1.8,0 1.7,0 1.7,0 1.8-.1 1.7,.1 1.7-.1 1.8,0 1.7,.1 1.7,0 1.8,0 1.7,0 1.7,0 1.8-.1 1.7,0 1.7,0 1.8,0 1.7,0 1.7,0 1.8,.1 1.7-.1 1.7,0 1.8,.1 1.7,0 1.7-.1 1.8,0 1.7,0 1.7,0 1.8,0 1.7,0 1.7,0 1.8,0 1.7,0 1.7,0 1.8,0 1.7,0 1.7,0 1.7,0 1.8,0 1.7,0 1.7,0 1.8,0 1.7,0 1.7,0 1.8,0 1.7,0 1.7,0 1.8,0 1.7,0 1.7,0 1.8,0 1.7,0 1.7,0 1.8,0 1.7,0 1.7,0 1.8,0 1.7,0 1.7,0 1.8,0 1.7,0 1.7,0 1.8,0 1.7,0 1.7,0 1.8,0 1.7,0 1.7,0 1.8,0 1.7,0 1.7,0 1.8-.1 1.7,0 1.7,.1 1.7-.1 1.8,0 1.7,.1 1.7-.1 1.8,.1 1.7,0 1.7-.1 1.8,0 1.7,.1 1.7,0 1.8-.1 1.7,0 1.7,0 1.8,0 1.7,0 1.7,0 1.8,0 1.7,0 1.7,0 1.8,0 1.7,0 1.7,0 1.8,0 1.7,0 1.7,0 1.8,0 1.7,0 1.7,0 1.8,0 1.7,0 1.7,0 1.8,0 1.7,0 1.7,0 1.7,0 1.8,0 1.7,0 1.7,0 1.8,0 1.7,0 1.7,0 1.8,0 1.7,0 1.7,0 1.8,0 1.7,0 1.7,0 1.8,0 1.7,0 1.7,0 1.8,0 1.7,0 1.7,0 1.8,0 1.7,0 1.7,0 1.8,0 1.7,0 1.7,0 1.8,0 1.7,0 1.7,0 1.8,0 1.7,0 1.7,0 1.8,0 1.7,0 1.7,0 1.8,0 1.7-.1 1.7,.1 1.7-.1 1.8,0 1.7,0 1.7,0 1.8,0 1.7,0 1.7,.1 1.8,0 1.7,0 1.7,0 1.8,0 1.7,0 1.7-.1 1.8,0 1.7,0 1.7,0 1.8,0 1.7,0 1.7,0 1.8,0 1.7,0 1.7,0 1.8,.1 1.7-.1 1.7,0 1.8,.1 1.7-.1 1.7,0 1.8,0 1.7,0 1.7,0 1.8,0 1.7,0 1.7,0 1.7,0 1.8,0 1.7,0 1.7,0 1.8,0 1.7,0 1.7,0 1.8,0 1.7,0 1.7,0 1.8,0 1.7,0 1.7,0 1.8,0 1.7,0 1.7,0 1.8,0 1.7,0 1.7,0 1.8,0 1.7,0 1.7,0 1.8,0 1.7,0 1.7,0 1.8,0 1.7,0 1.7,0 1.8,0 1.7,0 1.7,0 1.8,0 1.7,0 1.7,0 1.8,0 1.7,0 1.7,0 1.7,0 1.8,0 1.7,0 1.7,0 1.8,0 1.7-.1 1.7,0 1.8,.1 1.7-.1 1.7,0 1.8,0 1.7,0 1.7,0 1.8,0 1.7,0 1.7,0 1.8,0 1.7,.1 1.7-.1 1.8,0 1.7,0 1.7,0 1.8,0 1.7,0 1.7,0 1.8,0 1.7,0 1.7,0 1.8,0 1.7,0 1.7,0 1.8,.1 1.7-.1 1.7,0 1.8,0 1.7,0 1.7,0 1.7,0 1.8,0 1.7,0 1.7,0 1.8,0 1.7,0 1.7,0 1.8,0 1.7,0 1.7,0 1.8,0 1.7,0 1.7,0 1.8,0 1.7,0 1.7,0 1.8,0 1.7,0 1.7,0 1.8,0 1.7,0 1.7,0 1.8,0 1.7,0 1.7,0 1.8-.1 1.7-.3 1.7,0 1.8-.1 1.7,.1 1.7-.1 1.8,0 1.7,0 1.7,.1 1.7-.1 1.8,0 1.7,0 1.7,0 1.8,0 1.7,0 1.7,0 1.8,0 1.7,0 1.7,0 1.8,0 1.7,0 1.7,0 1.8,0 1.7-.1 1.7,0 1.8,0 1.7,.1 1.7-.1 1.8,0 1.7,.1 1.7-.1 1.8,0 1.7,0 1.7,0 1.8,0 1.7,0 1.7,0 1.8,0 1.7,.1 1.7-.1 1.8,0 1.7,0 1.7,0 1.8,0 1.7,0 1.7,0 1.7,0 1.8,0 1.7,0 1.7,0 1.8,0 1.7,0 1.7,0 1.8,0 1.7,0 1.7-.1 1.8,0 1.7,0 1.7,0 1.8,.1 1.7-.1 1.7,0 1.8,0 1.7,0 1.7,0 1.8,0 1.7,0 1.7-.1 1.8,0 1.7,.1 1.7,0 1.8-.1 1.7,0 1.7,0 1.8,0 1.7,0 1.7,0 1.8,0 1.7,.1 1.7,0 1.7,0 1.8,0 1.7,0 1.7,0 1.8-.1 1.7,0 1.7,0 1.8,0 1.7,0 1.7,0 1.8,0 1.7,0 1.7,0 1.8,0 1.7,0 1.7,0 1.8,0 1.7-.1 1.7,0 1.8,0 1.7,0 1.7,0 1.8,0 1.7,0 1.7,0 1.8,0 1.7,0 1.7-.1 1.8,0 1.7,.1 1.7,0 1.8,0 1.7,0 1.7,0 1.8-.1 1.7,0 1.7,0 1.7,0 1.8,0 1.7,0 1.7,.1 1.8,0 1.7-.1 1.7,0 1.8-.1 1.7,.1 1.7-.1 1.8,0 1.7,0 1.7,0 1.8,0 1.7-.1 1.7,0 1.8,0 1.7-.1 1.7,0 1.8,0 1.7,0 1.7-.1 1.8,0 1.7,0 1.7-.1 1.8-.1 1.7,0 1.7,.1 1.8,0 1.7,0 1.7,0 1.8,0 1.7-.1 1.7-.1 1.7,0 1.8,0 1.7-.1 1.7,0 1.8,0 1.7-.1 1.7,0 1.8,0 1.7-.1 1.7,.1 1.8-.1 1.7,0 1.7-.1 1.8,0 1.7,0 1.7-.1 1.8,.1 1.7,0 1.7-.1 1.8,0 1.7,0 1.7,0 1.8-.1 1.7-.1 1.7,0 1.8,0 1.7,0 1.7,0 1.8-.1 1.7,0 1.7,0 1.8,.1 1.7,0 1.7,0 1.8-.1 1.7,0 1.7-.1 1.7-.1 1.8-.1 1.7,0 1.7-.1 1.8,0 1.7,.1 1.7-.1 1.8,.1 1.7,0 1.7,0 1.8-.1 1.7,0 1.7,0 1.8,0 1.7-.1 1.7,0 1.8,0 1.7-.1 1.7,0 1.8,0 1.7,0 1.7,0 1.8,0 1.7-.1 1.7,0 1.8,0 1.7-.1 1.7-.1 1.8,0 1.7,0 1.7,0 1.8,0 1.7,.1 1.7,0 1.8,0 1.7,.1 1.7,0 1.7-.1 1.8,.1 1.7-.2 1.7,.2 1.8,0 1.7,0 1.7,.1 1.8,0 1.7,0 1.7-.1 1.8,.1 1.7,0 1.7,.1 1.8,0 1.7,.1 1.7-.1 1.8,.1 1.7,0 1.7,.1 1.8,0 1.7,.1 1.7,0 1.8,.1 1.7-.1 1.7,0 1.8,0 1.7,.1 1.7-.1 1.8,.1 1.7,.1 1.7-.1 1.8-.1 1.7,.1 1.7,0 1.7,.2 1.8-.1 1.7,0 1.7,0 1.8,.1 1.7,.1 1.7-.1 1.8,0 1.7,0 1.7,0 1.8,0 1.7,0 1.7,0 1.8,0 1.7,.1 1.7,0 1.8,.1 1.7,0 1.7-.1 1.8,0 1.7,.1 1.7,0 1.8,0 1.7,0 1.7,0 1.8,.1 1.7-.1 1.7-4.8 1.8,.2 1.7,0 1.7,.1 1.8,.1 1.7-.1 1.7,.1 1.8,.1 1.7-.4 1.7,.1 1.7,0 1.8,0 1.7,.1 1.7,.1 1.8-.4 1.7,.2 1.7,.1 1.8-.1 1.7-.1 1.7,0 1.8,.2 1.7-.1 1.7-.1 1.8,.1 1.7,.1 1.7-.1 1.8,.1 1.7,.1 1.7-.1 1.8,.1 1.7-.2 1.7-.2 1.8,.1 1.7,.1 1.7-.1 1.8,0 1.7,0 1.7-.1 1.8,.3 1.7-.1 1.7-.1 1.8,0 1.7,.1 1.7-.2 1.7-.1 1.8,.1 1.7,0 1.7,0 1.8-.1 1.7-.1 1.7,0 1.8,0 1.7,0 1.7,0 1.8,.1 1.7,.2 1.7,.1 1.8,0 1.7-.1 1.7-.1 1.8,.1 1.7-.2 1.7-.1 1.8,.2 1.7,0 1.7,.1 1.8-.1 1.7-.1 1.7-.1 1.8,0 1.7,0 1.7,.1 1.8,.1 1.7-.1 1.7,0 1.8,.2 1.7-.1 1.7-.1 1.8,.2 1.7-.1 1.7-.1 1.7,0 1.8,.1 1.7-.1 1.7,0 1.8-.2 1.7,0 1.7-.2 1.8,.2 1.7,0 1.7,.1 1.8-.1 1.7-.1 1.7-.1 1.8,0 1.7,.2 1.7,.3 1.8-.1 1.7,.1 1.7-.2 1.8,0 1.7-.2 1.7,.2 1.8,0 1.7-.1 1.7,0 1.8,0 1.7-.3 1.7,.1 1.8,0 1.7,.1 1.7,0 1.8,.1 1.7,0 1.7,.1 1.7,0 1.8,0 1.7,.1 1.7-.1 1.8,0 1.7,0 1.7,.2 1.8-.2 1.7-.2 1.7-.1 1.8,.1 1.7-.1 1.7,0 1.8,.2 1.7,0 1.7,0 1.8,0 1.7,0 1.7,.1 1.8,0 1.7-.1 1.7,.1 1.8-.2 1.7,0 1.7,0 1.8,.2 1.7-.1 1.7,0 1.8,0 1.7,0 1.7,.1 1.8,0 1.7-.1 1.7-.1 1.8,0 1.7-.1 1.7,0 1.7,.2 1.8-.1 1.7,0 .3,0" fill="none" stroke="#f6d20f" stroke-width="1.3" stroke-linejoin="round"/>
<path d="M157.7,808.4l1.7,0 1.8,0 1.7,0 1.7,0 1.8,0 1.7,0 1.7,0 1.8,0 1.7,0 1.7-.1 1.8,0 1.7,0 1.7,0 1.8,0 1.7,0 1.7,0 1.8,0 1.7,0 1.7,0 1.7,0 1.8,0 1.7,0 1.7,0 1.8,0 1.7,0 1.7,0 1.8,0 1.7,0 1.7,0 1.8,0 1.7,0 1.7,0 1.8,0 1.7,0 1.7,0 1.8,0 1.7,0 1.7,0 1.8,0 1.7,0 1.7,0 1.8,0 1.7,0 1.7,0 1.8,0 1.7,0 1.7,0 1.8,0 1.7,0 1.7,0 1.8,0 1.7,0 1.7,0 1.7,0 1.8,0 1.7,0 1.7,0 1.8,0 1.7,0 1.7,0 1.8,0 1.7,0 1.7,0 1.8,0 1.7,0 1.7,0 1.8,0 1.7,0 1.7,0 1.8,0 1.7,0 1.7,0 1.8,0 1.7,0 1.7,0 1.8,0 1.7,0 1.7,0 1.8-.1 1.7,0 1.7,.1 1.8,0 1.7-.1 1.7,0 1.8,0 1.7,0 1.7,0 1.8,0 1.7,0 1.7,0 1.7,0 1.8,0 1.7,0 1.7,0 1.8,0 1.7,0 1.7,0 1.8,0 1.7,0 1.7,0 1.8,0 1.7,0 1.7,0 1.8,0 1.7,0 1.7,0 1.8,0 1.7,0 1.7,0 1.8,0 1.7,0 1.7,0 1.8,0 1.7,0 1.7,0 1.8,0 1.7,0 1.7,0 1.8,0 1.7,0 1.7,0 1.8,0 1.7,0 1.7,0 1.7,0 1.8,0 1.7,0 1.7,0 1.8,0 1.7,0 1.7,0 1.8,0 1.7,0 1.7,0 1.8,0 1.7,0 1.7,0 1.8,0 1.7,0 1.7,0 1.8,0 1.7,0 1.7,0 1.8,0 1.7,0 1.7,0 1.8,0 1.7,0 1.7,0 1.8-.1 1.7,0 1.7,.1 1.8,0 1.7,0 1.7,0 1.8,0 1.7-.1 1.7,0 1.8,0 1.7,0 1.7,0 1.7,0 1.8,0 1.7,0 1.7,0 1.8,0 1.7,0 1.7,0 1.8,0 1.7,0 1.7,0 1.8,0 1.7,0 1.7,0 1.8,0 1.7,0 1.7,0 1.8,0 1.7,0 1.7,0 1.8,0 1.7,0 1.7,0 1.8,0 1.7,0 1.7,0 1.8,0 1.7,0 1.7,0 1.8,0 1.7,0 1.7,0 1.8,0 1.7,0 1.7,0 1.8,0 1.7,0 1.7,0 1.7,0 1.8,0 1.7,0 1.7,0 1.8,0 1.7,0 1.7,0 1.8,0 1.7,0 1.7,0 1.8,0 1.7,0 1.7,0 1.8,0 1.7,0 1.7,0 1.8,0 1.7,0 1.7,0 1.8,0 1.7,0 1.7,0 1.8,0 1.7,0 1.7,0 1.8,0 1.7,0 1.7,0 1.8,0 1.7-.1 1.7,0 1.8,0 1.7,0 1.7,0 1.7,0 1.8,0 1.7,0 1.7,0 1.8,0 1.7,0 1.7,0 1.8,0 1.7,0 1.7,0 1.8,0 1.7,0 1.7,0 1.8,0 1.7,0 1.7,0 1.8,0 1.7,0 1.7,0 1.8,0 1.7,0 1.7,0 1.8,0 1.7,0 1.7,0 1.8,0 1.7,0 1.7,0 1.8,0 1.7,0 1.7,0 1.8,0 1.7,0 1.7,0 1.8,0 1.7,0 1.7,0 1.7,0 1.8,0 1.7,0 1.7,0 1.8,0 1.7,0 1.7,0 1.8,0 1.7,0 1.7,0 1.8,0 1.7,0 1.7,0 1.8,0 1.7,0 1.7,0 1.8,0 1.7,0 1.7,0 1.8,0 1.7,0 1.7,0 1.8,0 1.7-.1 1.7,0 1.8,0 1.7,.1 1.7,0 1.8-.1 1.7,0 1.7,.1 1.8-.1 1.7,0 1.7,0 1.7,0 1.8,0 1.7,0 1.7,0 1.8,0 1.7,0 1.7,0 1.8,0 1.7,0 1.7,0 1.8,0 1.7,0 1.7,0 1.8,0 1.7,0 1.7,0 1.8,0 1.7,0 1.7,0 1.8,0 1.7,0 1.7,0 1.8,0 1.7,0 1.7,0 1.8,0 1.7,0 1.7,0 1.8,0 1.7,0 1.7,0 1.8,0 1.7,0 1.7,0 1.8,0 1.7,0 1.7,0 1.7,0 1.8,0 1.7,0 1.7,0 1.8,0 1.7,0 1.7,0 1.8,0 1.7,0 1.7,0 1.8,0 1.7,0 1.7,0 1.8,0 1.7,0 1.7,0 1.8,0 1.7,0 1.7,0 1.8,0 1.7,0 1.7,0 1.8,0 1.7,0 1.7,0 1.8,0 1.7,0 1.7,0 1.8,0 1.7,0 1.7,0 1.8,0 1.7,0 1.7-.1 1.7,.1 1.8,0 1.7,0 1.7,0 1.8-.1 1.7,.1 1.7-.1 1.8,0 1.7,.1 1.7,0 1.8,0 1.7,0 1.7,0 1.8-.1 1.7,0 1.7,0 1.8,0 1.7,0 1.7,0 1.8,.1 1.7-.1 1.7,0 1.8,.1 1.7,0 1.7-.1 1.8,0 1.7,0 1.7,0 1.8,0 1.7,0 1.7,0 1.8,0 1.7,0 1.7,0 1.8,0 1.7,0 1.7,0 1.7,0 1.8,0 1.7,0 1.7,0 1.8,0 1.7,0 1.7,0 1.8,0 1.7,0 1.7,0 1.8,0 1.7,0 1.7,0 1.8,0 1.7,0 1.7,0 1.8,0 1.7,0 1.7,0 1.8,0 1.7,0 1.7,0 1.8,0 1.7,0 1.7,0 1.8,0 1.7,0 1.7,0 1.8,0 1.7,0 1.7,0 1.8,0 1.7,0 1.7,0 1.8-.1 1.7,0 1.7,.1 1.7-.1 1.8,0 1.7,.1 1.7-.1 1.8,.1 1.7,0 1.7-.1 1.8,0 1.7,.1 1.7,0 1.8-.1 1.7,0 1.7,0 1.8,0 1.7,0 1.7,0 1.8,0 1.7,0 1.7,0 1.8,0 1.7,0 1.7,0 1.8,0 1.7,0 1.7,0 1.8,0 1.7,0 1.7,0 1.8,0 1.7,0 1.7,0 1.8,0 1.7,0 1.7,0 1.7,0 1.8,0 1.7,0 1.7,0 1.8,0 1.7,0 1.7,0 1.8,0 1.7,0 1.7,0 1.8,0 1.7,0 1.7,0 1.8,0 1.7,0 1.7,0 1.8,0 1.7,0 1.7,0 1.8,0 1.7,0 1.7,0 1.8,0 1.7,0 1.7,0 1.8,0 1.7,0 1.7,0 1.8,0 1.7,0 1.7,0 1.8,0 1.7,0 1.7,0 1.8,0 1.7-.1 1.7,.1 1.7-.1 1.8,0 1.7,0 1.7,0 1.8,0 1.7,0 1.7,.1 1.8,0 1.7,0 1.7,0 1.8,0 1.7,0 1.7-.1 1.8,0 1.7,0 1.7,0 1.8,0 1.7,0 1.7,0 1.8,0 1.7,0 1.7,0 1.8,.1 1.7-.1 1.7,0 1.8,.1 1.7-.1 1.7,0 1.8,0 1.7,0 1.7,0 1.8,0 1.7,0 1.7,0 1.7,0 1.8,0 1.7,0 1.7,0 1.8,0 1.7,0 1.7,0 1.8,0 1.7,0 1.7,0 1.8,0 1.7,0 1.7,0 1.8,0 1.7,0 1.7,0 1.8,0 1.7,0 1.7,0 1.8,0 1.7,0 1.7,0 1.8,0 1.7,0 1.7,0 1.8,0 1.7,0 1.7,0 1.8,0 1.7,0 1.7,0 1.8,0 1.7,0 1.7,0 1.8,0 1.7,0 1.7,0 1.7,0 1.8,0 1.7,0 1.7,0 1.8,0 1.7-.1 1.7,0 1.8,.1 1.7-.1 1.7,0 1.8,0 1.7,0 1.7,0 1.8,0 1.7,0 1.7,0 1.8,0 1.7,.1 1.7-.1 1.8,0 1.7,0 1.7,0 1.8,0 1.7,0 1.7,0 1.8,0 1.7,0 1.7,0 1.8,0 1.7,0 1.7,0 1.8,.1 1.7-.1 1.7,0 1.8,0 1.7,0 1.7,0 1.7,0 1.8,0 1.7,0 1.7,0 1.8,0 1.7,0 1.7,0 1.8,0 1.7,0 1.7,0 1.8,0 1.7,0 1.7,0 1.8,0 1.7,0 1.7,0 1.8,0 1.7,0 1.7,0 1.8,0 1.7,0 1.7,0 1.8,0 1.7,0 1.7,0 1.8-.1 1.7,0 1.7,.1 1.8-.1 1.7,.1 1.7,0 1.8-.1 1.7,0 1.7,.1 1.7,0 1.8-.1 1.7,0 1.7,0 1.8,.1 1.7,0 1.7-.1 1.8,0 1.7,0 1.7,0 1.8,0 1.7,0 1.7,0 1.8,0 1.7,0 1.7,0 1.8,0 1.7,0 1.7,0 1.8,0 1.7,0 1.7,0 1.8,0 1.7,0 1.7,0 1.8,0 1.7,0 1.7,0 1.8,0 1.7,.1 1.7-.1 1.8,0 1.7,0 1.7,0 1.8,0 1.7,0 1.7,0 1.7,0 1.8,0 1.7,.1 1.7-.1 1.8,0 1.7,0 1.7,0 1.8,0 1.7,0 1.7,0 1.8,0 1.7,0 1.7,0 1.8,0 1.7,0 1.7,0 1.8,0 1.7,0 1.7,0 1.8,0 1.7-.1 1.7,0 1.8,0 1.7,.1 1.7-.1 1.8,0 1.7,.1 1.7,0 1.8,0 1.7,0 1.7,0 1.8,0 1.7,0 1.7,0 1.7,0 1.8,0 1.7,0 1.7,0 1.8,0 1.7,0 1.7,0 1.8,0 1.7,0 1.7,0 1.8,0 1.7,0 1.7-.1 1.8,.1 1.7,0 1.7-.1 1.8,0 1.7,0 1.7,0 1.8,0 1.7,0 1.7,0 1.8,.1 1.7,0 1.7-.1 1.8,0 1.7,0 1.7,0 1.8,0 1.7,0 1.7,0 1.8,.1 1.7-.1 1.7,0 1.8,0 1.7,0 1.7,0 1.7,0 1.8,0 1.7,0 1.7,0 1.8,0 1.7,0 1.7,0 1.8,0 1.7,0 1.7,0 1.8,0 1.7,0 1.7,0 1.8,0 1.7,0 1.7,0 1.8,0 1.7,0 1.7,0 1.8,0 1.7,0 1.7,0 1.8,0 1.7,0 1.7,0 1.8,0 1.7-.1 1.7,.1 1.8,0 1.7,0 1.7,0 1.8,0 1.7,0 1.7,0 1.7-.1 1.8,0 1.7,0 1.7,.1 1.8,0 1.7,0 1.7,0 1.8,0 1.7,0 1.7,0 1.8-.1 1.7,0 1.7,0 1.8,0 1.7,0 1.7,0 1.8,0 1.7,.1 1.7-.1 1.8,0 1.7,.1 1.7,0 1.8,0 1.7,0 1.7,0 1.8-.1 1.7,.1 1.7,0 1.8,0 1.7-.1 1.7,.1 1.8,0 1.7-.1 1.7,0 1.8,0 1.7,0 1.7,0 1.7,0 1.8,0 1.7,0 1.7,0 1.8,0 1.7,0 1.7,0 1.8,0 1.7,0 1.7,0 1.8,0 1.7,0 1.7,0 1.8,0 1.7,0 1.7,0 1.8,0 1.7,0 1.7,0 1.8,0 1.7,0 1.7,0 1.8,0 1.7,0 1.7,0 1.8,0 1.7,0 1.7,0 1.8,0 1.7,0 1.7,0 1.8,0 1.7,0 1.7,0 1.8,0 1.7,0 1.7,0 1.7-.1 1.8,.1 1.7-.1 1.7,.1 1.8-.1 1.7,.1 1.7,0 1.8,0 1.7,0 1.7,0 1.8,0 1.7-.1 1.7,.1 1.8,0 1.7,0 1.7,0 1.8,0 1.7,0 1.7,0 1.8,0 1.7-.1 1.7,0 1.8,0 1.7,0 1.7,0 1.8,0 1.7,0 1.7,0 1.8,0 1.7,0 1.7,0 1.8,0 1.7,0 1.7,0 1.7,.1 1.8-.1 1.7,0 1.7,0 1.8,0 1.7,0 1.7,0 1.8,0 1.7,.1 1.7,0 1.8-.1 1.7,0 1.7,0 1.8,0 1.7,0 1.7,0 1.8,0 1.7,0 1.7,0 1.8,0 1.7,0 1.7,0 1.8,0 1.7,0 1.7,0 1.8,0 1.7,0 1.7-1.4 1.8-.1 1.7,0 1.7,.1 1.8,0 1.7,0 1.7,0 1.8,0 1.7-.1 1.7,0 1.7,0 1.8,0 1.7,0 1.7,0 1.8-.1 1.7,.1 1.7-.1 1.8,0 1.7,0 1.7,0 1.8,.1 1.7,.1 1.7-.1 1.8-.1 1.7,0 1.7,0 1.8,0 1.7,0 1.7,.1 1.8-.1 1.7,0 1.7-.1 1.8,0 1.7,0 1.7,0 1.8,0 1.7,.1 1.7-.1 1.8,.1 1.7,0 1.7-.1 1.8,0 1.7-.1 1.7,0 1.7,.1 1.8,0 1.7-.1 1.7,0 1.8-.1 1.7-.1 1.7,0 1.8,0 1.7,.1 1.7,0 1.8,0 1.7,.1 1.7,.1 1.8-.1 1.7,0 1.7,0 1.8-.1 1.7,0 1.7,0 1.8,0 1.7,0 1.7,0 1.8,0 1.7-.1 1.7,.1 1.8,0 1.7,0 1.7,0 1.8,0 1.7,0 1.7-.1 1.8,.1 1.7-.1 1.7,.1 1.8-.1 1.7-.1 1.7,0 1.7,.1 1.8,0 1.7,0 1.7,0 1.8-.1 1.7,0 1.7-.1 1.8,.1 1.7,.1 1.7,0 1.8,0 1.7-.1 1.7-.1 1.8,0 1.7,0 1.7,.1 1.8,0 1.7,0 1.7,0 1.8,.1 1.7-.1 1.7,0 1.8,0 1.7-.1 1.7,0 1.8,.1 1.7-.1 1.7,0 1.8,0 1.7,0 1.7,0 1.8,0 1.7,0 1.7,0 1.7-.1 1.8,.1 1.7,0 1.7-.1 1.8-.1 1.7,0 1.7,0 1.8,.1 1.7-.1 1.7,0 1.8-.1 1.7,.1 1.7,0 1.8,0 1.7,0 1.7,0 1.8,0 1.7,0 1.7,0 1.8,0 1.7,0 1.7-.1 1.8,0 1.7,.1 1.7-.1 1.8,.1 1.7-.1 1.7,.1 1.8,0 1.7-.1 1.7,.1 1.8-.1 1.7-.1 1.7,0 1.8,.1 1.7,0 1.7,0 1.7,0 1.8-.1 1.7,.1 .3-.2" fill="none" stroke="#d96a1e" stroke-width="1.3" stroke-linejoin="round"/>
<path d="M157.7,808.5l1.7,0 1.8,0 1.7,0 1.7,0 1.8,0 1.7,0 1.7,0 1.8,0 1.7,0 1.7,0 1.8,0 1.7,0 1.7,0 1.8,0 1.7,0 1.7,0 1.8,0 1.7,0 1.7,0 1.7,0 1.8,0 1.7,0 1.7,0 1.8,0 1.7,0 1.7,0 1.8,0 1.7,0 1.7,0 1.8,0 1.7,0 1.7,0 1.8,0 1.7,0 1.7,0 1.8,0 1.7,0 1.7,0 1.8,0 1.7,0 1.7,0 1.8,0 1.7,0 1.7,0 1.8,0 1.7,0 1.7,0 1.8,0 1.7,0 1.7,0 1.8,0 1.7,0 1.7,0 1.7,0 1.8,0 1.7,0 1.7,0 1.8,0 1.7,0 1.7,0 1.8,0 1.7,0 1.7,0 1.8,0 1.7,0 1.7,0 1.8,0 1.7,0 1.7,0 1.8,0 1.7,0 1.7,0 1.8,0 1.7,0 1.7,0 1.8,0 1.7,0 1.7,0 1.8,0 1.7,0 1.7,0 1.8,0 1.7,0 1.7,0 1.8,0 1.7,0 1.7,0 1.8,0 1.7,0 1.7,0 1.7,0 1.8,0 1.7,0 1.7,0 1.8,0 1.7,0 1.7,0 1.8,0 1.7,0 1.7,0 1.8,0 1.7,0 1.7,0 1.8,0 1.7,0 1.7,0 1.8,0 1.7,0 1.7-.1 1.8,0 1.7,0 1.7,0 1.8,0 1.7,0 1.7,0 1.8,0 1.7,.1 1.7-.1 1.8,0 1.7,0 1.7,0 1.8,0 1.7,0 1.7,0 1.7,0 1.8,0 1.7,0 1.7,0 1.8,0 1.7,0 1.7,0 1.8,0 1.7,0 1.7,0 1.8,0 1.7,0 1.7,0 1.8,0 1.7,0 1.7,0 1.8,0 1.7,0 1.7,0 1.8,0 1.7,0 1.7,0 1.8,0 1.7,0 1.7,0 1.8,0 1.7,0 1.7,0 1.8,0 1.7,0 1.7,0 1.8,0 1.7,0 1.7,0 1.8,0 1.7,0 1.7,0 1.7,0 1.8,0 1.7,0 1.7,0 1.8,0 1.7,0 1.7,0 1.8,0 1.7,0 1.7,0 1.8,0 1.7,0 1.7,0 1.8,0 1.7,0 1.7,0 1.8,0 1.7,0 1.7,0 1.8,0 1.7,0 1.7,0 1.8,0 1.7,0 1.7,0 1.8,0 1.7,0 1.7,0 1.8,0 1.7,0 1.7,0 1.8,0 1.7,0 1.7,0 1.8,0 1.7,0 1.7,0 1.7,0 1.8,0 1.7,0 1.7,0 1.8,0 1.7,0 1.7,0 1.8,0 1.7,0 1.7,0 1.8,0 1.7,0 1.7,0 1.8,0 1.7,0 1.7,0 1.8,0 1.7,0 1.7,0 1.8,0 1.7,0 1.7,0 1.8,0 1.7,0 1.7,0 1.8,0 1.7,0 1.7,0 1.8,0 1.7,0 1.7,0 1.8,0 1.7,0 1.7,0 1.7,0 1.8,0 1.7,0 1.7,0 1.8,0 1.7,0 1.7,0 1.8,0 1.7,0 1.7,0 1.8,0 1.7,0 1.7,0 1.8,0 1.7,0 1.7,0 1.8,0 1.7,0 1.7,0 1.8,0 1.7,0 1.7,0 1.8,0 1.7,0 1.7,0 1.8,0 1.7,0 1.7,0 1.8,0 1.7,0 1.7,0 1.8,0 1.7,0 1.7,0 1.8,0 1.7,0 1.7,0 1.7,0 1.8,0 1.7,0 1.7,0 1.8,0 1.7,0 1.7,0 1.8,0 1.7,0 1.7,0 1.8,0 1.7,0 1.7,0 1.8,0 1.7,0 1.7,0 1.8,0 1.7,0 1.7,0 1.8,0 1.7,0 1.7,0 1.8,0 1.7,0 1.7,0 1.8,0 1.7,0 1.7,0 1.8,0 1.7,0 1.7,0 1.8,0 1.7,0 1.7,0 1.7,0 1.8,0 1.7,0 1.7,0 1.8,0 1.7,0 1.7,0 1.8,0 1.7,0 1.7,0 1.8,0 1.7,0 1.7,0 1.8,0 1.7,0 1.7,0 1.8,0 1.7,0 1.7,0 1.8,0 1.7,0 1.7,0 1.8,0 1.7,0 1.7,0 1.8,0 1.7,0 1.7,0 1.8,0 1.7,0 1.7,0 1.8-.1 1.7,0 1.7,0 1.8,0 1.7,0 1.7,0 1.7,0 1.8,0 1.7,0 1.7,0 1.8,0 1.7,0 1.7,0 1.8,0 1.7,0 1.7,0 1.8,0 1.7,0 1.7,0 1.8,0 1.7,0 1.7,0 1.8,0 1.7,0 1.7,0 1.8,0 1.7,0 1.7,0 1.8,0 1.7,0 1.7,0 1.8,0 1.7,0 1.7,0 1.8,0 1.7,0 1.7,0 1.8,0 1.7,0 1.7,0 1.7,0 1.8,0 1.7,0 1.7,0 1.8,0 1.7,0 1.7,0 1.8,0 1.7,0 1.7,0 1.8,0 1.7,0 1.7,0 1.8,0 1.7,0 1.7,0 1.8,0 1.7,0 1.7,0 1.8,0 1.7,0 1.7,0 1.8,0 1.7,0 1.7,0 1.8,0 1.7,0 1.7,0 1.8,0 1.7,0 1.7,0 1.8,0 1.7,0 1.7,0 1.8,0 1.7,0 1.7,0 1.7,0 1.8,0 1.7,0 1.7,0 1.8,0 1.7,0 1.7,0 1.8,0 1.7,0 1.7,0 1.8,0 1.7,0 1.7,0 1.8,0 1.7,0 1.7,0 1.8,0 1.7,0 1.7,0 1.8,0 1.7,0 1.7,0 1.8,0 1.7,0 1.7,0 1.8,0 1.7,0 1.7,0 1.8,0 1.7,0 1.7,0 1.8,0 1.7,0 1.7,0 1.8,0 1.7,0 1.7,0 1.7,0 1.8,0 1.7,0 1.7,0 1.8,0 1.7,0 1.7,0 1.8,0 1.7,0 1.7,0 1.8,0 1.7,0 1.7,0 1.8,0 1.7,0 1.7,0 1.8,0 1.7,0 1.7,0 1.8,0 1.7,0 1.7,0 1.8,0 1.7,0 1.7,0 1.8,0 1.7,0 1.7,0 1.8,0 1.7,0 1.7,0 1.8,0 1.7,0 1.7,0 1.7,0 1.8,0 1.7,0 1.7,0 1.8,0 1.7,0 1.7,0 1.8,0 1.7,0 1.7,0 1.8,0 1.7,0 1.7,0 1.8,0 1.7,0 1.7,0 1.8,0 1.7,0 1.7,0 1.8,0 1.7,0 1.7,0 1.8,0 1.7,0 1.7,0 1.8,0 1.7,0 1.7,0 1.8,0 1.7,0 1.7,0 1.8,0 1.7,0 1.7,0 1.8,0 1.7,0 1.7,0 1.7,0 1.8,0 1.7,0 1.7,0 1.8,0 1.7,0 1.7,0 1.8,0 1.7,0 1.7,0 1.8,0 1.7,0 1.7,0 1.8,0 1.7,0 1.7,0 1.8,0 1.7,0 1.7,0 1.8,0 1.7,0 1.7,0 1.8,0 1.7,0 1.7,0 1.8,0 1.7,0 1.7,0 1.8,0 1.7-.1 1.7,.1 1.8-.1 1.7,0 1.7,0 1.7,.1 1.8,0 1.7-.1 1.7,.1 1.8-.1 1.7,0 1.7,0 1.8,.1 1.7-.1 1.7,0 1.8,0 1.7,0 1.7,0 1.8,0 1.7,0 1.7,0 1.8,0 1.7,0 1.7,0 1.8,0 1.7,0 1.7,0 1.8,0 1.7,0 1.7,0 1.8,0 1.7,0 1.7,0 1.8,0 1.7,0 1.7,0 1.8,0 1.7,0 1.7,0 1.8,0 1.7,0 1.7,0 1.7,0 1.8,0 1.7,0 1.7,0 1.8,0 1.7,0 1.7,0 1.8,0 1.7,0 1.7,0 1.8,0 1.7,0 1.7,0 1.8,0 1.7,0 1.7,0 1.8,0 1.7,0 1.7,0 1.8,0 1.7,0 1.7,0 1.8,0 1.7,0 1.7,0 1.8,0 1.7,0 1.7,0 1.8,0 1.7,0 1.7,0 1.8,0 1.7,0 1.7,0 1.8,0 1.7,0 1.7,0 1.7,0 1.8,0 1.7,0 1.7,0 1.8,0 1.7,0 1.7,0 1.8,0 1.7,0 1.7,0 1.8,0 1.7,0 1.7,0 1.8,0 1.7,0 1.7,0 1.8,0 1.7,0 1.7,0 1.8,0 1.7,0 1.7,0 1.8,0 1.7,0 1.7,0 1.8,0 1.7,0 1.7,0 1.8,0 1.7,0 1.7,0 1.8,0 1.7,0 1.7,0 1.7,0 1.8,0 1.7,0 1.7,0 1.8,0 1.7,0 1.7,0 1.8,0 1.7,0 1.7,0 1.8,0 1.7,0 1.7,0 1.8,0 1.7,0 1.7,0 1.8,0 1.7,0 1.7,0 1.8,0 1.7,0 1.7,0 1.8,0 1.7,0 1.7,0 1.8,0 1.7,0 1.7,0 1.8,0 1.7,0 1.7,0 1.8,0 1.7,0 1.7,0 1.8,0 1.7,0 1.7,0 1.7,0 1.8,0 1.7,0 1.7,0 1.8,0 1.7,0 1.7,0 1.8,0 1.7,0 1.7,0 1.8,0 1.7,0 1.7,0 1.8,0 1.7,0 1.7,0 1.8,0 1.7,0 1.7,0 1.8,0 1.7,0 1.7,0 1.8,0 1.7,0 1.7,0 1.8,0 1.7,0 1.7,0 1.8,0 1.7,0 1.7,0 1.8,0 1.7,0 1.7,0 1.7,0 1.8,0 1.7,0 1.7,0 1.8,0 1.7,0 1.7,0 1.8,0 1.7,0 1.7,0 1.8,0 1.7,0 1.7,0 1.8,0 1.7,0 1.7-.1 1.8,0 1.7,0 1.7,.1 1.8,0 1.7,0 1.7,0 1.8,0 1.7,0 1.7,0 1.8,0 1.7-.1 1.7,0 1.8,0 1.7,.1 1.7,0 1.8,0 1.7,0 1.7-.1 1.8,0 1.7,0 1.7,0 1.7,0 1.8,.1 1.7,0 1.7-.1 1.8,0 1.7,0 1.7,.1 1.8,0 1.7-.1 1.7,0 1.8,.1 1.7,0 1.7-.1 1.8,0 1.7,0 1.7,.1 1.8,0 1.7,0 1.7,0 1.8-.1 1.7,.1 1.7-.1 1.8,0 1.7,0 1.7,0 1.8,0 1.7,0 1.7,.1 1.8-.1 1.7,0 1.7,0 1.8,0 1.7,0 1.7,0 1.7,0 1.8,0 1.7,0 1.7,0 1.8,0 1.7,0 1.7,0 1.8,0 1.7,0 1.7,0 1.8,0 1.7,0 1.7,0 1.8,0 1.7,0 1.7,0 1.8,0 1.7,0 1.7,0 1.8,0 1.7,0 1.7,0 1.8,0 1.7,0 1.7,0 1.8,0 1.7,0 1.7,0 1.8,0 1.7,0 1.7,0 1.8,0 1.7,0 1.7,0 1.8,0 1.7,0 1.7,0 1.7,0 1.8,0 1.7,0 1.7,0 1.8,0 1.7,0 1.7,0 1.8,0 1.7,0 1.7,0 1.8,0 1.7,0 1.7,0 1.8,0 1.7,0 1.7,0 1.8,0 1.7,0 1.7,0 1.8,0 1.7,0 1.7,0 1.8,0 1.7,0 1.7,0 1.8,0 1.7,0 1.7,0 1.8,0 1.7,0 1.7,0 1.8,0 1.7,0 1.7,0 1.8,0 1.7,0 1.7,0 1.7,0 1.8,0 1.7,0 1.7,0 1.8,0 1.7,0 1.7,0 1.8,0 1.7,0 1.7,0 1.8,0 1.7,0 1.7,0 1.8,0 1.7,0 1.7,0 1.8,0 1.7,0 1.7,0 1.8,0 1.7,0 1.7,0 1.8,0 1.7,0 1.7,0 1.8,0 1.7,0 1.7,0 1.8,0 1.7,0 1.7,0 1.8,0 1.7,0 1.7,0 1.7,0 1.8,0 1.7,0 1.7,0 1.8,0 1.7,0 1.7,0 1.8,0 1.7,0 1.7,0 1.8,0 1.7,0 1.7,0 1.8,0 1.7,0 1.7,0 1.8,0 1.7,0 1.7,0 1.8,0 1.7,0 1.7,0 1.8,0 1.7,0 1.7,0 1.8,0 1.7,0 1.7-.3 1.8,0 1.7,0 1.7,0 1.8,0 1.7,0 1.7,0 1.8,0 1.7,0 1.7,0 1.7,0 1.8,0 1.7,0 1.7,0 1.8-.1 1.7,.1 1.7-.1 1.8,.1 1.7,0 1.7,0 1.8,0 1.7,0 1.7,0 1.8,0 1.7,0 1.7,0 1.8,0 1.7-.1 1.7,0 1.8,.1 1.7,0 1.7,0 1.8-.1 1.7,0 1.7,0 1.8,0 1.7,0 1.7,0 1.8,0 1.7,0 1.7,0 1.8,0 1.7,0 1.7,0 1.7,0 1.8,0 1.7,0 1.7,0 1.8,0 1.7,0 1.7,0 1.8,0 1.7,0 1.7,0 1.8,0 1.7,0 1.7,0 1.8,0 1.7,0 1.7,0 1.8,0 1.7,0 1.7,0 1.8,0 1.7,0 1.7,0 1.8,0 1.7,0 1.7,0 1.8,0 1.7,0 1.7,0 1.8,0 1.7,0 1.7,0 1.8,0 1.7,0 1.7,0 1.8,0 1.7,0 1.7,0 1.7-.1 1.8,.1 1.7,0 1.7-.1 1.8,0 1.7,.1 1.7-.1 1.8,0 1.7,0 1.7,0 1.8,0 1.7,0 1.7,0 1.8,0 1.7,0 1.7,0 1.8,0 1.7,0 1.7,0 1.8,0 1.7,0 1.7,0 1.8,0 1.7,0 1.7,0 1.8,0 1.7,0 1.7,0 1.8,0 1.7,0 1.7,0 1.8,0 1.7,0 1.7,0 1.7,0 1.8,0 1.7-.1 1.7,0 1.8,.1 1.7,0 1.7-.1 1.8,.1 1.7,0 1.7,0 1.8,0 1.7,0 1.7,0 1.8,0 1.7,0 1.7,0 1.8,0 1.7,0 1.7,0 1.8,0 1.7,0 1.7,0 1.8,0 1.7-.1 1.7,0 1.8,0 1.7,0 1.7,0 1.8,0 1.7,0 1.7,0 1.8,0 1.7,0 1.7,0 1.8,0 1.7,0 1.7,0 1.7,0 1.8,0 1.7,0 .3,0" fill="none" stroke="#4a88c0" stroke-width="1.3" stroke-linejoin="round"/>
<text x="134.0" y="815.8" font-size="20.3" fill="#959fac" text-anchor="end" font-weight="normal" textLength="58.0" lengthAdjust="spacingAndGlyphs" stroke="#959fac" stroke-width="0.25">$0.00</text>
<text x="134.0" y="745.5" font-size="20.3" fill="#959fac" text-anchor="end" font-weight="normal" textLength="58.5" lengthAdjust="spacingAndGlyphs" stroke="#959fac" stroke-width="0.25">$5.0B</text>
<text x="134.0" y="675.2" font-size="20.3" fill="#959fac" text-anchor="end" font-weight="normal" textLength="68.5" lengthAdjust="spacingAndGlyphs" stroke="#959fac" stroke-width="0.25">$10.0B</text>
<text x="134.0" y="604.9" font-size="20.3" fill="#959fac" text-anchor="end" font-weight="normal" textLength="68.5" lengthAdjust="spacingAndGlyphs" stroke="#959fac" stroke-width="0.25">$15.0B</text>
<text x="134.0" y="534.6" font-size="20.3" fill="#959fac" text-anchor="end" font-weight="normal" textLength="69.0" lengthAdjust="spacingAndGlyphs" stroke="#959fac" stroke-width="0.25">$20.0B</text>
<text x="134.0" y="464.3" font-size="20.3" fill="#959fac" text-anchor="end" font-weight="normal" textLength="69.0" lengthAdjust="spacingAndGlyphs" stroke="#959fac" stroke-width="0.25">$25.0B</text>
<text x="134.0" y="394.0" font-size="20.3" fill="#959fac" text-anchor="end" font-weight="normal" textLength="69.0" lengthAdjust="spacingAndGlyphs" stroke="#959fac" stroke-width="0.25">$30.0B</text>
<text x="204.5" y="853.0" font-size="20.3" fill="#959fac" text-anchor="middle" font-weight="normal" textLength="61.5" lengthAdjust="spacingAndGlyphs" stroke="#959fac" stroke-width="0.25">4/1/23</text>
<text x="363.0" y="853.0" font-size="20.3" fill="#959fac" text-anchor="middle" font-weight="normal" textLength="59.0" lengthAdjust="spacingAndGlyphs" stroke="#959fac" stroke-width="0.25">7/1/23</text>
<text x="522.1" y="853.0" font-size="20.3" fill="#959fac" text-anchor="middle" font-weight="normal" textLength="70.4" lengthAdjust="spacingAndGlyphs" stroke="#959fac" stroke-width="0.25">10/1/23</text>
<text x="681.0" y="853.0" font-size="20.3" fill="#959fac" text-anchor="middle" font-weight="normal" textLength="57.2" lengthAdjust="spacingAndGlyphs" stroke="#959fac" stroke-width="0.25">1/1/24</text>
<text x="838.6" y="853.0" font-size="20.3" fill="#959fac" text-anchor="middle" font-weight="normal" textLength="60.6" lengthAdjust="spacingAndGlyphs" stroke="#959fac" stroke-width="0.25">4/1/24</text>
<text x="996.1" y="853.0" font-size="20.3" fill="#959fac" text-anchor="middle" font-weight="normal" textLength="59.3" lengthAdjust="spacingAndGlyphs" stroke="#959fac" stroke-width="0.25">7/1/24</text>
<text x="1155.4" y="853.0" font-size="20.3" fill="#959fac" text-anchor="middle" font-weight="normal" textLength="70.4" lengthAdjust="spacingAndGlyphs" stroke="#959fac" stroke-width="0.25">10/1/24</text>
<text x="1315.5" y="853.0" font-size="20.3" fill="#959fac" text-anchor="middle" font-weight="normal" textLength="56.8" lengthAdjust="spacingAndGlyphs" stroke="#959fac" stroke-width="0.25">1/1/25</text>
<text x="1471.5" y="853.0" font-size="20.3" fill="#959fac" text-anchor="middle" font-weight="normal" textLength="61.1" lengthAdjust="spacingAndGlyphs" stroke="#959fac" stroke-width="0.25">4/1/25</text>
<text x="1628.8" y="853.0" font-size="20.3" fill="#959fac" text-anchor="middle" font-weight="normal" textLength="57.7" lengthAdjust="spacingAndGlyphs" stroke="#959fac" stroke-width="0.25">7/1/25</text>
<text x="1788.2" y="853.0" font-size="20.3" fill="#959fac" text-anchor="middle" font-weight="normal" textLength="69.1" lengthAdjust="spacingAndGlyphs" stroke="#959fac" stroke-width="0.25">10/1/25</text>
<text x="1947.1" y="853.0" font-size="20.3" fill="#959fac" text-anchor="middle" font-weight="normal" textLength="56.8" lengthAdjust="spacingAndGlyphs" stroke="#959fac" stroke-width="0.25">1/1/26</text>
<rect x="1294.7" y="874.3" width="756.5" height="60.2" fill="#eaf1fc"/>
<line x1="158.5" y1="874.3" x2="2052" y2="874.3" stroke="#d3dce8" stroke-width="1.4"/>
<line x1="244.3" y1="874.3" x2="244.3" y2="934.5" stroke="#dfe5ec" stroke-width="1.2"/>
<line x1="496.5" y1="874.3" x2="496.5" y2="934.5" stroke="#dfe5ec" stroke-width="1.2"/>
<line x1="748.5" y1="874.3" x2="748.5" y2="934.5" stroke="#dfe5ec" stroke-width="1.2"/>
<line x1="1000.5" y1="874.3" x2="1000.5" y2="934.5" stroke="#dfe5ec" stroke-width="1.2"/>
<line x1="1252.5" y1="874.3" x2="1252.5" y2="934.5" stroke="#dfe5ec" stroke-width="1.2"/>
<line x1="1504.3" y1="874.3" x2="1504.3" y2="934.5" stroke="#dfe5ec" stroke-width="1.2"/>
<line x1="1758.7" y1="874.3" x2="1758.7" y2="934.5" stroke="#dfe5ec" stroke-width="1.2"/>
<line x1="2010.6" y1="874.3" x2="2010.6" y2="934.5" stroke="#dfe5ec" stroke-width="1.2"/>
<polygon points="176,934.1 808,933.3 813,929.2 872,929.0 878,930.3 1000,929.3 1050,929.3 1130,928.9 1180,930 1290,929.8 1500,930.2 1700,928.3 1745,928.5 1758,930.7 1805,926.8 1840,925.2 1848,922.9 1880,920.6 1900,912.8 1910,905 1918,897.3 1940,893.4 1950,891.8 1962,883 1972,880.2 1985,881 1993,885.6 2006,881 2013,881.7 2023,887.2 2045,891 2045,934.5 176,934.5" fill="url(#navg)"/>
<polyline points="176,934.1 808,933.3 813,929.2 872,929.0 878,930.3 1000,929.3 1050,929.3 1130,928.9 1180,930 1290,929.8 1500,930.2 1700,928.3 1745,928.5 1758,930.7 1805,926.8 1840,925.2 1848,922.9 1880,920.6 1900,912.8 1910,905 1918,897.3 1940,893.4 1950,891.8 1962,883 1972,880.2 1985,881 1993,885.6 2006,881 2013,881.7 2023,887.2 2045,891" fill="none" stroke="#98b8ea" stroke-width="1.3"/>
<text x="249.6" y="928.9" font-size="16.5" fill="#555555" text-anchor="start" font-weight="normal" textLength="38.0" lengthAdjust="spacingAndGlyphs" >2019</text>
<text x="501.8" y="928.9" font-size="16.5" fill="#555555" text-anchor="start" font-weight="normal" textLength="38.0" lengthAdjust="spacingAndGlyphs" >2020</text>
<text x="753.8" y="928.9" font-size="16.5" fill="#555555" text-anchor="start" font-weight="normal" textLength="38.0" lengthAdjust="spacingAndGlyphs" >2021</text>
<text x="1005.8" y="928.9" font-size="16.5" fill="#555555" text-anchor="start" font-weight="normal" textLength="38.0" lengthAdjust="spacingAndGlyphs" >2022</text>
<text x="1257.8" y="928.9" font-size="16.5" fill="#555555" text-anchor="start" font-weight="normal" textLength="38.0" lengthAdjust="spacingAndGlyphs" >2023</text>
<text x="1509.6" y="928.9" font-size="16.5" fill="#555555" text-anchor="start" font-weight="normal" textLength="38.0" lengthAdjust="spacingAndGlyphs" >2024</text>
<text x="1764.0" y="928.9" font-size="16.5" fill="#555555" text-anchor="start" font-weight="normal" textLength="38.0" lengthAdjust="spacingAndGlyphs" >2025</text>
<text x="2015.9" y="928.9" font-size="16.5" fill="#555555" text-anchor="start" font-weight="normal" textLength="30.0" lengthAdjust="spacingAndGlyphs" >2...</text>
<rect x="1287.7" y="890.3" width="14" height="27.5" fill="#ffffff" fill-opacity="0.55" stroke="#a9c1e6" stroke-width="1.4"/>
<line x1="1293.0" y1="897" x2="1293.0" y2="911" stroke="#8aa5cf" stroke-width="1.1"/>
<line x1="1296.4" y1="897" x2="1296.4" y2="911" stroke="#8aa5cf" stroke-width="1.1"/>
<rect x="2043.5" y="890.3" width="14" height="27.5" fill="#ffffff" fill-opacity="0.55" stroke="#a9c1e6" stroke-width="1.4"/>
<line x1="2048.8" y1="897" x2="2048.8" y2="911" stroke="#8aa5cf" stroke-width="1.1"/>
<line x1="2052.2" y1="897" x2="2052.2" y2="911" stroke="#8aa5cf" stroke-width="1.1"/>
<circle cx="132.0" cy="972.9" r="8.8" fill="#0c3f7c"/>
<text x="153.1" y="980.8" font-size="18.6" fill="#333333" text-anchor="start" font-weight="normal" textLength="156.7" lengthAdjust="spacingAndGlyphs" >US Treasury Debt</text>
<circle cx="372.0" cy="972.9" r="8.8" fill="#e0a626"/>
<text x="393.1" y="980.8" font-size="18.6" fill="#333333" text-anchor="start" font-weight="normal" textLength="117.4" lengthAdjust="spacingAndGlyphs" >Commodities</text>
<circle cx="611.8" cy="972.9" r="8.8" fill="#2a5cf2"/>
<text x="632.9" y="980.8" font-size="18.6" fill="#333333" text-anchor="start" font-weight="normal" textLength="120.8" lengthAdjust="spacingAndGlyphs" >Private Credit</text>
<circle cx="851.8" cy="972.9" r="8.8" fill="#4fcfec"/>
<text x="872.9" y="980.8" font-size="18.6" fill="#333333" text-anchor="start" font-weight="normal" textLength="167.4" lengthAdjust="spacingAndGlyphs" >Institutional Alter...</text>
<circle cx="1092.0" cy="972.9" r="8.8" fill="#8a2be2"/>
<text x="1113.1" y="980.8" font-size="18.6" fill="#333333" text-anchor="start" font-weight="normal" textLength="151.5" lengthAdjust="spacingAndGlyphs" >Corporate Bonds</text>
<circle cx="1331.8" cy="972.9" r="8.8" fill="#a9bdd8"/>
<text x="1352.9" y="980.8" font-size="18.6" fill="#333333" text-anchor="start" font-weight="normal" textLength="169.5" lengthAdjust="spacingAndGlyphs" >non-US Governm...</text>
<circle cx="1572.0" cy="972.9" r="8.8" fill="#f24a12"/>
<text x="1593.1" y="980.8" font-size="18.6" fill="#333333" text-anchor="start" font-weight="normal" textLength="115.3" lengthAdjust="spacingAndGlyphs" >Public Equity</text>
<circle cx="1811.7" cy="972.9" r="8.8" fill="#f8d20f"/>
<text x="1832.8" y="980.8" font-size="18.6" fill="#333333" text-anchor="start" font-weight="normal" textLength="123.0" lengthAdjust="spacingAndGlyphs" >Private Equity</text>
<circle cx="132.0" cy="1002.0" r="8.8" fill="#d96a1e"/>
<text x="153.1" y="1009.0" font-size="18.6" fill="#333333" text-anchor="start" font-weight="normal" textLength="99.0" lengthAdjust="spacingAndGlyphs" >Real Estate</text>
<circle cx="372.0" cy="1002.0" r="8.8" fill="#4a88c0"/>
<text x="393.1" y="1009.0" font-size="18.6" fill="#333333" text-anchor="start" font-weight="normal" textLength="164.4" lengthAdjust="spacingAndGlyphs" >Actively-Manage...</text>
<text x="2193.8" y="117.2" font-size="44" fill="#0a0a0a" text-anchor="start" font-weight="normal" textLength="320.0" lengthAdjust="spacingAndGlyphs" stroke="#0a0a0a" stroke-width="0.5">Total RWA Value</text>
<rect x="3103" y="67.8" width="494.8" height="69.2" rx="16" fill="#eef3fc"/>
<rect x="3109.4" y="75.2" width="179.2" height="54.9" rx="12" fill="#ffffff" stroke="#a3a9b3" stroke-width="1.5" filter="url(#bsh)"/>
<text x="3134.1" y="111.2" font-size="25" fill="#333333" text-anchor="start" font-weight="normal" textLength="131.4" lengthAdjust="spacingAndGlyphs" stroke="#333333" stroke-width="0.45">Distributed</text>
<text x="3325.3" y="111.2" font-size="25" fill="#6b7280" text-anchor="start" font-weight="normal" textLength="153.7" lengthAdjust="spacingAndGlyphs" stroke="#6b7280" stroke-width="0.4">Represented</text>
<text x="3537.0" y="111.2" font-size="25" fill="#6b7280" text-anchor="start" font-weight="normal" textLength="29.8" lengthAdjust="spacingAndGlyphs" stroke="#6b7280" stroke-width="0.4">All</text>
<path d="M2951.0,647.3 L2951.00,405.30 Q2951.00,400.30 2956.00,400.35 A247.0,247.0 0 0 1 3087.90,852.89 Q3083.71,855.62 3081.03,851.40 Z" fill="#6e8db0" stroke="#ffffff" stroke-width="2.6" stroke-linejoin="round"/>
<path d="M2951.0,647.3 L3081.03,851.40 Q3083.71,855.62 3079.47,858.26 A247.0,247.0 0 0 1 2765.61,810.51 Q2762.34,806.73 2766.16,803.50 Z" fill="#e6c983" stroke="#ffffff" stroke-width="2.6" stroke-linejoin="round"/>
<path d="M2951.0,647.3 L2766.16,803.50 Q2762.34,806.73 2759.15,802.88 A247.0,247.0 0 0 1 2704.05,652.30 Q2704.00,647.30 2709.00,647.30 Z" fill="#7fa1f7" stroke="#ffffff" stroke-width="2.6" stroke-linejoin="round"/>
<path d="M2951.0,647.3 L2709.00,647.30 Q2704.00,647.30 2704.05,642.30 A247.0,247.0 0 0 1 2734.22,528.91 Q2736.66,524.55 2741.00,527.03 Z" fill="#97def2" stroke="#ffffff" stroke-width="2.6" stroke-linejoin="round"/>
<path d="M2951.0,647.3 L2741.00,527.03 Q2736.66,524.55 2739.19,520.23 A247.0,247.0 0 0 1 2802.49,449.93 Q2806.52,446.97 2809.44,451.02 Z" fill="#b784ee" stroke="#ffffff" stroke-width="2.6" stroke-linejoin="round"/>
<path d="M2951.0,647.3 L2809.44,451.02 Q2806.52,446.97 2810.60,444.08 A247.0,247.0 0 0 1 2856.24,419.20 Q2860.88,417.33 2862.70,421.98 Z" fill="#ccd8e8" stroke="#ffffff" stroke-width="2.6" stroke-linejoin="round"/>
<path d="M2951.0,647.3 L2862.70,421.98 Q2860.88,417.33 2865.55,415.55 A247.0,247.0 0 0 1 2912.53,403.31 Q2917.48,402.59 2918.16,407.54 Z" fill="#fb906c" stroke="#ffffff" stroke-width="2.6" stroke-linejoin="round"/>
<path d="M2951.0,647.3 L2918.16,407.54 Q2917.48,402.59 2922.44,401.96 A247.0,247.0 0 0 1 2930.07,401.19 Q2935.06,400.81 2935.38,405.80 Z" fill="#fbe47a" stroke="#ffffff" stroke-width="2.6" stroke-linejoin="round"/>
<path d="M2951.0,647.3 L2935.38,405.80 Q2935.06,400.81 2940.05,400.54 A247.0,247.0 0 0 1 2942.55,400.44 Q2947.55,400.32 2947.62,405.32 Z" fill="#dfa27b" stroke="#ffffff" stroke-width="2.6" stroke-linejoin="round"/>
<path d="M2951.0,647.3 L2947.58,402.05 Q2947.55,400.32 2949.28,400.31 A247.0,247.0 0 0 1 2949.28,400.31 Q2951.00,400.30 2951.00,402.02 Z" fill="#dbe6f2" stroke="#ffffff" stroke-width="2.6" stroke-linejoin="round"/>
<polyline points="3189,577.3 3253,559.4 3262.8,559.7" fill="none" stroke="#6e8db0" stroke-width="1.7"/>
<polyline points="2848.4,872.8 2821.9,931.25 2809.4,931.25" fill="none" stroke="#e6c983" stroke-width="1.7"/>
<polyline points="2719.7,734 2706.7,738.2 2669.3,802.3" fill="none" stroke="#7fa1f7" stroke-width="1.7"/>
<polyline points="2711.5,584.4 2698.5,581.1 2634.6,711.5" fill="none" stroke="#97def2" stroke-width="1.7"/>
<polyline points="2767.1,481.9 2757.1,473.3 2629.1,622.2" fill="none" stroke="#b784ee" stroke-width="1.7"/>
<polyline points="2830.9,429.2 2825.7,419.4 2649.3,531.8" fill="none" stroke="#ccd8e8" stroke-width="1.7"/>
<polyline points="2887.1,406.9 2884.8,395.2 2703.9,442.1" fill="none" stroke="#fb906c" stroke-width="1.7"/>
<polyline points="2927.3,400.8 2921.5,351.6 2834.7,351.6" fill="none" stroke="#fbe07a" stroke-width="1.7"/>
<text x="3286.7" y="550.8" font-size="25.5" fill="#94a3b8" text-anchor="start" font-weight="normal" textLength="215.6" lengthAdjust="spacingAndGlyphs" >US Treasury Debt</text>
<text x="3286.7" y="589.0" font-size="28.5" fill="#334155" text-anchor="start" font-weight="normal" textLength="94.5" lengthAdjust="spacingAndGlyphs" >$10.8B</text>
<text x="2787.5" y="922.8" font-size="25.5" fill="#94a3b8" text-anchor="end" font-weight="normal" textLength="161.0" lengthAdjust="spacingAndGlyphs" >Commodities</text>
<text x="2787.5" y="958.8" font-size="28.5" fill="#334155" text-anchor="end" font-weight="normal" textLength="81.0" lengthAdjust="spacingAndGlyphs" >$6.0B</text>
<text x="2646.2" y="796.2" font-size="25.5" fill="#94a3b8" text-anchor="end" font-weight="normal" textLength="167.0" lengthAdjust="spacingAndGlyphs" >Private Credit</text>
<text x="2646.2" y="832.2" font-size="28.5" fill="#334155" text-anchor="end" font-weight="normal" textLength="81.0" lengthAdjust="spacingAndGlyphs" >$3.0B</text>
<text x="2611.6" y="704.2" font-size="25.5" fill="#94a3b8" text-anchor="end" font-weight="normal" textLength="370.0" lengthAdjust="spacingAndGlyphs" >Institutional Alternative Funds</text>
<text x="2611.6" y="741.8" font-size="28.5" fill="#334155" text-anchor="end" font-weight="normal" textLength="81.0" lengthAdjust="spacingAndGlyphs" >$2.2B</text>
<text x="2604.4" y="615.6" font-size="25.5" fill="#94a3b8" text-anchor="end" font-weight="normal" textLength="209.0" lengthAdjust="spacingAndGlyphs" >Corporate Bonds</text>
<text x="2604.4" y="651.3" font-size="28.5" fill="#334155" text-anchor="end" font-weight="normal" textLength="76.6" lengthAdjust="spacingAndGlyphs" >$1.8B</text>
<text x="2624.8" y="524.5" font-size="25.5" fill="#94a3b8" text-anchor="end" font-weight="normal" textLength="321.0" lengthAdjust="spacingAndGlyphs" >non-US Government Debt</text>
<text x="2624.8" y="562.0" font-size="28.5" fill="#334155" text-anchor="end" font-weight="normal" textLength="76.0" lengthAdjust="spacingAndGlyphs" >$1.0B</text>
<text x="2679.5" y="435.3" font-size="25.5" fill="#94a3b8" text-anchor="end" font-weight="normal" textLength="159.0" lengthAdjust="spacingAndGlyphs" >Public Equity</text>
<text x="2679.5" y="471.3" font-size="28.5" fill="#334155" text-anchor="end" font-weight="normal" textLength="76.0" lengthAdjust="spacingAndGlyphs" >$1.0B</text>
<text x="2810.6" y="344.0" font-size="25.5" fill="#94a3b8" text-anchor="end" font-weight="normal" textLength="169.2" lengthAdjust="spacingAndGlyphs" >Private Equity</text>
<text x="2810.6" y="382.0" font-size="28.5" fill="#334155" text-anchor="end" font-weight="normal" textLength="125.8" lengthAdjust="spacingAndGlyphs" >$308.6M</text>
<g fill="none" stroke="#d0d0d0" stroke-width="2.7"><circle cx="3404.4" cy="972.7" r="23.8"/><ellipse cx="3404.4" cy="972.7" rx="9.5" ry="23.8"/><line x1="3404.4" y1="948.9" x2="3404.4" y2="996.5"/><line x1="3380.6" y1="972.7" x2="3428.2" y2="972.7"/><path d="M3387.5,959.8 Q3404.4,969 3421.3,959.8"/><path d="M3387.5,985.6 Q3404.4,976.4 3421.3,985.6"/></g>
<text x="3438.0" y="991.4" font-size="70" fill="#d0d0d0" text-anchor="start" font-weight="normal" textLength="108.5" lengthAdjust="spacingAndGlyphs" stroke="#d0d0d0" stroke-width="1.2">rwa</text>
<text x="3551.6" y="991.4" font-size="29" fill="#d0d0d0" text-anchor="start" font-weight="normal" textLength="47.1" lengthAdjust="spacingAndGlyphs" >.xyz</text>
<text x="3387.4" y="1035.0" font-size="25" fill="#c4c4c4" text-anchor="start" font-weight="normal" textLength="209.6" lengthAdjust="spacingAndGlyphs" >as of 03/03/2026</text>
</svg></body></html>
